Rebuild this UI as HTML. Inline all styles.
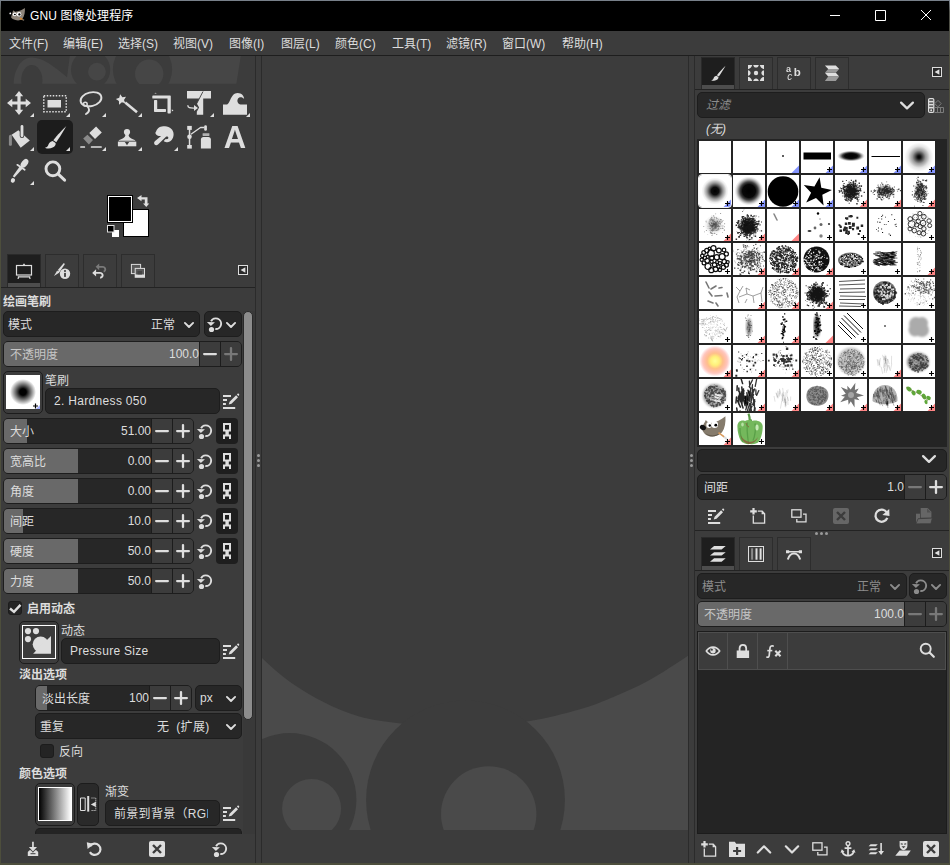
<!DOCTYPE html><html lang="zh-CN"><head><meta charset="utf-8"><title>GNU 图像处理程序</title><style>
html,body{margin:0;padding:0}
body{width:950px;height:865px;position:relative;overflow:hidden;background:#3c3c3c;
font-family:"Liberation Sans","Noto Sans CJK SC",sans-serif;font-size:12px;color:#dddddd}
div{position:absolute;box-sizing:border-box}
.t{height:20px;line-height:20px;white-space:nowrap}
.b{font-weight:bold}
.f{background:#272727;border:1px solid #1d1d1d;border-radius:5px}
.btn{background:#3c3c3c;border-left:1px solid #1c1c1c}
svg{display:block;overflow:visible}
</style></head><body>
<div style="left:0px;top:0px;width:950px;height:865px;background:linear-gradient(#78808a,#50514a 12px,#4d4e3c 60px)"></div>
<div style="left:0px;top:0px;width:950px;height:1px;background:#78808a"></div>
<div style="left:1px;top:1px;width:948px;height:862px;background:#3c3c3c"></div>
<div style="left:1px;top:1px;width:948px;height:30px;background:#000"></div>
<svg style="position:absolute;left:9px;top:7px" width="17" height="14" viewBox="0 0 17 14" fill="#dedede" stroke="none" color="#dedede" ><path d="M4.200 3.200C5.500 4.600 6.600 4.900 7.800 4.500 10.500 4 13.500 3 15.800 1 16.200 4.500 15.600 9 13.300 12 11.500 13.600 8.500 13.800 6.500 13 4.500 12.500 2.800 11.500 2.100 10.200 2.800 8 3.500 5.500 4.200 3.200z" fill="#8f857a"/><circle cx="1.300" cy="6.400" r=".9" fill="#fff"/><circle cx="5.700" cy="7.300" r="1.900" fill="#fff"/><circle cx="10" cy="7.200" r="2.300" fill="#fff"/><ellipse cx="5.900" cy="7.500" rx="1" ry=".8" fill="#000"/><ellipse cx="10.400" cy="7.400" rx="1.100" ry="1.200" fill="#000"/><path d="M11 11.200l2.600 1.500" stroke="#e0892a" stroke-width="1.400"/><path d="M13.400 12.500l1.700 .8" stroke="#8f857a" stroke-width="1.200"/></svg>
<div class="t" style="left:30px;top:6px;color:#fff;letter-spacing:.15px">GNU 图像处理程序</div>
<svg style="position:absolute;left:825px;top:5px" width="115" height="22" viewBox="0 0 115 22" fill="none" stroke="#fff" stroke-width="1"><path d="M5 10.5h10M50.5 5.5h10v10h-10zM96 5l10 10M106 5l-10 10"/></svg>
<div class="t" style="left:9px;top:34px;">文件(F)</div>
<div class="t" style="left:63px;top:34px;">编辑(E)</div>
<div class="t" style="left:118px;top:34px;">选择(S)</div>
<div class="t" style="left:173px;top:34px;">视图(V)</div>
<div class="t" style="left:229px;top:34px;">图像(I)</div>
<div class="t" style="left:281px;top:34px;">图层(L)</div>
<div class="t" style="left:335px;top:34px;">颜色(C)</div>
<div class="t" style="left:392px;top:34px;">工具(T)</div>
<div class="t" style="left:446px;top:34px;">滤镜(R)</div>
<div class="t" style="left:502px;top:34px;">窗口(W)</div>
<div class="t" style="left:562px;top:34px;">帮助(H)</div>
<div style="left:1px;top:55px;width:948px;height:1px;background:#1e1e1e"></div>
<div style="left:255px;top:56px;width:1px;height:807px;background:#2b2b2b"></div>
<div style="left:261px;top:56px;width:1px;height:807px;background:#2b2b2b"></div>
<div style="left:688px;top:56px;width:1px;height:807px;background:#2b2b2b"></div>
<div style="left:694px;top:56px;width:1px;height:807px;background:#2b2b2b"></div>
<div style="left:257px;top:454px;width:3px;height:3px;background:#9a9a9a;border-radius:50%"></div>
<div style="left:257px;top:459px;width:3px;height:3px;background:#9a9a9a;border-radius:50%"></div>
<div style="left:257px;top:464px;width:3px;height:3px;background:#9a9a9a;border-radius:50%"></div>
<div style="left:690px;top:454px;width:3px;height:3px;background:#9a9a9a;border-radius:50%"></div>
<div style="left:690px;top:459px;width:3px;height:3px;background:#9a9a9a;border-radius:50%"></div>
<div style="left:690px;top:464px;width:3px;height:3px;background:#9a9a9a;border-radius:50%"></div>
<svg style="position:absolute;left:262px;top:56px;overflow:hidden" width="426" height="807" viewBox="262 56 426 807"><rect x="262" y="56" width="426" height="774" fill="#4a4a4a"/><path d="M262 56L262 658C270.9 666.3 279.3 674.3 289.7 681.7C300.1 689.1 312.9 696.7 324.5 702.5C336.1 708.3 346.5 712.9 359.2 716.4C371.9 719.9 383.3 721.5 400.9 723.4C418.5 725.2 444.0 727.8 465 727.5C486.0 727.2 508.1 724.5 527.1 721.5C546.1 718.5 564.7 713.6 579.2 709.5C593.7 705.4 602.4 701.5 614 696.7C625.6 691.9 636.4 687.3 648.7 680.5C661.0 673.7 677.1 663.1 688 655.7L688 56z" fill="#3c3c3c"/><circle cx="465.5" cy="800" r="99.4" fill="#3c3c3c"/><circle cx="488.7" cy="813.9" r="47.7" fill="#4a4a4a"/><circle cx="289.7" cy="799.8" r="66.7" fill="#3c3c3c"/><circle cx="311.6" cy="808.5" r="29.5" fill="#4a4a4a"/><rect x="262" y="830" width="426" height="40" fill="#3c3c3c"/></svg>
<svg style="position:absolute;left:1px;top:56px;overflow:hidden" width="254" height="28" viewBox="0 0 254 28" fill="#dedede" stroke="none" color="#dedede" ><path d="M12.7 27.7C12.9 16 19 1.600 30.500 1.600C42 1.600 52 10 66 21.200L68.800 0H239.800L235.400 27.700z" fill="#464646"/><ellipse cx="30.800" cy="24" rx="10.600" ry="15" fill="#3c3c3c"/><circle cx="89.600" cy="13.700" r="19.600" fill="#3c3c3c"/><circle cx="95.900" cy="15.700" r="8.900" fill="#464646"/><circle cx="141.500" cy="13.400" r="29.600" fill="#3c3c3c"/><circle cx="148.200" cy="17.800" r="14.200" fill="#464646"/></svg>
<svg style="position:absolute;left:7px;top:91px" width="24" height="24" viewBox="0 0 24 24" fill="#dedede" stroke="none" color="#dedede" ><path d="M12 0l4.2 5.3h-2.6v5.1h5.1V7.8L24 12l-5.3 4.2v-2.6h-5.1v5.1h2.6L12 24l-4.2-5.3h2.6v-5.1H5.3v2.6L0 12l5.3-4.2v2.6h5.1V5.3H7.8z"/></svg>
<svg style="position:absolute;left:30px;top:113px" width="4" height="4" viewBox="0 0 4 4"><path d="M4 0v4h-4z" fill="#dedede"/></svg>
<svg style="position:absolute;left:43px;top:91px" width="24" height="24" viewBox="0 0 24 24" fill="#dedede" stroke="none" color="#dedede" ><rect x="0.75" y="4.75" width="22.5" height="16" fill="none" stroke="currentColor" stroke-width="1.5" stroke-dasharray="1.5 1.5"/><rect x="4.5" y="9" width="13.5" height="7.5"/></svg>
<svg style="position:absolute;left:66px;top:113px" width="4" height="4" viewBox="0 0 4 4"><path d="M4 0v4h-4z" fill="#dedede"/></svg>
<svg style="position:absolute;left:79px;top:91px" width="24" height="24" viewBox="0 0 24 24" fill="#dedede" stroke="none" color="#dedede" ><g fill="none" stroke="currentColor" stroke-width="1.9" stroke-linecap="round"><ellipse cx="12" cy="8.2" rx="10.6" ry="6.8" transform="rotate(-14 12 8.2)"/><circle cx="6.3" cy="13.2" r="1.9" stroke-width="1.5"/><path d="M7.6 14.8C10.5 17 11.5 20.5 7 23"/></g></svg>
<svg style="position:absolute;left:102px;top:113px" width="4" height="4" viewBox="0 0 4 4"><path d="M4 0v4h-4z" fill="#dedede"/></svg>
<svg style="position:absolute;left:115px;top:91px" width="24" height="24" viewBox="0 0 24 24" fill="#dedede" stroke="none" color="#dedede" ><path d="M6.2 3.2l1.6 3.3 3.6.4-2.6 2.6.7 3.6-3.3-1.7-3.2 1.8.6-3.7L1 7l3.6-.5z" transform="rotate(-12 6.2 8.3)"/><path d="M10.2 11.6L22 21.2" stroke="currentColor" stroke-width="2.6" stroke-linecap="butt"/></svg>
<svg style="position:absolute;left:138px;top:113px" width="4" height="4" viewBox="0 0 4 4"><path d="M4 0v4h-4z" fill="#dedede"/></svg>
<svg style="position:absolute;left:151px;top:91px" width="24" height="24" viewBox="0 0 24 24" fill="#dedede" stroke="none" color="#dedede" ><path d="M2 4.500h17.100a.7 .7 0 0 1 .7 .7v16.500a.7 .7 0 0 1-.7 .7h-1.900a.7 .7 0 0 1-.7-.7V7.600H2a.7 .7 0 0 1-.7-.7v-1.700a.7 .7 0 0 1 .7-.7z"/><path d="M3.700 8.900h1.800a.7 .7 0 0 1 .7 .7v8.300h8.100a.7 .7 0 0 1 .7 .7v1.600a.7 .7 0 0 1-.7 .7H3.700a.7 .7 0 0 1-.7-.7V9.600a.7 .7 0 0 1 .7-.7z"/><path d="M3.300 2.600l1.250-.9 1.250 .9zM20.800 18.300l1.700 1.100-1.700 1.100z"/></svg>
<svg style="position:absolute;left:187px;top:91px" width="24" height="24" viewBox="0 0 24 24" fill="#dedede" stroke="none" color="#dedede" ><path d="M0 0h24v7.5h-7.8v16.3H9.8v-3l2.3-4.3-2.3-4 2.6-5H0z"/><path d="M16 0.5L9.4 13.2" stroke="#3c3c3c" stroke-width="0.9" fill="none"/><path d="M0.8 14.2c0.2 2.6 2 3 6.5 2.9" fill="none" stroke="currentColor" stroke-width="1.4"/><path d="M7 13.9l4 3-4 3z"/></svg>
<svg style="position:absolute;left:210px;top:113px" width="4" height="4" viewBox="0 0 4 4"><path d="M4 0v4h-4z" fill="#dedede"/></svg>
<svg style="position:absolute;left:223px;top:91px" width="24" height="24" viewBox="0 0 24 24" fill="#dedede" stroke="none" color="#dedede" ><path d="M0 13.6h3.6C7.2 13.6 7.4 2 14.6 2c4 0 6.4 2.8 6.5 5.9-1.600-1.900-5.100-2.400-6.400 .3-1.100 2.600 .8 5.400 4.100 5.400H24v10.200H0z"/></svg>
<svg style="position:absolute;left:246px;top:113px" width="4" height="4" viewBox="0 0 4 4"><path d="M4 0v4h-4z" fill="#dedede"/></svg>
<svg style="position:absolute;left:7px;top:125px" width="24" height="24" viewBox="0 0 24 24" fill="#dedede" stroke="none" color="#dedede" ><path d="M4.700 9.900C1.900 9.600 1.900 11 1.900 12.500v7.300c0 1.400 3 1.400 3-.1v-7z" fill="#8a8a8a"/><path d="M4.600 9.800l6.800-4.600 11.400 10.300-9.100 7.200z"/><rect x="12.700" y="-0.300" width="4.600" height="13.400" rx="2.300" fill="#3c3c3c"/><rect x="13.600" y="0" width="2.800" height="12.200" rx="1.400"/></svg>
<svg style="position:absolute;left:30px;top:147px" width="4" height="4" viewBox="0 0 4 4"><path d="M4 0v4h-4z" fill="#dedede"/></svg>
<div style="left:37px;top:120px;width:36px;height:34px;background:#1c1c1c;border-radius:5px"></div>
<svg style="position:absolute;left:43px;top:125px" width="24" height="24" viewBox="0 0 24 24" fill="#dedede" stroke="none" color="#dedede" ><path d="M23.300 1c-3.500 3.500-9.500 9.500-13 14.300l3 1.900C16.500 12.500 21 5.500 23.300 1z"/><path d="M9.600 16.100c-2.900 .5-3.800 2.500-4.500 4.400-.5 1.300-1.600 2-3.300 2.200 2.600 1.300 5.700 1 7.800-.1 2.300-1.200 3.500-3 3-4.700z"/></svg>
<svg style="position:absolute;left:66px;top:147px" width="4" height="4" viewBox="0 0 4 4"><path d="M4 0v4h-4z" fill="#dedede"/></svg>
<svg style="position:absolute;left:79px;top:125px" width="24" height="24" viewBox="0 0 24 24" fill="#dedede" stroke="none" color="#dedede" ><path d="M17.100 1.400l5.700 6.100-6.800 6.500-5.700-6.100z"/><path d="M8.400 9.800l5.600 5.300-4.100 4.500-5.700-6z" fill="#8a8a8a"/><rect x="1.200" y="21.200" width="4.900" height="1.600" rx=".5"/><rect x="11.800" y="21.200" width="11" height="1.600" rx=".5"/></svg>
<svg style="position:absolute;left:102px;top:147px" width="4" height="4" viewBox="0 0 4 4"><path d="M4 0v4h-4z" fill="#dedede"/></svg>
<svg style="position:absolute;left:115px;top:125px" width="24" height="24" viewBox="0 0 24 24" fill="#dedede" stroke="none" color="#dedede" ><circle cx="12" cy="7.100" r="3.100"/><path d="M10.300 9h3.400c-.3 2 .3 3.300 2.600 4.400l3.900 1.800v.600H3.800v-.6l3.900-1.800c2.300-1.100 2.900-2.400 2.600-4.400z"/><path d="M2.900 16.600h18.400v4.700H2.900z"/><path d="M9.800 16.900h4.400l-2.200 3.300z" fill="#3c3c3c"/></svg>
<svg style="position:absolute;left:138px;top:147px" width="4" height="4" viewBox="0 0 4 4"><path d="M4 0v4h-4z" fill="#dedede"/></svg>
<svg style="position:absolute;left:151px;top:125px" width="24" height="24" viewBox="0 0 24 24" fill="#dedede" stroke="none" color="#dedede" ><path d="M5.200 6.200C6.500 2.500 10 1.200 14 1.300c5 .2 8.600 3.500 8.600 8 0 4.200-2.500 7.600-6.500 7.900-1.500.1-2.700-.3-3.400-1.100l2-2.100c1.800.5 2.800-.4 2.600-1.500-.2-1-1.300-1.300-2.300-.8L7 19.500c-1.100 1-2.600.9-3.400-.1-.8-1-.6-2.400.5-3.300l6-5.100c-2.500.3-4.600-.7-5.500-2.300-.3-.6-.2-1.200.1-1.600.1-.3.300-.6.500-.9z"/></svg>
<svg style="position:absolute;left:174px;top:147px" width="4" height="4" viewBox="0 0 4 4"><path d="M4 0v4h-4z" fill="#dedede"/></svg>
<svg style="position:absolute;left:187px;top:125px" width="24" height="24" viewBox="0 0 24 24" fill="#dedede" stroke="none" color="#dedede" ><rect x="0.200" y="0.900" width="4.600" height="4" /><rect x="0.200" y="20" width="4.600" height="3.600"/><rect x="1.800" y="4" width="1.500" height="17"/><circle cx="2.500" cy="11.800" r="2.300"/><path d="M4 9.300L13.500 2.500H17.500" fill="none" stroke="currentColor" stroke-width="1.300" stroke-linejoin="round"/><rect x="17.200" y=".3" width="2.700" height="5.400" rx="1.300"/><rect x="15.600" y="8.200" width="6.800" height="2.800" rx=".4" fill="#b0b0b0"/><path d="M13.900 14.500c0-1.400 1.100-2.500 2.500-2.500h5c1.400 0 2.500 1.100 2.500 2.500v8.900h-10z"/></svg>
<svg style="position:absolute;left:223px;top:125px;filter:grayscale(1)" width="24" height="24" viewBox="0 0 24 24" fill="#dedede" stroke="none" color="#dedede" ><text x="12" y="22.900" text-anchor="middle" font-family="Liberation Sans,sans-serif" font-weight="bold" font-size="31" fill="currentColor">A</text></svg>
<svg style="position:absolute;left:7px;top:159px" width="24" height="24" viewBox="0 0 24 24" fill="#dedede" stroke="none" color="#dedede" ><ellipse cx="17.500" cy="4.300" rx="4.900" ry="3" transform="rotate(-52 17.500 4.300)"/><path d="M10.300 5.800l7.400 5" stroke="currentColor" stroke-width="1.700" stroke-linecap="round"/><path d="M12.700 7.600l3 2-8.300 8.800-1.600-1.100z"/><ellipse cx="5.900" cy="21.400" rx="2.100" ry="2.400" transform="rotate(20 5.900 21.400)"/></svg>
<svg style="position:absolute;left:30px;top:181px" width="4" height="4" viewBox="0 0 4 4"><path d="M4 0v4h-4z" fill="#dedede"/></svg>
<svg style="position:absolute;left:43px;top:159px" width="24" height="24" viewBox="0 0 24 24" fill="#dedede" stroke="none" color="#dedede" ><circle cx="9.900" cy="9.800" r="6.900" fill="none" stroke="currentColor" stroke-width="2.900"/><path d="M15.300 15.200l6.300 5.900" stroke="currentColor" stroke-width="3" stroke-linecap="round"/></svg>
<div style="left:123px;top:209px;width:26px;height:28px;background:#fff;border:1px solid #000"></div>
<div style="left:107px;top:195px;width:26px;height:28px;background:#000;border:1px solid #000;box-shadow:inset 0 0 0 1px #fff"></div>
<svg style="position:absolute;left:137px;top:195px" width="12" height="12" viewBox="0 0 12 12" fill="#dedede" stroke="none" color="#dedede" ><path d="M0 3.100l4.500-3.100v2.200h6v6.300h1.700l-2.900 3.600-3.300-3.600h1.800v-4.100H4.500v1.800z"/></svg>
<svg style="position:absolute;left:107px;top:225px" width="12" height="12" viewBox="0 0 12 12" fill="#dedede" stroke="none" color="#dedede" ><rect x="5" y="5" width="7" height="7" fill="#fff"/><rect x="0.500" y="0.500" width="6.500" height="6.500" fill="#000" stroke="#ddd" stroke-width="1"/></svg>
<div style="left:7px;top:254px;width:34px;height:33px;background:#1e1e1e;border:1px solid #2a2a2a;border-bottom:none"></div>
<div style="left:8px;top:283px;width:32px;height:4px;background:#4d4d4d"></div>
<svg style="position:absolute;left:16px;top:263px" width="16" height="16" viewBox="0 0 16 16" fill="#dedede" stroke="none" color="#dedede" ><rect x="0.500" y="2.500" width="15" height="9.500" fill="none" stroke="currentColor" stroke-width="1.200"/><path d="M6.800 2l1.200-1.800 1.200 1.800zM1.800 13.300h12.500v1.200H1.800zM2.300 13.300h1.200l-.9 2.800H1.400zM12.600 13.300h1.200l.9 2.800h-1.200z"/></svg>
<div style="left:45px;top:254px;width:34px;height:33px;border:1px solid #2d2d2d;border-bottom:none"></div>
<svg style="position:absolute;left:54px;top:263px" width="16" height="16" viewBox="0 0 16 16" fill="#dedede" stroke="none" color="#dedede" ><path d="M9.800 0l1.100 .9-5.800 8.800L0 12.900l2.800-4.700z"/><circle cx="3.900" cy="7.600" r=".7" fill="#3c3c3c"/><circle cx="11" cy="10.800" r="5.200"/><rect x="10.100" y="9.900" width="1.800" height="4" fill="#3c3c3c"/><circle cx="11" cy="8" r="1.050" fill="#3c3c3c"/></svg>
<div style="left:83px;top:254px;width:34px;height:33px;border:1px solid #2d2d2d;border-bottom:none"></div>
<svg style="position:absolute;left:92px;top:263px" width="16" height="16" viewBox="0 0 16 16" fill="#dedede" stroke="none" color="#dedede" ><g fill="#7a7a7a"><path d="M3.600 3.800l3.600-3.400v2.500h3.200c2.300 0 3.800 1.600 3.800 3.400 0 1.500-.9 2.700-2.300 3.100l-.5-1.700c.6-.2 1-.7 1-1.400 0-.9-.7-1.500-1.900-1.500H7.200v2.400z"/></g><path d="M0.200 9.900l3.900-3.600v2.600h3.600c2.400 0 3.900 1.500 3.900 3.400 0 1.800-1.300 3.300-3.400 3.400l-.1-1.900c1-.1 1.600-.7 1.600-1.500 0-.9-.7-1.500-1.900-1.500H4.100v2.700z"/></svg>
<div style="left:121px;top:254px;width:34px;height:33px;border:1px solid #2d2d2d;border-bottom:none"></div>
<svg style="position:absolute;left:130px;top:263px" width="16" height="16" viewBox="0 0 16 16" fill="#dedede" stroke="none" color="#dedede" ><rect x="1.400" y="1.400" width="9.200" height="9.200" fill="#5a5a5a" stroke="currentColor" stroke-width="1"/><rect x="4.700" y="4.900" width="10.300" height="9.900" fill="currentColor"/><rect x="5.700" y="5.900" width="8.300" height="5.600" fill="#5a5a5a"/><path d="M7.500 8h4.500v3.500H7.500z" fill="#444"/></svg>
<svg style="position:absolute;left:238px;top:265px" width="10" height="10" viewBox="0 0 10 10" fill="#dedede" stroke="none" color="#dedede" ><rect x="0.500" y="0.500" width="9" height="9" fill="#2a2a2a" stroke="currentColor" stroke-width="1"/><path d="M2.600 5L7.400 2.200v5.600z"/></svg>
<div style="left:1px;top:287px;width:254px;height:1px;background:#232323"></div>
<div class="t b" style="left:3px;top:292px;">绘画笔刷</div>
<div class="f" style="left:3px;top:311px;width:197px;height:26px;"></div>
<div class="t" style="left:8px;top:315px;">模式</div>
<div class="t" style="left:151px;top:315px;">正常</div>
<svg style="position:absolute;left:184px;top:322px" width="10" height="6" viewBox="0 0 10 6" fill="#dedede" stroke="none" color="#dedede" ><path d="M0.900 0.900L5 5l4.100-4.100" fill="none" stroke="currentColor" stroke-width="1.900" stroke-linecap="round" stroke-linejoin="round"/></svg>
<div class="f" style="left:204px;top:311px;width:38px;height:26px;"></div>
<svg style="position:absolute;left:207px;top:316px" width="16" height="16" viewBox="0 0 16 16" fill="#dedede" stroke="none" color="#dedede" ><path d="M4.050 5.230A5.350 5.350 0 1 1 8.330 13.030" fill="none" stroke="currentColor" stroke-width="1.900"/><path d="M-.1 6.100l8 .2-4 3.700z"/><circle cx="4.500" cy="13.500" r="2.600"/></svg>
<svg style="position:absolute;left:226px;top:322px" width="10" height="6" viewBox="0 0 10 6" fill="#dedede" stroke="none" color="#dedede" ><path d="M0.900 0.900L5 5l4.100-4.100" fill="none" stroke="currentColor" stroke-width="1.900" stroke-linecap="round" stroke-linejoin="round"/></svg>
<div style="left:243px;top:311px;width:12px;height:523px;background:#393939"></div>
<div style="left:243px;top:311px;width:10px;height:409px;background:#8c8c8c;border:1px solid #292929;border-radius:5px"></div>
<div class="f" style="left:3px;top:341px;width:239px;height:26px;overflow:hidden"><div style="left:0;top:0;height:24px;width:196px;background:#696969"></div><div class="btn" style="right:21px;top:0;width:21px;height:24px"></div><div class="btn" style="right:0;top:0;width:21px;height:24px"></div></div>
<div class="t" style="left:10px;top:345px;color:#c6c6c6">不透明度</div>
<div class="t" style="right:751px;top:344px;color:#dddddd">100.0</div>
<svg style="position:absolute;left:199px;top:341px" width="43" height="26" viewBox="0 0 43 26"><rect x="4.0" y="11.9" width="14" height="2.3" rx="1.1" fill="#dedede"/><rect x="25.0" y="11.9" width="14" height="2.3" rx="1.1" fill="#787878"/><rect x="30.85" y="6" width="2.3" height="14" rx="1.1" fill="#787878"/></svg>
<div style="left:3px;top:371px;width:40px;height:43px;border:1px solid #1c1c1c;border-radius:5px;background:#3c3c3c"></div>
<svg style="position:absolute;left:6px;top:375px" width="34" height="34" viewBox="0 0 34 34"><defs><radialGradient id="h50"><stop offset="0" stop-color="#000"/><stop offset="0.25" stop-color="#000"/><stop offset="1" stop-color="#000" stop-opacity="0"/></radialGradient></defs><rect width="34" height="34" fill="#fff"/><circle cx="17" cy="17" r="13" fill="url(#h50)"/><path d="M27 31h5M29.5 28.5v5" stroke="#000" stroke-width="1.2"/><path d="M34 30v4h-4z" fill="#8090ff" opacity=".7"/></svg>
<div class="t" style="left:45px;top:371px;">笔刷</div>
<div class="f" style="left:45px;top:388px;width:175px;height:26px;"></div>
<div class="t" style="left:54px;top:391px;letter-spacing:.32px">2. Hardness 050</div>
<svg style="position:absolute;left:223px;top:393px" width="16" height="16" viewBox="0 0 16 16" fill="#dedede" stroke="none" color="#dedede" ><path d="M0 2h8v2H0zM0 6h4v2H0zM0 10h2.900v2H0zM0 14h12.200v2H0z"/><path d="M5.700 11.600l.9-2.800 6.500-6.500 1.900 1.900-6.500 6.500zM13.900 1.500l.7-.7c.3-.3.800-.3 1.100 0l.4.400c.3.300.3.800 0 1.100l-.7.700z"/></svg>
<div class="f" style="left:3px;top:418px;width:191px;height:26px;overflow:hidden"><div style="left:0;top:0;height:24px;width:23px;background:#696969"></div><div class="btn" style="right:21px;top:0;width:21px;height:24px"></div><div class="btn" style="right:0;top:0;width:21px;height:24px"></div></div>
<div class="t" style="left:10px;top:422px;color:#dddddd">大小</div>
<div class="t" style="right:799px;top:421px;color:#dddddd">51.00</div>
<svg style="position:absolute;left:151px;top:418px" width="43" height="26" viewBox="0 0 43 26"><rect x="4.0" y="11.9" width="14" height="2.3" rx="1.1" fill="#dedede"/><rect x="25.0" y="11.9" width="14" height="2.3" rx="1.1" fill="#dedede"/><rect x="30.85" y="6" width="2.3" height="14" rx="1.1" fill="#dedede"/></svg>
<svg style="position:absolute;left:197px;top:423px" width="16" height="16" viewBox="0 0 16 16" fill="#dedede" stroke="none" color="#dedede" ><path d="M4.050 5.230A5.350 5.350 0 1 1 8.330 13.030" fill="none" stroke="currentColor" stroke-width="1.900"/><path d="M-.1 6.100l8 .2-4 3.700z"/><circle cx="4.500" cy="13.500" r="2.600"/></svg>
<div style="left:216px;top:418px;width:22px;height:26px;background:#1e1e1e;border-radius:4px"></div>
<svg style="position:absolute;left:219px;top:423px" width="16" height="16" viewBox="0 0 16 16" fill="#dedede" stroke="none" color="#dedede" ><path d="M4 0h8v8.600H9.800v2.900H12V16h-2v-2.500H6V16H4v-4.500h2.400V8.600H4zM6 2v4.600h4V2z" fill-rule="evenodd"/></svg>
<div class="f" style="left:3px;top:448px;width:191px;height:26px;overflow:hidden"><div style="left:0;top:0;height:24px;width:74px;background:#696969"></div><div class="btn" style="right:21px;top:0;width:21px;height:24px"></div><div class="btn" style="right:0;top:0;width:21px;height:24px"></div></div>
<div class="t" style="left:10px;top:452px;color:#dddddd">宽高比</div>
<div class="t" style="right:799px;top:451px;color:#dddddd">0.00</div>
<svg style="position:absolute;left:151px;top:448px" width="43" height="26" viewBox="0 0 43 26"><rect x="4.0" y="11.9" width="14" height="2.3" rx="1.1" fill="#dedede"/><rect x="25.0" y="11.9" width="14" height="2.3" rx="1.1" fill="#dedede"/><rect x="30.85" y="6" width="2.3" height="14" rx="1.1" fill="#dedede"/></svg>
<svg style="position:absolute;left:197px;top:453px" width="16" height="16" viewBox="0 0 16 16" fill="#dedede" stroke="none" color="#dedede" ><path d="M4.050 5.230A5.350 5.350 0 1 1 8.330 13.030" fill="none" stroke="currentColor" stroke-width="1.900"/><path d="M-.1 6.100l8 .2-4 3.700z"/><circle cx="4.500" cy="13.500" r="2.600"/></svg>
<div style="left:216px;top:448px;width:22px;height:26px;background:#1e1e1e;border-radius:4px"></div>
<svg style="position:absolute;left:219px;top:453px" width="16" height="16" viewBox="0 0 16 16" fill="#dedede" stroke="none" color="#dedede" ><path d="M4 0h8v8.600H9.800v2.900H12V16h-2v-2.500H6V16H4v-4.500h2.400V8.600H4zM6 2v4.600h4V2z" fill-rule="evenodd"/></svg>
<div class="f" style="left:3px;top:478px;width:191px;height:26px;overflow:hidden"><div style="left:0;top:0;height:24px;width:74px;background:#696969"></div><div class="btn" style="right:21px;top:0;width:21px;height:24px"></div><div class="btn" style="right:0;top:0;width:21px;height:24px"></div></div>
<div class="t" style="left:10px;top:482px;color:#dddddd">角度</div>
<div class="t" style="right:799px;top:481px;color:#dddddd">0.00</div>
<svg style="position:absolute;left:151px;top:478px" width="43" height="26" viewBox="0 0 43 26"><rect x="4.0" y="11.9" width="14" height="2.3" rx="1.1" fill="#dedede"/><rect x="25.0" y="11.9" width="14" height="2.3" rx="1.1" fill="#dedede"/><rect x="30.85" y="6" width="2.3" height="14" rx="1.1" fill="#dedede"/></svg>
<svg style="position:absolute;left:197px;top:483px" width="16" height="16" viewBox="0 0 16 16" fill="#dedede" stroke="none" color="#dedede" ><path d="M4.050 5.230A5.350 5.350 0 1 1 8.330 13.030" fill="none" stroke="currentColor" stroke-width="1.900"/><path d="M-.1 6.100l8 .2-4 3.700z"/><circle cx="4.500" cy="13.500" r="2.600"/></svg>
<div style="left:216px;top:478px;width:22px;height:26px;background:#1e1e1e;border-radius:4px"></div>
<svg style="position:absolute;left:219px;top:483px" width="16" height="16" viewBox="0 0 16 16" fill="#dedede" stroke="none" color="#dedede" ><path d="M4 0h8v8.600H9.800v2.900H12V16h-2v-2.500H6V16H4v-4.500h2.400V8.600H4zM6 2v4.600h4V2z" fill-rule="evenodd"/></svg>
<div class="f" style="left:3px;top:508px;width:191px;height:26px;overflow:hidden"><div style="left:0;top:0;height:24px;width:19px;background:#696969"></div><div class="btn" style="right:21px;top:0;width:21px;height:24px"></div><div class="btn" style="right:0;top:0;width:21px;height:24px"></div></div>
<div class="t" style="left:10px;top:512px;color:#dddddd">间距</div>
<div class="t" style="right:799px;top:511px;color:#dddddd">10.0</div>
<svg style="position:absolute;left:151px;top:508px" width="43" height="26" viewBox="0 0 43 26"><rect x="4.0" y="11.9" width="14" height="2.3" rx="1.1" fill="#dedede"/><rect x="25.0" y="11.9" width="14" height="2.3" rx="1.1" fill="#dedede"/><rect x="30.85" y="6" width="2.3" height="14" rx="1.1" fill="#dedede"/></svg>
<svg style="position:absolute;left:197px;top:513px" width="16" height="16" viewBox="0 0 16 16" fill="#dedede" stroke="none" color="#dedede" ><path d="M4.050 5.230A5.350 5.350 0 1 1 8.330 13.030" fill="none" stroke="currentColor" stroke-width="1.900"/><path d="M-.1 6.100l8 .2-4 3.700z"/><circle cx="4.500" cy="13.500" r="2.600"/></svg>
<div style="left:216px;top:508px;width:22px;height:26px;background:#1e1e1e;border-radius:4px"></div>
<svg style="position:absolute;left:219px;top:513px" width="16" height="16" viewBox="0 0 16 16" fill="#dedede" stroke="none" color="#dedede" ><path d="M4 0h8v8.600H9.800v2.900H12V16h-2v-2.500H6V16H4v-4.500h2.400V8.600H4zM6 2v4.600h4V2z" fill-rule="evenodd"/></svg>
<div class="f" style="left:3px;top:538px;width:191px;height:26px;overflow:hidden"><div style="left:0;top:0;height:24px;width:74px;background:#696969"></div><div class="btn" style="right:21px;top:0;width:21px;height:24px"></div><div class="btn" style="right:0;top:0;width:21px;height:24px"></div></div>
<div class="t" style="left:10px;top:542px;color:#dddddd">硬度</div>
<div class="t" style="right:799px;top:541px;color:#dddddd">50.0</div>
<svg style="position:absolute;left:151px;top:538px" width="43" height="26" viewBox="0 0 43 26"><rect x="4.0" y="11.9" width="14" height="2.3" rx="1.1" fill="#dedede"/><rect x="25.0" y="11.9" width="14" height="2.3" rx="1.1" fill="#dedede"/><rect x="30.85" y="6" width="2.3" height="14" rx="1.1" fill="#dedede"/></svg>
<svg style="position:absolute;left:197px;top:543px" width="16" height="16" viewBox="0 0 16 16" fill="#dedede" stroke="none" color="#dedede" ><path d="M4.050 5.230A5.350 5.350 0 1 1 8.330 13.030" fill="none" stroke="currentColor" stroke-width="1.900"/><path d="M-.1 6.100l8 .2-4 3.700z"/><circle cx="4.500" cy="13.500" r="2.600"/></svg>
<div style="left:216px;top:538px;width:22px;height:26px;background:#1e1e1e;border-radius:4px"></div>
<svg style="position:absolute;left:219px;top:543px" width="16" height="16" viewBox="0 0 16 16" fill="#dedede" stroke="none" color="#dedede" ><path d="M4 0h8v8.600H9.800v2.900H12V16h-2v-2.500H6V16H4v-4.500h2.400V8.600H4zM6 2v4.600h4V2z" fill-rule="evenodd"/></svg>
<div class="f" style="left:3px;top:568px;width:191px;height:26px;overflow:hidden"><div style="left:0;top:0;height:24px;width:74px;background:#696969"></div><div class="btn" style="right:21px;top:0;width:21px;height:24px"></div><div class="btn" style="right:0;top:0;width:21px;height:24px"></div></div>
<div class="t" style="left:10px;top:572px;color:#dddddd">力度</div>
<div class="t" style="right:799px;top:571px;color:#dddddd">50.0</div>
<svg style="position:absolute;left:151px;top:568px" width="43" height="26" viewBox="0 0 43 26"><rect x="4.0" y="11.9" width="14" height="2.3" rx="1.1" fill="#dedede"/><rect x="25.0" y="11.9" width="14" height="2.3" rx="1.1" fill="#dedede"/><rect x="30.85" y="6" width="2.3" height="14" rx="1.1" fill="#dedede"/></svg>
<svg style="position:absolute;left:197px;top:573px" width="16" height="16" viewBox="0 0 16 16" fill="#dedede" stroke="none" color="#dedede" ><path d="M4.050 5.230A5.350 5.350 0 1 1 8.330 13.030" fill="none" stroke="currentColor" stroke-width="1.900"/><path d="M-.1 6.100l8 .2-4 3.700z"/><circle cx="4.500" cy="13.500" r="2.600"/></svg>
<div style="left:8px;top:601px;width:14px;height:14px;background:#242424;border:1px solid #1c1c1c;border-radius:3px"></div>
<svg style="position:absolute;left:9px;top:602px" width="12" height="12" viewBox="0 0 12 12" fill="#dedede" stroke="none" color="#dedede" ><path d="M1 6.500l4 3.400 6.500-7" fill="none" stroke="currentColor" stroke-width="2.400"/></svg>
<div class="t b" style="left:27px;top:599px;">启用动态</div>
<div style="left:19px;top:621px;width:40px;height:43px;border:1px solid #1c1c1c;border-radius:5px"></div>
<svg style="position:absolute;left:22px;top:625px" width="34" height="34" viewBox="0 0 34 34" fill="#dedede" stroke="none" color="#dedede" ><rect x="0.500" y="0.500" width="33" height="33" fill="#3c3c3c" stroke="#fff" stroke-width="1"/><circle cx="6" cy="6.100" r="3.100"/><circle cx="14" cy="6.100" r="3.100"/><circle cx="6" cy="14.100" r="3.100"/><circle cx="18.600" cy="19.300" r="7.900"/><path d="M29 11v17.800H11.100l3.400-3.600 6-6z"/></svg>
<div class="t" style="left:61px;top:621px;">动态</div>
<div class="f" style="left:61px;top:638px;width:159px;height:26px;"></div>
<div class="t" style="left:70px;top:641px;letter-spacing:.3px">Pressure Size</div>
<svg style="position:absolute;left:223px;top:643px" width="16" height="16" viewBox="0 0 16 16" fill="#dedede" stroke="none" color="#dedede" ><path d="M0 2h8v2H0zM0 6h4v2H0zM0 10h2.900v2H0zM0 14h12.200v2H0z"/><path d="M5.700 11.600l.9-2.800 6.500-6.500 1.900 1.900-6.500 6.500zM13.900 1.500l.7-.7c.3-.3.800-.3 1.100 0l.4.400c.3.300.3.800 0 1.100l-.7.700z"/></svg>
<div class="t b" style="left:19px;top:665px;">淡出选项</div>
<div class="f" style="left:35px;top:685px;width:157px;height:26px;overflow:hidden"><div style="left:0;top:0;height:24px;width:11px;background:#696969"></div><div class="btn" style="right:21px;top:0;width:21px;height:24px"></div><div class="btn" style="right:0;top:0;width:21px;height:24px"></div></div>
<div class="t" style="left:42px;top:689px;color:#dddddd">淡出长度</div>
<div class="t" style="right:801px;top:688px;color:#dddddd">100</div>
<svg style="position:absolute;left:149px;top:685px" width="43" height="26" viewBox="0 0 43 26"><rect x="4.0" y="11.9" width="14" height="2.3" rx="1.1" fill="#dedede"/><rect x="25.0" y="11.9" width="14" height="2.3" rx="1.1" fill="#dedede"/><rect x="30.85" y="6" width="2.3" height="14" rx="1.1" fill="#dedede"/></svg>
<div class="f" style="left:195px;top:685px;width:47px;height:26px;"></div>
<div class="t" style="left:200px;top:688px;">px</div>
<svg style="position:absolute;left:226px;top:696px" width="10" height="6" viewBox="0 0 10 6" fill="#dedede" stroke="none" color="#dedede" ><path d="M0.900 0.900L5 5l4.100-4.100" fill="none" stroke="currentColor" stroke-width="1.900" stroke-linecap="round" stroke-linejoin="round"/></svg>
<div class="f" style="left:35px;top:713px;width:207px;height:26px;"></div>
<div class="t" style="left:40px;top:717px;">重复</div>
<div class="t" style="left:157px;top:717px;word-spacing:3px;letter-spacing:.4px">无 (扩展)</div>
<svg style="position:absolute;left:226px;top:724px" width="10" height="6" viewBox="0 0 10 6" fill="#dedede" stroke="none" color="#dedede" ><path d="M0.900 0.900L5 5l4.100-4.100" fill="none" stroke="currentColor" stroke-width="1.900" stroke-linecap="round" stroke-linejoin="round"/></svg>
<div style="left:40px;top:744px;width:14px;height:14px;background:#242424;border:1px solid #1c1c1c;border-radius:3px"></div>
<div class="t" style="left:59px;top:742px;">反向</div>
<div class="t b" style="left:19px;top:764px;">颜色选项</div>
<div style="left:35px;top:783px;width:40px;height:43px;border:1px solid #1c1c1c;border-radius:5px"></div>
<div style="left:38px;top:787px;width:34px;height:34px;border:1px solid #fff;background:linear-gradient(90deg,#000,#fff)"></div>
<div style="left:77px;top:783px;width:22px;height:43px;background:#2a2a2a;border:1px solid #1c1c1c;border-radius:5px"></div>
<svg style="position:absolute;left:80px;top:796px" width="16" height="16" viewBox="0 0 16 16" fill="#dedede" stroke="none" color="#dedede" ><path d="M0.500 2h4.700v12.500H0.500z" fill="none" stroke="currentColor" stroke-width="1"/><rect x="7.200" y="0" width="2" height="15.600"/><path d="M11.500 2h4.300v12.500h-4.300" fill="none" stroke="currentColor" stroke-width="1" stroke-dasharray="1 1"/><path d="M10.800 8.400l5-2.600v5.200z"/></svg>
<div class="t" style="left:105px;top:782px;">渐变</div>
<div class="f" style="left:105px;top:800px;width:115px;height:26px;"><div class="t" style="left:8px;top:3px;width:94px;overflow:hidden;letter-spacing:.3px">前景到背景（RGB）</div></div>
<svg style="position:absolute;left:223px;top:805px" width="16" height="16" viewBox="0 0 16 16" fill="#dedede" stroke="none" color="#dedede" ><path d="M0 2h8v2H0zM0 6h4v2H0zM0 10h2.900v2H0zM0 14h12.200v2H0z"/><path d="M5.700 11.600l.9-2.800 6.500-6.500 1.900 1.900-6.500 6.500zM13.900 1.500l.7-.7c.3-.3.800-.3 1.100 0l.4.400c.3.300.3.800 0 1.100l-.7.700z"/></svg>
<div style="left:35px;top:828px;width:207px;height:6px;background:#242424;border:1px solid #1c1c1c;border-bottom:none;border-radius:5px 5px 0 0"></div>
<svg style="position:absolute;left:25px;top:841px" width="16" height="16" viewBox="0 0 16 16" fill="#dedede" stroke="none" color="#dedede" ><path d="M7.100 .7h1.700v5.400h3.200L7.950 10.600 3.900 6.100h3.200z"/><path d="M2.800 15.100V11l1.700-1.800h1.300l2.150 2.500 2.150-2.500h1.300L13.200 11v4.100z"/><path d="M5.500 12.200h5v1H5.500z" fill="#3c3c3c"/></svg>
<svg style="position:absolute;left:86px;top:841px" width="16" height="16" viewBox="0 0 16 16" fill="#dedede" stroke="none" color="#dedede" ><path d="M4.170 5.060A5.650 5.650 0 1 1 3.900 11.100" fill="none" stroke="currentColor" stroke-width="2.200"/><path d="M.8 1.200l7.200 1.700-6.400 5.200z"/></svg>
<svg style="position:absolute;left:149px;top:841px" width="16" height="16" viewBox="0 0 16 16" fill="#dedede" stroke="none" color="#dedede" ><rect x="0" y="0" width="16" height="16" rx="2"/><path d="M4 4l8 8M12 4l-8 8" stroke="#3c3c3c" stroke-width="2.400"/></svg>
<svg style="position:absolute;left:212px;top:841px" width="16" height="16" viewBox="0 0 16 16" fill="#dedede" stroke="none" color="#dedede" ><path d="M4.050 5.230A5.350 5.350 0 1 1 8.330 13.030" fill="none" stroke="currentColor" stroke-width="1.900"/><path d="M-.1 6.100l8 .2-4 3.700z"/><circle cx="4.500" cy="13.500" r="2.600"/></svg>
<div style="left:701px;top:57px;width:34px;height:32px;background:#1e1e1e;border:1px solid #2a2a2a;border-bottom:none"></div>
<div style="left:702px;top:85px;width:32px;height:4px;background:#4d4d4d"></div>
<svg style="position:absolute;left:710px;top:65px" width="16" height="16" viewBox="0 0 24 24" fill="#dedede" stroke="none" color="#dedede" ><path d="M23.300 1c-3.500 3.500-9.500 9.500-13 14.300l3 1.900C16.500 12.500 21 5.500 23.300 1z"/><path d="M9.600 16.100c-2.900 .5-3.800 2.500-4.500 4.400-.5 1.300-1.600 2-3.300 2.200 2.600 1.300 5.700 1 7.800-.1 2.300-1.200 3.500-3 3-4.700z"/></svg>
<div style="left:739px;top:57px;width:34px;height:32px;border:1px solid #2d2d2d;border-bottom:none"></div>
<svg style="position:absolute;left:748px;top:65px" width="16" height="16" viewBox="0 0 16 16" fill="#dedede" stroke="none" color="#dedede" ><path d="M0 0h4.200C3.600 2.200 2.200 3.600 0 4.200zM16 0v4.200C13.800 3.600 12.400 2.200 11.800 0zM0 16v-4.200c2.200.6 3.600 2 4.200 4.200zM16 16h-4.200c.6-2.200 2-3.600 4.200-4.200zM5.200 0h5.600c-.3 1.600-1.400 2.600-2.800 2.600S5.500 1.600 5.200 0zM5.200 16h5.600c-.3-1.600-1.400-2.600-2.800-2.600s-2.500 1-2.800 2.600zM0 5.200v5.600c1.600-.3 2.600-1.400 2.600-2.800S1.600 5.500 0 5.200zM16 5.200v5.600c-1.600-.3-2.600-1.400-2.600-2.800s1-2.500 2.600-2.800z"/><circle cx="8" cy="8" r="2.200"/></svg>
<div style="left:777px;top:57px;width:34px;height:32px;border:1px solid #2d2d2d;border-bottom:none"></div>
<svg style="position:absolute;left:786px;top:65px;filter:grayscale(1)" width="16" height="16" viewBox="0 0 16 16" fill="#dedede" stroke="none" color="#dedede" ><text x="0" y="6.800" font-family="Liberation Sans,sans-serif" font-weight="bold" font-size="9" fill="currentColor">a</text><text x="1.200" y="14.800" font-family="Liberation Sans,sans-serif" font-style="italic" font-size="10" fill="currentColor">c</text><text x="7.800" y="11.300" font-family="Liberation Sans,sans-serif" font-weight="bold" font-size="11.500" fill="currentColor">b</text></svg>
<div style="left:815px;top:57px;width:34px;height:32px;border:1px solid #2d2d2d;border-bottom:none"></div>
<svg style="position:absolute;left:824px;top:65px" width="16" height="16" viewBox="0 0 16 16" fill="#dedede" stroke="none" color="#dedede" ><path d="M0.900 0.400h10.900l3.400 3.500H4.200zM0.900 7.700h10.900l3.400 3.800H4.200z"/><path d="M4.200 3.900h11L11.800 7.700H0.900zM4.200 11.500h11l-3.400 4.400H0.900z" fill="#9a9a9a"/></svg>
<svg style="position:absolute;left:932px;top:67px" width="10" height="10" viewBox="0 0 10 10" fill="#dedede" stroke="none" color="#dedede" ><rect x="0.500" y="0.500" width="9" height="9" fill="#2a2a2a" stroke="currentColor" stroke-width="1"/><path d="M2.600 5L7.400 2.200v5.600z"/></svg>
<div style="left:695px;top:89px;width:254px;height:1px;background:#232323"></div>
<div class="f" style="left:697px;top:92px;width:228px;height:26px;"></div>
<div class="t" style="left:706px;top:95px;color:#8c8c8c;font-style:italic">过滤</div>
<svg style="position:absolute;left:900px;top:101px" width="14" height="9" viewBox="0 0 14 8" fill="#dedede" stroke="none" color="#dedede" ><path d="M1.100 1.100l5.900 5.800 5.900-5.800" fill="none" stroke="currentColor" stroke-width="2.300" stroke-linecap="round" stroke-linejoin="round"/></svg>
<svg style="position:absolute;left:928px;top:98px" width="16" height="16" viewBox="0 0 16 16" fill="#dedede" stroke="none" color="#dedede" ><rect x="0.600" y="0.600" width="5.200" height="13.800" rx="1.200" fill="none" stroke="currentColor" stroke-width="1.200"/><path d="M1 3.600h4.500M1 6.600h4.500M1 9.600h4.500" stroke="currentColor" stroke-width="1.600"/><circle cx="3.200" cy="12.200" r="1"/><g fill="none" stroke="#7a7a7a" stroke-width="1"><path d="M10 2.400l3.200 3.200-3.200 3.200-3.200-3.200zM6.500 9.500h9v5h-9M9.500 9.500v5M12.500 9.500v5"/></g></svg>
<div class="t" style="left:706px;top:119px;font-style:italic">(无)</div>
<div style="left:697px;top:139px;width:250px;height:308px;background:#242424"></div>
<svg style="position:absolute;left:697px;top:139px;overflow:hidden" width="250" height="308" viewBox="0 0 250 308"><defs><radialGradient id="g25"><stop offset="0" stop-color="#000"/><stop offset=".12" stop-color="#000" stop-opacity=".92"/><stop offset=".45" stop-color="#000" stop-opacity=".4"/><stop offset=".75" stop-color="#000" stop-opacity=".1"/><stop offset="1" stop-color="#000" stop-opacity="0"/></radialGradient><radialGradient id="g50"><stop offset="0" stop-color="#000"/><stop offset=".28" stop-color="#000" stop-opacity=".95"/><stop offset=".6" stop-color="#000" stop-opacity=".4"/><stop offset=".85" stop-color="#000" stop-opacity=".08"/><stop offset="1" stop-color="#000" stop-opacity="0"/></radialGradient><radialGradient id="g75"><stop offset="0" stop-color="#000"/><stop offset=".45" stop-color="#000" stop-opacity=".97"/><stop offset=".62" stop-color="#000" stop-opacity=".75"/><stop offset=".78" stop-color="#000" stop-opacity=".35"/><stop offset=".9" stop-color="#000" stop-opacity=".1"/><stop offset="1" stop-color="#000" stop-opacity="0"/></radialGradient><radialGradient id="sun"><stop offset="0" stop-color="#ffff9a"/><stop offset=".28" stop-color="#fff07a"/><stop offset=".5" stop-color="#ffc08a"/><stop offset=".8" stop-color="#ff9a8a" stop-opacity=".55"/><stop offset="1" stop-color="#ff9090" stop-opacity="0"/></radialGradient><filter id="bl03"><feGaussianBlur stdDeviation=".3"/></filter><filter id="bl04"><feGaussianBlur stdDeviation=".4"/></filter><filter id="bl05"><feGaussianBlur stdDeviation=".5"/></filter><filter id="bl06"><feGaussianBlur stdDeviation=".6"/></filter><filter id="bl07"><feGaussianBlur stdDeviation=".7"/></filter><filter id="bl08"><feGaussianBlur stdDeviation=".8"/></filter><filter id="bl09"><feGaussianBlur stdDeviation=".9"/></filter><filter id="bl12"><feGaussianBlur stdDeviation="1.2"/></filter><clipPath id="cc"><rect width="32" height="32"/></clipPath></defs><g transform="translate(2 2)" clip-path="url(#cc)"><rect width="32" height="32" fill="#fff"/></g><g transform="translate(36 2)" clip-path="url(#cc)"><rect width="32" height="32" fill="#fff"/></g><g transform="translate(70 2)" clip-path="url(#cc)"><rect width="32" height="32" fill="#fff"/><path d="M15 14l2 2m0-2l-2 2" stroke="#333" stroke-width=".8"/><path d="M32 24.500V32H24.500z" fill="#8494ff"/></g><g transform="translate(104 2)" clip-path="url(#cc)"><rect width="32" height="32" fill="#fff"/><g filter="url(#bl04)"><rect x="2.5" y="11.5" width="27.5" height="7" fill="#000"/></g><path d="M32 24.500V32H24.500z" fill="#8494ff"/><path d="M26 28.500h5M28.500 26v5" stroke="#000" stroke-width="1.100" fill="none"/></g><g transform="translate(138 2)" clip-path="url(#cc)"><rect width="32" height="32" fill="#fff"/><ellipse cx="16" cy="15" rx="14" ry="5.5" fill="url(#g75)" opacity="1"/><path d="M32 24.500V32H24.500z" fill="#8494ff"/><path d="M26 28.500h5M28.500 26v5" stroke="#000" stroke-width="1.100" fill="none"/></g><g transform="translate(172 2)" clip-path="url(#cc)"><rect width="32" height="32" fill="#fff"/><rect x="2.5" y="15" width="28.5" height="1" fill="#000"/><path d="M32 24.500V32H24.500z" fill="#8494ff"/><path d="M26 28.500h5M28.500 26v5" stroke="#000" stroke-width="1.100" fill="none"/></g><g transform="translate(206 2)" clip-path="url(#cc)"><rect width="32" height="32" fill="#fff"/><ellipse cx="16" cy="16" rx="14.5" ry="14.5" fill="url(#g25)" opacity="1"/><path d="M32 24.500V32H24.500z" fill="#8494ff"/><path d="M26 28.500h5M28.500 26v5" stroke="#000" stroke-width="1.100" fill="none"/></g><g transform="translate(2 36)" clip-path="url(#cc)"><rect width="32" height="32" rx="3" fill="#fff"/><ellipse cx="16" cy="16" rx="13.5" ry="13.5" fill="url(#g50)" opacity="1"/><path d="M32 24.500V32H24.500z" fill="#8494ff"/><path d="M26 28.500h5M28.500 26v5" stroke="#000" stroke-width="1.100" fill="none"/></g><g transform="translate(36 36)" clip-path="url(#cc)"><rect width="32" height="32" fill="#fff"/><ellipse cx="16" cy="16" rx="14.5" ry="14.5" fill="url(#g75)" opacity="1"/><path d="M32 24.500V32H24.500z" fill="#8494ff"/><path d="M26 28.500h5M28.500 26v5" stroke="#000" stroke-width="1.100" fill="none"/></g><g transform="translate(70 36)" clip-path="url(#cc)"><rect width="32" height="32" fill="#fff"/><circle cx="16" cy="16.5" r="15.3"/><path d="M32 24.500V32H24.500z" fill="#8494ff"/><path d="M26 28.500h5M28.500 26v5" stroke="#000" stroke-width="1.100" fill="none"/></g><g transform="translate(104 36)" clip-path="url(#cc)"><rect width="32" height="32" fill="#fff"/><polygon points="18.6,2.2 20.3,12.8 30.9,14.9 21.3,19.8 22.6,30.5 15,22.9 5.2,27.4 10.1,17.8 2.8,10 13.4,11.6"/><path d="M32 24.500V32H24.500z" fill="#8494ff"/><path d="M26 28.500h5M28.500 26v5" stroke="#000" stroke-width="1.100" fill="none"/></g><g transform="translate(138 36)" clip-path="url(#cc)"><rect width="32" height="32" fill="#fff"/><g filter="url(#bl12)"><ellipse cx="16" cy="16" rx="7" ry="7" fill="#000" opacity="0.55"/></g><g filter="url(#bl05)"><path d="M21.4 22.1h1.4v1.4h-1.4zM15.8 20.9h1v1h-1zM11.7 10h0.7v0.7h-0.7zM23.9 17.4h1v1h-1zM16 15.7h1v1h-1zM15.5 13h1.5v1.5h-1.5zM16.9 15.4h0.6v0.6h-0.6zM6.4 13.4h1v1h-1zM16.9 20.3h0.6v0.6h-0.6zM16.8 20.4h1.1v1.1h-1.1zM16.3 19h0.8v0.8h-0.8zM12.6 16.9h0.6v0.6h-0.6zM18.8 11.4h1.2v1.2h-1.2zM21.2 28.1h1.5v1.5h-1.5zM18.7 18.6h1.3v1.3h-1.3zM13.6 6.4h1v1h-1zM19 10.5h0.9v0.9h-0.9zM8.6 11.5h1.4v1.4h-1.4zM10.4 15.8h0.6v0.6h-0.6zM16.3 23.5h1v1h-1zM18.5 20.7h1.3v1.3h-1.3zM14.1 12.4h1v1h-1zM8.7 15.6h1.1v1.1h-1.1zM12.2 19h0.6v0.6h-0.6zM22.3 17.8h1.6v1.6h-1.6zM12.5 13.7h0.8v0.8h-0.8zM4.1 15.8h1.4v1.4h-1.4zM7.9 13.9h0.8v0.8h-0.8zM5.7 15.1h1.2v1.2h-1.2zM12.8 16.8h1.1v1.1h-1.1zM16.4 15.9h1.4v1.4h-1.4zM19.8 8.1h1.3v1.3h-1.3zM17.8 11.3h1.2v1.2h-1.2zM14.7 16.6h1.5v1.5h-1.5zM13.5 14.8h1.1v1.1h-1.1zM12.1 16.4h0.9v0.9h-0.9zM10.3 14.6h1.2v1.2h-1.2zM15 16.3h0.8v0.8h-0.8zM18.5 21h1.5v1.5h-1.5zM18.2 8.8h1.4v1.4h-1.4zM15.7 24.1h1.3v1.3h-1.3zM16.7 16.4h0.6v0.6h-0.6zM16.1 12.8h0.7v0.7h-0.7zM13.3 13.3h0.7v0.7h-0.7zM18.8 20.3h0.8v0.8h-0.8zM15 22.6h1.1v1.1h-1.1zM13.9 20.3h0.6v0.6h-0.6zM12.7 18.9h0.8v0.8h-0.8zM23 21.7h1.1v1.1h-1.1zM17.5 21.5h1.4v1.4h-1.4zM16.8 16.1h0.7v0.7h-0.7zM15.5 13.6h1.3v1.3h-1.3zM13.7 11.3h0.8v0.8h-0.8zM23.4 14.9h1.1v1.1h-1.1zM17 22h1v1h-1zM12.7 14.3h1.2v1.2h-1.2zM19.3 17.3h1.6v1.6h-1.6zM18.5 13.5h1.5v1.5h-1.5zM12.3 25.2h1.3v1.3h-1.3zM13.2 17.6h0.6v0.6h-0.6zM16.8 15.2h1.4v1.4h-1.4zM21.3 14.7h0.8v0.8h-0.8zM23.6 7.6h1.3v1.3h-1.3zM11.9 15.8h0.9v0.9h-0.9zM17.7 22h1v1h-1zM16.7 17.9h1.3v1.3h-1.3zM14.6 20.7h0.9v0.9h-0.9zM22.2 9.5h0.6v0.6h-0.6zM17.1 19.6h1.6v1.6h-1.6zM16.8 12.3h0.8v0.8h-0.8zM12.3 8.9h1.5v1.5h-1.5zM11.2 23.2h1.3v1.3h-1.3zM3.8 17.2h0.8v0.8h-0.8zM15.7 14.3h0.8v0.8h-0.8zM18.5 14.5h1.4v1.4h-1.4zM9.5 11.3h1v1h-1zM14.1 18.9h1.5v1.5h-1.5zM7.7 9.7h1.5v1.5h-1.5zM19.5 20h0.7v0.7h-0.7zM17.6 16.4h1.5v1.5h-1.5zM17.9 8.3h0.9v0.9h-0.9zM10.5 11.1h1v1h-1zM13.3 14.7h0.7v0.7h-0.7zM15.1 24.8h1.2v1.2h-1.2zM20.1 13.9h0.9v0.9h-0.9zM17.8 8.3h0.6v0.6h-0.6zM15.1 14.4h0.7v0.7h-0.7zM16.9 15.2h0.8v0.8h-0.8zM20.4 15.7h0.7v0.7h-0.7zM17.5 18.7h1.3v1.3h-1.3zM23.4 21.6h1v1h-1zM25 14.3h0.9v0.9h-0.9zM15.9 20.8h0.7v0.7h-0.7zM15.3 15h0.6v0.6h-0.6zM19.5 15.6h1.2v1.2h-1.2zM12.5 17.1h0.7v0.7h-0.7zM25.5 10.2h1.6v1.6h-1.6zM18.2 17.9h1.2v1.2h-1.2zM21.2 15.3h1.3v1.3h-1.3zM14.3 13.2h1.1v1.1h-1.1zM14.9 19h0.7v0.7h-0.7zM13.7 27.8h1v1h-1zM12.5 11.1h1.5v1.5h-1.5zM13.2 18.3h0.9v0.9h-0.9zM12.7 23.4h1.5v1.5h-1.5zM14.8 19.6h1.1v1.1h-1.1zM11 13.3h0.8v0.8h-0.8zM19.1 16.4h0.7v0.7h-0.7zM14.5 15.5h0.7v0.7h-0.7zM13.7 13.4h1.4v1.4h-1.4zM7.6 16.4h0.8v0.8h-0.8zM8.5 15.9h0.7v0.7h-0.7zM18.5 15.2h1.4v1.4h-1.4zM23.8 15.3h0.9v0.9h-0.9zM20 19.1h1.5v1.5h-1.5zM13.6 24.6h0.7v0.7h-0.7zM16.9 15.4h0.9v0.9h-0.9zM22.2 11.7h1.5v1.5h-1.5zM19.8 10.1h1.3v1.3h-1.3zM18 20h0.8v0.8h-0.8zM14.6 9.9h0.9v0.9h-0.9zM25.9 20.3h1.4v1.4h-1.4zM11 14.4h1.5v1.5h-1.5zM12 17.2h0.9v0.9h-0.9zM16 16.9h1.2v1.2h-1.2zM11.3 18.7h0.7v0.7h-0.7zM14.6 17.8h0.7v0.7h-0.7zM15.5 23.9h1v1h-1zM11.3 19.4h0.8v0.8h-0.8zM21.1 16.2h1.1v1.1h-1.1zM13.3 12.4h1.3v1.3h-1.3zM15.6 12.9h1.1v1.1h-1.1zM13 16.4h1v1h-1zM7.5 12.6h1.5v1.5h-1.5zM15 22h0.6v0.6h-0.6zM20.5 18.2h1.5v1.5h-1.5zM19.9 22h1.5v1.5h-1.5zM13.6 22h1.4v1.4h-1.4zM11.5 20.7h1.3v1.3h-1.3zM9.1 11.4h1.5v1.5h-1.5zM21.3 14.6h0.8v0.8h-0.8zM16 18.9h1.2v1.2h-1.2zM16.1 14.6h1.3v1.3h-1.3zM15.2 12.2h1.1v1.1h-1.1zM19.5 21.8h0.6v0.6h-0.6zM23.6 15.1h1.2v1.2h-1.2zM15 25.2h1.6v1.6h-1.6zM20.7 21.6h1.4v1.4h-1.4zM12.5 10.5h1v1h-1zM25.9 10.9h1v1h-1zM17.5 11.8h0.8v0.8h-0.8zM15 17.9h1.5v1.5h-1.5zM18 15.5h1.2v1.2h-1.2zM14.2 17.1h0.9v0.9h-0.9zM16.1 23h0.6v0.6h-0.6zM17.7 20.2h0.6v0.6h-0.6zM12 11.9h1.4v1.4h-1.4zM16.9 19.3h1.1v1.1h-1.1zM15.2 21.5h0.9v0.9h-0.9zM13 9.2h1.4v1.4h-1.4zM21.2 15.1h1.1v1.1h-1.1zM20.4 10.3h1.2v1.2h-1.2zM13.4 18.3h0.7v0.7h-0.7zM16.7 14h1.3v1.3h-1.3zM5.6 12.9h1.4v1.4h-1.4zM18.2 15.6h1.1v1.1h-1.1zM12.7 14.4h1.1v1.1h-1.1zM12.8 20h0.6v0.6h-0.6zM11.7 17.6h0.9v0.9h-0.9zM10.1 20.3h1.3v1.3h-1.3zM9.9 16.3h1v1h-1zM16.1 16.4h0.9v0.9h-0.9zM8.9 11h1.4v1.4h-1.4zM3.6 15.1h1.1v1.1h-1.1zM18.2 12.3h1.3v1.3h-1.3zM19.6 15.7h0.8v0.8h-0.8zM12.2 12.5h1v1h-1zM20.2 16.1h1v1h-1zM9.1 20.7h1.2v1.2h-1.2zM15.1 7.1h1.3v1.3h-1.3zM9.1 16.3h1.2v1.2h-1.2zM12.5 11.2h1v1h-1zM11.9 11.7h1.5v1.5h-1.5zM17.6 8h1.4v1.4h-1.4zM18.3 10.7h0.9v0.9h-0.9zM15.4 22.6h1.5v1.5h-1.5zM13.7 15.3h1.4v1.4h-1.4zM11.3 16.5h0.6v0.6h-0.6zM9.1 15.6h1v1h-1zM12.2 20.8h0.6v0.6h-0.6zM5.9 15.5h1.3v1.3h-1.3zM10.8 19.7h1.2v1.2h-1.2zM16.7 18.8h1.5v1.5h-1.5zM15.8 17.6h1.4v1.4h-1.4zM12 15.4h1.1v1.1h-1.1zM15.8 13.5h1.3v1.3h-1.3zM14.2 8.5h0.9v0.9h-0.9zM13.6 14.1h1.2v1.2h-1.2zM19.5 22.6h1.5v1.5h-1.5zM14.6 18.6h1.6v1.6h-1.6zM13.8 8.2h0.6v0.6h-0.6zM20.7 12.5h0.9v0.9h-0.9zM9.5 19h1.4v1.4h-1.4zM18.2 21.5h0.8v0.8h-0.8zM20.5 15.2h1.5v1.5h-1.5zM15.2 10.3h0.9v0.9h-0.9zM13.7 15.6h0.7v0.7h-0.7zM15.2 12.1h1.4v1.4h-1.4zM16.4 22.7h1.3v1.3h-1.3zM15.3 17.9h1v1h-1zM14.1 16.1h0.8v0.8h-0.8zM21.3 17.9h1.5v1.5h-1.5zM16.2 17.1h1.3v1.3h-1.3zM20.3 6.1h1.2v1.2h-1.2zM11.6 22.7h0.7v0.7h-0.7zM15.3 14.2h1v1h-1zM11.9 16.1h0.8v0.8h-0.8zM16.9 23.7h1.1v1.1h-1.1zM13.5 14.6h1.3v1.3h-1.3zM13.3 20.9h1.5v1.5h-1.5zM17.3 16h1.4v1.4h-1.4zM18.3 13.1h1v1h-1zM7.8 11.5h1v1h-1zM21.2 11.2h0.8v0.8h-0.8zM16.6 15.6h0.7v0.7h-0.7zM15.3 14.8h1v1h-1zM19.2 19.4h1.4v1.4h-1.4zM16.9 15.4h0.7v0.7h-0.7zM16.7 15h0.9v0.9h-0.9zM17.4 17.2h0.6v0.6h-0.6zM11.5 10.7h1.3v1.3h-1.3zM19.5 10.9h1v1h-1zM8.5 7.9h1.2v1.2h-1.2zM16.1 17.5h1.5v1.5h-1.5zM12.7 13.9h1.2v1.2h-1.2zM11.3 14.1h0.7v0.7h-0.7zM13.4 19.5h0.8v0.8h-0.8zM19.2 13h1.3v1.3h-1.3zM14.4 9.3h1.3v1.3h-1.3zM16 12.8h1.6v1.6h-1.6zM21.5 23.6h1.5v1.5h-1.5zM16.8 14.9h0.7v0.7h-0.7zM17.8 11.6h1v1h-1zM17.2 15.9h1.1v1.1h-1.1zM13.9 16.8h1v1h-1zM13.7 7.6h0.6v0.6h-0.6zM14.2 15.7h1.4v1.4h-1.4zM17 16.6h1v1h-1zM15.6 12.4h0.7v0.7h-0.7zM18.1 8.7h1.5v1.5h-1.5zM14.5 20.2h0.8v0.8h-0.8zM12.5 14.7h0.9v0.9h-0.9zM18.2 5.7h1.2v1.2h-1.2zM20.8 19.7h1v1h-1zM22.7 15.5h1.4v1.4h-1.4zM14.4 11h1.5v1.5h-1.5zM17.7 13h0.8v0.8h-0.8zM12.5 19.7h0.7v0.7h-0.7zM12.9 20.5h0.6v0.6h-0.6zM18.4 10.4h0.9v0.9h-0.9zM14.8 19.7h0.9v0.9h-0.9zM16 11h1.1v1.1h-1.1zM21.5 23.5h0.9v0.9h-0.9zM15.3 17.4h1.6v1.6h-1.6zM6.8 17.2h1.5v1.5h-1.5zM23.6 14.5h1.5v1.5h-1.5zM22.7 12.5h0.7v0.7h-0.7zM10.6 15.2h1.6v1.6h-1.6zM17.4 9.6h1.3v1.3h-1.3zM9.5 23.7h1.2v1.2h-1.2zM12.2 18.7h1.6v1.6h-1.6zM13.5 15.5h0.7v0.7h-0.7zM13.9 11h1.5v1.5h-1.5zM17.7 20h1.3v1.3h-1.3zM17.8 16.6h1.1v1.1h-1.1zM15.8 18h0.9v0.9h-0.9zM12.5 12.2h0.7v0.7h-0.7zM23.3 19.6h1.2v1.2h-1.2zM19.9 23.4h0.6v0.6h-0.6zM10.5 22h1.3v1.3h-1.3zM14.1 24.6h1.2v1.2h-1.2zM21.9 9.4h1v1h-1zM13.6 11.3h1.5v1.5h-1.5zM18 9.6h1.4v1.4h-1.4zM19.2 16h0.8v0.8h-0.8zM15.9 8.8h1.1v1.1h-1.1zM11.7 16.3h1.5v1.5h-1.5zM17.6 10.7h0.6v0.6h-0.6zM18.8 12.3h0.8v0.8h-0.8zM14 22.1h0.6v0.6h-0.6zM18.6 18.4h1.5v1.5h-1.5zM15.8 4.8h1.1v1.1h-1.1zM11.2 13.7h1.1v1.1h-1.1zM8.5 14h1.6v1.6h-1.6zM11 19.2h0.9v0.9h-0.9zM14.4 20.7h1.2v1.2h-1.2zM5.1 12.4h0.8v0.8h-0.8zM7.1 5.7h1.3v1.3h-1.3zM12.3 14.4h1v1h-1zM24.2 12.5h1.3v1.3h-1.3zM23.7 10.3h1.4v1.4h-1.4zM12.5 19.1h1.4v1.4h-1.4zM11.1 21h1.1v1.1h-1.1zM13.6 20h0.7v0.7h-0.7zM13.3 19.4h0.6v0.6h-0.6zM17.5 18.9h1.5v1.5h-1.5zM13.1 14.2h1.6v1.6h-1.6zM15.7 21h1.3v1.3h-1.3zM14.4 11.8h1.4v1.4h-1.4zM9.4 16.6h1.1v1.1h-1.1zM22.6 14.8h0.7v0.7h-0.7zM23.5 24h0.8v0.8h-0.8zM19.2 16.5h1.1v1.1h-1.1zM20 14.7h1.3v1.3h-1.3zM16.9 14.4h1.2v1.2h-1.2zM21.3 15.9h1.1v1.1h-1.1zM10.2 24.3h1.6v1.6h-1.6zM20.2 19.2h1v1h-1zM15 14.1h0.9v0.9h-0.9zM15.1 20.7h1.4v1.4h-1.4zM20.6 10.3h1.3v1.3h-1.3zM19.6 18.2h1.3v1.3h-1.3zM14.6 20.8h1.5v1.5h-1.5zM22.1 21.5h0.7v0.7h-0.7zM9.1 22h0.8v0.8h-0.8zM11.7 15.4h1.5v1.5h-1.5zM19.5 15.8h1.1v1.1h-1.1zM20.2 12.8h0.8v0.8h-0.8zM16.2 12.2h1.1v1.1h-1.1zM28.6 16.7h1.3v1.3h-1.3zM25.9 11h0.9v0.9h-0.9zM11.6 14.9h1.4v1.4h-1.4zM17.7 13.5h0.9v0.9h-0.9zM14.8 11.8h0.7v0.7h-0.7zM17.8 21.1h1.2v1.2h-1.2zM21 14.7h1.2v1.2h-1.2zM18.6 19.5h0.9v0.9h-0.9zM14.9 12.9h0.8v0.8h-0.8zM12.8 19.5h0.9v0.9h-0.9zM13.9 14.4h1.5v1.5h-1.5zM14.2 11.1h0.7v0.7h-0.7zM13 21.7h1.2v1.2h-1.2zM19.4 7.8h0.9v0.9h-0.9zM12.2 16.1h0.7v0.7h-0.7zM18.1 18.5h0.7v0.7h-0.7zM9.6 14.4h1.2v1.2h-1.2zM14.8 13.2h0.8v0.8h-0.8zM8.1 12.4h1v1h-1zM16.8 16h0.9v0.9h-0.9zM14.7 14.8h0.8v0.8h-0.8zM10.9 5h0.9v0.9h-0.9zM11.9 13h0.6v0.6h-0.6zM14.9 18h0.9v0.9h-0.9zM16.8 9.7h0.6v0.6h-0.6zM22 19.2h0.7v0.7h-0.7zM14.6 19h0.6v0.6h-0.6zM18.3 16.4h1v1h-1zM21.5 13.6h0.8v0.8h-0.8zM14.6 13h1.1v1.1h-1.1zM11.5 25.2h1v1h-1zM18 10.3h1.4v1.4h-1.4zM9.3 10.7h1v1h-1zM13.5 10.7h1.1v1.1h-1.1zM11.2 14h1v1h-1zM20.8 12.5h1.1v1.1h-1.1zM20.7 17.7h0.8v0.8h-0.8zM17 20.4h1.1v1.1h-1.1zM16 19.3h1.1v1.1h-1.1zM11.8 16.7h0.7v0.7h-0.7zM11.7 20.4h1.1v1.1h-1.1zM8.2 13.8h1.3v1.3h-1.3zM15.6 15h0.9v0.9h-0.9zM15 13.8h1.5v1.5h-1.5zM21.4 22.7h0.8v0.8h-0.8zM20.4 9.2h0.9v0.9h-0.9zM17.9 14.4h1.4v1.4h-1.4zM12.7 19.1h0.7v0.7h-0.7zM13.3 14h1.3v1.3h-1.3zM17.7 10.6h0.6v0.6h-0.6zM25 13.2h1.2v1.2h-1.2zM12.1 19.7h1.5v1.5h-1.5zM8.9 17.8h1.2v1.2h-1.2zM7.4 20.6h1v1h-1zM14.9 15.1h1.1v1.1h-1.1zM22.4 17.5h0.6v0.6h-0.6zM18 16.5h0.7v0.7h-0.7zM12.1 15.8h0.9v0.9h-0.9zM25.1 15.1h1.3v1.3h-1.3zM18.5 8.6h0.8v0.8h-0.8zM17.1 13.1h1.2v1.2h-1.2zM14.5 17.9h1.4v1.4h-1.4zM19.2 14.2h1.5v1.5h-1.5zM12.5 21.1h1.6v1.6h-1.6zM16.2 14.6h1v1h-1zM13.5 18.5h1.4v1.4h-1.4zM9.9 18.4h1.2v1.2h-1.2zM14.6 15.8h1.3v1.3h-1.3zM18 14.4h1.2v1.2h-1.2zM12.2 16.3h1.3v1.3h-1.3zM16.9 15.9h1.5v1.5h-1.5zM10.1 21.3h0.8v0.8h-0.8zM15.6 14.1h0.9v0.9h-0.9zM22 14.8h1.4v1.4h-1.4zM11.4 17.1h1.1v1.1h-1.1zM17 9.3h0.8v0.8h-0.8zM11.1 17.9h1.2v1.2h-1.2zM23.2 12.4h0.7v0.7h-0.7zM14.6 17.4h0.6v0.6h-0.6zM18.4 17.2h1.4v1.4h-1.4zM12.3 9.5h0.9v0.9h-0.9zM22.3 25.3h1.4v1.4h-1.4zM16.8 15.7h1v1h-1zM11.4 10.9h1.5v1.5h-1.5zM11.9 15h0.6v0.6h-0.6zM20 4.8h1.5v1.5h-1.5zM14 12.7h0.8v0.8h-0.8zM17.5 6.3h1.6v1.6h-1.6zM18.5 21h1.1v1.1h-1.1zM9.3 19.3h1.5v1.5h-1.5zM15 9.6h1.3v1.3h-1.3z" fill="#000" opacity="0.8"/></g><path d="M32 24.500V32H24.500z" fill="#ff8585"/><path d="M26 28.500h5M28.500 26v5" stroke="#000" stroke-width="1.100" fill="none"/></g><g transform="translate(172 36)" clip-path="url(#cc)"><rect width="32" height="32" fill="#fff"/><g filter="url(#bl12)"><ellipse cx="16" cy="16" rx="8" ry="4.5" fill="#000" opacity="0.4"/></g><g filter="url(#bl05)"><path d="M27.7 13.9h0.5v0.5h-0.5zM24.2 19.1h1.1v1.1h-1.1zM13.9 13.6h1v1h-1zM10.8 13.4h0.6v0.6h-0.6zM11.5 17.4h1.1v1.1h-1.1zM28.2 15.7h0.9v0.9h-0.9zM12.3 16.9h0.5v0.5h-0.5zM21.5 16.6h0.8v0.8h-0.8zM8.3 20.6h0.9v0.9h-0.9zM12.6 15.1h0.5v0.5h-0.5zM14.8 17.5h0.9v0.9h-0.9zM23.5 16h0.6v0.6h-0.6zM23 12.5h1.1v1.1h-1.1zM23.1 13h1.1v1.1h-1.1zM7.5 23.2h1.3v1.3h-1.3zM20.4 20.5h1.1v1.1h-1.1zM10 16.9h0.9v0.9h-0.9zM21.2 14.3h1.2v1.2h-1.2zM9.7 21.3h1.2v1.2h-1.2zM9.7 17h1.2v1.2h-1.2zM15.1 12.4h0.7v0.7h-0.7zM12.5 20.4h0.6v0.6h-0.6zM19.3 14.6h1.2v1.2h-1.2zM11.4 23.5h1.1v1.1h-1.1zM10 15.9h1v1h-1zM12.3 14.5h0.7v0.7h-0.7zM4.4 15.4h1v1h-1zM24.2 18.7h1.1v1.1h-1.1zM18.7 14.9h1.1v1.1h-1.1zM22.8 17.7h0.7v0.7h-0.7zM17.5 22.5h0.6v0.6h-0.6zM6.3 15.1h0.7v0.7h-0.7zM18.5 22.4h0.8v0.8h-0.8zM15.7 15.2h0.8v0.8h-0.8zM19.5 20.2h0.6v0.6h-0.6zM17.1 15.8h1.1v1.1h-1.1zM19.8 16.3h1.2v1.2h-1.2zM17.8 17.7h1.1v1.1h-1.1zM14.9 16.6h1.3v1.3h-1.3zM16.8 16.7h0.8v0.8h-0.8zM9.8 12.5h0.6v0.6h-0.6zM15.3 16.7h0.9v0.9h-0.9zM16.8 10.8h1.2v1.2h-1.2zM16.4 9.6h1.1v1.1h-1.1zM12.5 16.4h1v1h-1zM15.1 17.4h0.9v0.9h-0.9zM17.8 14.8h1v1h-1zM11.3 18.4h0.6v0.6h-0.6zM19.7 15.4h1v1h-1zM15.2 16.3h0.9v0.9h-0.9zM17.1 16.8h0.5v0.5h-0.5zM17.2 17.2h1v1h-1zM1.7 15.5h1.2v1.2h-1.2zM19.6 15.9h0.9v0.9h-0.9zM16 20.3h1v1h-1zM18.4 11.2h0.7v0.7h-0.7zM10.6 17.8h0.5v0.5h-0.5zM21 16.7h0.6v0.6h-0.6zM15.4 13.7h0.6v0.6h-0.6zM17.5 18.1h0.7v0.7h-0.7zM10.5 15.5h0.7v0.7h-0.7zM13.8 14.3h1.2v1.2h-1.2zM23.9 14.8h0.8v0.8h-0.8zM9.4 15.7h0.5v0.5h-0.5zM10.7 17.9h0.6v0.6h-0.6zM23.5 19.2h0.8v0.8h-0.8zM4.8 15.1h1v1h-1zM12.5 24.9h0.8v0.8h-0.8zM23.5 16.6h0.6v0.6h-0.6zM12.7 21.8h1v1h-1zM21.5 16.3h0.8v0.8h-0.8zM12.6 16.2h1v1h-1zM19.7 17.2h0.8v0.8h-0.8zM17.8 15.5h1.1v1.1h-1.1zM18.3 19.9h0.8v0.8h-0.8zM7.9 17.2h0.8v0.8h-0.8zM17.8 17.1h0.6v0.6h-0.6zM20.2 12.3h1.3v1.3h-1.3zM15.6 15.3h1v1h-1zM17.4 10.9h0.9v0.9h-0.9zM12.5 18.8h1.1v1.1h-1.1zM15.3 19.9h0.9v0.9h-0.9zM24.7 14.4h1.2v1.2h-1.2zM18.2 13.7h0.7v0.7h-0.7zM12.1 16.2h0.8v0.8h-0.8zM11.2 9.5h1v1h-1zM16.9 14.7h0.8v0.8h-0.8zM18.8 16h0.8v0.8h-0.8zM17.9 16.6h1.2v1.2h-1.2zM23.2 15.7h0.6v0.6h-0.6zM15 18.2h1v1h-1zM13.7 12.9h0.9v0.9h-0.9zM20.8 18.6h1.3v1.3h-1.3zM16.1 14.6h0.9v0.9h-0.9zM15.2 13.6h1.2v1.2h-1.2zM8.4 17.2h0.8v0.8h-0.8zM24.7 15.8h1v1h-1zM19.3 18.7h0.5v0.5h-0.5zM7.5 12.3h0.6v0.6h-0.6zM10.3 15.8h0.8v0.8h-0.8zM13.1 8.7h1.1v1.1h-1.1zM3.4 17.4h0.8v0.8h-0.8zM15.8 11.3h1.1v1.1h-1.1zM18.1 14.2h1v1h-1zM9.9 18.7h1.3v1.3h-1.3zM15.5 15.6h0.9v0.9h-0.9zM13.5 9.6h1v1h-1zM16.4 15.5h1.3v1.3h-1.3zM15.1 11.7h1.2v1.2h-1.2zM17.7 15h1.2v1.2h-1.2zM16.4 13.9h1.1v1.1h-1.1zM13.2 14.9h1.1v1.1h-1.1zM20.5 19.4h0.8v0.8h-0.8zM15.9 20.1h0.9v0.9h-0.9zM19.6 24h0.6v0.6h-0.6zM21.8 16.1h1.2v1.2h-1.2zM11.4 11.5h0.9v0.9h-0.9zM13.9 13.4h0.7v0.7h-0.7zM14.8 16h0.6v0.6h-0.6zM16.1 14h1.1v1.1h-1.1zM17.1 12.8h1v1h-1zM18.3 9.8h0.6v0.6h-0.6zM18.6 18.7h0.9v0.9h-0.9zM15.8 16.4h0.9v0.9h-0.9zM20.7 15.4h0.9v0.9h-0.9zM12 18.3h1.2v1.2h-1.2zM13.4 20.3h0.9v0.9h-0.9zM5.2 14.3h0.6v0.6h-0.6zM17.9 13.6h1v1h-1zM18.1 11.5h0.8v0.8h-0.8zM17.2 14.8h1v1h-1zM11.2 18.5h1.2v1.2h-1.2zM18.1 11.7h0.7v0.7h-0.7zM16.6 19.5h0.7v0.7h-0.7zM13.8 23.9h0.6v0.6h-0.6zM18 13.2h0.8v0.8h-0.8zM15.2 17.2h0.9v0.9h-0.9zM18.7 19h0.7v0.7h-0.7zM24.9 11.6h0.9v0.9h-0.9zM8.6 10.3h0.8v0.8h-0.8zM19 17.4h0.7v0.7h-0.7zM13.9 13.2h0.8v0.8h-0.8zM17 13.8h1.1v1.1h-1.1zM12.6 13.6h1.2v1.2h-1.2zM10.4 21.5h1.2v1.2h-1.2zM8.3 15.9h1.3v1.3h-1.3zM15.6 10.7h1.2v1.2h-1.2zM23.7 13.9h1.3v1.3h-1.3zM14.2 20.3h1v1h-1zM12.6 18.4h0.6v0.6h-0.6zM20.5 15.2h0.9v0.9h-0.9zM18.5 14.7h1.3v1.3h-1.3zM16.8 16.5h0.8v0.8h-0.8zM8.9 21.5h1.2v1.2h-1.2zM16.4 12.6h0.9v0.9h-0.9zM16.8 22h0.8v0.8h-0.8zM14.5 20.5h0.6v0.6h-0.6zM11.4 22.7h0.6v0.6h-0.6zM18.1 17.7h0.7v0.7h-0.7zM12.7 17.2h0.8v0.8h-0.8zM16.1 18.4h1v1h-1zM13.5 18.6h1.1v1.1h-1.1zM18.6 16.7h1.2v1.2h-1.2zM8.1 18.4h0.6v0.6h-0.6zM6.4 15.1h0.8v0.8h-0.8zM16.8 11.6h0.8v0.8h-0.8zM21 15.9h0.9v0.9h-0.9zM12.8 14.1h1.2v1.2h-1.2zM10.6 13.5h0.9v0.9h-0.9zM30.9 15.1h1.2v1.2h-1.2zM11.1 16.9h0.9v0.9h-0.9zM18.3 16.4h1.3v1.3h-1.3zM24.2 21.4h1v1h-1zM17.7 15.3h0.7v0.7h-0.7zM16.2 15.6h0.6v0.6h-0.6zM14.2 17.6h0.6v0.6h-0.6zM14.9 14.8h1.3v1.3h-1.3zM15.1 15.2h1.2v1.2h-1.2zM16.3 19.7h0.9v0.9h-0.9zM19.8 18.9h0.5v0.5h-0.5zM19.5 22.8h1.2v1.2h-1.2zM8.5 15.3h1.2v1.2h-1.2zM19.7 18.9h0.6v0.6h-0.6zM17.8 17h0.7v0.7h-0.7zM19.3 16.7h0.8v0.8h-0.8zM8.9 11.6h1.2v1.2h-1.2zM14.8 12.3h1.2v1.2h-1.2zM17.2 17.3h1.2v1.2h-1.2zM13.6 14.4h0.8v0.8h-0.8zM14.4 19.2h0.8v0.8h-0.8zM8.8 19.4h1.1v1.1h-1.1zM10.8 14.6h0.7v0.7h-0.7zM17.4 6.6h0.7v0.7h-0.7zM13.7 11.3h1v1h-1zM22.2 16.8h0.7v0.7h-0.7zM18.3 20h1v1h-1zM10.2 12.3h1.1v1.1h-1.1zM14.5 16.2h1.1v1.1h-1.1zM20.2 10.6h1v1h-1zM19.2 16.5h0.6v0.6h-0.6zM11.9 13h0.6v0.6h-0.6zM29.3 13.6h1.2v1.2h-1.2zM12 16.6h0.7v0.7h-0.7zM19.5 11.6h0.7v0.7h-0.7zM21.3 13.6h0.8v0.8h-0.8zM9.1 18.6h0.9v0.9h-0.9zM14.6 14.6h1.1v1.1h-1.1zM14.5 23h0.7v0.7h-0.7zM12.9 19.4h0.8v0.8h-0.8zM4.8 14.8h0.7v0.7h-0.7zM17.1 11.1h1.1v1.1h-1.1zM10.8 17.1h0.8v0.8h-0.8zM12.2 16.4h0.7v0.7h-0.7zM12.8 16.3h0.9v0.9h-0.9zM12.1 14.8h0.6v0.6h-0.6zM8.2 12.1h0.7v0.7h-0.7zM10.5 12.9h1.2v1.2h-1.2zM14.2 13.5h0.7v0.7h-0.7zM18.2 13.7h0.5v0.5h-0.5zM18.3 14.5h0.8v0.8h-0.8zM14.4 18.2h1.1v1.1h-1.1zM13 18.9h0.8v0.8h-0.8zM16.5 15.5h1v1h-1zM17.9 17.3h1v1h-1zM14.7 16.8h1v1h-1zM22.2 13.6h0.9v0.9h-0.9zM19.5 9.2h0.6v0.6h-0.6zM12.1 23.9h1.2v1.2h-1.2zM18.3 20.8h1.2v1.2h-1.2zM9.5 13.3h0.9v0.9h-0.9zM16.3 18.2h0.5v0.5h-0.5zM14.6 14.5h1v1h-1zM11.8 18.2h1.3v1.3h-1.3zM11.6 18.3h0.8v0.8h-0.8zM16.8 18.2h0.9v0.9h-0.9zM16.9 14.7h1.3v1.3h-1.3zM15.2 15.1h1.1v1.1h-1.1zM11.1 18.2h0.6v0.6h-0.6zM10 15.7h1.1v1.1h-1.1zM9.2 13.6h1.1v1.1h-1.1zM16.2 16.7h0.9v0.9h-0.9zM17.9 17.3h0.8v0.8h-0.8zM9.3 15h1v1h-1zM18.2 15.5h0.9v0.9h-0.9zM22.4 18.5h0.8v0.8h-0.8zM18.7 18.1h1v1h-1zM4.1 17.3h0.8v0.8h-0.8zM9.9 22.1h1v1h-1zM22.8 19.5h0.8v0.8h-0.8zM22.7 14.5h1.1v1.1h-1.1zM20.7 13.7h1.3v1.3h-1.3zM20.5 16.5h1.2v1.2h-1.2zM23.5 16.2h1.3v1.3h-1.3zM13.8 9.8h0.6v0.6h-0.6zM9.4 14.9h0.8v0.8h-0.8zM8.3 18.7h0.6v0.6h-0.6zM22.4 17.2h1.3v1.3h-1.3zM19.5 11.8h0.7v0.7h-0.7zM17.2 15.5h0.7v0.7h-0.7zM18.5 9.4h0.8v0.8h-0.8zM18 15.2h1v1h-1zM19.3 17h0.7v0.7h-0.7zM21.1 16.1h0.9v0.9h-0.9zM14.6 20.6h0.5v0.5h-0.5zM9.9 15.6h0.8v0.8h-0.8zM18.2 15.2h0.8v0.8h-0.8zM11.3 16.8h1.3v1.3h-1.3zM10.6 14.3h0.9v0.9h-0.9zM4.7 19h1.1v1.1h-1.1zM14.2 14.5h1v1h-1zM19.2 18.1h0.5v0.5h-0.5zM12.2 7.5h1v1h-1zM12.6 15h0.9v0.9h-0.9zM10.9 16.7h0.7v0.7h-0.7zM17.6 21.2h1.3v1.3h-1.3zM19 12h0.5v0.5h-0.5zM12.9 21.8h1.3v1.3h-1.3zM9.8 14.8h1v1h-1zM16.1 21h0.8v0.8h-0.8zM19.2 13.1h1v1h-1zM10.2 14.6h0.9v0.9h-0.9zM24 14.4h0.8v0.8h-0.8zM5.3 15.8h1.1v1.1h-1.1zM8.8 9.4h0.6v0.6h-0.6zM10.3 13.4h0.9v0.9h-0.9zM28.7 14.1h0.8v0.8h-0.8zM9.7 12.4h1.1v1.1h-1.1zM10.2 20.3h0.8v0.8h-0.8zM20.5 19.8h1v1h-1zM11.1 18h1.3v1.3h-1.3zM17.8 12.9h1.2v1.2h-1.2zM11.4 14.6h1v1h-1zM18.2 9.3h1v1h-1zM13.5 13.2h0.5v0.5h-0.5zM13.6 16.4h1.3v1.3h-1.3zM11.6 19.3h1.1v1.1h-1.1zM20.1 21.5h0.8v0.8h-0.8zM21.9 18.1h0.8v0.8h-0.8zM20.7 14.3h0.6v0.6h-0.6zM17.2 16.1h0.9v0.9h-0.9z" fill="#000" opacity="0.75"/></g><path d="M32 24.500V32H24.500z" fill="#ff8585"/><path d="M26 28.500h5M28.500 26v5" stroke="#000" stroke-width="1.100" fill="none"/></g><g transform="translate(206 36)" clip-path="url(#cc)"><rect width="32" height="32" fill="#fff"/><g filter="url(#bl12)"><ellipse cx="17" cy="16" rx="4.5" ry="8" fill="#000" opacity="0.4"/></g><g filter="url(#bl05)"><path d="M17.3 22.9h0.8v0.8h-0.8zM13.7 11.3h0.6v0.6h-0.6zM22.7 16.9h0.7v0.7h-0.7zM11.4 17.9h0.9v0.9h-0.9zM15.9 13.6h1v1h-1zM19.5 11.1h1.1v1.1h-1.1zM16.5 14.2h1.1v1.1h-1.1zM14.9 13.5h0.5v0.5h-0.5zM19.3 11.3h1.1v1.1h-1.1zM20.4 10h1.2v1.2h-1.2zM12.7 22.1h0.9v0.9h-0.9zM22.7 11.6h0.6v0.6h-0.6zM18.4 18.9h1.3v1.3h-1.3zM13.1 19h0.7v0.7h-0.7zM14 15.8h0.8v0.8h-0.8zM13.6 12.3h1.2v1.2h-1.2zM14.1 4.5h1.2v1.2h-1.2zM21.5 15.5h0.6v0.6h-0.6zM22 5.1h1.2v1.2h-1.2zM12.7 12.3h0.7v0.7h-0.7zM18.9 9.7h0.7v0.7h-0.7zM22.4 20.2h1.3v1.3h-1.3zM21.6 21.2h0.8v0.8h-0.8zM18.5 19.7h1.1v1.1h-1.1zM17.6 14.8h1v1h-1zM21.6 18.4h0.8v0.8h-0.8zM23.2 5.5h0.9v0.9h-0.9zM19.6 16h0.6v0.6h-0.6zM16.4 15.2h0.7v0.7h-0.7zM13.6 20.1h0.6v0.6h-0.6zM22.8 18.9h0.8v0.8h-0.8zM23.2 13h0.8v0.8h-0.8zM13.5 17.6h1v1h-1zM13.8 12h1v1h-1zM20.3 13.6h0.8v0.8h-0.8zM16.6 12h0.7v0.7h-0.7zM20.6 15.1h0.9v0.9h-0.9zM20.1 16.4h1v1h-1zM21.1 17h1v1h-1zM20.9 18.8h0.9v0.9h-0.9zM15.8 11.4h1.1v1.1h-1.1zM17 14.8h0.5v0.5h-0.5zM13.5 3.4h0.7v0.7h-0.7zM13.1 18h0.8v0.8h-0.8zM15.3 19.6h0.8v0.8h-0.8zM14.9 13.4h0.8v0.8h-0.8zM17.1 14.7h1v1h-1zM16.8 11.3h0.7v0.7h-0.7zM17.7 12.2h0.6v0.6h-0.6zM12.7 19.4h0.6v0.6h-0.6zM15.8 20.5h1.2v1.2h-1.2zM11.5 20.1h0.6v0.6h-0.6zM14.7 22.8h1.2v1.2h-1.2zM15 17.2h0.6v0.6h-0.6zM15.1 15.3h1.1v1.1h-1.1zM18 13h0.7v0.7h-0.7zM18.5 8.6h1.1v1.1h-1.1zM16.1 18.4h0.7v0.7h-0.7zM17.6 11.8h0.8v0.8h-0.8zM14.3 18.9h0.8v0.8h-0.8zM18.5 14.5h0.5v0.5h-0.5zM22.8 12h1.3v1.3h-1.3zM10.3 21.4h1.2v1.2h-1.2zM17.9 25h1.2v1.2h-1.2zM15.1 10.3h0.7v0.7h-0.7zM15.8 19.3h0.6v0.6h-0.6zM14.9 13.6h1.1v1.1h-1.1zM23.2 19.3h1.1v1.1h-1.1zM22.7 10.6h1.2v1.2h-1.2zM16.6 15.6h1.1v1.1h-1.1zM18.2 20.1h1v1h-1zM13.9 15.1h1.3v1.3h-1.3zM14.9 12.7h0.7v0.7h-0.7zM19.2 11.2h1.1v1.1h-1.1zM15.8 18.9h0.9v0.9h-0.9zM17.7 12.9h1.1v1.1h-1.1zM21.8 11.3h1.2v1.2h-1.2zM21.2 16.4h1.2v1.2h-1.2zM19.3 17.4h0.7v0.7h-0.7zM13.9 15h0.9v0.9h-0.9zM17 15.7h0.5v0.5h-0.5zM18.1 18h0.6v0.6h-0.6zM22.8 14.3h0.6v0.6h-0.6zM14.4 15.9h0.8v0.8h-0.8zM14.4 22.4h1v1h-1zM15.7 18.7h0.8v0.8h-0.8zM19.7 20.9h1.1v1.1h-1.1zM16.1 17.5h0.6v0.6h-0.6zM14.1 21.4h1.1v1.1h-1.1zM13.1 22.8h1v1h-1zM14.4 18.2h0.9v0.9h-0.9zM16.1 10.5h1.1v1.1h-1.1zM14.8 17h0.9v0.9h-0.9zM16.6 14h0.8v0.8h-0.8zM11.5 21.1h1.2v1.2h-1.2zM12.5 24.3h1.1v1.1h-1.1zM16.7 22.1h0.6v0.6h-0.6zM18.7 8.5h1.2v1.2h-1.2zM18.2 8.1h1.1v1.1h-1.1zM15.7 15h1v1h-1zM18.7 16.1h1.1v1.1h-1.1zM18.3 16.7h0.6v0.6h-0.6zM18.4 13.6h0.5v0.5h-0.5zM17.8 13.7h1.2v1.2h-1.2zM14.4 6.7h1.3v1.3h-1.3zM12.3 11.3h0.5v0.5h-0.5zM17.4 9.5h1.1v1.1h-1.1zM20.9 21.7h1.2v1.2h-1.2zM19.5 17.8h1v1h-1zM18.1 12.4h0.6v0.6h-0.6zM17 23.6h1.1v1.1h-1.1zM14.7 19.3h0.8v0.8h-0.8zM15.2 20.6h0.6v0.6h-0.6zM8.9 16h0.8v0.8h-0.8zM17 12.7h1.1v1.1h-1.1zM17.2 7.8h0.9v0.9h-0.9zM12.7 16.8h1.2v1.2h-1.2zM17.8 18h1.1v1.1h-1.1zM20.1 12.7h0.9v0.9h-0.9zM16.6 12.5h0.7v0.7h-0.7zM18.3 22.9h0.8v0.8h-0.8zM17.5 24.4h1.3v1.3h-1.3zM15.7 24.2h0.8v0.8h-0.8zM19.4 10.2h0.7v0.7h-0.7zM17.1 17.2h0.9v0.9h-0.9zM15.6 18.3h0.8v0.8h-0.8zM14.7 24.5h0.6v0.6h-0.6zM20.4 15.7h1v1h-1zM11.4 18.1h1.2v1.2h-1.2zM13.8 13.8h1.1v1.1h-1.1zM18.9 11.6h1.1v1.1h-1.1zM20.3 14.5h0.7v0.7h-0.7zM17.5 24.7h1v1h-1zM22.7 13.2h0.7v0.7h-0.7zM17.9 20h0.6v0.6h-0.6zM15.3 5.6h1.2v1.2h-1.2zM16.8 27h0.8v0.8h-0.8zM12.7 20.1h0.6v0.6h-0.6zM21.7 21.7h0.7v0.7h-0.7zM14.5 21.7h1v1h-1zM19.7 16.2h0.8v0.8h-0.8zM14.9 16.3h1v1h-1zM19.9 14.5h0.9v0.9h-0.9zM18.8 19h1v1h-1zM21.8 23.5h1.2v1.2h-1.2zM22.9 23.5h0.8v0.8h-0.8zM17.7 6.8h0.7v0.7h-0.7zM15 8.8h1.1v1.1h-1.1zM16.5 25.2h1.3v1.3h-1.3zM15.3 10h0.6v0.6h-0.6zM14.2 16.2h1.1v1.1h-1.1zM15.3 9.6h0.6v0.6h-0.6zM14.4 9.8h0.6v0.6h-0.6zM20.4 10.9h0.6v0.6h-0.6zM18.5 14.7h0.8v0.8h-0.8zM16.3 8.7h0.9v0.9h-0.9zM15 11.1h0.7v0.7h-0.7zM17.5 17.9h1.1v1.1h-1.1zM17.1 9.1h1.1v1.1h-1.1zM15.5 19.3h0.8v0.8h-0.8zM17.6 14.8h0.9v0.9h-0.9zM17.1 25.4h0.8v0.8h-0.8zM15.5 20.8h0.9v0.9h-0.9zM17.4 10.9h1.2v1.2h-1.2zM18.8 18.8h0.6v0.6h-0.6zM21 22.2h1.1v1.1h-1.1zM17.8 19.3h0.8v0.8h-0.8zM16.8 5.9h1.1v1.1h-1.1zM15.6 14.3h0.8v0.8h-0.8zM18.3 22.3h1v1h-1zM17.7 20h1.1v1.1h-1.1zM22.3 17.9h1.2v1.2h-1.2zM19.8 14.3h0.9v0.9h-0.9zM13.3 12.1h1.3v1.3h-1.3zM16 11.7h1.2v1.2h-1.2zM13 16.7h1.1v1.1h-1.1zM22.1 16.1h1v1h-1zM13.4 16.3h0.9v0.9h-0.9zM18.3 22.3h0.5v0.5h-0.5zM12.7 16h0.9v0.9h-0.9zM10.1 10.4h1.2v1.2h-1.2zM20.5 23.3h1v1h-1zM19.7 17.6h0.7v0.7h-0.7zM20.3 19.2h1.2v1.2h-1.2zM14.3 26h1.1v1.1h-1.1zM20.9 24.1h1v1h-1zM21.3 12.1h1.1v1.1h-1.1zM14 24.3h1.2v1.2h-1.2zM19.1 11.5h1.1v1.1h-1.1zM15.6 16.2h0.5v0.5h-0.5zM18.8 17.7h0.6v0.6h-0.6zM12.4 16.2h0.9v0.9h-0.9zM13.2 19.7h0.7v0.7h-0.7zM12.1 18.1h0.8v0.8h-0.8zM19.7 26.7h1.1v1.1h-1.1zM15.1 19.9h0.9v0.9h-0.9zM15.2 13.8h0.5v0.5h-0.5zM18.3 25.3h0.6v0.6h-0.6zM15.1 16.9h0.7v0.7h-0.7zM18.5 20.9h0.6v0.6h-0.6zM18.4 16.5h0.6v0.6h-0.6zM15.9 16.1h0.5v0.5h-0.5zM14.1 17.8h1.1v1.1h-1.1zM19.9 17.8h0.8v0.8h-0.8zM24.7 18.4h0.7v0.7h-0.7zM19.8 19.5h0.6v0.6h-0.6zM15 12.5h0.6v0.6h-0.6zM21.6 18.8h0.7v0.7h-0.7zM17.8 10h1.2v1.2h-1.2zM16.3 20h0.7v0.7h-0.7zM18.7 8.9h0.8v0.8h-0.8zM20.8 20.6h1.3v1.3h-1.3zM16.8 15.7h0.5v0.5h-0.5zM18.5 17.8h0.5v0.5h-0.5zM21.1 18.7h1.2v1.2h-1.2zM19.5 30.1h0.9v0.9h-0.9zM19.2 4.4h1.3v1.3h-1.3zM19.5 17h1v1h-1zM18.2 15.2h0.7v0.7h-0.7zM17.9 13.8h0.8v0.8h-0.8zM14.7 23.2h1.2v1.2h-1.2zM19.2 24h1.1v1.1h-1.1zM19 10h1.2v1.2h-1.2zM15 20.3h0.7v0.7h-0.7zM17.6 9.8h0.7v0.7h-0.7zM19.3 23.7h1v1h-1zM16.3 10.7h0.9v0.9h-0.9zM19.7 23.1h0.5v0.5h-0.5zM12.1 17.9h1v1h-1zM18.8 18.3h1.2v1.2h-1.2zM13.1 7.2h1.2v1.2h-1.2zM10.9 19.6h1.1v1.1h-1.1zM15.6 20.6h0.6v0.6h-0.6zM11 24.1h0.6v0.6h-0.6zM15.7 14.9h0.6v0.6h-0.6zM15.7 12.7h0.5v0.5h-0.5zM19.5 22.5h1v1h-1zM19.2 16.3h1.3v1.3h-1.3zM17.7 22.9h0.8v0.8h-0.8zM17.8 8.7h1.1v1.1h-1.1zM15.1 15.2h0.6v0.6h-0.6zM21.9 20.9h0.6v0.6h-0.6zM24.7 18.2h0.7v0.7h-0.7zM18 14.6h0.9v0.9h-0.9zM18 26.2h1v1h-1zM13.8 8.8h1.2v1.2h-1.2zM14.7 22.2h0.9v0.9h-0.9zM21.4 22.7h1v1h-1zM17.8 12.6h0.9v0.9h-0.9zM12.3 18h0.6v0.6h-0.6zM15 21.2h0.6v0.6h-0.6zM12.4 13.1h0.8v0.8h-0.8zM14.6 10h0.7v0.7h-0.7zM11.1 30.7h0.8v0.8h-0.8zM15.9 17h0.7v0.7h-0.7zM20.5 27h1.1v1.1h-1.1zM23.2 4.6h1v1h-1zM20.4 13.2h0.8v0.8h-0.8zM23.1 12.2h1.3v1.3h-1.3zM11.9 16.9h0.8v0.8h-0.8zM23.7 15.8h0.7v0.7h-0.7zM18.8 14.6h0.6v0.6h-0.6zM16.6 11.5h0.9v0.9h-0.9zM16.4 14.8h1.1v1.1h-1.1zM16.5 21.8h0.8v0.8h-0.8zM16.8 6.9h0.7v0.7h-0.7zM19 18.8h0.8v0.8h-0.8zM18.5 17.5h1.1v1.1h-1.1zM14.5 1.7h1.3v1.3h-1.3zM19.1 12.3h0.6v0.6h-0.6zM15.7 21.7h0.9v0.9h-0.9zM14.3 14.6h1.2v1.2h-1.2zM16.3 22h1.2v1.2h-1.2zM17.9 11.7h0.7v0.7h-0.7zM17.1 15.3h0.6v0.6h-0.6zM13.4 14.7h0.6v0.6h-0.6zM18.9 17.2h1.1v1.1h-1.1zM8.8 19.3h1.1v1.1h-1.1zM17.8 15.8h0.6v0.6h-0.6zM20.2 16.5h0.8v0.8h-0.8zM20.6 18.2h0.6v0.6h-0.6zM16.1 19.8h1.1v1.1h-1.1zM15 18.1h0.5v0.5h-0.5zM13.2 19.3h1v1h-1zM21.7 10.8h0.7v0.7h-0.7zM20.3 23h1.1v1.1h-1.1zM11.4 15.4h0.9v0.9h-0.9zM16.7 19.3h0.5v0.5h-0.5zM13 6.8h1.2v1.2h-1.2zM12.7 17.7h1.2v1.2h-1.2zM18.6 9.1h0.8v0.8h-0.8zM15.2 15.6h0.6v0.6h-0.6zM14.1 14.4h0.8v0.8h-0.8zM11.8 18.8h0.9v0.9h-0.9zM18.7 15.2h0.8v0.8h-0.8zM13.9 15.2h1.2v1.2h-1.2zM20.3 4.8h1v1h-1zM20.8 17.4h0.9v0.9h-0.9z" fill="#000" opacity="0.75"/></g><path d="M32 24.500V32H24.500z" fill="#ff8585"/><path d="M26 28.500h5M28.500 26v5" stroke="#000" stroke-width="1.100" fill="none"/></g><g transform="translate(2 70)" clip-path="url(#cc)"><rect width="32" height="32" fill="#fff"/><ellipse cx="15" cy="16" rx="10" ry="10" fill="url(#g25)" opacity="0.55"/><g filter="url(#bl05)"><path d="M15.2 17.9h0.8v0.8h-0.8zM15.8 17.2h0.8v0.8h-0.8zM21.2 12.5h1v1h-1zM15.9 20.9h0.7v0.7h-0.7zM15.9 17.7h0.7v0.7h-0.7zM21.7 12.7h1.1v1.1h-1.1zM15.8 13.5h0.7v0.7h-0.7zM10.5 11.4h1.1v1.1h-1.1zM16.2 14.8h0.9v0.9h-0.9zM12.8 11.8h0.6v0.6h-0.6zM13.3 16.3h1.2v1.2h-1.2zM18.3 12.2h0.7v0.7h-0.7zM19.4 13.2h1.1v1.1h-1.1zM17.8 12.1h0.8v0.8h-0.8zM11.5 13.5h0.6v0.6h-0.6zM12.5 22.9h0.5v0.5h-0.5zM20.4 17.6h0.7v0.7h-0.7zM10.6 15h0.7v0.7h-0.7zM17.6 16h0.8v0.8h-0.8zM16.7 21.4h0.7v0.7h-0.7zM10.9 21.2h0.7v0.7h-0.7zM6.9 12.9h0.6v0.6h-0.6zM17.7 17.1h1v1h-1zM12.8 14h0.7v0.7h-0.7zM16.9 20h0.5v0.5h-0.5zM12.2 8h1.2v1.2h-1.2zM14 5.9h0.5v0.5h-0.5zM12.5 26.1h1v1h-1zM6.9 21.1h0.9v0.9h-0.9zM16.4 13h0.6v0.6h-0.6zM13 16.7h0.8v0.8h-0.8zM18.5 15.1h0.5v0.5h-0.5zM17.3 16.7h1v1h-1zM12.8 18.5h0.6v0.6h-0.6zM19.2 15.5h0.6v0.6h-0.6zM16.3 16.5h0.6v0.6h-0.6zM14 14h0.5v0.5h-0.5zM12 16.2h1.2v1.2h-1.2zM18.5 19.4h1v1h-1zM5 22.4h0.8v0.8h-0.8zM15.2 20.1h0.5v0.5h-0.5zM12.3 17.4h1.1v1.1h-1.1zM17.3 11.9h0.5v0.5h-0.5zM14.9 19h0.6v0.6h-0.6zM15.9 24h0.6v0.6h-0.6zM23.7 18.9h0.9v0.9h-0.9zM19.1 15.8h1.1v1.1h-1.1zM11 10.2h1v1h-1zM13.2 16.1h0.6v0.6h-0.6zM21 9.9h1.1v1.1h-1.1zM12 21h1.1v1.1h-1.1zM10.4 10.3h0.9v0.9h-0.9zM11.6 11h0.7v0.7h-0.7zM23.9 11.3h0.6v0.6h-0.6zM25.1 14.2h1v1h-1zM23.2 18.4h0.6v0.6h-0.6zM20.8 14.8h0.5v0.5h-0.5zM17.8 20.9h0.9v0.9h-0.9zM14.8 6.8h0.7v0.7h-0.7zM24 16.2h0.5v0.5h-0.5zM16.4 14.6h1.1v1.1h-1.1zM16.7 8h0.9v0.9h-0.9zM16.9 14.1h1v1h-1zM10.9 23.4h1v1h-1zM10.2 16.9h0.5v0.5h-0.5zM20.3 17.1h0.8v0.8h-0.8zM18.6 11.9h0.6v0.6h-0.6zM10.6 21.2h0.9v0.9h-0.9zM22.6 16.5h1.1v1.1h-1.1zM19.3 18.6h0.8v0.8h-0.8zM15.8 12.6h0.7v0.7h-0.7zM4.6 16.9h0.6v0.6h-0.6zM19.2 19.7h1.1v1.1h-1.1zM10.7 15.7h1.1v1.1h-1.1zM15.2 14.5h1.1v1.1h-1.1zM16.1 19.2h1.1v1.1h-1.1zM8.7 19.4h0.6v0.6h-0.6zM16.8 14.2h0.6v0.6h-0.6zM11.4 16.1h0.9v0.9h-0.9zM20.2 12.4h0.5v0.5h-0.5zM13.1 20.6h0.8v0.8h-0.8zM14 11.5h0.6v0.6h-0.6zM15.2 23.8h0.7v0.7h-0.7zM16.2 4.4h0.9v0.9h-0.9zM12.6 11.1h0.7v0.7h-0.7zM18.8 13.7h1.1v1.1h-1.1zM12.2 23.6h1.1v1.1h-1.1zM11.7 13.2h0.6v0.6h-0.6zM15.5 12.2h1v1h-1zM16.1 17.2h0.6v0.6h-0.6zM15.9 13.7h1.1v1.1h-1.1zM11.4 19.8h0.7v0.7h-0.7zM13.7 14.8h0.8v0.8h-0.8zM17.3 15h1v1h-1zM13.4 19h0.5v0.5h-0.5zM24.7 17.2h1.1v1.1h-1.1zM17.3 9.1h1.2v1.2h-1.2zM17.9 20.4h0.8v0.8h-0.8zM6.6 11.8h1v1h-1zM17 15.6h1v1h-1zM12 10.1h0.9v0.9h-0.9zM16.7 13h1.1v1.1h-1.1zM10.5 19h1.1v1.1h-1.1zM14 12.7h0.7v0.7h-0.7zM12.4 21h1.2v1.2h-1.2zM18.3 13.6h0.8v0.8h-0.8zM16.3 13h0.8v0.8h-0.8zM17.5 16.2h0.9v0.9h-0.9zM13.1 10.8h0.8v0.8h-0.8zM20.3 14.3h0.6v0.6h-0.6zM24.8 20.5h1.2v1.2h-1.2zM19.8 13.4h0.7v0.7h-0.7zM17.6 17.7h0.7v0.7h-0.7zM22.6 12.3h1v1h-1zM16.8 18.4h0.7v0.7h-0.7zM17.3 15.2h1.1v1.1h-1.1zM12.9 11.4h1.2v1.2h-1.2zM14.6 20.9h0.6v0.6h-0.6zM15.8 16.6h0.7v0.7h-0.7zM16 17h1.2v1.2h-1.2zM13 24.2h1v1h-1zM14.3 10.2h1.2v1.2h-1.2zM19.6 11.6h0.9v0.9h-0.9zM12.8 10h0.9v0.9h-0.9zM12.7 16h1.1v1.1h-1.1zM13.5 16.1h0.6v0.6h-0.6zM17.2 13.8h0.8v0.8h-0.8zM11.7 8.8h0.7v0.7h-0.7zM11.8 18.7h0.5v0.5h-0.5zM15.6 15.5h1.2v1.2h-1.2zM16.3 17.9h1.1v1.1h-1.1zM16.3 13.4h0.9v0.9h-0.9zM8.7 16.9h0.6v0.6h-0.6zM21.1 4.1h1v1h-1zM23.3 11.5h0.8v0.8h-0.8zM19.4 9.8h0.9v0.9h-0.9zM19.3 19.5h1.1v1.1h-1.1zM13 21.4h1.1v1.1h-1.1zM14.1 15.4h0.9v0.9h-0.9zM14.7 23.9h1v1h-1zM12 24h0.9v0.9h-0.9zM11 22.4h1.1v1.1h-1.1zM21.5 10.8h1v1h-1zM13.3 10.8h0.9v0.9h-0.9zM18.7 15.7h0.6v0.6h-0.6zM13.9 11.4h0.9v0.9h-0.9zM12.5 14.3h0.6v0.6h-0.6zM21.3 19h1.1v1.1h-1.1zM14.3 14.1h1.2v1.2h-1.2zM17.2 11.8h0.5v0.5h-0.5zM18.1 11.4h0.9v0.9h-0.9zM21.5 16.7h0.5v0.5h-0.5zM12.8 16.3h0.8v0.8h-0.8zM20.1 11.8h1.1v1.1h-1.1zM13.8 19.8h0.9v0.9h-0.9zM19 16.9h1.2v1.2h-1.2zM15.2 8h0.7v0.7h-0.7zM12.4 9.4h1v1h-1zM12.7 17h0.5v0.5h-0.5zM22 10h0.7v0.7h-0.7zM15.1 11.9h0.9v0.9h-0.9zM16.9 13h0.9v0.9h-0.9zM14.8 20.8h0.5v0.5h-0.5zM14.7 19.3h1.1v1.1h-1.1zM19.5 21h0.6v0.6h-0.6zM17.4 15.8h0.6v0.6h-0.6zM17.2 25h1v1h-1zM18.6 13h0.6v0.6h-0.6zM12.6 19.7h1.2v1.2h-1.2zM16.5 18.6h1.1v1.1h-1.1zM23 23h0.7v0.7h-0.7zM9.6 13.6h1.1v1.1h-1.1zM21.9 19.5h0.6v0.6h-0.6zM14.8 15.1h1v1h-1zM16.1 18.5h0.5v0.5h-0.5zM13.4 19.2h1.2v1.2h-1.2zM12 13.6h1.2v1.2h-1.2zM16.3 18.5h1.2v1.2h-1.2zM20.8 14.2h1.2v1.2h-1.2zM23.1 19.1h1v1h-1zM11.2 9.3h0.6v0.6h-0.6zM15.7 18.1h0.8v0.8h-0.8zM10.2 14.6h0.8v0.8h-0.8zM14.7 8.4h1v1h-1zM17.2 16.5h0.7v0.7h-0.7zM15.4 21.2h0.6v0.6h-0.6zM12.4 13.4h0.8v0.8h-0.8zM12.5 6.7h0.6v0.6h-0.6zM8.5 25.2h0.6v0.6h-0.6zM17.6 16.4h1.1v1.1h-1.1zM13.9 6.6h0.8v0.8h-0.8zM18.3 16.9h1v1h-1zM13.3 17.4h0.8v0.8h-0.8zM11.3 16.8h0.8v0.8h-0.8zM15.6 16.7h1v1h-1zM14.5 11.9h0.6v0.6h-0.6zM13.6 20.9h1.1v1.1h-1.1zM4.3 17.2h0.9v0.9h-0.9zM17.3 21h0.9v0.9h-0.9zM9.8 12.2h0.5v0.5h-0.5z" fill="#000" opacity="0.4"/></g><path d="M32 24.500V32H24.500z" fill="#ff8585"/><path d="M26 28.500h5M28.500 26v5" stroke="#000" stroke-width="1.100" fill="none"/></g><g transform="translate(36 70)" clip-path="url(#cc)"><rect width="32" height="32" fill="#fff"/><g filter="url(#bl12)"><ellipse cx="15" cy="17" rx="8" ry="8" fill="#000" opacity="0.6"/></g><g filter="url(#bl05)"><path d="M9.6 11.5h1.6v1.6h-1.6zM22.1 14.2h1.7v1.7h-1.7zM20.1 18h1.7v1.7h-1.7zM9.1 8.7h0.7v0.7h-0.7zM11.6 17.7h1.3v1.3h-1.3zM14.3 16.7h0.9v0.9h-0.9zM13.1 27.5h1.5v1.5h-1.5zM19.4 24.2h0.8v0.8h-0.8zM13.2 15.3h0.6v0.6h-0.6zM17.2 14.6h0.9v0.9h-0.9zM24.3 15.9h0.9v0.9h-0.9zM20.6 15.6h1.4v1.4h-1.4zM18.1 28h1.4v1.4h-1.4zM24.5 14.9h1v1h-1zM13.2 19.2h0.8v0.8h-0.8zM18.6 18.6h1.3v1.3h-1.3zM21.9 17.2h1v1h-1zM11.9 25.2h1.2v1.2h-1.2zM12.9 22h1.4v1.4h-1.4zM26.7 21.6h0.6v0.6h-0.6zM15 7.7h0.6v0.6h-0.6zM16 12.5h1.3v1.3h-1.3zM16.4 17.1h0.8v0.8h-0.8zM17.9 16.1h1.5v1.5h-1.5zM24.9 12.1h1v1h-1zM11.6 21.6h1.5v1.5h-1.5zM20.9 22h1.6v1.6h-1.6zM15.8 16h1.7v1.7h-1.7zM18.5 19.4h1.3v1.3h-1.3zM18.6 14.8h1.7v1.7h-1.7zM11.2 15.8h1v1h-1zM15.8 18.7h0.8v0.8h-0.8zM9.2 1.9h0.8v0.8h-0.8zM27.9 21.2h1.2v1.2h-1.2zM12.2 19h1.3v1.3h-1.3zM17.3 12.3h1.1v1.1h-1.1zM24.6 20.7h0.6v0.6h-0.6zM6.2 17.4h0.8v0.8h-0.8zM13.7 5.3h1.4v1.4h-1.4zM15.5 14.8h1.1v1.1h-1.1zM20.3 24.5h1v1h-1zM22.5 6.5h1.1v1.1h-1.1zM7.6 17.6h1.2v1.2h-1.2zM13.8 21.7h0.8v0.8h-0.8zM5.2 27h1.8v1.8h-1.8zM11.2 13h1v1h-1zM18.1 19h1.5v1.5h-1.5zM17.9 13.6h1.5v1.5h-1.5zM16.1 9.7h1.4v1.4h-1.4zM15.3 12.4h1.4v1.4h-1.4zM14 22.4h1.5v1.5h-1.5zM13.6 13.3h1.7v1.7h-1.7zM11.4 11.9h0.6v0.6h-0.6zM11.7 15.9h1.4v1.4h-1.4zM6.8 19h1.4v1.4h-1.4zM16.3 12.8h1.4v1.4h-1.4zM14.3 8h1v1h-1zM20.1 8.9h1.4v1.4h-1.4zM26.4 15.2h1.2v1.2h-1.2zM12.3 16.5h1.6v1.6h-1.6zM19.8 14.9h1.4v1.4h-1.4zM13.6 9.4h0.8v0.8h-0.8zM16.2 10.8h1.4v1.4h-1.4zM9.3 20.2h1.5v1.5h-1.5zM10.2 11.2h0.6v0.6h-0.6zM17.7 21.4h1.4v1.4h-1.4zM16.4 24.2h1.4v1.4h-1.4zM20 18.4h0.9v0.9h-0.9zM17.3 17.9h1v1h-1zM16.3 19.9h0.6v0.6h-0.6zM10.6 18h1.3v1.3h-1.3zM12.1 15.1h1.7v1.7h-1.7zM19.7 17h0.9v0.9h-0.9zM13.1 18.3h1.6v1.6h-1.6zM14.1 17.9h1.3v1.3h-1.3zM19.8 20.4h1v1h-1zM4.9 11.1h1.6v1.6h-1.6zM7.6 21.3h1.4v1.4h-1.4zM13.3 18.9h1.3v1.3h-1.3zM4.4 12.3h1.8v1.8h-1.8zM11.7 14.2h1.7v1.7h-1.7zM17.2 17h1.3v1.3h-1.3zM13.1 15.2h1.4v1.4h-1.4zM18.5 14.1h1.1v1.1h-1.1zM15.6 20.9h1.8v1.8h-1.8zM6.5 25.4h1.7v1.7h-1.7zM12.1 14.9h1.8v1.8h-1.8zM10.2 17.1h1v1h-1zM20.3 16.4h0.9v0.9h-0.9zM12.7 17.4h1.3v1.3h-1.3zM11.4 18.4h1.5v1.5h-1.5zM15.3 16.3h1.2v1.2h-1.2zM13.4 28.1h1.5v1.5h-1.5zM15.1 20.8h0.8v0.8h-0.8zM18.8 16.7h1.3v1.3h-1.3zM8.5 18.1h1.3v1.3h-1.3zM14.9 14.6h1.5v1.5h-1.5zM13.2 22.6h1v1h-1zM13.4 22.6h1.2v1.2h-1.2zM10.1 23.1h1.3v1.3h-1.3zM18.4 17.8h1.1v1.1h-1.1zM23.3 12h1.3v1.3h-1.3zM23 17.8h1.1v1.1h-1.1zM8.6 13.6h1.4v1.4h-1.4zM4.9 18.2h1.1v1.1h-1.1zM8 22.9h0.8v0.8h-0.8zM12.5 25.7h0.7v0.7h-0.7zM18.7 10.7h1.1v1.1h-1.1zM13.2 25.1h1.7v1.7h-1.7zM18.3 21.3h1.3v1.3h-1.3zM10.9 17.1h0.8v0.8h-0.8zM7.8 12.5h0.7v0.7h-0.7zM16.1 25.8h1.6v1.6h-1.6zM14.5 16.1h1.5v1.5h-1.5zM14.6 15.6h1.6v1.6h-1.6zM16.3 23.8h1.7v1.7h-1.7zM14.4 14.5h1v1h-1zM17.3 15.7h1.3v1.3h-1.3zM12.7 18.5h1.3v1.3h-1.3zM17.1 17.6h1.1v1.1h-1.1zM16.4 17.7h1.3v1.3h-1.3zM14.5 7.2h0.8v0.8h-0.8zM11.4 18.7h1.3v1.3h-1.3zM4.2 17.7h1v1h-1zM21.7 19.5h0.8v0.8h-0.8zM11.3 12.8h1.7v1.7h-1.7zM9 14.7h0.9v0.9h-0.9zM11.7 15.8h1.5v1.5h-1.5zM12.5 16.7h0.9v0.9h-0.9zM9.8 22.7h0.8v0.8h-0.8zM13.5 10.2h0.7v0.7h-0.7zM14 15.2h0.7v0.7h-0.7zM12.2 15h1.7v1.7h-1.7zM11 17.5h1.6v1.6h-1.6zM22.3 18.4h0.7v0.7h-0.7zM21.6 26.6h1.4v1.4h-1.4zM15.4 19.4h1.8v1.8h-1.8zM10.7 9.3h0.8v0.8h-0.8zM12 13.8h0.9v0.9h-0.9zM11.8 22.7h1v1h-1zM13.1 18.7h1.6v1.6h-1.6zM10 10.1h1.1v1.1h-1.1zM18.3 12.3h1.3v1.3h-1.3zM8.2 13.5h1.1v1.1h-1.1zM16 17.7h0.8v0.8h-0.8zM24.4 19.5h1.2v1.2h-1.2zM15 16.9h1.2v1.2h-1.2zM19.9 12.7h1.1v1.1h-1.1zM12.9 17.5h0.8v0.8h-0.8zM17.4 20.9h1.1v1.1h-1.1zM16.9 15.1h0.9v0.9h-0.9zM14.5 19.8h0.9v0.9h-0.9zM15.5 22.5h0.6v0.6h-0.6zM18.9 14.9h1.7v1.7h-1.7zM12.4 10.4h1.2v1.2h-1.2zM17.2 16.2h1.4v1.4h-1.4zM13.2 24h1.5v1.5h-1.5zM16.6 19.7h0.6v0.6h-0.6zM15.2 18.9h1.1v1.1h-1.1zM19.3 16.2h1v1h-1zM11.3 17.8h1.5v1.5h-1.5zM14.5 14.2h0.9v0.9h-0.9zM9.9 6.9h1.4v1.4h-1.4zM3.6 22.5h0.6v0.6h-0.6zM22.4 20.1h1.1v1.1h-1.1zM20.6 18.7h1.8v1.8h-1.8zM10.8 16.5h0.7v0.7h-0.7zM23.9 21.4h1.2v1.2h-1.2zM16.4 16.4h0.9v0.9h-0.9zM19.4 18.5h0.7v0.7h-0.7zM14.8 21.9h1v1h-1zM16.2 17.4h1.8v1.8h-1.8zM17.4 22.2h1.1v1.1h-1.1zM13.1 16.6h1v1h-1zM19.5 20.8h1.7v1.7h-1.7zM7.6 11.5h0.9v0.9h-0.9zM20.7 17.7h1.2v1.2h-1.2zM11 15h1.4v1.4h-1.4zM13.5 6.5h1v1h-1zM6.8 19.8h0.9v0.9h-0.9zM18 19.8h0.7v0.7h-0.7zM16.2 8.2h1v1h-1zM16.3 18.4h0.9v0.9h-0.9zM19.2 19.6h1.3v1.3h-1.3zM15 18.7h1.4v1.4h-1.4zM17.9 18h0.9v0.9h-0.9zM13.5 18.6h1.1v1.1h-1.1zM12 24.4h1.3v1.3h-1.3zM20.3 12.8h1.5v1.5h-1.5zM10.6 14.7h1.6v1.6h-1.6zM8.6 7.1h1.5v1.5h-1.5zM13.9 13.4h1.6v1.6h-1.6zM13.2 18.7h0.7v0.7h-0.7zM16.7 20.3h1.4v1.4h-1.4zM14.6 18.7h1.5v1.5h-1.5zM14 16.6h0.7v0.7h-0.7zM18 20.3h1.6v1.6h-1.6zM21 14.9h0.9v0.9h-0.9zM11.1 19h1v1h-1zM21.1 17.5h1.6v1.6h-1.6zM14.7 14.9h1.2v1.2h-1.2zM18.4 23.6h1.1v1.1h-1.1zM22.6 13.8h0.7v0.7h-0.7zM10.8 26.7h1.2v1.2h-1.2zM10.5 19.1h1.5v1.5h-1.5zM20.2 14.7h1.8v1.8h-1.8zM13.2 15.7h1.6v1.6h-1.6zM13.7 17.8h1.8v1.8h-1.8zM20.9 18.3h1.2v1.2h-1.2zM18.4 13.8h0.9v0.9h-0.9zM14.5 20.2h1.3v1.3h-1.3zM10.2 23.3h0.9v0.9h-0.9zM12.9 19.9h1.8v1.8h-1.8zM19.8 9.1h1.3v1.3h-1.3zM12.9 18.6h1.6v1.6h-1.6zM13.7 17.1h0.8v0.8h-0.8zM21 21.4h1.7v1.7h-1.7zM17.6 25.1h1v1h-1zM11.2 8.3h1.3v1.3h-1.3zM16.4 12.6h0.6v0.6h-0.6zM8.9 16.5h0.8v0.8h-0.8zM11.9 19.7h0.6v0.6h-0.6zM13.3 21.4h1.2v1.2h-1.2zM13.7 12.4h1.8v1.8h-1.8zM19.2 7h1.4v1.4h-1.4zM12.3 11.8h1.6v1.6h-1.6zM11 21.9h1.4v1.4h-1.4zM11.3 16.5h0.7v0.7h-0.7zM18.7 19.3h1.3v1.3h-1.3zM15.4 9.4h1v1h-1zM18.3 15.3h1.5v1.5h-1.5zM21.9 20.5h1.4v1.4h-1.4zM24.5 14.3h1.4v1.4h-1.4zM19 10.3h1.3v1.3h-1.3zM16.4 22.6h1.7v1.7h-1.7zM15.9 30h1.3v1.3h-1.3zM14.7 17.2h1.1v1.1h-1.1zM17.9 23.3h1.7v1.7h-1.7zM20.4 13.5h1.1v1.1h-1.1zM20.4 21.6h1.3v1.3h-1.3zM14 12.5h1.7v1.7h-1.7zM15.9 21h0.9v0.9h-0.9zM7.9 9.9h0.8v0.8h-0.8zM9.7 10.9h0.9v0.9h-0.9zM20.5 19.4h1.6v1.6h-1.6zM20.4 11.6h1.1v1.1h-1.1zM10 19.7h1.7v1.7h-1.7zM13.8 20.7h1.3v1.3h-1.3zM17.9 16.4h0.6v0.6h-0.6zM19.4 21.1h1.3v1.3h-1.3zM16.2 19.9h1.3v1.3h-1.3zM10.7 11.2h1.5v1.5h-1.5zM19.9 19.1h1.6v1.6h-1.6zM18.9 15.9h1.6v1.6h-1.6zM8.6 8.3h0.9v0.9h-0.9zM12.1 8.3h1.2v1.2h-1.2zM17.4 18.9h0.8v0.8h-0.8zM17.2 18.5h1.3v1.3h-1.3zM21.1 22h1.5v1.5h-1.5zM18.4 9.1h1.5v1.5h-1.5zM25.2 11.5h1.4v1.4h-1.4zM17.1 16.5h0.7v0.7h-0.7zM17.9 18.3h1v1h-1zM8.3 18.9h1.5v1.5h-1.5zM19 19.5h1.3v1.3h-1.3zM13.4 18.7h1.3v1.3h-1.3zM10.1 22.2h1.2v1.2h-1.2zM25.8 14.3h0.7v0.7h-0.7zM15.5 9.3h1v1h-1zM18.9 20.7h1v1h-1zM14.2 6.3h1.1v1.1h-1.1zM13.6 22.5h1.4v1.4h-1.4zM16.5 10.9h1v1h-1zM10.4 25h1.2v1.2h-1.2zM19.6 18.6h0.9v0.9h-0.9zM14.1 15.4h0.9v0.9h-0.9zM19.3 20.1h1.8v1.8h-1.8zM10.6 15.8h1.7v1.7h-1.7zM18.6 19.5h1.6v1.6h-1.6zM22.8 17.3h1v1h-1zM18.5 17.4h1.1v1.1h-1.1zM10.9 20.9h0.7v0.7h-0.7zM17.4 29.7h1.1v1.1h-1.1zM13.1 17.4h0.9v0.9h-0.9zM21.7 14.9h1.2v1.2h-1.2zM19.3 18.6h1.5v1.5h-1.5zM9.3 19.6h1.7v1.7h-1.7zM11 11.6h0.6v0.6h-0.6zM22.8 18.2h1.1v1.1h-1.1zM21 10.6h1.7v1.7h-1.7zM2.6 29.4h1.5v1.5h-1.5zM17 15.3h1.5v1.5h-1.5zM4.1 23h1.8v1.8h-1.8zM16 21.9h0.9v0.9h-0.9zM11.3 17.7h1.4v1.4h-1.4zM17 19h1.1v1.1h-1.1zM19 19.1h1.7v1.7h-1.7zM17.3 14.9h0.6v0.6h-0.6zM20.5 6.2h1.3v1.3h-1.3zM17.2 19.7h1.7v1.7h-1.7zM16.1 16.5h0.8v0.8h-0.8zM11.7 18.6h1.5v1.5h-1.5zM9.5 22.9h0.8v0.8h-0.8zM2.6 15.5h1.4v1.4h-1.4zM16.9 18.2h1.4v1.4h-1.4zM11.9 20.3h1.2v1.2h-1.2zM4.6 10.9h0.9v0.9h-0.9zM11.7 15.4h1.3v1.3h-1.3zM14.7 14.4h1.2v1.2h-1.2zM14.8 16.4h1.5v1.5h-1.5zM10.2 19.8h1.3v1.3h-1.3zM15.4 15.4h1.2v1.2h-1.2zM19.4 18.1h1v1h-1zM18.8 17.5h1.1v1.1h-1.1zM9.1 8h1v1h-1zM7.9 15.6h1.7v1.7h-1.7zM28 12.6h1v1h-1zM20.3 26.6h0.7v0.7h-0.7zM7.9 19.5h1.2v1.2h-1.2zM7 24h1v1h-1zM6.8 14.1h0.8v0.8h-0.8zM11.8 21.5h1.3v1.3h-1.3zM16.3 22.1h0.7v0.7h-0.7zM18.6 19.3h0.8v0.8h-0.8zM18.5 16.2h0.9v0.9h-0.9zM16.6 9.3h0.9v0.9h-0.9zM18.1 11.1h1.1v1.1h-1.1zM12.6 14.4h0.9v0.9h-0.9zM18.5 13.4h1.7v1.7h-1.7zM16.1 19.3h0.7v0.7h-0.7zM14.6 10.9h0.6v0.6h-0.6zM23.3 19.4h1.2v1.2h-1.2zM15.9 16h1.3v1.3h-1.3zM20.4 22.2h1.3v1.3h-1.3zM12.5 14.8h1.7v1.7h-1.7zM16.3 18.1h1.4v1.4h-1.4zM16.4 18h1.2v1.2h-1.2zM9.2 8.8h1.5v1.5h-1.5zM21 19.9h1.6v1.6h-1.6zM20.6 22.5h0.9v0.9h-0.9zM14.9 17.3h1.5v1.5h-1.5zM5.1 16h1.2v1.2h-1.2zM16.8 19.8h0.9v0.9h-0.9zM17.9 15.9h0.7v0.7h-0.7zM13.9 18.6h1.1v1.1h-1.1zM10.2 12.2h0.8v0.8h-0.8zM18.4 21.3h1.4v1.4h-1.4zM9.3 19h1.7v1.7h-1.7zM17.2 20h1.2v1.2h-1.2zM5.4 14.7h1.3v1.3h-1.3zM12.5 12.7h1.5v1.5h-1.5zM17 13.6h0.7v0.7h-0.7zM14.7 21.5h1.7v1.7h-1.7zM14.4 23.7h1.4v1.4h-1.4zM17.2 16.4h1.5v1.5h-1.5zM13.9 18.9h1.4v1.4h-1.4zM18.4 11.7h0.7v0.7h-0.7zM19.5 16.2h1.4v1.4h-1.4zM14.4 13.3h1.1v1.1h-1.1zM14 18.9h0.7v0.7h-0.7zM14 12.2h1.6v1.6h-1.6zM18.6 18.6h0.8v0.8h-0.8zM22.6 14h1.7v1.7h-1.7zM12.8 16.9h1.1v1.1h-1.1zM15.2 18.1h1.3v1.3h-1.3zM14.5 19.2h1.2v1.2h-1.2zM25.1 12.3h1.2v1.2h-1.2zM21.3 21.9h0.7v0.7h-0.7zM13.1 16.5h1.8v1.8h-1.8zM10.2 15.6h0.9v0.9h-0.9zM3.3 12.9h1.1v1.1h-1.1zM16.4 22.6h1.7v1.7h-1.7zM10.2 21.6h1.7v1.7h-1.7zM11.2 24.8h1.2v1.2h-1.2zM16 18.2h1.7v1.7h-1.7zM10.1 18.1h1.7v1.7h-1.7zM10.2 14.5h0.9v0.9h-0.9zM14.9 13.3h1.2v1.2h-1.2zM15.3 10.5h0.8v0.8h-0.8zM17.1 24.1h1.5v1.5h-1.5zM27.7 27h0.8v0.8h-0.8zM16 18.8h1.1v1.1h-1.1zM8.4 10.5h0.8v0.8h-0.8zM14.3 14.9h1.3v1.3h-1.3zM14.9 21.5h0.7v0.7h-0.7zM14.6 14.6h1.5v1.5h-1.5zM11.8 22.5h1.4v1.4h-1.4zM5.7 17.7h1.7v1.7h-1.7zM14.2 21.2h1.7v1.7h-1.7zM18.2 20.7h1.1v1.1h-1.1zM17.4 16.6h1.4v1.4h-1.4zM15.3 9.3h0.6v0.6h-0.6zM18.7 15.6h1.6v1.6h-1.6zM12.5 12.7h1.6v1.6h-1.6zM13.1 13.1h1.5v1.5h-1.5zM7.8 16.8h1.3v1.3h-1.3zM15.8 14.3h1.2v1.2h-1.2zM23.1 17.1h1.5v1.5h-1.5zM15.7 15.8h1.2v1.2h-1.2zM12.7 17.3h0.8v0.8h-0.8zM23.9 15.5h0.9v0.9h-0.9zM18.2 10.9h1.1v1.1h-1.1zM13 14.3h0.9v0.9h-0.9zM21.7 17.4h1.3v1.3h-1.3zM14.8 11.3h1.1v1.1h-1.1zM12.4 24.3h1v1h-1zM8.6 12.4h1.1v1.1h-1.1zM14.4 15.4h0.9v0.9h-0.9zM16.4 14.7h0.7v0.7h-0.7zM22.8 17.7h0.7v0.7h-0.7zM10.2 18.3h1.6v1.6h-1.6zM9.5 17.9h0.6v0.6h-0.6zM17.2 9.1h1.3v1.3h-1.3zM18.2 11.3h1.5v1.5h-1.5zM18.8 11.6h0.6v0.6h-0.6zM25.4 7.4h0.8v0.8h-0.8zM18.8 18.8h0.7v0.7h-0.7zM13.6 18.5h0.9v0.9h-0.9zM19.9 17.1h1v1h-1zM14.4 12.3h0.8v0.8h-0.8zM24.3 14.1h1.4v1.4h-1.4zM16 21.8h1.1v1.1h-1.1zM14.1 17.6h1.1v1.1h-1.1zM15.8 9.7h1.6v1.6h-1.6zM11.8 9.6h1.6v1.6h-1.6zM22.1 12.8h1.1v1.1h-1.1zM11.4 11.1h1.7v1.7h-1.7zM13.9 11.9h0.8v0.8h-0.8zM13.4 20.2h1.4v1.4h-1.4zM15.4 13.9h1.2v1.2h-1.2zM17.4 13.1h0.7v0.7h-0.7zM11.6 14.2h0.8v0.8h-0.8zM14.9 17.5h0.8v0.8h-0.8zM13.1 18h0.6v0.6h-0.6zM4 13.3h1.6v1.6h-1.6zM10.2 26.7h0.7v0.7h-0.7zM15.3 17.5h0.7v0.7h-0.7zM8.8 12.2h1.2v1.2h-1.2zM16.7 12h1.7v1.7h-1.7zM10.6 13.3h0.8v0.8h-0.8zM10.6 19.3h1.6v1.6h-1.6zM15.5 21h1.6v1.6h-1.6zM20.2 19.6h0.9v0.9h-0.9zM11.9 11.4h0.7v0.7h-0.7zM14.4 12.1h1v1h-1zM20 10.5h1v1h-1zM14 14.8h1.2v1.2h-1.2zM20.7 20.4h1.7v1.7h-1.7zM14.1 16h1.2v1.2h-1.2zM10.1 18h0.8v0.8h-0.8zM14.1 22.2h0.7v0.7h-0.7zM13.4 13.8h0.9v0.9h-0.9zM18.3 19.2h1.7v1.7h-1.7zM14.5 19.1h1v1h-1zM16.9 16.3h1v1h-1zM16.8 24h1.2v1.2h-1.2zM22.5 22.5h1v1h-1zM13 12.1h1.6v1.6h-1.6zM18.1 18.2h0.9v0.9h-0.9zM14.2 25.9h1.2v1.2h-1.2zM11.9 21.7h1.6v1.6h-1.6zM10.4 14.8h1.4v1.4h-1.4zM11.5 13.8h1.1v1.1h-1.1zM18.3 20.8h1.7v1.7h-1.7zM13.5 21.3h1.3v1.3h-1.3zM12.6 15.4h1.1v1.1h-1.1zM14.9 15.6h0.7v0.7h-0.7zM15.3 6.6h0.7v0.7h-0.7zM20.6 20.3h0.9v0.9h-0.9zM14.3 15.9h1.1v1.1h-1.1zM17.2 20.7h1.4v1.4h-1.4zM6 16.4h1.6v1.6h-1.6zM8.5 10.7h0.8v0.8h-0.8zM11 17.7h1.3v1.3h-1.3zM22.3 23.4h1v1h-1zM17.3 5.8h1.7v1.7h-1.7zM8 23h1.8v1.8h-1.8zM20.2 22.8h1.5v1.5h-1.5zM11.4 18h0.8v0.8h-0.8zM5.9 22.9h1.1v1.1h-1.1zM14.8 23.7h1.1v1.1h-1.1zM11.2 13.5h0.9v0.9h-0.9zM23.3 19h1.4v1.4h-1.4zM15.2 22.6h1.3v1.3h-1.3zM5.1 16.8h1.5v1.5h-1.5zM13.5 21.1h1.3v1.3h-1.3zM20.6 26.5h0.7v0.7h-0.7zM11.3 17h1.2v1.2h-1.2zM18.1 18h1.8v1.8h-1.8zM15.8 13.7h1.1v1.1h-1.1zM17.3 17.5h0.8v0.8h-0.8zM19 16.6h0.9v0.9h-0.9zM17 17.9h1.8v1.8h-1.8zM14.4 6.2h1.6v1.6h-1.6zM15.7 13.4h0.8v0.8h-0.8zM14.8 18.8h0.8v0.8h-0.8zM14 11.5h0.6v0.6h-0.6zM12 25.8h1.6v1.6h-1.6zM14 9.3h1.7v1.7h-1.7zM10.8 15.3h1.3v1.3h-1.3zM14.7 18.3h0.9v0.9h-0.9zM12.8 17.6h0.7v0.7h-0.7zM15.1 21.6h1.7v1.7h-1.7zM6.3 17.7h1.5v1.5h-1.5zM11.6 14.7h1.1v1.1h-1.1zM12.3 23.2h1.6v1.6h-1.6zM16 13.1h0.8v0.8h-0.8zM21.1 17.4h0.9v0.9h-0.9zM18.9 17.1h0.9v0.9h-0.9zM16.9 23.8h1.3v1.3h-1.3zM13.5 24.6h0.8v0.8h-0.8zM17 15.9h1.3v1.3h-1.3zM12.9 9.5h1.2v1.2h-1.2zM19.5 12.1h1.4v1.4h-1.4zM17.6 18.5h1.2v1.2h-1.2zM13 16.4h1.5v1.5h-1.5zM12 21.5h1.2v1.2h-1.2zM17.1 13.5h1.3v1.3h-1.3z" fill="#000" opacity="0.8"/></g><path d="M29.5 26.2l3.8 1.9M21.3 7.2l1.8 2.5M11.8 -0.9l-1.8 3.2M9.6 21.6l-2.1 2.5M5.3 14.9l-0.9 1.9M16.3 27.9l-1 4.4M19.8 18.6l-0 4.2M19 28.2l0.8 2.8M16.6 14.1l-2.9 0.6M11.9 20.6l0.5 4.5M16.6 25.7l0.5 2.9M22.4 24.9l0.9 3.3M12.3 15l-3.9 2.5M14.7 29.9l-1.7 2.3M14.6 19.9l0.9 3.2M7 17.7l-0.4 2.3M16.4 25.8l0.2 2.5M11.7 36.2l-3.4 2.5M10.5 22.8l-2.2 2.9M13.8 15.5l-1.6 2M11 24.6l-3.2 0.5M12.1 13.2l-2.7 0.5M4.8 14.3l-2 2.7M14.4 16.2l-3.7 0.2M10.6 14l0.2 3.9" stroke="#000" stroke-width="0.4" fill="none" opacity="0.4" stroke-linecap="round"/><path d="M32 24.500V32H24.500z" fill="#ff8585"/><path d="M26 28.500h5M28.500 26v5" stroke="#000" stroke-width="1.100" fill="none"/></g><g transform="translate(70 70)" clip-path="url(#cc)"><rect width="32" height="32" fill="#fff"/><path d="M7 5l3 6" stroke="#888" stroke-width="1.6" stroke-linecap="round"/><path d="M32 24.500V32H24.500z" fill="#ff8585"/></g><g transform="translate(104 70)" clip-path="url(#cc)"><rect width="32" height="32" fill="#fff"/><g filter="url(#bl04)"><g fill="#000"><circle cx="17" cy="4.500" r="1.200"/><circle cx="28" cy="15" r="1.100" opacity=".8"/><circle cx="20" cy="15.500" r="1.500" opacity=".6"/><circle cx="14" cy="19" r="1.400" opacity=".6"/><ellipse cx="8.500" cy="22" rx="2" ry="1.100" opacity=".8"/><circle cx="20" cy="27" r="1.700" opacity=".5"/><circle cx="19" cy="10" r=".8" opacity=".4"/></g></g><path d="M26 28.500h5M28.500 26v5" stroke="#000" stroke-width="1.100" fill="none"/></g><g transform="translate(138 70)" clip-path="url(#cc)"><rect width="32" height="32" fill="#fff"/><g filter="url(#bl04)"><path d="M10.8 8.3h2.5v2.5h-2.5zM4.7 16.8h2.1v2.1h-2.1zM4.4 16.2h1.7v1.7h-1.7zM13.4 6.5h1.7v1.7h-1.7zM13.2 23.2h1.8v1.8h-1.8zM8.4 18.8h2.9v2.9h-2.9zM16.9 13.7h3v3h-3zM10 8.2h1.8v1.8h-1.8zM10.4 23h1.9v1.9h-1.9zM17 19.1h2.1v2.1h-2.1zM16.1 6.4h1.7v1.7h-1.7zM7.9 20h2.2v2.2h-2.2zM10.5 17.9h2.2v2.2h-2.2zM10.2 22.5h2.6v2.6h-2.6zM8.9 17.6h2.3v2.3h-2.3zM24 21h2v2h-2zM13 21.7h1.8v1.8h-1.8zM14.7 5.9h2.5v2.5h-2.5zM21.3 17.6h2.8v2.8h-2.8zM10.5 20.3h2.4v2.4h-2.4zM16.9 15h2.8v2.8h-2.8zM25.7 15.4h2.5v2.5h-2.5zM4.5 20.4h2.5v2.5h-2.5zM9.8 13.5h2.5v2.5h-2.5zM3.5 15.2h1.8v1.8h-1.8zM21.4 7.8h1.9v1.9h-1.9zM12.4 24.2h1.7v1.7h-1.7zM13.8 17.1h2.8v2.8h-2.8zM22.7 24h2v2h-2zM13 12.9h2.8v2.8h-2.8z" fill="#000" opacity="0.85"/></g><path d="M26 28.500h5M28.500 26v5" stroke="#000" stroke-width="1.100" fill="none"/></g><g transform="translate(172 70)" clip-path="url(#cc)"><rect width="32" height="32" fill="#fff"/><path d="M7 19.9h0.9v0.9h-0.9zM9 18.4h1v1h-1zM14.9 14.9h0.9v0.9h-0.9zM10.4 12.8h1.1v1.1h-1.1zM13.1 5.7h1v1h-1zM18.9 12.1h1v1h-1zM12.1 19.6h1v1h-1zM19.6 24.6h1v1h-1zM26.7 14.7h0.9v0.9h-0.9zM26.7 16.9h1v1h-1zM25.1 9.9h1v1h-1zM22.3 5.3h1v1h-1zM20.9 25.8h1.1v1.1h-1.1zM16.1 7.7h0.9v0.9h-0.9zM16.7 15.2h0.9v0.9h-0.9zM25.7 15.2h1v1h-1zM9.3 8.9h0.9v0.9h-0.9zM12.2 9.4h1v1h-1zM13 23h1.1v1.1h-1.1zM8.2 12.5h0.9v0.9h-0.9zM8.8 21.4h1v1h-1zM12.2 7.1h1v1h-1z" fill="#000" opacity="0.9"/></g><g transform="translate(206 70)" clip-path="url(#cc)"><rect width="32" height="32" fill="#fff"/><g filter="url(#bl03)"><g fill="none" stroke="#000" stroke-width="0.9" opacity="0.85"><circle cx="15.2" cy="12.3" r="2.2"/><circle cx="16.1" cy="23.7" r="2.1"/><circle cx="17.2" cy="17.6" r="2.1"/><circle cx="20.8" cy="7.7" r="2.4"/><circle cx="8.6" cy="15.1" r="3.5"/><circle cx="7.2" cy="10" r="2.3"/><circle cx="11.3" cy="21.6" r="2.3"/><circle cx="16.9" cy="4.5" r="2.1"/><circle cx="20.4" cy="24.6" r="2.4"/><circle cx="26.7" cy="16.6" r="2"/><circle cx="26.1" cy="11.9" r="2.2"/><circle cx="20.9" cy="19.8" r="2.2"/><circle cx="20.1" cy="14.1" r="2.8"/><circle cx="12.5" cy="8.3" r="2.9"/><circle cx="13.7" cy="15.8" r="2.1"/><circle cx="7" cy="19.9" r="2"/></g></g><path d="M20.8 6.2h0.9v0.9h-0.9zM25 21.3h0.6v0.6h-0.6zM24.5 8.3h0.7v0.7h-0.7zM12.6 14.8h0.9v0.9h-0.9zM8.6 21.6h0.8v0.8h-0.8zM14.7 16.1h0.6v0.6h-0.6zM17.5 27h0.6v0.6h-0.6zM22.1 22.4h0.8v0.8h-0.8zM21 13.2h0.6v0.6h-0.6zM13 11.7h0.8v0.8h-0.8zM24.5 7.6h0.5v0.5h-0.5zM4.5 12.2h0.5v0.5h-0.5zM14.3 18.5h0.8v0.8h-0.8zM16.6 23.3h0.8v0.8h-0.8zM18.7 16.7h0.8v0.8h-0.8zM20.6 10.9h0.8v0.8h-0.8zM20.3 13.6h0.6v0.6h-0.6zM19.2 6.7h0.8v0.8h-0.8zM21.4 24.9h0.5v0.5h-0.5zM18.1 16.3h0.7v0.7h-0.7zM13.6 2.2h0.9v0.9h-0.9zM26.7 17.5h0.4v0.4h-0.4zM19.5 9.8h0.6v0.6h-0.6zM19.9 8h0.7v0.7h-0.7zM14 27.6h0.5v0.5h-0.5zM20.8 22.8h0.8v0.8h-0.8zM10 24.5h0.5v0.5h-0.5zM6.9 18.1h0.9v0.9h-0.9zM13.7 6.6h0.4v0.4h-0.4zM13.7 24.6h0.7v0.7h-0.7zM15.6 15.7h0.5v0.5h-0.5zM9 8.9h0.8v0.8h-0.8zM20 3.3h0.7v0.7h-0.7zM16.5 25.4h0.8v0.8h-0.8zM15.2 27.8h0.5v0.5h-0.5zM11 7.9h0.8v0.8h-0.8zM5.7 13.5h0.8v0.8h-0.8zM21.6 10.2h0.5v0.5h-0.5zM24.4 24h0.7v0.7h-0.7zM18.5 4.7h0.6v0.6h-0.6zM10.3 15h0.5v0.5h-0.5zM18.9 14.1h0.9v0.9h-0.9zM6.7 7h0.7v0.7h-0.7zM17.4 16.9h0.8v0.8h-0.8zM21.3 7.1h0.5v0.5h-0.5zM25.8 20.9h0.6v0.6h-0.6zM21.3 20.2h0.4v0.4h-0.4zM14.6 22.1h0.8v0.8h-0.8zM20.7 10.6h0.8v0.8h-0.8zM17.4 27.9h0.9v0.9h-0.9zM8.5 15.7h0.7v0.7h-0.7zM21.8 22.2h0.6v0.6h-0.6zM26.4 10.3h0.6v0.6h-0.6zM24.4 24.6h0.4v0.4h-0.4zM18.7 25.3h0.6v0.6h-0.6zM6.8 17.5h0.8v0.8h-0.8zM8.6 22.2h0.5v0.5h-0.5zM6.5 23.6h0.6v0.6h-0.6zM4.8 9h0.8v0.8h-0.8zM25.2 10.5h0.4v0.4h-0.4zM21 5.2h0.8v0.8h-0.8zM16.3 25.3h0.4v0.4h-0.4zM18.8 11.3h0.7v0.7h-0.7zM16.4 19h0.6v0.6h-0.6zM23.1 24.5h0.4v0.4h-0.4zM19.1 6.9h0.6v0.6h-0.6zM26.7 18.4h0.6v0.6h-0.6zM15.1 11.2h0.7v0.7h-0.7zM13.6 5.6h0.7v0.7h-0.7zM12.3 18h0.8v0.8h-0.8zM17.4 25h0.4v0.4h-0.4zM17.1 8.7h0.7v0.7h-0.7zM23 16.9h0.5v0.5h-0.5zM13.9 7.7h0.8v0.8h-0.8zM13.1 8h0.9v0.9h-0.9zM17.7 16.2h0.9v0.9h-0.9zM19.2 22.9h0.6v0.6h-0.6zM16.3 9.4h0.8v0.8h-0.8zM10 9.7h0.5v0.5h-0.5zM26.5 11.9h0.8v0.8h-0.8zM16.6 6.7h0.7v0.7h-0.7zM25.1 13.7h0.9v0.9h-0.9zM20.4 14.7h0.8v0.8h-0.8zM20.9 26.2h0.5v0.5h-0.5zM13.1 13.7h0.7v0.7h-0.7zM5.6 14.2h0.9v0.9h-0.9zM22.4 19.4h0.5v0.5h-0.5zM24.8 8.4h0.9v0.9h-0.9zM14.8 7.3h0.7v0.7h-0.7zM19.8 16.1h0.8v0.8h-0.8zM17 23.2h0.8v0.8h-0.8zM16.7 27.4h0.6v0.6h-0.6zM22.1 22.8h0.6v0.6h-0.6zM26.5 19.9h0.4v0.4h-0.4zM22.4 12.9h0.4v0.4h-0.4zM14.6 14.2h0.7v0.7h-0.7zM21.8 9.5h0.4v0.4h-0.4zM20.4 6.1h0.9v0.9h-0.9zM18.8 22.2h0.8v0.8h-0.8zM10.3 18.2h0.7v0.7h-0.7zM3.6 12.2h0.4v0.4h-0.4zM28.1 12.3h0.4v0.4h-0.4zM6.2 17.2h0.6v0.6h-0.6zM8.2 19.8h0.4v0.4h-0.4zM13.1 9.2h0.4v0.4h-0.4zM11.2 21h0.6v0.6h-0.6zM4.3 9.6h0.6v0.6h-0.6zM9.5 4.4h0.8v0.8h-0.8zM15.4 22.4h0.7v0.7h-0.7zM12.1 21.6h0.6v0.6h-0.6zM17.2 19h0.6v0.6h-0.6zM14.4 4.2h0.5v0.5h-0.5zM19.9 23.9h0.9v0.9h-0.9zM9.7 16.6h0.7v0.7h-0.7zM9 13.1h0.6v0.6h-0.6zM20.4 19.3h0.5v0.5h-0.5zM26.1 10.2h0.6v0.6h-0.6zM24.9 7.2h0.4v0.4h-0.4zM3.8 18h0.7v0.7h-0.7zM12 27.3h0.5v0.5h-0.5z" fill="#000" opacity="0.35"/><path d="M26 28.500h5M28.500 26v5" stroke="#000" stroke-width="1.100" fill="none"/></g><g transform="translate(2 104)" clip-path="url(#cc)"><rect width="32" height="32" fill="#fff"/><g fill="none" stroke="#000" stroke-width="1.2" opacity="0.95"><circle cx="17.8" cy="14.2" r="2.6"/><circle cx="9" cy="23.5" r="3"/><circle cx="19.9" cy="7.5" r="2.4"/><circle cx="12" cy="10.2" r="3.3"/><circle cx="25.2" cy="18.6" r="2.2"/><circle cx="21" cy="20.3" r="1.7"/><circle cx="28.7" cy="19.1" r="1.5"/><circle cx="27.3" cy="10.9" r="2.1"/><circle cx="14.4" cy="5.2" r="2.6"/><circle cx="25" cy="7" r="1.8"/><circle cx="12.6" cy="18.7" r="1.6"/><circle cx="5.9" cy="14.8" r="1.7"/><circle cx="16.6" cy="26.3" r="2.4"/><circle cx="23.2" cy="13.7" r="3"/><circle cx="8.2" cy="17.8" r="2.3"/><circle cx="24.4" cy="24.3" r="2.1"/><circle cx="12.8" cy="14.9" r="2.1"/><circle cx="7.8" cy="7.6" r="2.2"/><circle cx="15.5" cy="21.7" r="2.1"/><circle cx="5" cy="19.9" r="1.9"/><circle cx="8.7" cy="13.8" r="1.5"/><circle cx="2.7" cy="16.7" r="1.6"/><circle cx="12.3" cy="27.2" r="2.5"/><circle cx="3.3" cy="12.9" r="1.7"/><circle cx="4.7" cy="9.6" r="1.9"/><circle cx="27.4" cy="22.1" r="2"/><circle cx="18.1" cy="19.1" r="1.5"/><circle cx="10.5" cy="5.6" r="1.4"/><circle cx="20.9" cy="27" r="1.7"/><circle cx="19.5" cy="23.6" r="1.7"/></g><path d="M26 28.500h5M28.500 26v5" stroke="#000" stroke-width="1.100" fill="none"/></g><g transform="translate(36 104)" clip-path="url(#cc)"><rect width="32" height="32" fill="#fff"/><g filter="url(#bl05)"><path d="M7.4 18.5h1.4v1.4h-1.4zM7.9 17.7h1.1v1.1h-1.1zM19.3 23.1h1.1v1.1h-1.1zM16.8 13.2h0.8v0.8h-0.8zM26.7 22.4h1.2v1.2h-1.2zM25.9 13.9h1.1v1.1h-1.1zM16.7 16.9h1v1h-1zM20.2 17.5h0.7v0.7h-0.7zM23.7 17.4h0.9v0.9h-0.9zM20.6 9.4h1.1v1.1h-1.1zM5.7 16h1v1h-1zM29.4 15.7h1.2v1.2h-1.2zM14 20.3h0.8v0.8h-0.8zM26.8 20.7h0.9v0.9h-0.9zM19.9 10.7h1.5v1.5h-1.5zM16.1 15.8h0.7v0.7h-0.7zM22.7 12.1h1.5v1.5h-1.5zM13.8 17.5h1.1v1.1h-1.1zM17 10.9h0.6v0.6h-0.6zM7 30.6h1.3v1.3h-1.3zM19.9 19.3h0.6v0.6h-0.6zM27.6 20.3h0.7v0.7h-0.7zM8.9 13.4h0.7v0.7h-0.7zM15.6 12.6h1.1v1.1h-1.1zM21.4 20.5h0.7v0.7h-0.7zM18 10.8h1.4v1.4h-1.4zM17.7 22.3h1.4v1.4h-1.4zM14 13.7h1.5v1.5h-1.5zM17.2 20.9h1.3v1.3h-1.3zM13.2 20.8h0.6v0.6h-0.6zM23.8 20.6h0.7v0.7h-0.7zM10.6 12.3h1v1h-1zM23.8 14.1h1.1v1.1h-1.1zM19 12.9h0.7v0.7h-0.7zM26.8 9.5h0.7v0.7h-0.7zM20.2 25.9h1.4v1.4h-1.4zM23 10h0.9v0.9h-0.9zM17.6 17.1h1.5v1.5h-1.5zM16.8 26.1h0.8v0.8h-0.8zM20.2 8.2h0.8v0.8h-0.8zM21 25.3h0.6v0.6h-0.6zM17.2 24.2h1.4v1.4h-1.4zM11.7 12.5h1.4v1.4h-1.4zM16.4 17.1h0.8v0.8h-0.8zM13.7 16.8h0.7v0.7h-0.7zM9.8 22.2h0.6v0.6h-0.6zM6.5 26.4h1.5v1.5h-1.5zM10.1 7.7h1.1v1.1h-1.1zM17.2 17.3h0.5v0.5h-0.5zM25.2 10.6h1.5v1.5h-1.5zM25.9 17.2h1v1h-1zM15.3 10.3h1.5v1.5h-1.5zM23.8 19.7h1.2v1.2h-1.2zM25.3 9.8h1.2v1.2h-1.2zM20.2 2.1h0.9v0.9h-0.9zM10 3.2h1.4v1.4h-1.4zM5.3 21.7h1.4v1.4h-1.4zM7.2 12h0.9v0.9h-0.9zM7.7 11.6h0.6v0.6h-0.6zM24.2 8.8h0.9v0.9h-0.9zM15.1 7.5h0.9v0.9h-0.9zM17.5 13.7h1.3v1.3h-1.3zM25.3 17.6h1v1h-1zM17.3 26h1v1h-1zM4.2 6.4h0.8v0.8h-0.8zM21.9 16.4h1.2v1.2h-1.2zM17.3 19.8h1.4v1.4h-1.4zM11.9 10.1h1.4v1.4h-1.4zM11.2 24.5h0.7v0.7h-0.7zM4.5 21h1.4v1.4h-1.4zM21 11.6h1.1v1.1h-1.1zM14.5 19.2h1v1h-1zM23.1 5.2h1.2v1.2h-1.2zM21.4 14.4h0.7v0.7h-0.7zM10.7 17.6h0.7v0.7h-0.7zM7.6 20.7h1v1h-1zM10.7 27.4h1.5v1.5h-1.5zM13.4 16.8h0.5v0.5h-0.5zM17.4 14.6h1.2v1.2h-1.2zM10.6 13.6h1.3v1.3h-1.3zM19.8 16.4h1v1h-1zM29 17.9h0.7v0.7h-0.7zM17.4 17.6h1.1v1.1h-1.1zM6.7 19h1.2v1.2h-1.2zM22.2 0.7h1.2v1.2h-1.2zM18.5 23h0.7v0.7h-0.7zM23.9 16.5h1.2v1.2h-1.2zM18.4 20.7h0.8v0.8h-0.8zM13.2 8.5h1.1v1.1h-1.1zM16.3 9.5h1.3v1.3h-1.3zM18.5 14.5h1.4v1.4h-1.4zM15.4 12.6h1v1h-1zM5.2 5.9h0.9v0.9h-0.9zM2.9 10.4h1.3v1.3h-1.3zM23.3 13.5h1.2v1.2h-1.2zM19.1 26h1.3v1.3h-1.3zM9 8h0.7v0.7h-0.7zM24.6 14.9h1.3v1.3h-1.3zM9.4 28.9h1.4v1.4h-1.4zM14.3 18.2h0.9v0.9h-0.9zM4.6 12.5h1v1h-1zM28.5 18.1h0.6v0.6h-0.6zM17.3 12.2h0.8v0.8h-0.8zM16.9 12.5h0.6v0.6h-0.6zM4.8 14.9h1.3v1.3h-1.3zM9.7 1.4h1v1h-1zM18.8 15.1h0.7v0.7h-0.7zM10.3 15.1h1.2v1.2h-1.2zM10.5 9.9h1.3v1.3h-1.3zM10.4 13.9h0.9v0.9h-0.9zM24.5 4.5h0.7v0.7h-0.7zM26.9 2.2h1v1h-1zM11.8 14.1h1v1h-1zM6.5 15.8h0.5v0.5h-0.5zM24.3 14.5h0.9v0.9h-0.9zM18.8 8.1h1v1h-1zM15.1 13.8h1v1h-1zM1 24.4h1.4v1.4h-1.4zM15 23.3h0.6v0.6h-0.6zM4.2 20.8h1.4v1.4h-1.4zM10 16.8h0.7v0.7h-0.7zM4.2 6h0.6v0.6h-0.6zM16.3 14.6h0.7v0.7h-0.7zM17.5 25.8h0.8v0.8h-0.8zM10 23.1h0.6v0.6h-0.6zM15.6 12.7h1v1h-1zM16 20.3h1v1h-1zM9.7 18.4h0.9v0.9h-0.9zM11.9 15.3h0.7v0.7h-0.7zM9.2 9.2h1v1h-1zM21.7 8.8h1.4v1.4h-1.4zM17.3 26.6h1.3v1.3h-1.3zM21 12.7h0.8v0.8h-0.8zM20.3 13.9h1.5v1.5h-1.5zM18.9 13.7h0.7v0.7h-0.7zM15.2 11h0.6v0.6h-0.6zM19.6 10.1h1.3v1.3h-1.3zM21 20.7h1.2v1.2h-1.2zM20.7 16.5h1.2v1.2h-1.2zM22.2 21.1h1.3v1.3h-1.3zM5.4 15.8h0.7v0.7h-0.7zM19 17.3h0.5v0.5h-0.5zM8 13.5h1.1v1.1h-1.1zM18.7 19.3h0.7v0.7h-0.7zM18.8 14.7h0.6v0.6h-0.6zM23.4 13.8h1.3v1.3h-1.3zM12.4 22.5h1v1h-1zM7.4 19.7h0.5v0.5h-0.5zM11.9 4.1h0.7v0.7h-0.7zM5 19h0.9v0.9h-0.9zM17.4 19.7h1v1h-1zM30.7 17.3h1.3v1.3h-1.3zM12.1 3.6h1.1v1.1h-1.1zM8.2 21h1v1h-1zM28.6 14.7h0.8v0.8h-0.8zM25.8 10.3h1.3v1.3h-1.3zM18.8 9.9h1.4v1.4h-1.4zM23.9 9.1h1.3v1.3h-1.3zM16.7 9.4h1.2v1.2h-1.2zM21.8 18.5h1v1h-1zM22.5 16.4h1.1v1.1h-1.1zM12.4 12.7h1.4v1.4h-1.4zM12.8 10.9h1.2v1.2h-1.2zM8.2 12.6h0.9v0.9h-0.9zM26 16h1.2v1.2h-1.2zM25.6 17.3h1.2v1.2h-1.2zM15.7 22.6h0.6v0.6h-0.6zM18.3 21.9h0.6v0.6h-0.6zM15.9 30.1h1.1v1.1h-1.1zM7.8 7h0.6v0.6h-0.6zM6.3 9.7h0.5v0.5h-0.5zM19.7 14.4h1v1h-1zM20 22.6h1.1v1.1h-1.1zM8.5 19.8h1.1v1.1h-1.1zM12.2 20h1.2v1.2h-1.2zM10.7 14h1.2v1.2h-1.2zM15.7 17h0.7v0.7h-0.7zM19.9 17h1.3v1.3h-1.3zM4.5 24.8h1.2v1.2h-1.2zM18.6 15.1h1.4v1.4h-1.4zM8.8 19.2h1.5v1.5h-1.5zM16.3 23.9h1.4v1.4h-1.4zM14.7 8.8h1.5v1.5h-1.5zM19.9 7.9h0.6v0.6h-0.6zM10.5 11h0.7v0.7h-0.7zM24.1 18.6h0.6v0.6h-0.6zM6.3 19.4h1v1h-1zM15.3 24.6h0.9v0.9h-0.9zM17.5 8.1h1.5v1.5h-1.5zM26.9 12.9h0.7v0.7h-0.7zM27.2 25h1.3v1.3h-1.3zM11.3 11.7h0.8v0.8h-0.8zM12.4 8.3h1.1v1.1h-1.1zM8.2 7.9h0.7v0.7h-0.7zM28.4 9.3h0.5v0.5h-0.5zM21.2 17.9h0.9v0.9h-0.9zM13.7 13.9h1v1h-1zM18.7 17.2h1.2v1.2h-1.2zM6.6 13.1h0.9v0.9h-0.9zM11.2 16.6h0.8v0.8h-0.8zM15.6 3.6h0.6v0.6h-0.6zM25.3 24.1h1.1v1.1h-1.1zM16.6 11.5h0.9v0.9h-0.9zM15.4 27.8h0.9v0.9h-0.9zM12 23.3h1.2v1.2h-1.2zM22.5 12.7h0.9v0.9h-0.9zM27.7 23.6h0.6v0.6h-0.6zM23.8 20.2h1v1h-1zM13.7 11h1.3v1.3h-1.3zM20.3 18.1h1.2v1.2h-1.2zM21.2 18.7h1.2v1.2h-1.2zM14 11h0.6v0.6h-0.6zM8.9 24.2h0.9v0.9h-0.9zM24.1 22.9h1.1v1.1h-1.1zM30.5 8.5h1.4v1.4h-1.4zM4.3 20.5h0.8v0.8h-0.8zM13.1 22h1.4v1.4h-1.4zM20.2 13h0.9v0.9h-0.9zM11.6 20.6h0.9v0.9h-0.9zM12.5 18.8h1.1v1.1h-1.1zM18.5 8.2h1.3v1.3h-1.3zM12 14.4h1.3v1.3h-1.3zM20.2 12.4h0.5v0.5h-0.5zM7.3 15.2h1.1v1.1h-1.1zM25.9 14h1.3v1.3h-1.3zM24.1 19.2h1.3v1.3h-1.3zM18.5 17.4h1.2v1.2h-1.2zM18.4 14.4h1.1v1.1h-1.1zM23.2 24.5h1.1v1.1h-1.1zM16.1 20.6h1.3v1.3h-1.3zM4.2 14.5h0.9v0.9h-0.9zM6.4 30.5h1.2v1.2h-1.2zM7.3 16.3h1.2v1.2h-1.2zM12 2.1h0.9v0.9h-0.9zM20.8 7.4h1.4v1.4h-1.4zM20.6 4.4h1.4v1.4h-1.4zM25.7 13.6h1v1h-1zM12.9 4.7h0.9v0.9h-0.9zM12.5 17.8h1.2v1.2h-1.2zM22.8 15.6h0.7v0.7h-0.7zM18.1 22.6h0.8v0.8h-0.8zM18.4 15.6h0.8v0.8h-0.8zM23.6 22.2h1.3v1.3h-1.3zM17.1 18.1h1v1h-1zM2.8 8.8h0.5v0.5h-0.5zM19.5 18.6h0.7v0.7h-0.7zM17 26.3h1.1v1.1h-1.1zM16.7 20.1h0.8v0.8h-0.8zM21.5 25.7h0.8v0.8h-0.8zM3.7 12.4h1v1h-1zM15 29.6h1.4v1.4h-1.4zM11.2 22.9h1.5v1.5h-1.5zM11.1 16.5h0.5v0.5h-0.5zM27.9 12.2h0.9v0.9h-0.9zM7.7 14.6h0.8v0.8h-0.8zM26.2 15.4h0.7v0.7h-0.7zM23.9 16.5h0.9v0.9h-0.9zM19.2 6.2h1.1v1.1h-1.1zM18.2 19.2h0.8v0.8h-0.8zM15.2 29.1h1v1h-1zM15.1 24h0.7v0.7h-0.7zM16 15.7h1.3v1.3h-1.3zM23.4 6.1h0.6v0.6h-0.6zM14.6 26.2h0.6v0.6h-0.6zM8.2 16.9h1.5v1.5h-1.5zM4.2 9.4h0.8v0.8h-0.8zM17.8 9.5h1.4v1.4h-1.4zM27 22.6h0.7v0.7h-0.7zM7.8 13.9h0.7v0.7h-0.7zM19 11.1h0.8v0.8h-0.8zM21.3 18.6h1v1h-1zM14.6 10h1.2v1.2h-1.2zM21.5 20h1v1h-1zM28.9 13.5h1.2v1.2h-1.2zM22.8 16.5h1.2v1.2h-1.2zM16.7 24.4h1v1h-1zM17.5 11.8h1.1v1.1h-1.1zM14.3 22.1h1v1h-1zM14.1 21.6h0.9v0.9h-0.9zM13.3 11.7h0.7v0.7h-0.7zM15.3 10.2h1.4v1.4h-1.4zM5.6 12h0.8v0.8h-0.8zM17.4 13.5h0.6v0.6h-0.6zM24.7 21.5h1.2v1.2h-1.2zM19 22h1.3v1.3h-1.3zM13.5 14.4h0.7v0.7h-0.7zM18 18.8h0.9v0.9h-0.9zM30.1 22.5h0.9v0.9h-0.9zM5.9 15.3h1.3v1.3h-1.3zM19 10.2h0.8v0.8h-0.8zM14.9 16.6h0.9v0.9h-0.9zM18.5 6.7h1.1v1.1h-1.1zM22.2 16.7h0.8v0.8h-0.8zM14.1 13.5h0.9v0.9h-0.9zM3.7 15.3h1.3v1.3h-1.3zM12.9 13.5h1.3v1.3h-1.3zM23.2 11.3h0.9v0.9h-0.9zM12.1 16h1.2v1.2h-1.2zM24.4 15.4h1.2v1.2h-1.2zM18.4 12.3h1.4v1.4h-1.4zM12.8 12.9h0.6v0.6h-0.6zM16.3 24.5h1.2v1.2h-1.2zM8.3 29.1h0.9v0.9h-0.9zM12.5 16.8h1.5v1.5h-1.5zM26 26.6h1v1h-1zM7.7 12.9h0.8v0.8h-0.8zM19.9 8h0.6v0.6h-0.6zM18.6 11.2h1.4v1.4h-1.4zM16.5 24.5h1.3v1.3h-1.3zM19.5 23.5h0.6v0.6h-0.6zM20.3 16.8h1.5v1.5h-1.5zM25.5 12.5h0.8v0.8h-0.8zM10.6 6.6h0.9v0.9h-0.9zM5.4 9.6h0.5v0.5h-0.5zM18.5 22.9h0.6v0.6h-0.6zM9.1 21.5h0.7v0.7h-0.7zM10.6 15.4h1.1v1.1h-1.1zM11.1 24.1h0.5v0.5h-0.5zM14.1 12.8h1.5v1.5h-1.5zM9.6 11.7h0.9v0.9h-0.9zM8.4 9h1.3v1.3h-1.3zM16.1 8.5h1.5v1.5h-1.5zM23.2 5.1h0.9v0.9h-0.9zM7.7 19.4h1.4v1.4h-1.4zM7.6 14.7h0.9v0.9h-0.9zM21.1 12.8h0.6v0.6h-0.6zM13.7 2.2h1.2v1.2h-1.2zM6.4 9.8h0.8v0.8h-0.8zM13.8 14.6h0.6v0.6h-0.6zM8.2 18.5h0.9v0.9h-0.9zM26.2 19.2h1v1h-1zM16.4 21.5h0.9v0.9h-0.9zM16.2 18.4h1.4v1.4h-1.4zM26.1 14h1.4v1.4h-1.4zM4.9 21.6h0.7v0.7h-0.7zM15.8 7.6h1.4v1.4h-1.4zM26.1 22.7h0.6v0.6h-0.6zM21.2 16h0.8v0.8h-0.8zM14.9 18.1h1.4v1.4h-1.4zM18.8 10h0.9v0.9h-0.9zM14.2 15h0.5v0.5h-0.5zM20.8 12.7h1v1h-1zM11.3 16.8h0.8v0.8h-0.8zM29.2 9.5h0.7v0.7h-0.7zM19.4 10.8h1v1h-1zM22.8 27.8h1.5v1.5h-1.5zM18.9 24.8h0.7v0.7h-0.7zM17.6 14.6h0.6v0.6h-0.6zM15.1 10.4h1.4v1.4h-1.4zM23.6 8.5h0.6v0.6h-0.6zM10.5 1.6h0.9v0.9h-0.9zM20.4 18.2h0.8v0.8h-0.8zM14.9 11.8h0.7v0.7h-0.7zM16.9 25.6h1.3v1.3h-1.3zM8.8 22.9h1.4v1.4h-1.4zM11.7 13.5h0.8v0.8h-0.8zM25.3 11.7h0.8v0.8h-0.8zM14.1 13.8h1.5v1.5h-1.5zM8 18.9h1v1h-1z" fill="#000" opacity="0.7"/></g><path d="M18.3 11.7l-3.4 0.6M8.2 21.8l2.2 1.3M11.5 18.4l-1.7 2.8M11.8 19.8l3.2 2.7M21.3 12.3l-2.4 1.7M16.3 10.8l-0.7 3.1M24.2 7.4l2.2 0.8M11.3 17.2l3.6 3.3M17.2 15.5l3.9 0.3M29.9 11.3l-2.4 3.5M7.9 16.9l-2.1 1M11.4 5.8l3.8 2M25 32l-2.5 2.3M-0.3 6.5l1.1 2.4M10.4 2l3.8 2M7.8 22.9l0.3 4.8M-0.2 7.6l-2.4 0.3M26.9 11.5l3.4 1.6M15.7 18.2l3 0.6M17.9 14.1l-1.2 4.5M8.7 24.5l-1.2 4.1M-3.6 18.3l0.8 2.5M19.9 19.7l4.5 1.7M25 26l-2.6 2.3M20.5 17.5l-3.2 0.6M16.7 12.5l3 0.5M13.2 19.8l-1.6 3.4M10.3 13.8l0.8 2.7M9.4 13.7l-2.2 4.4M11.8 24.4l4.3 1.3M6.8 14.1l-0.4 2.3M16.8 15.3l2.8 2M25.6 11l-2.9 0.9M7 13l1.7 1.5M14.4 18.5l2.5 0.1M22.2 8.6l-2.6 2.6M1.4 17.6l1.3 2.5M15.3 18.7l2.8 0.2M12.9 12.6l0.2 2.9M16.1 10.8l0.7 4.2" stroke="#000" stroke-width="0.4" fill="none" opacity="0.5" stroke-linecap="round"/><path d="M32 24.500V32H24.500z" fill="#ff8585"/><path d="M26 28.500h5M28.500 26v5" stroke="#000" stroke-width="1.100" fill="none"/></g><g transform="translate(70 104)" clip-path="url(#cc)"><rect width="32" height="32" fill="#fff"/><path d="M15.3 20.4h1.3v1.3h-1.3zM12.5 9.7h1.4v1.4h-1.4zM21.3 18.8h1.2v1.2h-1.2zM20.5 6.1h1v1h-1zM4.1 21.2h0.9v0.9h-0.9zM13.3 25.6h0.6v0.6h-0.6zM16.2 4.5h1.6v1.6h-1.6zM13.8 5.8h0.9v0.9h-0.9zM19.4 6.6h1.3v1.3h-1.3zM24.8 13.2h1v1h-1zM18.7 15.3h1v1h-1zM20.6 12h1v1h-1zM21.3 20.9h0.7v0.7h-0.7zM8.6 12.2h1.1v1.1h-1.1zM24.7 16h0.6v0.6h-0.6zM25 14h1.1v1.1h-1.1zM8.2 14h1v1h-1zM23.6 4.9h1.1v1.1h-1.1zM7 21.5h0.6v0.6h-0.6zM9.7 11.6h1.2v1.2h-1.2zM3.5 14.9h0.8v0.8h-0.8zM9.9 15.3h1.6v1.6h-1.6zM15.5 28.8h0.8v0.8h-0.8zM27.9 12.2h0.8v0.8h-0.8zM23 27.5h0.6v0.6h-0.6zM9.5 23.6h0.9v0.9h-0.9zM3.1 19.3h1.6v1.6h-1.6zM30 16.1h0.6v0.6h-0.6zM11 24h1.4v1.4h-1.4zM19.9 8.4h1.1v1.1h-1.1zM15.4 19.6h0.9v0.9h-0.9zM6.5 10.2h1.5v1.5h-1.5zM9.8 28.4h1.1v1.1h-1.1zM21.5 21.7h0.8v0.8h-0.8zM10 9.1h1.3v1.3h-1.3zM21.4 5.7h1.5v1.5h-1.5zM13.8 8.8h1v1h-1zM29.4 17.7h1.2v1.2h-1.2zM23.3 13.7h1.2v1.2h-1.2zM27.2 24.1h1.2v1.2h-1.2zM11.7 12.3h1.3v1.3h-1.3zM17.8 2.5h1.3v1.3h-1.3zM17 24.1h1v1h-1zM4.8 11.9h0.9v0.9h-0.9zM28.2 21.3h1.1v1.1h-1.1zM19.4 5.5h1.1v1.1h-1.1zM21.6 13h0.8v0.8h-0.8zM13.4 11.1h1.3v1.3h-1.3zM10.7 21.5h1.4v1.4h-1.4zM20.5 28.2h1v1h-1zM2.8 15.7h1v1h-1zM7 20.7h0.9v0.9h-0.9zM8.7 11.2h1.5v1.5h-1.5zM9.8 7.6h1v1h-1zM16 21.5h0.8v0.8h-0.8zM15 19h1.4v1.4h-1.4zM9 14.9h1.5v1.5h-1.5zM25.3 8.4h1.1v1.1h-1.1zM23.3 13.1h1.3v1.3h-1.3zM20.6 29.2h1.2v1.2h-1.2zM21.1 11.8h1.3v1.3h-1.3zM11 16h1v1h-1zM10.6 5.8h0.8v0.8h-0.8zM17.2 9.1h0.6v0.6h-0.6zM24.5 10h1.5v1.5h-1.5zM18.8 12.9h1.5v1.5h-1.5zM27.1 11h0.7v0.7h-0.7zM19.9 25.6h1.2v1.2h-1.2zM24 13.5h1.2v1.2h-1.2zM9.4 13.4h1v1h-1zM12.8 13.2h1.4v1.4h-1.4zM6.8 7.7h0.9v0.9h-0.9zM29.2 16.6h0.7v0.7h-0.7zM25 12h1.3v1.3h-1.3zM10.6 5.8h1.5v1.5h-1.5zM25.3 7.9h1.5v1.5h-1.5zM6.6 22h0.9v0.9h-0.9zM7.3 7.2h0.9v0.9h-0.9zM26.1 19h0.7v0.7h-0.7zM21.2 17h1v1h-1zM16.8 20.2h1.4v1.4h-1.4zM16.1 19.8h1.1v1.1h-1.1zM19.8 12.9h1v1h-1zM16.5 22h0.9v0.9h-0.9zM27.9 15.8h1.5v1.5h-1.5zM21.3 28.8h1.3v1.3h-1.3zM14 13.4h1.2v1.2h-1.2zM23.1 25.5h0.7v0.7h-0.7zM5.2 21.2h1.2v1.2h-1.2zM27.9 15.3h0.8v0.8h-0.8zM23.2 13.9h1.1v1.1h-1.1zM10.8 8.8h0.7v0.7h-0.7zM19 28.7h1.6v1.6h-1.6zM12.1 10.3h1.5v1.5h-1.5zM18.8 20.7h0.6v0.6h-0.6zM8.4 15.5h1.3v1.3h-1.3zM25.1 23.2h0.9v0.9h-0.9zM12.7 26.1h1.6v1.6h-1.6zM15.6 7.5h1.2v1.2h-1.2zM17 12.1h0.8v0.8h-0.8zM12.8 19.1h0.7v0.7h-0.7zM17.1 28.7h1.3v1.3h-1.3zM9.1 13.7h0.7v0.7h-0.7zM22.6 19.7h0.8v0.8h-0.8zM17.3 18.7h1.2v1.2h-1.2zM12.6 10.7h1v1h-1zM16.1 14.9h0.8v0.8h-0.8zM13.2 7.7h0.9v0.9h-0.9zM12.3 11.8h1.5v1.5h-1.5zM10.3 11.3h1.3v1.3h-1.3zM13.1 16.4h1.2v1.2h-1.2zM4.1 20.8h0.7v0.7h-0.7zM9 24.7h1.6v1.6h-1.6zM20.9 6.8h1v1h-1zM9.9 25.6h0.8v0.8h-0.8zM7.5 19.9h1.2v1.2h-1.2zM18.5 15.4h1.6v1.6h-1.6zM14.8 28.2h1v1h-1zM15 12.1h1.3v1.3h-1.3zM23 8.7h1.1v1.1h-1.1zM22.3 16h1.3v1.3h-1.3zM19.3 22h1v1h-1zM26.9 24.1h1v1h-1zM6.2 25.4h1v1h-1zM10.8 9.3h1v1h-1zM5.3 10.6h0.8v0.8h-0.8zM12.6 15.7h1.2v1.2h-1.2zM8.4 26.1h1.5v1.5h-1.5zM28.1 16.8h1v1h-1zM23.4 17.4h1.4v1.4h-1.4zM9.3 16.9h1.5v1.5h-1.5zM5 19.3h0.8v0.8h-0.8zM25.5 25.5h1.2v1.2h-1.2zM14.2 2.6h1.1v1.1h-1.1zM12.1 13.2h0.7v0.7h-0.7zM27.8 16.6h1.2v1.2h-1.2zM17.4 17.2h1.4v1.4h-1.4zM12.4 27.2h0.6v0.6h-0.6zM24.3 16.8h1.2v1.2h-1.2zM13.4 24.4h1.3v1.3h-1.3zM16.7 23.8h1.3v1.3h-1.3zM26.3 20.2h1v1h-1zM10 4.3h0.7v0.7h-0.7zM5.9 18.9h0.7v0.7h-0.7zM29.1 16.9h0.8v0.8h-0.8zM25.1 26.1h1.6v1.6h-1.6zM8.3 13.3h1.3v1.3h-1.3zM9.9 17.9h1.3v1.3h-1.3zM23 25.1h1.4v1.4h-1.4zM10 23.2h1v1h-1zM19.4 12h0.7v0.7h-0.7zM15.7 13.6h0.9v0.9h-0.9zM17.9 17.1h1.1v1.1h-1.1zM10.4 26.4h0.9v0.9h-0.9zM10.9 28.1h1.3v1.3h-1.3zM21.8 7.7h0.7v0.7h-0.7zM6.9 14.1h1.4v1.4h-1.4zM23.8 14.2h1.5v1.5h-1.5zM10.9 3.4h1.6v1.6h-1.6zM26.7 20.5h1.1v1.1h-1.1zM7.7 8.1h0.7v0.7h-0.7zM4.6 15.4h1.5v1.5h-1.5zM28.1 16.4h1.3v1.3h-1.3zM15.1 23.7h1.3v1.3h-1.3zM21 18.5h0.8v0.8h-0.8zM15.2 14.5h0.8v0.8h-0.8zM7.6 13.5h0.8v0.8h-0.8zM19.5 11.2h1.6v1.6h-1.6zM21.2 16.5h1v1h-1zM13 7.6h1.6v1.6h-1.6zM27.6 20.2h1.3v1.3h-1.3zM6 17.2h0.8v0.8h-0.8zM11.1 18.4h0.8v0.8h-0.8zM8.5 22.5h1.1v1.1h-1.1zM19 21.4h1.2v1.2h-1.2zM15.9 27.5h0.7v0.7h-0.7zM9.7 17.4h0.8v0.8h-0.8zM26.1 9.3h0.7v0.7h-0.7zM6.6 9.6h1.5v1.5h-1.5zM26.6 20.7h1v1h-1zM5.5 7.6h1v1h-1zM26.1 7.1h0.7v0.7h-0.7zM22.6 5.9h0.9v0.9h-0.9zM7.8 14.3h1.5v1.5h-1.5zM25.5 17h0.7v0.7h-0.7zM6.9 10.3h1.4v1.4h-1.4zM11.4 28.9h0.8v0.8h-0.8zM4.2 9.4h1.5v1.5h-1.5zM9.4 22.2h0.7v0.7h-0.7zM20.4 6.7h1.2v1.2h-1.2zM22.8 26.6h1v1h-1zM29.6 13.4h1.5v1.5h-1.5zM5 9.7h1.3v1.3h-1.3zM26.8 9.2h1.4v1.4h-1.4zM15.4 2.1h0.7v0.7h-0.7zM28.1 21h1.5v1.5h-1.5zM27.7 13h1.3v1.3h-1.3zM20.3 21.4h0.7v0.7h-0.7zM14.5 21.3h1.3v1.3h-1.3zM25.1 10.7h0.9v0.9h-0.9zM26.5 10.8h1v1h-1zM10.8 22h0.8v0.8h-0.8zM5.7 19.4h1.6v1.6h-1.6zM2.2 14.9h1v1h-1zM10.7 11.6h0.7v0.7h-0.7zM13.9 9.5h0.7v0.7h-0.7zM24.8 22.7h0.8v0.8h-0.8zM21.2 22.2h0.7v0.7h-0.7zM24.2 17h0.7v0.7h-0.7zM19.4 4.5h0.7v0.7h-0.7zM23 11.9h1.1v1.1h-1.1zM5.8 7h1.1v1.1h-1.1zM14 7.2h0.8v0.8h-0.8zM14.5 5.2h0.7v0.7h-0.7zM15.3 3.4h1.3v1.3h-1.3zM23.5 21.8h1.6v1.6h-1.6zM6.6 13.8h1v1h-1zM18.2 20.2h1.1v1.1h-1.1zM25.9 18.2h1.1v1.1h-1.1zM13.3 19.6h1.2v1.2h-1.2zM11.2 22.2h0.8v0.8h-0.8zM15.5 16.7h1.3v1.3h-1.3zM7.1 19.4h0.8v0.8h-0.8zM17.7 26.7h1v1h-1zM8.3 18.7h1v1h-1zM14.2 7h1.3v1.3h-1.3zM15.9 21.1h1.5v1.5h-1.5zM9.2 22h1.2v1.2h-1.2zM14.7 19.6h1.1v1.1h-1.1zM20.4 21.5h0.6v0.6h-0.6zM19.9 21.7h1.5v1.5h-1.5zM17 17.2h0.7v0.7h-0.7zM7.5 27.1h0.7v0.7h-0.7zM12.8 19.4h0.6v0.6h-0.6zM14.5 24.4h1v1h-1zM20.7 19.9h0.9v0.9h-0.9zM17.6 21.2h0.8v0.8h-0.8zM8.9 27.9h0.8v0.8h-0.8zM15.7 14.7h1.4v1.4h-1.4zM26 23.4h1.2v1.2h-1.2zM17.1 4.6h1.2v1.2h-1.2zM14.1 23.2h1v1h-1zM5.4 12.7h1.4v1.4h-1.4zM15.9 20.7h0.7v0.7h-0.7zM8.2 9.4h1.1v1.1h-1.1zM8.7 16h1.2v1.2h-1.2zM16.4 20.1h0.9v0.9h-0.9zM14.5 18.9h1.1v1.1h-1.1zM21.3 4.8h1.4v1.4h-1.4zM6.9 18.6h1.2v1.2h-1.2zM25.7 19.2h0.8v0.8h-0.8zM24.8 12.5h1.2v1.2h-1.2zM4.9 14.7h0.9v0.9h-0.9zM25.7 13.1h1.5v1.5h-1.5zM24.2 13.7h1.4v1.4h-1.4zM21 5.3h0.9v0.9h-0.9zM5.8 25.3h1v1h-1zM10.4 22.1h1.6v1.6h-1.6zM6 21.4h0.8v0.8h-0.8zM24.2 22.9h1.4v1.4h-1.4zM18.3 5.4h1.5v1.5h-1.5zM5.1 18.2h1.6v1.6h-1.6zM9.5 15.5h1.3v1.3h-1.3zM20.1 11.1h1v1h-1zM27.1 22h0.8v0.8h-0.8zM21 25.9h1.2v1.2h-1.2zM27 9.4h0.9v0.9h-0.9zM26.2 9.2h0.7v0.7h-0.7zM25 7.5h1.3v1.3h-1.3zM7.5 19.4h0.6v0.6h-0.6zM18.2 23h1.1v1.1h-1.1zM19.6 5.3h1.1v1.1h-1.1zM23.9 12.4h1.3v1.3h-1.3zM18.8 24.6h1.3v1.3h-1.3zM10.5 24.9h1.4v1.4h-1.4zM14 22.1h1v1h-1zM18.1 11.1h1.1v1.1h-1.1zM10.6 27h1.2v1.2h-1.2zM19.2 16.6h1.1v1.1h-1.1zM6.9 20.1h1v1h-1zM11.6 16.4h0.7v0.7h-0.7zM20.2 23.9h1v1h-1zM19.4 10.9h0.7v0.7h-0.7zM18.1 8.1h1.5v1.5h-1.5zM22.1 9.7h1v1h-1zM4.4 8.3h1.2v1.2h-1.2zM26.7 13.9h1.6v1.6h-1.6zM9.2 4.9h1.4v1.4h-1.4zM12.6 9.8h1v1h-1zM19.1 8.2h0.7v0.7h-0.7zM18.7 20.4h1.2v1.2h-1.2zM6.5 26.1h1v1h-1zM17.2 26.8h0.7v0.7h-0.7zM15.9 13.9h1.2v1.2h-1.2zM8.3 8.7h0.8v0.8h-0.8zM17.6 10.4h1.5v1.5h-1.5zM26.4 22.4h1v1h-1zM25.1 18.1h1.4v1.4h-1.4zM23.3 27.3h1v1h-1zM11.6 2.9h1.5v1.5h-1.5zM4.5 16.4h1.3v1.3h-1.3zM27.4 20.6h0.7v0.7h-0.7zM25.4 21.1h1.4v1.4h-1.4zM17.9 16.3h0.9v0.9h-0.9zM16.2 10.8h1.3v1.3h-1.3zM2.8 11.7h1.3v1.3h-1.3zM14.8 2.6h1.1v1.1h-1.1zM28 16.6h1.3v1.3h-1.3zM12.7 29.4h1.1v1.1h-1.1zM24.7 19.5h1.4v1.4h-1.4zM13 28h1.6v1.6h-1.6zM12.2 11.5h1.5v1.5h-1.5zM25.1 18.5h1.2v1.2h-1.2zM2.3 17.7h0.7v0.7h-0.7zM16.7 8.3h1.2v1.2h-1.2zM6.4 11.2h1.4v1.4h-1.4zM18.2 5.7h1.6v1.6h-1.6zM2.6 13.6h1.3v1.3h-1.3zM18.3 20.3h1.5v1.5h-1.5zM4.7 16.2h0.9v0.9h-0.9zM18.8 15h1.2v1.2h-1.2zM24.4 16h1v1h-1zM17.6 6.7h1.5v1.5h-1.5zM12.9 16h1.4v1.4h-1.4zM21.8 16.9h1v1h-1zM23.8 19.4h0.6v0.6h-0.6zM17.8 20.7h1v1h-1zM25.2 22.8h1.5v1.5h-1.5zM10.2 20.5h1.2v1.2h-1.2zM11.5 10.3h0.7v0.7h-0.7zM25.4 9.7h0.9v0.9h-0.9zM9.1 17.6h1.1v1.1h-1.1zM11.6 25.4h1.4v1.4h-1.4zM3.8 14.5h1.6v1.6h-1.6zM22.8 11.3h0.7v0.7h-0.7zM29.8 14.6h1.5v1.5h-1.5zM15.3 27.2h1.3v1.3h-1.3zM6.8 19h0.7v0.7h-0.7zM4.1 12.7h0.7v0.7h-0.7zM10.6 19.7h0.8v0.8h-0.8zM24.1 9.3h1v1h-1zM13.3 25.8h0.6v0.6h-0.6zM29.2 17.6h1.4v1.4h-1.4zM16.4 20.8h1.3v1.3h-1.3zM6.1 7.4h1.5v1.5h-1.5zM8.1 8.8h0.7v0.7h-0.7zM22 24.1h0.6v0.6h-0.6zM15.9 16.4h0.9v0.9h-0.9zM11.1 15.8h1.4v1.4h-1.4zM9.1 8.5h1.6v1.6h-1.6zM9.4 4.9h1.5v1.5h-1.5zM16.8 26.4h0.9v0.9h-0.9zM5.6 19h1.1v1.1h-1.1zM26.1 14.5h0.9v0.9h-0.9zM13 5.9h1.1v1.1h-1.1zM21.4 7.2h1.2v1.2h-1.2zM10.9 20.1h0.7v0.7h-0.7zM5.1 24.6h1.3v1.3h-1.3zM19.5 17.7h1v1h-1zM25.4 16.4h1.4v1.4h-1.4zM22.6 11.4h1.4v1.4h-1.4zM11.8 19.3h1.4v1.4h-1.4zM28.7 19.4h0.8v0.8h-0.8zM6.5 25.3h0.9v0.9h-0.9zM6.1 18.2h1v1h-1zM22.7 7h1.1v1.1h-1.1zM12.9 13h0.7v0.7h-0.7zM6 10.8h1.1v1.1h-1.1zM5.8 19.8h1v1h-1zM10.4 25.8h1.3v1.3h-1.3zM14.5 9.3h1.1v1.1h-1.1zM20.2 23.3h1.3v1.3h-1.3zM29.9 17.3h1.1v1.1h-1.1zM5.2 24h1.4v1.4h-1.4zM10.7 9.6h0.7v0.7h-0.7zM10.6 16.4h1v1h-1zM8.6 25.3h1.6v1.6h-1.6zM26.1 15.8h1v1h-1zM27.1 23.2h1.2v1.2h-1.2zM21.6 28.3h1.1v1.1h-1.1zM9.2 22.5h1.5v1.5h-1.5zM8.3 12.8h1.4v1.4h-1.4zM24.6 8.8h0.7v0.7h-0.7zM3.4 14.9h1.1v1.1h-1.1zM7.2 22h0.8v0.8h-0.8zM4 17h1v1h-1zM23.8 13.4h0.9v0.9h-0.9zM23.4 21.1h0.8v0.8h-0.8zM14.4 23.2h1.2v1.2h-1.2zM9.8 11.8h1.4v1.4h-1.4zM3.5 20.1h1.3v1.3h-1.3zM16.5 17.5h1.5v1.5h-1.5zM11.1 23.1h1.3v1.3h-1.3zM22.7 3.9h1.3v1.3h-1.3zM12.5 5.6h1.5v1.5h-1.5zM9.4 15h0.9v0.9h-0.9zM5.1 10.2h1.2v1.2h-1.2zM19.9 22.9h0.8v0.8h-0.8zM9.7 25.3h1.1v1.1h-1.1zM22.7 14.9h1v1h-1zM27.3 22h0.8v0.8h-0.8zM19.6 21h0.9v0.9h-0.9zM12.5 26.9h0.9v0.9h-0.9zM19.1 3.3h0.6v0.6h-0.6zM3.2 10.5h1.5v1.5h-1.5zM18.2 15.6h0.7v0.7h-0.7zM17.6 5.6h0.7v0.7h-0.7zM11.3 9.2h1.4v1.4h-1.4zM17.8 19.9h0.9v0.9h-0.9zM13 5.2h0.9v0.9h-0.9zM11.4 19.6h1.5v1.5h-1.5zM24.7 16.7h0.8v0.8h-0.8zM25 23.9h1.3v1.3h-1.3zM22.2 5.9h1.2v1.2h-1.2zM13.6 11.9h1.5v1.5h-1.5zM11.8 7.8h1.3v1.3h-1.3zM19.3 7.1h0.8v0.8h-0.8zM22 14.3h1.3v1.3h-1.3zM7.9 17.9h1.5v1.5h-1.5zM10 25.4h0.7v0.7h-0.7zM20.6 3.2h0.8v0.8h-0.8zM16.8 24.7h1.4v1.4h-1.4zM27.6 8.9h1.5v1.5h-1.5zM13.9 20.7h1.3v1.3h-1.3zM9.6 9.9h1v1h-1zM11.6 22.4h1.5v1.5h-1.5zM20.5 3.4h1.4v1.4h-1.4zM13.1 17.5h0.8v0.8h-0.8zM9 13.8h1.2v1.2h-1.2zM9.2 17.5h1v1h-1zM8.1 20.1h0.9v0.9h-0.9zM13.8 19.3h0.7v0.7h-0.7zM10.6 11.4h1.3v1.3h-1.3zM11.5 12.1h1.3v1.3h-1.3zM28.4 19.8h0.9v0.9h-0.9zM26.2 12.3h0.8v0.8h-0.8zM26.2 8.4h1v1h-1zM11.9 7.6h1v1h-1zM23.1 25.7h1v1h-1zM22.7 22.4h1.5v1.5h-1.5zM12.2 25.8h0.8v0.8h-0.8zM18.4 28.5h1.3v1.3h-1.3zM23.2 7.1h1v1h-1zM17.7 24.5h0.8v0.8h-0.8zM17.1 22.9h1.3v1.3h-1.3zM9.2 4.8h1v1h-1zM7.4 17.7h1.1v1.1h-1.1zM12.2 25.6h0.7v0.7h-0.7zM16.8 23.2h1.2v1.2h-1.2zM14.4 20.2h1.3v1.3h-1.3zM15.6 9.5h1.2v1.2h-1.2zM20 13.7h0.8v0.8h-0.8zM11.2 3.9h1.4v1.4h-1.4zM17.7 14.2h1.5v1.5h-1.5zM25.2 13.1h0.6v0.6h-0.6zM18.5 8.5h1.2v1.2h-1.2zM4.8 24.4h1.5v1.5h-1.5zM7.1 24.9h0.7v0.7h-0.7zM6 17.8h0.8v0.8h-0.8zM13 12.4h1.4v1.4h-1.4zM23.7 26.8h0.8v0.8h-0.8zM9.3 25.3h1v1h-1zM5.2 16.1h0.8v0.8h-0.8zM19.7 13.3h0.8v0.8h-0.8zM23 27h0.8v0.8h-0.8zM8 16h0.8v0.8h-0.8zM28.9 14.2h0.7v0.7h-0.7zM7.6 8.1h0.9v0.9h-0.9zM19 26.6h1v1h-1zM17.4 28.8h1.1v1.1h-1.1zM12.6 26.4h1.3v1.3h-1.3zM13.7 24.8h0.8v0.8h-0.8zM4.8 8.6h0.9v0.9h-0.9zM26 9.1h0.7v0.7h-0.7zM5 24.4h1.1v1.1h-1.1zM28.6 11.4h0.7v0.7h-0.7zM7.1 23.1h1.1v1.1h-1.1zM15.6 4.5h1.4v1.4h-1.4zM26.7 18.1h1.1v1.1h-1.1zM23.9 12h0.6v0.6h-0.6zM28.8 15.1h0.9v0.9h-0.9zM14.3 22.8h1.6v1.6h-1.6zM16.5 16.2h1.5v1.5h-1.5zM5.7 21.7h0.8v0.8h-0.8zM11.1 23.9h0.7v0.7h-0.7zM27.7 22.1h1.5v1.5h-1.5zM25.7 18.7h1v1h-1zM23.8 11h0.9v0.9h-0.9zM29 11.2h0.8v0.8h-0.8zM8.4 21.8h1.4v1.4h-1.4zM9.5 21h1.2v1.2h-1.2zM20.7 6.6h1.4v1.4h-1.4zM18.9 27.3h1.3v1.3h-1.3zM20.7 27.9h1.6v1.6h-1.6zM25.4 6.1h0.9v0.9h-0.9zM14.6 17.3h1.1v1.1h-1.1zM26.9 20h1.5v1.5h-1.5zM4.9 12.7h0.8v0.8h-0.8zM20.6 14.8h1.5v1.5h-1.5zM10.7 19.9h1.6v1.6h-1.6zM13.8 14.2h1.6v1.6h-1.6zM18 2.3h1.2v1.2h-1.2zM26.6 23.1h1v1h-1zM15.7 9.2h1.3v1.3h-1.3zM29.1 15.3h1.4v1.4h-1.4zM5.2 22.2h0.8v0.8h-0.8zM26 17.2h1v1h-1zM12.9 8.4h1.3v1.3h-1.3zM15.6 6h0.9v0.9h-0.9zM12.6 9.8h0.8v0.8h-0.8zM17.4 22h0.6v0.6h-0.6zM21.3 7.6h1.1v1.1h-1.1zM24.7 10.2h1.4v1.4h-1.4zM4.5 10.6h0.6v0.6h-0.6zM6.3 21.4h1.5v1.5h-1.5zM23.6 8.1h1.2v1.2h-1.2zM19.7 9.7h0.7v0.7h-0.7zM11.5 4.9h1.4v1.4h-1.4zM8.7 20.4h1.3v1.3h-1.3zM20.1 6.7h1.5v1.5h-1.5z" fill="#000" opacity="0.85"/><path d="M32 24.500V32H24.500z" fill="#ff8585"/><path d="M26 28.500h5M28.500 26v5" stroke="#000" stroke-width="1.100" fill="none"/></g><g transform="translate(104 104)" clip-path="url(#cc)"><rect width="32" height="32" fill="#fff"/><circle cx="15.500" cy="16.500" r="13" fill="#111"/><path d="M11.3 30.6h1.2v1.2h-1.2zM15 16.4h0.7v0.7h-0.7zM15.4 24h1.2v1.2h-1.2zM18.7 26.3h0.7v0.7h-0.7zM9.6 27.1h1.3v1.3h-1.3zM10.9 19.2h0.8v0.8h-0.8zM17.3 8.2h1.3v1.3h-1.3zM11.4 2.9h1.3v1.3h-1.3zM4.2 17.1h0.9v0.9h-0.9zM5.7 22.6h0.6v0.6h-0.6zM18.1 8.7h1.5v1.5h-1.5zM8.3 11.7h1.2v1.2h-1.2zM20 27.9h0.9v0.9h-0.9zM14.4 24.2h1v1h-1zM11.8 27.8h1.1v1.1h-1.1zM8.6 22.3h1v1h-1zM12.5 25.1h0.7v0.7h-0.7zM9.9 22h1.2v1.2h-1.2zM19.6 18h1.2v1.2h-1.2zM14.2 19.1h0.6v0.6h-0.6zM17.3 7.5h1.1v1.1h-1.1zM16.4 26.1h1.4v1.4h-1.4zM22.9 11.7h0.7v0.7h-0.7zM16.7 14.6h1.2v1.2h-1.2zM1.8 13.2h0.7v0.7h-0.7zM4.2 13.8h1.1v1.1h-1.1zM3.8 28.7h0.8v0.8h-0.8zM10.7 24h1.2v1.2h-1.2zM16.4 23.2h0.6v0.6h-0.6zM5.7 13h1v1h-1zM20.4 21.8h0.8v0.8h-0.8zM12.5 20.3h1.5v1.5h-1.5zM16.9 24.1h0.8v0.8h-0.8zM9.4 18.4h1v1h-1zM1.8 29.9h0.5v0.5h-0.5zM7.2 27.1h1.5v1.5h-1.5zM3 19.2h1.2v1.2h-1.2zM11.4 21.7h1v1h-1zM23.1 13.9h0.8v0.8h-0.8zM5.7 7.5h0.8v0.8h-0.8zM5.6 16.6h0.7v0.7h-0.7zM10.7 24.6h0.9v0.9h-0.9zM19.8 21.7h0.6v0.6h-0.6zM12.6 10.5h0.5v0.5h-0.5zM12.8 15.5h1v1h-1zM5.2 17.9h0.8v0.8h-0.8zM8 21.5h1.4v1.4h-1.4zM23.4 28.4h0.7v0.7h-0.7zM9.4 26.6h0.5v0.5h-0.5zM17.2 24.8h0.9v0.9h-0.9zM29.3 5.1h0.5v0.5h-0.5zM7.9 19.2h1.3v1.3h-1.3zM8 19h0.5v0.5h-0.5zM17.4 26.5h0.9v0.9h-0.9zM3.9 30.4h0.7v0.7h-0.7zM9.7 9.8h1.4v1.4h-1.4zM2.3 23.3h1.1v1.1h-1.1zM21.1 7.4h0.6v0.6h-0.6zM18.4 26.6h1.3v1.3h-1.3zM5.4 18.8h1.5v1.5h-1.5zM11 22.9h0.6v0.6h-0.6zM24.7 22.1h0.6v0.6h-0.6zM8.6 6.3h1.5v1.5h-1.5zM15 13.1h1.1v1.1h-1.1zM18.3 10.4h0.8v0.8h-0.8zM12.3 16.6h0.8v0.8h-0.8zM21 19.8h0.8v0.8h-0.8zM13.9 12.5h0.5v0.5h-0.5zM18.1 21h0.8v0.8h-0.8zM17.6 18h1.4v1.4h-1.4zM17 14.2h1.5v1.5h-1.5zM12.7 12h0.8v0.8h-0.8zM6.9 18.9h0.9v0.9h-0.9zM6.9 20.7h1.1v1.1h-1.1zM26.5 22.8h0.7v0.7h-0.7zM20.5 25.6h0.8v0.8h-0.8zM19 14.6h1v1h-1zM14.8 15.8h1.2v1.2h-1.2zM7 14h1.5v1.5h-1.5zM27.8 21.9h0.6v0.6h-0.6zM14.5 16.6h0.6v0.6h-0.6zM11.6 28.1h1.1v1.1h-1.1zM12.4 28.6h0.5v0.5h-0.5zM9 24.2h0.6v0.6h-0.6zM9.4 13h1.4v1.4h-1.4zM11.8 16.8h1.4v1.4h-1.4zM25.4 14.6h1.3v1.3h-1.3zM6.7 9.8h1.2v1.2h-1.2zM6.8 17.1h0.6v0.6h-0.6zM10.4 10.7h0.6v0.6h-0.6zM5.1 12.5h1v1h-1zM14.6 5.9h0.9v0.9h-0.9zM15.7 12.4h1.1v1.1h-1.1zM5.7 28.9h1.4v1.4h-1.4zM8.9 13.8h0.6v0.6h-0.6zM3.8 21h1.3v1.3h-1.3zM4.2 22.3h1.1v1.1h-1.1zM12 17.1h0.7v0.7h-0.7zM16.3 24.9h0.8v0.8h-0.8zM17.4 19.1h1.4v1.4h-1.4zM10.5 24.5h1.5v1.5h-1.5zM15.3 21.8h0.6v0.6h-0.6zM19.2 22.8h0.7v0.7h-0.7zM12.8 21h1.2v1.2h-1.2zM17.5 21.5h1.1v1.1h-1.1zM20.7 13.1h1.2v1.2h-1.2zM7.6 8.1h1.4v1.4h-1.4zM13.5 21.9h1.1v1.1h-1.1zM2.4 19h1.3v1.3h-1.3zM17.7 29.7h0.9v0.9h-0.9zM6.7 22.5h0.8v0.8h-0.8zM3.1 15.8h1.4v1.4h-1.4zM9.6 30.9h0.6v0.6h-0.6zM9.3 16.6h1.4v1.4h-1.4zM18 18.8h1.3v1.3h-1.3zM13.3 25.9h0.6v0.6h-0.6zM8.5 21.2h1.2v1.2h-1.2zM4.6 16.7h1.2v1.2h-1.2zM12.8 26.3h0.9v0.9h-0.9zM28.7 20.2h0.6v0.6h-0.6zM23.5 27.4h1.3v1.3h-1.3zM4.1 22.4h0.6v0.6h-0.6zM21.7 20.1h0.7v0.7h-0.7zM19.5 20.8h1.3v1.3h-1.3zM11.9 16.7h1.2v1.2h-1.2zM1.6 16.2h1.4v1.4h-1.4zM15.3 11h1.3v1.3h-1.3zM1.9 20.5h1.3v1.3h-1.3zM6.3 15.4h0.5v0.5h-0.5zM13.8 13.8h0.9v0.9h-0.9zM9.6 28.7h0.9v0.9h-0.9zM17.4 11.9h1.1v1.1h-1.1zM13.8 12.6h1v1h-1zM12 8.8h1.2v1.2h-1.2zM19.9 14.3h1.1v1.1h-1.1zM14.2 24.8h0.9v0.9h-0.9z" fill="#fff" opacity="0.9"/><path d="M32 24.500V32H24.500z" fill="#ff8585"/><path d="M26 28.500h5M28.500 26v5" stroke="#000" stroke-width="1.100" fill="none"/></g><g transform="translate(138 104)" clip-path="url(#cc)"><rect width="32" height="32" fill="#fff"/><g filter="url(#bl04)"><ellipse cx="15.500" cy="17" rx="12.500" ry="7.500" fill="#000" opacity=".55"/></g><path d="M6.1 19.8h1.1v1.1h-1.1zM26.1 13.8h0.8v0.8h-0.8zM21.1 19.2h0.8v0.8h-0.8zM19.9 15.6h1.2v1.2h-1.2zM6.3 13.1h1.3v1.3h-1.3zM12.1 13.6h1.2v1.2h-1.2zM18.7 12.1h1v1h-1zM19.4 12.3h1.1v1.1h-1.1zM6.5 14.7h0.7v0.7h-0.7zM13.2 23.9h1v1h-1zM18.1 22.2h1.1v1.1h-1.1zM6.2 18.2h1.1v1.1h-1.1zM24.5 17.2h0.8v0.8h-0.8zM14.4 13.1h1.2v1.2h-1.2zM15.5 11.4h1.3v1.3h-1.3zM5.6 13.9h0.6v0.6h-0.6zM21.3 11.6h1v1h-1zM5.7 16.7h1.1v1.1h-1.1zM16.3 16.4h1v1h-1zM14 18.3h0.7v0.7h-0.7zM14.9 13.3h1.3v1.3h-1.3zM6.9 19.8h1.1v1.1h-1.1zM26.2 15.9h0.9v0.9h-0.9zM17.2 23.1h0.8v0.8h-0.8zM10.8 12.6h1.1v1.1h-1.1zM14.8 13.6h0.9v0.9h-0.9zM27.1 18.2h0.8v0.8h-0.8zM26 15h0.8v0.8h-0.8zM8.3 13.2h1.3v1.3h-1.3zM9.8 13.5h1.1v1.1h-1.1zM25.5 14.1h1.2v1.2h-1.2zM12.3 17.9h1.1v1.1h-1.1zM15.7 21.8h0.9v0.9h-0.9zM12.7 23.4h1v1h-1zM22.1 14.4h1.3v1.3h-1.3zM18.2 13.5h1.3v1.3h-1.3zM14.8 14.8h0.8v0.8h-0.8zM6 12.8h1.2v1.2h-1.2zM6.9 13.6h1v1h-1zM16.6 15.3h1.2v1.2h-1.2zM9.7 15.2h0.9v0.9h-0.9zM6.6 13.1h0.7v0.7h-0.7zM20.9 12.1h1.1v1.1h-1.1zM8.8 19.1h1.1v1.1h-1.1zM12 23.1h1.1v1.1h-1.1zM16.9 10.6h0.9v0.9h-0.9zM9.9 16.6h1.3v1.3h-1.3zM19.8 23.1h1v1h-1zM13.7 23.7h1.3v1.3h-1.3zM10.8 11.9h0.9v0.9h-0.9zM14.3 21h1v1h-1zM16.2 14.1h1.4v1.4h-1.4zM9.5 19.5h1.1v1.1h-1.1zM24 15.6h1v1h-1zM11.8 23.1h0.6v0.6h-0.6zM22.9 19.9h1.4v1.4h-1.4zM16.1 21.7h1v1h-1zM14 18.1h1.2v1.2h-1.2zM13.6 19.5h1.4v1.4h-1.4zM13.6 12.8h0.6v0.6h-0.6zM24.2 16.7h0.9v0.9h-0.9zM16 11.7h0.8v0.8h-0.8zM9.2 13.6h1.3v1.3h-1.3zM9.4 11.3h1.3v1.3h-1.3zM16.9 10.4h1.1v1.1h-1.1zM20 19.1h1.2v1.2h-1.2zM13.7 13.1h1.2v1.2h-1.2zM18.5 19.9h0.7v0.7h-0.7zM12.4 19.7h0.9v0.9h-0.9zM18 16.6h1.2v1.2h-1.2zM11.9 17h1.3v1.3h-1.3zM11 12.5h1.1v1.1h-1.1zM10.1 22.7h1v1h-1zM7.2 17.3h1.1v1.1h-1.1zM15.2 18.9h0.9v0.9h-0.9zM15.7 10.9h0.7v0.7h-0.7zM17.6 22.7h0.8v0.8h-0.8zM13.2 16.7h1.1v1.1h-1.1zM11.9 14.9h1.3v1.3h-1.3zM16.8 14.9h1.3v1.3h-1.3zM8.3 21.1h0.7v0.7h-0.7zM23.9 13.2h0.9v0.9h-0.9zM17.8 11.6h1.2v1.2h-1.2zM14 20.8h1.2v1.2h-1.2zM23.2 13.4h1.1v1.1h-1.1zM8.4 17.5h1.2v1.2h-1.2zM12.5 17.5h0.7v0.7h-0.7zM24.2 18.8h1.3v1.3h-1.3zM5.4 20.4h0.7v0.7h-0.7zM16.9 13.2h1.3v1.3h-1.3zM6 16.6h1v1h-1zM12.8 10.9h1.1v1.1h-1.1zM26.8 15.1h1.3v1.3h-1.3zM11.6 13.8h1v1h-1zM18.7 10.6h1v1h-1zM12.5 13.4h0.7v0.7h-0.7zM15.8 21h1.3v1.3h-1.3zM25.5 16h0.7v0.7h-0.7zM26.6 15.9h0.9v0.9h-0.9zM23.3 17.8h1.4v1.4h-1.4zM20.3 23.2h0.7v0.7h-0.7zM26.1 17.6h1.2v1.2h-1.2zM10.7 13.4h0.8v0.8h-0.8zM6.4 13.4h1.1v1.1h-1.1zM8.4 13h0.8v0.8h-0.8zM21.3 19.2h0.8v0.8h-0.8zM25.1 17.8h0.8v0.8h-0.8zM22.9 21.4h0.6v0.6h-0.6zM23.8 15.9h1v1h-1zM26.2 16.3h0.8v0.8h-0.8zM14.4 20h1.1v1.1h-1.1zM26 17.1h1.3v1.3h-1.3zM10.9 11.7h1.1v1.1h-1.1zM11.3 15.9h0.8v0.8h-0.8zM11.3 17.5h1.2v1.2h-1.2zM14 16.2h1.3v1.3h-1.3zM12.8 15.4h0.9v0.9h-0.9zM9.2 19.9h0.8v0.8h-0.8zM15.7 18h1.2v1.2h-1.2zM21.3 16.7h1.4v1.4h-1.4zM20.6 16.4h0.9v0.9h-0.9zM24.1 16.6h1.2v1.2h-1.2zM12.8 15.1h0.6v0.6h-0.6zM21 14.1h1v1h-1zM20.9 21.6h1.4v1.4h-1.4zM19.4 13.3h1.3v1.3h-1.3zM4.8 15.8h1.3v1.3h-1.3zM23.8 18.3h1.3v1.3h-1.3zM10.6 23h0.6v0.6h-0.6zM11.3 17.1h0.8v0.8h-0.8zM13.3 22.3h0.9v0.9h-0.9zM17.2 21.3h1.1v1.1h-1.1zM16.5 10.3h1.3v1.3h-1.3zM13.8 18.7h0.6v0.6h-0.6zM18.9 11.4h0.9v0.9h-0.9zM23.4 20.8h0.9v0.9h-0.9zM13.5 22.3h1.1v1.1h-1.1zM22.4 17.2h1.2v1.2h-1.2zM15.5 13.8h1v1h-1zM4.5 19.4h0.9v0.9h-0.9zM7.8 21.1h1v1h-1zM11.1 22.9h1.4v1.4h-1.4zM13.7 17.7h0.6v0.6h-0.6zM15.7 23.9h0.6v0.6h-0.6zM5.3 20.6h1.4v1.4h-1.4zM21.8 18.5h0.9v0.9h-0.9zM12.7 11.8h0.9v0.9h-0.9zM6.4 21.3h1v1h-1zM12.6 21.9h0.8v0.8h-0.8zM24.4 20h1.1v1.1h-1.1zM17.8 18.9h1.3v1.3h-1.3zM27.4 17.8h1.4v1.4h-1.4zM9.4 23h1.3v1.3h-1.3zM18.8 11.5h1.3v1.3h-1.3zM12.6 14.7h1.4v1.4h-1.4zM5.6 19h0.8v0.8h-0.8zM24.4 13h0.7v0.7h-0.7zM15.2 16.4h1.2v1.2h-1.2zM10.2 14.1h0.8v0.8h-0.8zM16.7 11.8h1v1h-1zM23.2 19.6h0.8v0.8h-0.8zM15 11.3h1v1h-1zM19 22.9h0.8v0.8h-0.8zM11.1 19.5h0.7v0.7h-0.7zM10 18.6h1v1h-1zM7.5 12.8h1v1h-1zM24.3 12.8h1.1v1.1h-1.1zM16.3 13.9h0.9v0.9h-0.9zM16.6 16.7h0.7v0.7h-0.7zM13.4 12.4h0.9v0.9h-0.9z" fill="#000" opacity="0.9"/><path d="M15.9 10.9h1.1v1.1h-1.1zM8.4 19.6h0.6v0.6h-0.6zM10.4 17.8h1.1v1.1h-1.1zM24.3 15.8h0.8v0.8h-0.8zM12.2 20.1h1.2v1.2h-1.2zM8.6 20h0.9v0.9h-0.9zM9.4 20.2h0.8v0.8h-0.8zM16.4 13.9h0.8v0.8h-0.8zM8.1 21.5h1.2v1.2h-1.2zM21.1 19.2h1v1h-1zM16.3 18.8h0.9v0.9h-0.9zM6.7 14.2h0.8v0.8h-0.8zM18.3 21.5h0.9v0.9h-0.9zM13.3 15.2h1v1h-1zM19.6 17.3h0.8v0.8h-0.8zM10.4 18.5h1.1v1.1h-1.1zM11.5 14.8h1v1h-1zM19.7 11h1.1v1.1h-1.1zM14.9 16.1h1v1h-1zM8.5 17.8h0.7v0.7h-0.7zM18.3 15.5h1.2v1.2h-1.2zM18.4 15h0.8v0.8h-0.8zM25.6 15.4h0.8v0.8h-0.8zM19.7 14.6h1.3v1.3h-1.3zM17.7 12.5h1.1v1.1h-1.1zM17.9 11.5h1v1h-1zM5.1 18.5h0.8v0.8h-0.8zM16.3 13.8h0.8v0.8h-0.8zM7.3 13.9h0.9v0.9h-0.9zM23.2 17h1.3v1.3h-1.3zM16.4 19.2h0.9v0.9h-0.9zM10.1 12.6h0.9v0.9h-0.9zM22.6 14.4h0.8v0.8h-0.8zM16.9 12.3h1.2v1.2h-1.2zM16.4 18.9h0.8v0.8h-0.8zM8.3 14.9h0.7v0.7h-0.7zM18.1 16.4h0.7v0.7h-0.7zM21 21.5h1.1v1.1h-1.1zM12.1 21.5h1.2v1.2h-1.2zM9 19.9h0.7v0.7h-0.7zM14.1 21.4h1.2v1.2h-1.2zM16 12.5h0.9v0.9h-0.9zM13.4 17.9h0.6v0.6h-0.6zM6.6 19.3h0.9v0.9h-0.9zM16.3 14.1h0.6v0.6h-0.6zM12.8 12.9h0.7v0.7h-0.7zM21.4 15.1h1.1v1.1h-1.1zM5.9 18h0.9v0.9h-0.9zM14.5 13.3h1v1h-1zM15.4 17.1h1.2v1.2h-1.2zM8.4 19.7h1.2v1.2h-1.2zM17.8 13.5h0.9v0.9h-0.9zM24.3 17.8h0.9v0.9h-0.9zM8.8 13.7h1.2v1.2h-1.2zM23.1 17.4h0.8v0.8h-0.8zM12.2 20.6h0.6v0.6h-0.6zM12.3 12.2h0.8v0.8h-0.8zM10.1 15.6h1v1h-1zM24.7 17.2h0.7v0.7h-0.7zM9.9 13.5h0.8v0.8h-0.8zM25.2 15h1.2v1.2h-1.2zM7.8 17.2h0.7v0.7h-0.7zM16.3 21.8h0.7v0.7h-0.7zM18.5 19.4h0.9v0.9h-0.9zM18.4 14.5h1.2v1.2h-1.2zM26.4 16.6h1v1h-1zM14.4 15.5h1v1h-1zM5.3 15.2h1v1h-1zM10.2 15.6h1v1h-1zM4.9 16.3h1v1h-1zM18.5 15.7h0.8v0.8h-0.8zM17.4 23.2h1.1v1.1h-1.1zM21.2 12.8h1.2v1.2h-1.2zM14.4 20.6h1.2v1.2h-1.2zM22.7 21.1h1.1v1.1h-1.1zM11.5 13.8h0.6v0.6h-0.6zM22.6 15h0.8v0.8h-0.8zM12.3 18.6h1.1v1.1h-1.1zM17.1 13.7h0.9v0.9h-0.9zM25.5 15.5h0.7v0.7h-0.7zM13.1 17.8h1.1v1.1h-1.1zM22.3 18.5h0.7v0.7h-0.7zM8.5 13.1h1v1h-1zM11.1 15h1.2v1.2h-1.2zM20.3 12h0.6v0.6h-0.6zM20.1 18.8h0.7v0.7h-0.7zM13.2 12.1h0.8v0.8h-0.8zM14 17.6h0.9v0.9h-0.9zM24.3 18.9h0.7v0.7h-0.7zM21.2 12.6h0.7v0.7h-0.7z" fill="#fff" opacity="0.95"/><path d="M26 28.500h5M28.500 26v5" stroke="#000" stroke-width="1.100" fill="none"/></g><g transform="translate(172 104)" clip-path="url(#cc)"><rect width="32" height="32" fill="#fff"/><path d="M23.3 9.2l2.4 0.5M23.7 9.2l3.9 1.1M21.1 22l3 -0.3M18.2 12.6l2.7 -0.2M21.2 20.4l2.6 0.6M22.5 15.6l3.3 -0.4M12.4 10l3.1 0.3M15.4 21.1l3.2 0.4M21.3 21.9l4.8 0.2M4.4 10.8l4.8 -0.7M17.8 18.3l3.5 -0.3M21.7 10.3l2.1 -0.4M13.4 19.9l3.2 0.3M14 11.3l2.9 1M8.7 13l2.9 0.7M22.1 13.4l2.2 0M22.1 19.3l2.3 0.1M13.8 13.9l4.6 1.2M18.8 12.7l4.6 -1M22.9 11.1l3.4 0.2M23.5 9.6l4.4 -1M15.4 15l3.7 0.8M17.8 12.3l2 -0.4M10.7 17.4l3 -0.1M16.4 18.2l2.9 0.3M20.4 19.4l4.5 1.3M4.3 17.7l3.2 -0.1M14.4 10.9l4.9 -0.5M10.6 20.9l2.9 0.5M10.4 16.9l3 0.5M5.2 11.2l4 1.1M6.2 19.9l3 0.3M21.9 10.7l3 -0.6M18.8 16.1l4.7 0.2M11.9 19.2l4.2 -1.1M7.1 17.5l3.8 1M15.6 16.2l3 0.6M8.7 16.2l2.3 0.1M14.6 15.1l4.1 -0.6M19.6 13.4l4.8 1.3M17.2 14.3l2.4 -0.2M9.5 22l4.6 -1M17.9 19.2l3.9 -0.7M8.1 17.8l4.1 0.9M14.7 20.5l2.5 -0.3M21.3 9.7l3.3 0M21.5 13.8l3.5 0.3M13.6 15.2l3.8 0.1M12.6 14.5l4.7 1.5M8.9 21.3l2.9 -0.7M22 11.2l4.9 0.8M16.2 15l3.3 -0.8M13.3 19.3l4.4 -0.1M12.1 17.3l2.4 0.5M23.1 14.9l4.9 0.2M15.4 15.8l2.6 -0.3M19.2 15.6l4 0.6M17.6 13.2l3.2 0.9M7.5 20.3l2.3 0.7M21.7 17.9l3.7 -0.3M22.4 11l2.7 0.4M7 21.4l3.7 1.3M19.8 14.1l3.8 0M20.3 18.1l3.9 0.1M12.1 19.5l4.2 1.2M10.4 14l3 1M17.3 10.3l2.6 -0.5M17.5 12l2.2 0.3M17.8 18.1l2.7 -0.3M9 15.4l2.7 -0.4M20.1 21.2l3.5 -0.5M17.2 21.3l3.6 0.3M19.4 19.3l3.8 0.7M20.2 9.5l2.6 0.6M11.1 14.1l3.8 0.2M15.7 13.1l4 -0.1M22.6 14l4.4 -1.1M21.7 19.9l3.2 0.4M5.3 21l2.4 0M16.5 9.6l3.8 -0.1M20.1 13.7l3 -0.4M20.4 10.2l3 -0.5M23 20.5l2 0.7M14 10.9l4.4 0.4M13.6 18l3.5 0.6M11.8 12.1l4.9 0.9M23.4 21l3.8 1M13.9 10.6l2.5 0.6M22.6 20.1l4.7 -0.4M19.1 19.6l2.8 -0.5M7.1 21.2l3.3 -0.3M19 14.2l3.8 0.5M11.6 21.1l4.2 0.6M18.6 17.1l4.7 -0.7M22.9 10.3l2.6 -0.1M6.6 16.5l2.4 0M13.6 18l3.9 -0.7M17.2 19.8l4.4 1.6M11.5 10.1l2.5 -0.1M21.1 13.8l4.2 0.4M13.2 22l3.7 0.5M7.3 12.1l3.3 0.5M15.6 20.4l4.5 0.7M11.3 9.9l4.7 -0.4M8.8 10.6l4.9 -1M8.2 10l2.1 -0.1M18.6 18l4.2 0M4.4 19.4l4.2 0.6M6.8 21.4l3.2 1.2M10.4 15.7l3.3 0.6M14.9 21.4l3.1 0.6M22.2 19.2l3.4 -0.8M10 13l4.5 -0.1M16.2 12.2l2.4 -0.5M11.5 16l3.3 0.2M14.6 13l2.5 0.8M11.4 17.6l3.1 0.8M16.7 12.3l4.8 -1.2M5.4 18.9l2.8 -0.7M14.3 20.7l2.8 0.7M4.2 18.8l4.7 0.9M6.7 17.7l4.6 0.6M21 19l2.2 0.6M23.7 16.8l2.4 0.7M14.3 20.5l3.6 1.2M21.9 9.3l2.7 -0.5M21.5 18.3l4.7 0M14.3 10.9l4 1.3M23.9 19.2l4.7 0.2M6.6 9.1l4.8 -0.4M5.8 18.8l2.4 0.2M8.2 18.3l4.6 -0.1M5 16.5l2.6 0.7M9.5 16.5l3.9 -0.6M22.5 13.2l4.6 -0.7M5.1 20.1l4.4 0M11.5 21.5l3.8 0.5M5.5 16.5l4.1 -0.4M10.4 12l2.7 -0.5M6.5 12.6l4.6 0.3M19.5 13.7l2.9 0.9M12.5 16.1l3.5 0.4M17.3 11.6l3 -0.4M12.8 12.3l2.2 0.2M12.5 15l2.4 0.3M17.1 15l2.3 0.7M12 19.2l4.2 1.4M21.8 14.7l2.8 -0.3M16.7 17.6l2.6 0M21.5 13.2l4.5 -0.5" stroke="#000" stroke-width="0.7" fill="none" opacity="0.8" stroke-linecap="round"/><path d="M26 28.500h5M28.500 26v5" stroke="#000" stroke-width="1.100" fill="none"/></g><g transform="translate(206 104)" clip-path="url(#cc)"><rect width="32" height="32" fill="#fff"/><path d="M15.4 15.5h0.7v0.7h-0.7zM15.8 13.6h0.8v0.8h-0.8zM14.9 19.5h0.5v0.5h-0.5zM15.1 11.7h0.6v0.6h-0.6zM17.1 11.1h0.9v0.9h-0.9zM18 9.6h0.9v0.9h-0.9zM17.4 20.4h0.5v0.5h-0.5zM15.8 19.3h0.6v0.6h-0.6zM14.8 11.1h0.6v0.6h-0.6zM17.3 12h0.7v0.7h-0.7zM16.6 27.7h0.6v0.6h-0.6zM14 28.3h0.9v0.9h-0.9zM17.3 16.6h0.6v0.6h-0.6zM14.5 10.9h0.7v0.7h-0.7zM14.1 21.2h0.9v0.9h-0.9zM13.9 24.9h0.7v0.7h-0.7zM17.8 15.4h0.9v0.9h-0.9zM15.8 18.9h0.7v0.7h-0.7zM13.9 6.7h0.6v0.6h-0.6zM15.6 12.6h0.8v0.8h-0.8zM16.7 13.4h0.7v0.7h-0.7zM16 27.8h0.9v0.9h-0.9zM16.7 24.2h0.6v0.6h-0.6zM14.2 5.4h0.6v0.6h-0.6zM13.8 19.3h1v1h-1zM14.3 20.9h1v1h-1zM17.2 7h0.8v0.8h-0.8zM14.9 7.6h0.5v0.5h-0.5zM16.1 26.9h0.6v0.6h-0.6zM14.4 13.1h0.5v0.5h-0.5zM15.8 22h0.7v0.7h-0.7zM14 3.8h0.6v0.6h-0.6zM16.7 27h0.8v0.8h-0.8zM14.3 8.6h0.7v0.7h-0.7zM14.3 6h0.7v0.7h-0.7zM17.5 9.2h0.9v0.9h-0.9zM17.7 14.3h0.6v0.6h-0.6zM14.6 20.4h0.9v0.9h-0.9zM17.6 8.4h0.7v0.7h-0.7zM13.9 10.9h0.6v0.6h-0.6zM14.3 5h1v1h-1zM15.1 16h0.8v0.8h-0.8zM15.9 18.3h0.8v0.8h-0.8zM16 5.1h0.8v0.8h-0.8zM16.7 21.8h0.7v0.7h-0.7z" fill="#000" opacity="0.45"/><path d="M32 24.500V32H24.500z" fill="#ff8585"/><path d="M26 28.500h5M28.500 26v5" stroke="#000" stroke-width="1.100" fill="none"/></g><g transform="translate(2 138)" clip-path="url(#cc)"><rect width="32" height="32" fill="#fff"/><g stroke="#777" stroke-width="1.6" stroke-linecap="round" fill="none"><path d="M7 5l3 6M12 12l5-3M20 11l3-.5M10 15l3 4M16 19l7-.5M28 16l1 4M9 24l5 2M17 26l2 3"/></g></g><g transform="translate(36 138)" clip-path="url(#cc)"><rect width="32" height="32" fill="#fff"/><path d="M3 10l4 4 3-5M7 14l-3 6 2 6M6 20l8-3 6 2 8-3 2-6M14 17l-1-6 4 2M20 19l1 7M28 16l1 9M12 26l2-4" stroke="#555" stroke-width=".7" fill="none" opacity=".8"/><path d="M32 24.500V32H24.500z" fill="#ff8585"/><path d="M26 28.500h5M28.500 26v5" stroke="#000" stroke-width="1.100" fill="none"/></g><g transform="translate(70 138)" clip-path="url(#cc)"><rect width="32" height="32" fill="#fff"/><path d="M16.7 25.2h1v1h-1zM9.7 24h0.8v0.8h-0.8zM20.8 4.3h0.4v0.4h-0.4zM12.5 23.4h0.6v0.6h-0.6zM16 10.5h0.9v0.9h-0.9zM29.4 13h1v1h-1zM22.2 17.8h1v1h-1zM7.3 17.2h0.9v0.9h-0.9zM20.2 10.3h0.4v0.4h-0.4zM29.2 15.2h1v1h-1zM5.2 25.4h0.9v0.9h-0.9zM12.2 2.6h0.9v0.9h-0.9zM11.6 29.8h0.6v0.6h-0.6zM24.2 27h0.5v0.5h-0.5zM17.7 29.7h0.7v0.7h-0.7zM11.8 9h0.9v0.9h-0.9zM6.8 19.1h0.7v0.7h-0.7zM17.6 4.9h0.8v0.8h-0.8zM28.5 10.6h0.6v0.6h-0.6zM28.3 18.4h0.6v0.6h-0.6zM11.4 15h0.6v0.6h-0.6zM20 22.9h0.6v0.6h-0.6zM17.9 21.6h0.6v0.6h-0.6zM18.7 12.7h0.5v0.5h-0.5zM8.5 5.5h0.5v0.5h-0.5zM7.4 26.3h0.7v0.7h-0.7zM24.1 26.2h0.8v0.8h-0.8zM13.1 3.3h0.5v0.5h-0.5zM20.1 8.3h0.7v0.7h-0.7zM9 5.9h0.6v0.6h-0.6zM22.7 15.6h0.6v0.6h-0.6zM15.6 17.6h0.7v0.7h-0.7zM14.4 30h0.9v0.9h-0.9zM7.9 10.5h0.5v0.5h-0.5zM11.9 1.9h0.8v0.8h-0.8zM18 13.7h0.9v0.9h-0.9zM10.9 18.4h1v1h-1zM17.7 19.4h0.6v0.6h-0.6zM10.1 11.7h0.8v0.8h-0.8zM16.6 16.7h0.5v0.5h-0.5zM18.3 22.1h0.9v0.9h-0.9zM14.5 14.4h0.7v0.7h-0.7zM17.1 15.2h0.4v0.4h-0.4zM25.8 15h0.9v0.9h-0.9zM7.3 9h0.7v0.7h-0.7zM15.2 28.2h0.8v0.8h-0.8zM1.8 17.1h0.9v0.9h-0.9zM7.7 20.5h0.9v0.9h-0.9zM24.8 13.8h0.4v0.4h-0.4zM17.2 6.6h0.7v0.7h-0.7zM9.1 11.4h0.7v0.7h-0.7zM23.5 11.2h0.9v0.9h-0.9zM22.9 9.5h0.6v0.6h-0.6zM11 17.2h0.5v0.5h-0.5zM15.8 9.5h0.5v0.5h-0.5zM8.5 21.4h0.6v0.6h-0.6zM7 12h0.5v0.5h-0.5zM5.5 9.8h0.7v0.7h-0.7zM16.8 12.7h0.7v0.7h-0.7zM23.8 5.6h0.7v0.7h-0.7zM5.9 17h0.6v0.6h-0.6zM25.1 27.4h1v1h-1zM13.2 19.5h0.5v0.5h-0.5zM22.3 24.3h0.7v0.7h-0.7zM10.7 23.7h0.9v0.9h-0.9zM25 9.7h0.5v0.5h-0.5zM8.5 6.7h0.4v0.4h-0.4zM4.7 15.8h0.7v0.7h-0.7zM27.7 12.3h0.5v0.5h-0.5zM11.2 23.9h0.6v0.6h-0.6zM10.2 26.9h1v1h-1zM16.4 5.3h0.5v0.5h-0.5zM20.6 24.2h0.9v0.9h-0.9zM8.1 7.4h0.9v0.9h-0.9zM26.2 14.1h0.6v0.6h-0.6zM3.4 13.1h0.9v0.9h-0.9zM7.1 10.5h0.4v0.4h-0.4zM18.1 2.8h0.8v0.8h-0.8zM15.8 13.7h0.6v0.6h-0.6zM10.1 27.8h1v1h-1zM23.6 7.4h0.5v0.5h-0.5zM11.9 27.3h1v1h-1zM7.9 20h0.6v0.6h-0.6zM14.7 6.9h0.8v0.8h-0.8zM15.5 14.3h0.8v0.8h-0.8zM24 7.8h0.6v0.6h-0.6zM15.6 26.6h0.8v0.8h-0.8zM15.8 15.2h0.6v0.6h-0.6zM30.3 15.4h1v1h-1zM15.2 7h0.6v0.6h-0.6zM14.2 3.6h0.6v0.6h-0.6zM19.4 8.8h0.6v0.6h-0.6zM12.4 8.9h0.7v0.7h-0.7zM17.1 17h1v1h-1zM22.1 9.2h0.8v0.8h-0.8zM24 4.2h0.6v0.6h-0.6zM15.4 10.9h0.9v0.9h-0.9zM15.8 30.4h0.4v0.4h-0.4zM25.2 4.4h0.7v0.7h-0.7zM5.5 12.5h0.8v0.8h-0.8zM12.8 4.3h0.8v0.8h-0.8zM5.3 6.9h0.9v0.9h-0.9zM15.3 10.3h0.8v0.8h-0.8zM10.1 10.9h0.4v0.4h-0.4zM14.8 27.3h0.7v0.7h-0.7zM10.7 14.8h0.9v0.9h-0.9zM20.4 9.9h1v1h-1zM22.7 18.7h0.8v0.8h-0.8zM10.7 2.2h0.5v0.5h-0.5zM28.8 18.2h0.5v0.5h-0.5zM9.8 13.6h0.5v0.5h-0.5zM25.4 12.4h0.4v0.4h-0.4zM16.4 13.4h0.9v0.9h-0.9zM8.9 8.2h0.7v0.7h-0.7zM13.1 4.9h0.8v0.8h-0.8zM27 25.9h0.8v0.8h-0.8zM15.1 24.7h0.5v0.5h-0.5zM4 7.1h0.7v0.7h-0.7zM7.2 14.1h0.9v0.9h-0.9zM19.5 7h0.5v0.5h-0.5zM8.8 22.4h0.9v0.9h-0.9zM12.6 2.4h0.7v0.7h-0.7zM10.7 18.8h0.9v0.9h-0.9zM21 6.2h0.9v0.9h-0.9zM18.6 20.8h0.8v0.8h-0.8zM25.8 18.1h1v1h-1zM5.1 16.2h0.8v0.8h-0.8zM20.7 13h0.6v0.6h-0.6zM7.1 22.4h0.8v0.8h-0.8zM29.6 10.8h0.7v0.7h-0.7zM8.8 22.9h0.7v0.7h-0.7zM15.9 10.3h0.6v0.6h-0.6zM22.7 8.7h0.7v0.7h-0.7zM16.3 1.2h0.9v0.9h-0.9zM9 5.9h0.7v0.7h-0.7zM11.6 10.8h0.5v0.5h-0.5zM6.2 26.4h0.7v0.7h-0.7zM23.9 20.6h0.6v0.6h-0.6zM11.1 17.2h0.7v0.7h-0.7zM3.7 19.7h0.6v0.6h-0.6zM18.4 12.5h0.4v0.4h-0.4zM25.7 6.6h0.6v0.6h-0.6zM23.3 28.4h0.9v0.9h-0.9zM28.9 10.6h0.5v0.5h-0.5zM14.8 25.8h0.8v0.8h-0.8zM19.8 22.2h0.5v0.5h-0.5zM18 13.8h0.9v0.9h-0.9zM10.3 17.3h0.8v0.8h-0.8zM22.2 24.6h0.8v0.8h-0.8zM10.1 4h0.6v0.6h-0.6zM4.4 7.3h1v1h-1zM25.4 12.1h0.7v0.7h-0.7zM19 10.5h0.5v0.5h-0.5zM14.2 26.4h1v1h-1zM19.2 25h0.7v0.7h-0.7zM24.6 25.3h0.9v0.9h-0.9zM6.8 16.7h0.4v0.4h-0.4zM18.4 15.2h0.8v0.8h-0.8zM17 11.3h0.5v0.5h-0.5zM10.6 24.4h0.6v0.6h-0.6zM8.9 14.6h0.9v0.9h-0.9zM13.2 21.2h0.4v0.4h-0.4zM20.5 2.7h0.6v0.6h-0.6zM19.4 20h0.6v0.6h-0.6zM8.7 11.9h0.6v0.6h-0.6zM7.8 8.4h0.7v0.7h-0.7zM23.6 25.7h0.6v0.6h-0.6zM29.3 11.4h0.9v0.9h-0.9zM25.4 23.6h0.9v0.9h-0.9zM19.1 27.4h0.6v0.6h-0.6zM16.2 18.1h0.7v0.7h-0.7zM19.9 12h0.8v0.8h-0.8zM23 17.6h0.5v0.5h-0.5zM14.4 28.7h0.6v0.6h-0.6zM3.7 24.1h0.6v0.6h-0.6zM7 16.4h0.9v0.9h-0.9zM17.9 7.3h0.4v0.4h-0.4zM13.7 8.9h1v1h-1zM28.4 9.4h0.8v0.8h-0.8zM17.6 17h0.7v0.7h-0.7zM7.5 5.7h0.4v0.4h-0.4zM21.7 6h0.9v0.9h-0.9zM20.5 10.2h0.9v0.9h-0.9zM24.8 12.1h0.9v0.9h-0.9zM15.8 1h1v1h-1zM30.6 14.6h0.8v0.8h-0.8zM21.5 4h0.9v0.9h-0.9zM15.8 21.8h0.4v0.4h-0.4zM13.3 6.9h1v1h-1zM10.8 25.5h0.5v0.5h-0.5zM21.5 24.6h0.8v0.8h-0.8zM12.6 23.3h0.5v0.5h-0.5zM9 26.9h0.5v0.5h-0.5zM8.7 5.1h0.7v0.7h-0.7zM16.4 27.8h0.5v0.5h-0.5zM15.5 10h0.7v0.7h-0.7zM11 7.1h0.7v0.7h-0.7zM9.2 12.6h1v1h-1zM9.9 6.8h0.6v0.6h-0.6zM17.3 7.7h0.9v0.9h-0.9zM6.9 16.8h0.6v0.6h-0.6zM14.9 13h0.6v0.6h-0.6zM19.8 5.8h0.4v0.4h-0.4zM9 18.1h0.6v0.6h-0.6zM5.9 17.5h1v1h-1zM6.8 21.5h0.9v0.9h-0.9zM4.7 16.5h0.6v0.6h-0.6zM5.3 8.5h1v1h-1zM11.3 29.6h0.7v0.7h-0.7zM19.9 28.6h0.8v0.8h-0.8zM10.7 13.6h0.6v0.6h-0.6zM8.2 10.7h0.8v0.8h-0.8zM13.9 2.7h0.9v0.9h-0.9zM20.9 28.5h0.7v0.7h-0.7zM11.2 24.9h0.8v0.8h-0.8zM18.4 19.1h0.6v0.6h-0.6zM14 16.3h0.5v0.5h-0.5zM10.7 5h0.4v0.4h-0.4zM19.9 23.8h0.7v0.7h-0.7zM24.5 8.4h0.6v0.6h-0.6zM20.4 10.8h0.7v0.7h-0.7zM15.4 29.6h0.5v0.5h-0.5zM5.3 24.1h0.9v0.9h-0.9zM16.4 22.8h0.6v0.6h-0.6zM7.8 10.8h0.6v0.6h-0.6zM18.2 23.5h0.9v0.9h-0.9zM20.9 6.7h0.8v0.8h-0.8zM8.4 5.1h0.7v0.7h-0.7zM21.4 24.4h0.8v0.8h-0.8zM6.1 20.6h0.8v0.8h-0.8zM9.1 4.6h0.4v0.4h-0.4zM21.9 28.5h0.4v0.4h-0.4zM13.3 24.8h0.9v0.9h-0.9zM24 5.8h0.6v0.6h-0.6zM2.7 12.6h0.8v0.8h-0.8zM8.8 15.8h0.7v0.7h-0.7zM16.6 22.4h0.7v0.7h-0.7zM25.2 18.4h1v1h-1zM29.3 20.6h0.7v0.7h-0.7zM6.4 8.3h0.7v0.7h-0.7zM23.8 15.4h0.4v0.4h-0.4zM9.6 17.4h0.5v0.5h-0.5zM27.7 10.2h0.5v0.5h-0.5zM28.4 14.8h0.5v0.5h-0.5zM3.8 16.8h1v1h-1zM10.5 11.9h0.9v0.9h-0.9zM20.4 24.3h0.4v0.4h-0.4zM12.5 25.3h0.5v0.5h-0.5zM8.6 28.6h0.5v0.5h-0.5zM12.4 10.5h0.5v0.5h-0.5zM29.5 11.2h0.8v0.8h-0.8zM11.2 9.8h0.8v0.8h-0.8zM28.9 20h0.5v0.5h-0.5zM19.5 21.3h1v1h-1zM12.7 28.2h0.7v0.7h-0.7zM30.7 17.6h0.6v0.6h-0.6zM22.5 28.6h0.5v0.5h-0.5zM12.4 15.3h1v1h-1zM28.4 8.5h0.8v0.8h-0.8zM20.5 18.1h0.4v0.4h-0.4zM13.6 28.3h0.6v0.6h-0.6zM12.9 7.9h0.5v0.5h-0.5zM27.2 19.5h0.9v0.9h-0.9zM13.6 20.2h0.6v0.6h-0.6zM5.8 14.8h0.5v0.5h-0.5zM15.2 11.5h0.5v0.5h-0.5zM10.2 27.8h0.9v0.9h-0.9zM27 7.6h0.7v0.7h-0.7zM21.1 6.2h0.6v0.6h-0.6zM5.4 16.2h0.7v0.7h-0.7zM14.1 27.3h0.4v0.4h-0.4zM25.6 26h0.6v0.6h-0.6zM23.6 24.2h0.6v0.6h-0.6zM4.8 7.8h1v1h-1zM11.7 24.5h0.5v0.5h-0.5zM25 9.2h0.8v0.8h-0.8zM9.7 23h0.8v0.8h-0.8zM13.5 27.8h0.8v0.8h-0.8zM18.8 5.1h0.4v0.4h-0.4zM14.6 9.7h0.7v0.7h-0.7zM15.5 20.8h0.5v0.5h-0.5zM25 13.3h0.7v0.7h-0.7zM18.4 12.9h0.7v0.7h-0.7zM30.2 18.9h0.7v0.7h-0.7zM20.9 10.2h1v1h-1zM9.6 29.4h0.7v0.7h-0.7zM1.3 15h0.7v0.7h-0.7zM13.4 1.2h0.5v0.5h-0.5zM7.7 11h0.6v0.6h-0.6zM18.8 24.8h0.8v0.8h-0.8zM16.4 7.8h0.7v0.7h-0.7zM10.5 13h0.6v0.6h-0.6zM30.2 17.2h0.6v0.6h-0.6zM28.5 18.8h0.9v0.9h-0.9zM9.1 21.1h0.9v0.9h-0.9zM12.9 27.8h0.4v0.4h-0.4zM11 8h0.6v0.6h-0.6zM16.9 18.7h0.6v0.6h-0.6zM28.9 15.7h1v1h-1zM21.6 4.6h0.9v0.9h-0.9zM12.1 28.3h1v1h-1zM14.2 30.6h0.5v0.5h-0.5zM7.6 27h0.9v0.9h-0.9zM10.1 13.4h0.7v0.7h-0.7zM17.9 21.5h0.8v0.8h-0.8zM8.1 14h0.8v0.8h-0.8zM16.8 12h0.7v0.7h-0.7zM23.6 9.7h0.4v0.4h-0.4zM19.7 1.5h0.5v0.5h-0.5zM4.4 8h0.4v0.4h-0.4zM26.9 25.1h1v1h-1zM24.9 9.6h0.8v0.8h-0.8zM3.6 18.3h0.9v0.9h-0.9zM29 14.4h0.5v0.5h-0.5zM12.5 11.2h0.4v0.4h-0.4zM25.8 13.4h0.8v0.8h-0.8zM20.9 29.4h0.9v0.9h-0.9zM17.6 12.1h0.8v0.8h-0.8zM7.6 5.9h0.8v0.8h-0.8zM3.8 22.7h0.8v0.8h-0.8zM23.3 12.9h0.7v0.7h-0.7zM24.6 5.2h0.6v0.6h-0.6zM4 19.7h0.6v0.6h-0.6zM28.1 16h0.7v0.7h-0.7zM3.3 9.9h0.8v0.8h-0.8zM13.1 6.2h0.5v0.5h-0.5zM17.9 1.5h0.7v0.7h-0.7zM14.9 18.3h0.5v0.5h-0.5zM26 5.5h0.8v0.8h-0.8zM22.1 26.8h0.8v0.8h-0.8zM19.8 19.6h0.6v0.6h-0.6zM8.3 8h0.9v0.9h-0.9zM16.9 15.1h1v1h-1zM24.1 21.1h0.8v0.8h-0.8zM6.7 17.8h0.5v0.5h-0.5zM24.5 18h0.5v0.5h-0.5zM12.6 30.3h0.9v0.9h-0.9zM15.9 9.2h0.5v0.5h-0.5zM16.8 4.2h0.7v0.7h-0.7zM16.3 14.9h0.9v0.9h-0.9zM12.3 25.3h0.5v0.5h-0.5zM24.2 14.9h0.7v0.7h-0.7zM12.4 6.6h0.6v0.6h-0.6zM1.6 12.9h0.8v0.8h-0.8zM6.1 11.6h0.5v0.5h-0.5zM7.3 12.3h0.4v0.4h-0.4zM27.5 25.1h0.9v0.9h-0.9zM16.2 21.9h0.7v0.7h-0.7zM11.6 12.2h0.9v0.9h-0.9zM26.4 10.1h0.7v0.7h-0.7zM16.5 12.9h0.5v0.5h-0.5zM18.2 1.3h1v1h-1zM9.5 21h0.7v0.7h-0.7zM22.8 26.3h0.4v0.4h-0.4zM27.8 9.1h0.8v0.8h-0.8zM6.5 14.2h0.7v0.7h-0.7zM22.9 12.6h0.7v0.7h-0.7zM11.8 9.9h0.4v0.4h-0.4zM11.8 23.8h1v1h-1zM11.9 26.1h0.5v0.5h-0.5zM20.6 26h0.9v0.9h-0.9zM26.1 6.3h0.8v0.8h-0.8zM24.3 23.2h0.8v0.8h-0.8zM27.8 6.8h1v1h-1zM29.3 11.5h0.6v0.6h-0.6zM19.9 16.6h0.4v0.4h-0.4zM26.2 11.9h0.8v0.8h-0.8zM12.4 19.6h1v1h-1zM22 10h0.5v0.5h-0.5zM19.4 20.2h0.6v0.6h-0.6zM23.7 3.3h0.7v0.7h-0.7zM28.6 14h0.6v0.6h-0.6zM23.1 17h0.5v0.5h-0.5zM9 9.4h0.5v0.5h-0.5zM5.4 10.5h1v1h-1zM15.6 1.8h0.8v0.8h-0.8zM22.2 17.3h0.7v0.7h-0.7zM9.7 21.8h0.8v0.8h-0.8zM20.4 18.5h0.8v0.8h-0.8zM3.3 14.7h1v1h-1zM6.8 23.3h0.4v0.4h-0.4zM27.7 20.7h0.9v0.9h-0.9zM14 15.5h1v1h-1zM19.2 13.7h0.6v0.6h-0.6zM3.2 17.2h0.4v0.4h-0.4zM16.4 15.8h0.7v0.7h-0.7zM22 6.5h0.5v0.5h-0.5zM11.2 26.5h0.7v0.7h-0.7zM22.5 8.3h0.9v0.9h-0.9zM16.8 21.3h0.7v0.7h-0.7zM6.1 8.5h0.5v0.5h-0.5zM19.9 3.5h0.7v0.7h-0.7zM28.3 24h0.5v0.5h-0.5zM14.5 26.9h1v1h-1zM18.5 27.8h0.5v0.5h-0.5zM11.6 20.5h0.8v0.8h-0.8zM15.7 16.8h0.4v0.4h-0.4zM2.4 13.9h0.9v0.9h-0.9zM9.4 17.9h0.8v0.8h-0.8zM14 5.9h0.7v0.7h-0.7zM24.6 8.2h0.9v0.9h-0.9zM5.9 12.7h0.5v0.5h-0.5zM3.5 19.8h0.7v0.7h-0.7zM1.4 15h0.8v0.8h-0.8zM4.8 21.7h0.6v0.6h-0.6zM22.2 18.3h0.4v0.4h-0.4zM22.7 4.8h0.9v0.9h-0.9zM21.1 2.3h0.4v0.4h-0.4zM8.4 19.6h0.5v0.5h-0.5zM10.4 4.8h0.8v0.8h-0.8zM24.3 8.3h0.7v0.7h-0.7zM22.4 25.4h0.5v0.5h-0.5zM6.9 15.5h0.4v0.4h-0.4zM24.9 6.1h0.8v0.8h-0.8zM15.2 22.8h0.6v0.6h-0.6zM16 1.6h0.9v0.9h-0.9zM22 3.2h0.7v0.7h-0.7zM14.3 17.4h0.6v0.6h-0.6zM9.8 9.5h0.9v0.9h-0.9zM21.7 24.4h0.7v0.7h-0.7z" fill="#000" opacity="0.7"/><path d="M32 24.500V32H24.500z" fill="#ff8585"/><path d="M26 28.500h5M28.500 26v5" stroke="#000" stroke-width="1.100" fill="none"/></g><g transform="translate(104 138)" clip-path="url(#cc)"><rect width="32" height="32" fill="#fff"/><g filter="url(#bl12)"><ellipse cx="15.5" cy="17" rx="8" ry="8" fill="#000" opacity="0.6"/></g><g filter="url(#bl05)"><path d="M18.3 23.1h1v1h-1zM17.2 22.1h1.2v1.2h-1.2zM10.4 17.6h0.9v0.9h-0.9zM15.3 24.1h1v1h-1zM11.8 9.8h1.6v1.6h-1.6zM18.7 15.8h0.9v0.9h-0.9zM14.9 11h0.8v0.8h-0.8zM11.4 8.6h1.6v1.6h-1.6zM16.3 20.8h0.6v0.6h-0.6zM18.7 16.5h1.5v1.5h-1.5zM9.5 15.5h1.2v1.2h-1.2zM18.3 11.5h1v1h-1zM19.4 20.5h1.7v1.7h-1.7zM19.8 22.5h1.4v1.4h-1.4zM17.2 19.6h1.4v1.4h-1.4zM11.2 18.8h1.2v1.2h-1.2zM21.3 21.3h1.3v1.3h-1.3zM11.4 16.1h1.6v1.6h-1.6zM18.1 11.8h0.7v0.7h-0.7zM17.1 19.1h0.7v0.7h-0.7zM12.1 12.4h0.8v0.8h-0.8zM21 13.5h1.6v1.6h-1.6zM18.4 10.7h1.2v1.2h-1.2zM17.9 16.8h1.4v1.4h-1.4zM19.4 13.5h1.6v1.6h-1.6zM17.5 21.3h0.9v0.9h-0.9zM9.8 21.3h0.8v0.8h-0.8zM10.8 24.6h1v1h-1zM25.9 27.5h1.2v1.2h-1.2zM21.4 17.7h0.8v0.8h-0.8zM19.4 23.4h1.4v1.4h-1.4zM10.6 19.5h1.3v1.3h-1.3zM13.4 17.5h1.5v1.5h-1.5zM16.1 12.2h1.1v1.1h-1.1zM11.5 13.7h1.1v1.1h-1.1zM22.6 10h0.8v0.8h-0.8zM19.3 24.1h1.7v1.7h-1.7zM15 13.2h0.7v0.7h-0.7zM20.5 7.6h1.5v1.5h-1.5zM14.4 4.7h1.2v1.2h-1.2zM18.7 15.5h0.7v0.7h-0.7zM19.3 11h1.6v1.6h-1.6zM18.2 19.8h1.3v1.3h-1.3zM19.3 18.6h1.3v1.3h-1.3zM22.3 14.2h1.1v1.1h-1.1zM10.9 20h1.5v1.5h-1.5zM16.2 17h1.7v1.7h-1.7zM16 15.7h0.9v0.9h-0.9zM15 20.2h0.8v0.8h-0.8zM20 22.2h1.1v1.1h-1.1zM22.4 22.5h1.6v1.6h-1.6zM14.9 25.6h1.5v1.5h-1.5zM13.6 16.6h1.5v1.5h-1.5zM22.3 10.2h1.7v1.7h-1.7zM22.1 27.7h0.7v0.7h-0.7zM11.7 21.3h1.4v1.4h-1.4zM5.6 15.1h1.5v1.5h-1.5zM19.9 11.6h1.1v1.1h-1.1zM22.1 17.9h1.7v1.7h-1.7zM20.1 17.5h1.5v1.5h-1.5zM14.1 11.1h0.9v0.9h-0.9zM15.6 19.5h1.4v1.4h-1.4zM17.9 17.3h1.5v1.5h-1.5zM14.7 17.3h1.1v1.1h-1.1zM20.4 14.5h0.9v0.9h-0.9zM19 21.1h0.9v0.9h-0.9zM15.2 18.6h1.3v1.3h-1.3zM17 11.7h1.3v1.3h-1.3zM11.7 30.9h0.9v0.9h-0.9zM16.2 16.6h1.4v1.4h-1.4zM19.6 12.7h0.9v0.9h-0.9zM22.3 29h1.8v1.8h-1.8zM15.9 21.7h1.6v1.6h-1.6zM16.3 16.2h1.3v1.3h-1.3zM15.5 18.9h1.4v1.4h-1.4zM12.4 17.3h1.5v1.5h-1.5zM13.9 20.2h1v1h-1zM18.4 25.3h1v1h-1zM21.9 14.1h1.2v1.2h-1.2zM19 14.3h0.6v0.6h-0.6zM14.6 15.6h1.7v1.7h-1.7zM20 16.2h0.7v0.7h-0.7zM18.9 16.1h1.8v1.8h-1.8zM6 18.4h1.6v1.6h-1.6zM17.9 20.4h1.1v1.1h-1.1zM18.8 27.1h0.9v0.9h-0.9zM15.8 19.9h0.8v0.8h-0.8zM16.7 14.1h1.3v1.3h-1.3zM21.4 23h1.5v1.5h-1.5zM16.9 16.5h1.4v1.4h-1.4zM14.9 12.9h1.4v1.4h-1.4zM12.8 22.5h1.6v1.6h-1.6zM17.4 13.3h0.9v0.9h-0.9zM18.7 16h1.2v1.2h-1.2zM11.7 19.2h1.2v1.2h-1.2zM19.3 20.4h1.4v1.4h-1.4zM18.6 12.6h0.9v0.9h-0.9zM14.9 19.9h0.8v0.8h-0.8zM13.9 21.2h1.7v1.7h-1.7zM15.9 6.6h1.2v1.2h-1.2zM17.6 22.6h1.4v1.4h-1.4zM18.8 16.9h1.5v1.5h-1.5zM20 15.9h1.2v1.2h-1.2zM20.9 21.3h0.7v0.7h-0.7zM17 9.4h1.6v1.6h-1.6zM16.5 15.6h1.7v1.7h-1.7zM12.5 6.2h1.7v1.7h-1.7zM6.5 18.1h0.8v0.8h-0.8zM22.3 15.7h1.6v1.6h-1.6zM9.7 15.3h0.9v0.9h-0.9zM17.3 11.7h0.9v0.9h-0.9zM15.7 10.9h1.1v1.1h-1.1zM17.2 12.5h1.4v1.4h-1.4zM11.3 15.8h1v1h-1zM13 15.4h0.8v0.8h-0.8zM12.6 23.7h0.8v0.8h-0.8zM16 12.9h1.7v1.7h-1.7zM22.5 22.7h1.6v1.6h-1.6zM18.6 11.3h1v1h-1zM18.6 16.1h1.4v1.4h-1.4zM14 18h1.1v1.1h-1.1zM12.2 24.4h0.8v0.8h-0.8zM16 16h0.7v0.7h-0.7zM7.9 9.6h1.3v1.3h-1.3zM20.8 25.6h1.4v1.4h-1.4zM17.9 17.1h1.1v1.1h-1.1zM9.7 15.9h1.6v1.6h-1.6zM6.7 9.4h1.1v1.1h-1.1zM11.9 22.7h1.7v1.7h-1.7zM14.2 17.6h1.1v1.1h-1.1zM18.3 26.4h1v1h-1zM9.4 18.8h0.7v0.7h-0.7zM20.2 20h0.9v0.9h-0.9zM22.6 19.8h1.5v1.5h-1.5zM13.7 15.4h1.6v1.6h-1.6zM17.7 16.9h1.4v1.4h-1.4zM17.6 17.7h1v1h-1zM20.5 16h1.2v1.2h-1.2zM19 14h0.9v0.9h-0.9zM18.4 18.6h1.3v1.3h-1.3zM25.8 7.8h0.9v0.9h-0.9zM13.5 13.5h1.3v1.3h-1.3zM26 18.1h1.5v1.5h-1.5zM15.8 10.5h1.1v1.1h-1.1zM18.5 12.4h1.4v1.4h-1.4zM15.1 19.9h1.5v1.5h-1.5zM14.9 18.3h1v1h-1zM12.9 18.4h0.8v0.8h-0.8zM14.4 12h1.2v1.2h-1.2zM15.2 15.6h1.2v1.2h-1.2zM19.2 16.7h1.4v1.4h-1.4zM17.5 21h1.1v1.1h-1.1zM16.2 20.3h1v1h-1zM11 17.8h1.2v1.2h-1.2zM15.5 22.8h1.5v1.5h-1.5zM11.2 17.8h1.6v1.6h-1.6zM11.7 13.2h1v1h-1zM17.7 16.4h1.7v1.7h-1.7zM12 26.6h0.7v0.7h-0.7zM13.7 12.1h1.3v1.3h-1.3zM19.3 19.3h1v1h-1zM8.7 14.4h1.7v1.7h-1.7zM15.1 18.4h0.8v0.8h-0.8zM20.5 14.1h1.4v1.4h-1.4zM23.7 16.8h1.3v1.3h-1.3zM16 14.3h1.6v1.6h-1.6zM19.9 25.4h1.6v1.6h-1.6zM12.1 15.4h0.8v0.8h-0.8zM12.3 17.2h1v1h-1zM16.6 18.6h1.5v1.5h-1.5zM16.8 11h1.3v1.3h-1.3zM18 11.4h1.4v1.4h-1.4zM17.2 17.6h1.4v1.4h-1.4zM11.9 16h1.6v1.6h-1.6zM9.6 18.4h1.7v1.7h-1.7zM6.4 20.2h1.2v1.2h-1.2zM11.6 10.5h1.2v1.2h-1.2zM6.5 15.1h1.5v1.5h-1.5zM10 12.3h0.9v0.9h-0.9zM7.3 14h1.5v1.5h-1.5zM16.9 16.3h0.8v0.8h-0.8zM17.3 28.1h1.7v1.7h-1.7zM15.3 18.7h1v1h-1zM19.7 9.3h1.3v1.3h-1.3zM22.8 14h0.6v0.6h-0.6zM19.5 24.7h1.5v1.5h-1.5zM19.7 12.5h1.7v1.7h-1.7zM20 17h0.6v0.6h-0.6zM24.7 16h1.4v1.4h-1.4zM10.2 15.3h1.3v1.3h-1.3zM15 19.2h1.6v1.6h-1.6zM17.2 13.8h1.1v1.1h-1.1zM8.9 21h1v1h-1zM14.4 14.9h1.7v1.7h-1.7zM13.2 13.1h1.2v1.2h-1.2zM13.2 11.6h0.8v0.8h-0.8zM16.7 18.8h1.4v1.4h-1.4zM17.8 17h1.6v1.6h-1.6zM15.9 13.5h1.2v1.2h-1.2zM22.8 21.2h1.2v1.2h-1.2zM18 12.8h1.1v1.1h-1.1zM7.7 14.7h1.3v1.3h-1.3zM12.7 13.2h0.8v0.8h-0.8zM16 25.5h0.6v0.6h-0.6zM17.6 11.7h1v1h-1zM11 18.3h1.5v1.5h-1.5zM14.4 6.6h1.2v1.2h-1.2zM13.6 14.7h1.4v1.4h-1.4zM24.3 18h1.7v1.7h-1.7zM13.3 17.8h0.8v0.8h-0.8zM15 16.6h1v1h-1zM17.2 17h0.7v0.7h-0.7zM22.6 13.6h1.2v1.2h-1.2zM14.8 14.9h1.5v1.5h-1.5zM16 24.1h1.1v1.1h-1.1zM16.6 15.7h0.7v0.7h-0.7zM21.7 11h1v1h-1zM19.5 21.1h1.2v1.2h-1.2zM8.3 21.8h0.7v0.7h-0.7zM10.5 21.3h1.2v1.2h-1.2zM9.8 19.8h0.8v0.8h-0.8zM14 16.9h0.9v0.9h-0.9zM19.1 17.9h0.6v0.6h-0.6zM26.5 16.6h0.6v0.6h-0.6zM22.6 24.8h1.7v1.7h-1.7zM28.6 11h1.2v1.2h-1.2zM27.9 16.5h1v1h-1zM10.2 17.1h1.8v1.8h-1.8zM12.6 14h1.5v1.5h-1.5zM12.1 22.3h1v1h-1zM10.4 19.2h0.7v0.7h-0.7zM11.7 8.9h0.7v0.7h-0.7zM17 23.2h1v1h-1zM19.2 18h0.8v0.8h-0.8zM23.1 14.9h0.7v0.7h-0.7zM6.4 19.1h1.1v1.1h-1.1zM15.3 20.4h1.1v1.1h-1.1zM21.1 5h1.8v1.8h-1.8zM16.5 16.1h1.4v1.4h-1.4zM14.2 15h0.6v0.6h-0.6zM11.6 17.4h1.6v1.6h-1.6zM13.9 12.8h1.5v1.5h-1.5zM21.1 17.8h0.9v0.9h-0.9zM14.1 22.8h1.4v1.4h-1.4zM20.7 15.4h0.9v0.9h-0.9zM23 12.6h1.6v1.6h-1.6zM15.1 16.9h1.5v1.5h-1.5zM19.8 19.8h0.8v0.8h-0.8zM14.7 12.1h1.7v1.7h-1.7zM18.8 14.8h0.9v0.9h-0.9zM13.6 7.5h1.7v1.7h-1.7zM11.7 16.8h0.9v0.9h-0.9zM16 12.9h1.6v1.6h-1.6zM22.4 15.5h1.2v1.2h-1.2zM22.7 14.9h1.3v1.3h-1.3zM11.2 13.3h1v1h-1zM21.6 19.6h0.7v0.7h-0.7zM11.5 18.9h1.5v1.5h-1.5zM11.4 8.6h1.3v1.3h-1.3zM12.1 16.8h0.9v0.9h-0.9zM10.7 20h1.2v1.2h-1.2zM16.9 20.3h1.6v1.6h-1.6zM13.2 15h1v1h-1zM14.6 18.7h1.4v1.4h-1.4zM10.6 16.7h1.5v1.5h-1.5zM11.4 11.6h1.6v1.6h-1.6zM14.6 15.2h1.6v1.6h-1.6zM23.9 15.3h0.7v0.7h-0.7zM20 11.5h1.1v1.1h-1.1zM13.5 11.8h1.6v1.6h-1.6zM12.2 10h1.5v1.5h-1.5zM15.2 17.1h1.3v1.3h-1.3zM9.2 17.5h1.5v1.5h-1.5zM14.3 14.5h0.9v0.9h-0.9zM21.9 24.3h0.8v0.8h-0.8zM24.9 24.7h1.4v1.4h-1.4zM21.2 18.2h1v1h-1zM16.4 15.2h0.8v0.8h-0.8zM12.1 6.6h1.5v1.5h-1.5zM14.3 21.7h1v1h-1zM10.7 17.5h1.5v1.5h-1.5zM18 13.1h1.3v1.3h-1.3zM18.5 14.5h1.7v1.7h-1.7zM17.8 20.3h1.5v1.5h-1.5zM10.7 18.1h1.2v1.2h-1.2zM18.3 21.4h1v1h-1zM21.4 18.4h1.4v1.4h-1.4zM16.9 18h0.8v0.8h-0.8zM17.5 19.7h1.3v1.3h-1.3zM13 19.1h1.3v1.3h-1.3zM16 9.6h1.6v1.6h-1.6zM12 13.5h1.3v1.3h-1.3zM14.6 25.9h0.6v0.6h-0.6zM15.6 13.9h1.6v1.6h-1.6zM20.2 6.2h1.4v1.4h-1.4zM11.4 18.8h0.9v0.9h-0.9zM19.4 14.9h1.2v1.2h-1.2zM12.1 18.3h1.4v1.4h-1.4zM21.1 14.2h1.1v1.1h-1.1zM22.9 18.3h1.2v1.2h-1.2zM13.1 19h1.4v1.4h-1.4zM17.2 16.8h1.7v1.7h-1.7zM15.6 19.6h1.2v1.2h-1.2zM17 17.4h1.6v1.6h-1.6zM17.5 14.4h1.1v1.1h-1.1zM11.5 17h0.8v0.8h-0.8zM21.1 22h0.8v0.8h-0.8zM20.1 18.6h1.4v1.4h-1.4zM13.9 12.9h1.1v1.1h-1.1zM14.8 24.5h1.4v1.4h-1.4zM17.5 18.9h0.9v0.9h-0.9zM12.7 14.2h1.1v1.1h-1.1zM11.7 16.3h0.6v0.6h-0.6zM12.6 19.9h1.2v1.2h-1.2zM19.6 20.6h0.7v0.7h-0.7zM14.5 21.1h1.1v1.1h-1.1zM8.6 9.6h1.3v1.3h-1.3zM8.6 15.9h0.8v0.8h-0.8zM8 16.8h1.1v1.1h-1.1zM12.3 22.1h1v1h-1zM15.7 12.6h1.1v1.1h-1.1zM20.4 16h1.1v1.1h-1.1zM13.7 17h0.9v0.9h-0.9zM14 16.8h1.4v1.4h-1.4zM21.4 16.3h1.6v1.6h-1.6zM15.8 11.2h0.6v0.6h-0.6zM7.1 18.1h1.1v1.1h-1.1zM21.3 14.2h0.9v0.9h-0.9zM13.5 20.3h1.5v1.5h-1.5zM14.5 16.9h1.3v1.3h-1.3zM18.3 15h0.9v0.9h-0.9zM14.5 25.2h1.5v1.5h-1.5zM16 22.1h1.1v1.1h-1.1zM13.4 15.3h1.5v1.5h-1.5zM15 21.3h0.7v0.7h-0.7zM15.4 24.4h1.2v1.2h-1.2zM24.2 19h1.4v1.4h-1.4zM10 17.3h1.5v1.5h-1.5zM14.1 26.4h0.7v0.7h-0.7zM16.8 21.3h0.9v0.9h-0.9zM16.4 21.6h1.3v1.3h-1.3zM11 22.6h1.1v1.1h-1.1zM16.4 28.2h1.5v1.5h-1.5zM14.1 20.8h1.5v1.5h-1.5zM14.6 13.2h0.8v0.8h-0.8zM26.2 13.2h1.4v1.4h-1.4zM13.3 10.8h1.6v1.6h-1.6zM20.8 16.1h1.6v1.6h-1.6zM16.7 23.4h1.4v1.4h-1.4zM18 18h1.7v1.7h-1.7zM12.7 8.6h1.2v1.2h-1.2zM18.6 21.6h1.7v1.7h-1.7zM11.9 17.3h0.6v0.6h-0.6zM17.2 11.7h1v1h-1zM9.7 14.5h1.2v1.2h-1.2zM15.1 10.9h1.7v1.7h-1.7zM11.3 16.9h1v1h-1zM25.6 13.5h1.6v1.6h-1.6zM4.6 8.2h1.1v1.1h-1.1zM11.6 14.6h0.7v0.7h-0.7zM21.5 14.1h1v1h-1zM18.1 20.9h1.5v1.5h-1.5zM11.8 15.9h1.2v1.2h-1.2zM10.8 24.5h1.4v1.4h-1.4zM9.8 21h0.7v0.7h-0.7zM13.5 15.3h0.9v0.9h-0.9zM8 18.2h1v1h-1zM17.7 22h1.5v1.5h-1.5zM20.2 9h0.6v0.6h-0.6zM13.8 16.9h1.3v1.3h-1.3zM5.7 24.1h0.7v0.7h-0.7zM19.8 17.8h0.7v0.7h-0.7zM13.1 29.7h0.8v0.8h-0.8zM18.6 8.8h0.8v0.8h-0.8zM14.1 20.6h1.3v1.3h-1.3zM14.2 15.7h1.3v1.3h-1.3zM21 17.3h1v1h-1zM17.6 9.9h1.5v1.5h-1.5zM7 28h1.2v1.2h-1.2zM3.6 15.4h1.1v1.1h-1.1zM22 22.6h1.3v1.3h-1.3zM18.7 12.2h1.2v1.2h-1.2zM13.8 10h1.2v1.2h-1.2zM19.5 19.8h1.2v1.2h-1.2zM15.9 15.7h1.8v1.8h-1.8zM15.8 11.7h0.8v0.8h-0.8zM12.7 15.5h1v1h-1zM14.5 22.6h1.2v1.2h-1.2zM12.6 20.3h0.7v0.7h-0.7zM16.4 20h1.2v1.2h-1.2zM17.8 15.9h1v1h-1zM12.2 19.8h0.7v0.7h-0.7zM9.2 13h0.8v0.8h-0.8zM13.9 15.9h1.1v1.1h-1.1zM12.1 18.6h1.1v1.1h-1.1zM18.2 25.7h1.4v1.4h-1.4zM9.3 13.2h1v1h-1zM15.4 17h1v1h-1zM19.8 16.7h1.5v1.5h-1.5zM17.2 26.5h1.5v1.5h-1.5zM10.4 17.1h1.4v1.4h-1.4zM20.6 10.1h1.1v1.1h-1.1zM9.8 20.3h1.2v1.2h-1.2zM11.9 21.2h1.3v1.3h-1.3zM17.3 24.1h1.5v1.5h-1.5zM14.9 19.8h1.6v1.6h-1.6zM22.6 14.8h0.7v0.7h-0.7zM15.3 6.9h0.9v0.9h-0.9zM15.9 16.9h1.8v1.8h-1.8zM20.5 18.9h1.2v1.2h-1.2zM22.2 15.4h1.7v1.7h-1.7zM21.6 18.7h1.3v1.3h-1.3zM18.7 20.9h1v1h-1zM8.1 20.1h1.5v1.5h-1.5zM14.8 14.5h1.1v1.1h-1.1zM15.9 16.4h0.9v0.9h-0.9zM22.7 17.9h1.2v1.2h-1.2zM15 20.6h0.8v0.8h-0.8zM16.2 21.2h1.2v1.2h-1.2zM20.5 13.7h1v1h-1zM18.9 14.5h0.9v0.9h-0.9zM17.8 19.2h1v1h-1zM15.6 17.4h0.7v0.7h-0.7zM10 7.8h1v1h-1zM11.2 12.3h1v1h-1zM18.3 15.7h0.6v0.6h-0.6zM10.1 21.1h1.5v1.5h-1.5zM15 12.3h1.2v1.2h-1.2zM5.3 17.4h1.5v1.5h-1.5zM5.3 16.2h1.3v1.3h-1.3zM12.3 14.1h0.9v0.9h-0.9zM7.5 21.7h1.7v1.7h-1.7zM20 20h0.7v0.7h-0.7zM17.6 16.5h1.3v1.3h-1.3zM21.3 14.6h1.8v1.8h-1.8zM24.1 25.6h1.8v1.8h-1.8zM19.9 22.1h1.8v1.8h-1.8zM19.3 15h1.7v1.7h-1.7zM12.5 14.2h0.9v0.9h-0.9zM21.4 11.6h1.1v1.1h-1.1zM8.1 12.3h0.9v0.9h-0.9zM17.5 10.8h1.7v1.7h-1.7zM11 17h0.9v0.9h-0.9zM9.7 21.5h1.8v1.8h-1.8zM18.7 16.9h1.8v1.8h-1.8zM23.1 21.1h0.8v0.8h-0.8zM8.3 14.2h1.7v1.7h-1.7zM12.9 15.2h0.6v0.6h-0.6zM8.5 18.1h1.7v1.7h-1.7zM16.5 15.6h0.8v0.8h-0.8zM10.7 11.4h0.8v0.8h-0.8zM13.8 15.6h0.9v0.9h-0.9zM10.1 17.3h1v1h-1zM11.1 27.9h1.4v1.4h-1.4zM9.9 17h1.3v1.3h-1.3zM15.1 20.1h1.6v1.6h-1.6zM26.3 13.4h1.5v1.5h-1.5zM16.1 18.2h1.3v1.3h-1.3zM19.7 13.8h0.7v0.7h-0.7zM21 21.2h1.4v1.4h-1.4zM15.9 12.3h0.9v0.9h-0.9zM20.3 14.6h0.8v0.8h-0.8zM15.4 20h1.2v1.2h-1.2zM13.5 16.5h1.6v1.6h-1.6zM13.8 20.9h0.8v0.8h-0.8zM17.3 16.7h1.5v1.5h-1.5zM12.7 15.7h1.3v1.3h-1.3zM5.8 21.3h1.6v1.6h-1.6zM15.3 20.9h1.1v1.1h-1.1zM7 11.1h0.7v0.7h-0.7zM20.8 14.7h1.1v1.1h-1.1zM20.4 18h1.6v1.6h-1.6zM10.7 9.9h1.1v1.1h-1.1zM14.6 12.7h1.7v1.7h-1.7zM19.1 20.4h1.3v1.3h-1.3zM15.8 21h1.5v1.5h-1.5zM12.2 13.3h1.7v1.7h-1.7zM10.5 22.5h1.3v1.3h-1.3zM12 19.1h1.6v1.6h-1.6zM18.9 18.7h0.6v0.6h-0.6zM16.4 17h0.9v0.9h-0.9zM17.7 19h1.4v1.4h-1.4zM18.9 19.7h0.8v0.8h-0.8zM13.3 13.9h1.4v1.4h-1.4zM14.8 24.2h1.6v1.6h-1.6zM10 20h1.1v1.1h-1.1zM17.6 14.3h1.1v1.1h-1.1zM15.6 16.4h0.7v0.7h-0.7zM16.4 14.8h1.4v1.4h-1.4zM16.3 10.6h1.6v1.6h-1.6zM15 16.7h0.9v0.9h-0.9zM23.1 15.8h0.9v0.9h-0.9zM11.5 14.9h1.3v1.3h-1.3zM9.4 15.9h1.3v1.3h-1.3zM11.4 10.9h1.5v1.5h-1.5zM23.6 16.1h1.1v1.1h-1.1zM17.8 17h1.6v1.6h-1.6zM16.5 15.6h0.9v0.9h-0.9zM12.7 13.5h1.1v1.1h-1.1zM18.7 14.8h1.5v1.5h-1.5zM19.1 20.2h0.7v0.7h-0.7zM19.5 17h0.6v0.6h-0.6zM4.3 23.1h0.7v0.7h-0.7zM11 19.8h0.9v0.9h-0.9zM16 20.7h1.5v1.5h-1.5zM14.7 19.1h1.3v1.3h-1.3zM8.8 25.3h0.9v0.9h-0.9zM16.2 15.9h0.8v0.8h-0.8zM11.7 17.8h1.4v1.4h-1.4zM22.8 17.1h1v1h-1zM5.8 27.5h1.2v1.2h-1.2zM20.2 24.7h1.4v1.4h-1.4zM18.2 19.9h0.9v0.9h-0.9zM16.8 14.2h1.3v1.3h-1.3zM17.3 16h0.9v0.9h-0.9zM12.8 12.9h1.3v1.3h-1.3zM12.8 17.4h1v1h-1zM17.8 22.2h1.3v1.3h-1.3z" fill="#000" opacity="0.8"/></g><path d="M32 24.500V32H24.500z" fill="#ff8585"/><path d="M26 28.500h5M28.500 26v5" stroke="#000" stroke-width="1.100" fill="none"/></g><g transform="translate(138 138)" clip-path="url(#cc)"><rect width="32" height="32" fill="#fff"/><path d="M4 4.500l26-1.500M4 8l26-1M5 12l25-.5M4 15.500l26-.5M5 19l26 .5M4 22.500l26 0M5 26l24 1M4 29l22 .5" stroke="#222" stroke-width=".9" fill="none" opacity=".85"/><path d="M26 28.500h5M28.500 26v5" stroke="#000" stroke-width="1.100" fill="none"/></g><g transform="translate(172 138)" clip-path="url(#cc)"><rect width="32" height="32" fill="#fff"/><g filter="url(#bl06)"><circle cx="15.500" cy="15.500" r="11.500" fill="#000" opacity=".55"/></g><g filter="url(#bl05)"><path d="M19.4 21.8h1.4v1.4h-1.4zM15.8 13.2h2v2h-2zM10.9 7.8h1v1h-1zM10.2 11.7h1v1h-1zM6.9 11.7h1.1v1.1h-1.1zM17 8.9h0.8v0.8h-0.8zM9 16.4h1.2v1.2h-1.2zM20.6 22.2h1.2v1.2h-1.2zM6.7 20.5h1.7v1.7h-1.7zM13.2 19h1.1v1.1h-1.1zM9.6 16.5h1.7v1.7h-1.7zM22.1 13.1h0.9v0.9h-0.9zM18.3 6.8h1.6v1.6h-1.6zM4.7 14.5h1.3v1.3h-1.3zM7.1 15.1h1.4v1.4h-1.4zM12.6 24.2h1.8v1.8h-1.8zM24.1 9.9h0.7v0.7h-0.7zM12.8 7h1.6v1.6h-1.6zM10.3 7.3h1.1v1.1h-1.1zM13.4 20.7h1.3v1.3h-1.3zM11.1 19.4h0.8v0.8h-0.8zM9.1 19.6h1.7v1.7h-1.7zM15.6 18.9h0.7v0.7h-0.7zM14.1 10.5h0.8v0.8h-0.8zM8.3 10.8h1.3v1.3h-1.3zM7 18.1h1.8v1.8h-1.8zM19.5 6h1.5v1.5h-1.5zM13 18.9h1.9v1.9h-1.9zM24.9 17h1.5v1.5h-1.5zM15.7 5.9h1.7v1.7h-1.7zM18.9 9.1h1v1h-1zM16 21h0.9v0.9h-0.9zM11.6 15.8h1v1h-1zM24 20.5h1.9v1.9h-1.9zM18.6 19.5h1.1v1.1h-1.1zM15.6 13.9h1.3v1.3h-1.3zM7.9 14.6h1.9v1.9h-1.9zM15.8 23.6h1v1h-1zM14.8 12.8h1.1v1.1h-1.1zM12.6 14.3h1.8v1.8h-1.8zM19.2 16.1h1.2v1.2h-1.2zM5.4 12.5h1.1v1.1h-1.1zM12.6 17.6h1.2v1.2h-1.2zM11 10.5h2v2h-2zM13.1 25.9h0.9v0.9h-0.9zM19.1 16.7h1.6v1.6h-1.6zM15.8 23.7h1.5v1.5h-1.5zM5.5 19.5h1.5v1.5h-1.5zM9.9 20.6h1.8v1.8h-1.8zM10.6 7.8h1.1v1.1h-1.1zM17.5 14.3h0.8v0.8h-0.8zM14.4 16.5h1.5v1.5h-1.5zM12.3 21.8h1.6v1.6h-1.6zM10.2 12.1h1.9v1.9h-1.9zM9.4 14.3h1.1v1.1h-1.1zM17.3 22h0.9v0.9h-0.9zM7.3 16h1.3v1.3h-1.3zM25.3 14.5h1.4v1.4h-1.4zM11.3 9.9h1.7v1.7h-1.7zM13.7 7.5h1.4v1.4h-1.4zM7.9 8.6h1.5v1.5h-1.5zM6.4 21.1h1.3v1.3h-1.3zM5.9 19.3h1.9v1.9h-1.9zM20.7 23h1.9v1.9h-1.9zM10.5 15.2h1.7v1.7h-1.7zM13.2 25.8h1.3v1.3h-1.3zM13.9 4.9h1.5v1.5h-1.5zM6.1 19.2h1.9v1.9h-1.9zM16.3 5.9h0.7v0.7h-0.7zM22.5 19.6h1.1v1.1h-1.1zM5.7 12.5h0.9v0.9h-0.9zM18.6 15.3h1v1h-1zM18.3 6.9h2v2h-2zM21.7 9.1h1.5v1.5h-1.5zM10.5 17.1h1.1v1.1h-1.1zM9.1 15.3h0.8v0.8h-0.8zM9.5 17.7h0.9v0.9h-0.9zM8.2 12.9h1.6v1.6h-1.6zM10 8.1h1.3v1.3h-1.3zM24.4 13.6h1.4v1.4h-1.4zM26.2 16.1h1.2v1.2h-1.2zM8.7 16h1.5v1.5h-1.5zM17.5 8.8h0.7v0.7h-0.7zM23.1 23h1.3v1.3h-1.3zM18.4 15.5h0.7v0.7h-0.7zM17 18.8h1.3v1.3h-1.3zM10.1 24h1.6v1.6h-1.6zM10.6 21.6h1.9v1.9h-1.9zM13 17.1h0.8v0.8h-0.8zM7.8 19.9h1.2v1.2h-1.2zM9.2 24.2h0.8v0.8h-0.8zM6.3 12.2h0.9v0.9h-0.9zM13.2 18.4h1.4v1.4h-1.4zM24.8 15.1h0.9v0.9h-0.9zM16.6 5h1.6v1.6h-1.6zM8 15.2h1.3v1.3h-1.3zM10.7 11.7h1.4v1.4h-1.4zM13 26.1h1.9v1.9h-1.9zM25.3 19.2h1.7v1.7h-1.7zM16.6 8.9h0.9v0.9h-0.9zM8.7 21.4h1.6v1.6h-1.6zM6.1 16h1.1v1.1h-1.1zM15.1 12.6h1.2v1.2h-1.2zM14.5 21.8h0.8v0.8h-0.8zM21.2 17.4h1.7v1.7h-1.7zM7.9 10.8h1.9v1.9h-1.9zM12.8 11.9h1.1v1.1h-1.1zM25.4 15.5h1.3v1.3h-1.3zM24.4 18.5h1.9v1.9h-1.9zM18.8 14.2h0.8v0.8h-0.8zM15.4 16h1.5v1.5h-1.5zM23.1 12.5h1.4v1.4h-1.4zM22.6 10.3h1.8v1.8h-1.8zM19.3 11.4h1.4v1.4h-1.4zM22 22.3h1v1h-1zM15.2 19.1h0.9v0.9h-0.9zM21.3 21.9h1.5v1.5h-1.5zM25.5 11.5h1.1v1.1h-1.1zM25.9 18h0.7v0.7h-0.7zM14 11.5h1.8v1.8h-1.8zM19.4 23.3h0.8v0.8h-0.8zM14.2 5.2h1.2v1.2h-1.2zM17.3 20.1h1.1v1.1h-1.1zM19 16.7h1.2v1.2h-1.2zM15.6 22.1h1.7v1.7h-1.7zM13.7 21.9h1.3v1.3h-1.3zM14.9 9.5h1.3v1.3h-1.3zM12.6 12.4h1.8v1.8h-1.8zM19.6 14.5h1.8v1.8h-1.8zM17.6 23.4h1v1h-1zM13.3 21.2h2v2h-2zM17.5 21.1h0.8v0.8h-0.8zM21.4 7.9h1.7v1.7h-1.7zM25 16.2h1.1v1.1h-1.1zM21.2 23.6h0.9v0.9h-0.9zM14.9 18.8h1.7v1.7h-1.7zM18.2 22.6h0.9v0.9h-0.9zM13.6 18.3h1.9v1.9h-1.9zM13.6 25.2h1.4v1.4h-1.4zM11.4 16.2h1.6v1.6h-1.6zM17.6 12.1h0.9v0.9h-0.9zM14 26.3h1v1h-1zM8.4 16.4h0.9v0.9h-0.9zM22 15h0.8v0.8h-0.8zM14.9 19.9h1.5v1.5h-1.5zM9.9 23.9h1.4v1.4h-1.4zM19 12.6h1.2v1.2h-1.2zM14.2 8.6h1.5v1.5h-1.5zM11.4 25.4h1.7v1.7h-1.7zM14.3 22.8h1.4v1.4h-1.4zM13.9 12.4h1.4v1.4h-1.4zM16.2 7.2h1.3v1.3h-1.3zM15.1 23h0.9v0.9h-0.9zM13.1 13.7h1.2v1.2h-1.2zM5.7 19.5h1v1h-1zM15.2 13.3h1.4v1.4h-1.4zM6.8 9.3h0.8v0.8h-0.8zM19.3 10.5h0.8v0.8h-0.8zM22.9 20.9h0.9v0.9h-0.9zM10.1 21h1.1v1.1h-1.1zM20.9 16.9h1.4v1.4h-1.4zM11 16.1h1.8v1.8h-1.8zM6.5 15.1h1.3v1.3h-1.3zM8.9 19.3h1.6v1.6h-1.6zM18.4 13.5h1.7v1.7h-1.7zM22.6 19.8h0.8v0.8h-0.8zM8.7 22.6h1v1h-1zM17.7 24.7h1.1v1.1h-1.1zM14.3 12.7h1.4v1.4h-1.4zM12.3 9.1h1.9v1.9h-1.9zM12.8 25.2h1.3v1.3h-1.3zM7.6 9.1h1.2v1.2h-1.2zM26.2 14.1h0.8v0.8h-0.8zM12.6 13.6h1.5v1.5h-1.5zM7.7 11.1h0.9v0.9h-0.9zM11.7 15.5h1.7v1.7h-1.7zM7.4 13.1h1.9v1.9h-1.9zM26.2 14.9h1.9v1.9h-1.9zM11.3 12.6h1v1h-1zM15.8 9.4h1.8v1.8h-1.8zM21.7 20h1.5v1.5h-1.5zM11.8 11.6h1.5v1.5h-1.5zM12.6 17.4h0.9v0.9h-0.9zM17.4 23.3h1.5v1.5h-1.5zM11 11h1.1v1.1h-1.1zM11.9 22.5h0.8v0.8h-0.8zM17.8 9.1h1.4v1.4h-1.4zM20.3 14h1v1h-1zM17.6 11.6h1.4v1.4h-1.4zM20.6 11.6h1.4v1.4h-1.4zM17.2 15.7h1.1v1.1h-1.1zM9.3 23.3h0.9v0.9h-0.9zM19.9 11.8h1.5v1.5h-1.5zM17.3 10.9h1.2v1.2h-1.2zM24.3 19.4h0.9v0.9h-0.9zM23 13.7h0.7v0.7h-0.7zM16.4 22.9h1.5v1.5h-1.5zM10.5 16.9h0.8v0.8h-0.8zM16.4 16.4h1.2v1.2h-1.2zM18.3 9.2h2v2h-2zM8.4 13.6h1.5v1.5h-1.5zM6.1 20.5h0.8v0.8h-0.8zM15.1 24.2h1.5v1.5h-1.5zM8.4 8.4h1.4v1.4h-1.4zM18.7 12.8h1.4v1.4h-1.4zM16.3 9.1h1.3v1.3h-1.3zM9.3 24.4h1.5v1.5h-1.5zM7.5 14.3h1.1v1.1h-1.1zM10.7 19.2h1.1v1.1h-1.1zM14 15.8h1.3v1.3h-1.3zM16 16.5h1.4v1.4h-1.4zM9.4 16.1h1.8v1.8h-1.8zM25.1 13.2h1v1h-1zM20 24.9h0.9v0.9h-0.9zM11 19.5h0.9v0.9h-0.9zM10.5 12.4h1.1v1.1h-1.1zM16.1 14.5h0.9v0.9h-0.9zM20.4 15.7h1.7v1.7h-1.7zM14.1 19.8h1.4v1.4h-1.4zM16.1 13.3h0.7v0.7h-0.7zM21.7 11.1h0.9v0.9h-0.9zM19.4 6.9h0.9v0.9h-0.9zM13.6 25.4h1.1v1.1h-1.1zM16.1 16.4h0.7v0.7h-0.7zM10.8 7.9h1v1h-1zM11.1 13.5h1.3v1.3h-1.3zM14.6 8.3h0.9v0.9h-0.9zM16.1 9.2h1.2v1.2h-1.2zM23.3 14.6h1.2v1.2h-1.2zM8 14.5h1.9v1.9h-1.9zM11.1 20.5h1.7v1.7h-1.7zM11.9 17.3h1.3v1.3h-1.3zM24.8 20.2h1.5v1.5h-1.5zM20.1 7.9h1.5v1.5h-1.5zM15.3 14.4h1.1v1.1h-1.1zM11.2 14h1.8v1.8h-1.8zM26.4 14.4h1.4v1.4h-1.4zM22.4 11.5h2v2h-2zM16.1 7.1h1.1v1.1h-1.1zM18.2 25.6h1.1v1.1h-1.1zM13.2 14.6h0.9v0.9h-0.9zM6.3 20.8h1.8v1.8h-1.8zM15.7 4.9h0.8v0.8h-0.8zM10.5 14.7h1.2v1.2h-1.2zM7.5 14.4h1.6v1.6h-1.6zM11.8 19.7h1.1v1.1h-1.1zM21.9 19.8h1.3v1.3h-1.3zM11.9 11h1v1h-1zM4.9 15.8h1.6v1.6h-1.6zM13.8 15.3h1.9v1.9h-1.9zM10.8 13.7h1.8v1.8h-1.8zM21.3 8.1h1.2v1.2h-1.2zM16.8 10.3h1.7v1.7h-1.7zM15.4 4.7h1.5v1.5h-1.5zM20 5.8h1.2v1.2h-1.2zM5.4 17.2h1v1h-1zM13.6 20.1h1.4v1.4h-1.4zM20.3 22.5h0.9v0.9h-0.9zM10.6 8.5h1.7v1.7h-1.7zM17.8 9.2h1v1h-1z" fill="#000" opacity="0.7"/><path d="M20.1 18.6h1.8v1.8h-1.8zM16.2 8.3h1.3v1.3h-1.3zM18.2 13.7h1.5v1.5h-1.5zM22.4 12.5h1.2v1.2h-1.2zM13.9 17.6h1.6v1.6h-1.6zM16.2 18.8h1.8v1.8h-1.8zM12.7 11.9h1.8v1.8h-1.8zM20.7 16.8h1.9v1.9h-1.9zM11.6 16.1h2v2h-2zM15.7 10h1.3v1.3h-1.3zM14.5 13.7h1.8v1.8h-1.8zM11.6 9.1h1.1v1.1h-1.1zM10.8 8.7h1.6v1.6h-1.6zM23.3 16.8h1.6v1.6h-1.6zM20.2 18.2h1.5v1.5h-1.5zM10.4 19.4h0.9v0.9h-0.9zM18.6 20.2h1.3v1.3h-1.3zM15.5 21.4h0.9v0.9h-0.9zM15 9.4h1.2v1.2h-1.2zM11.8 15.4h1.3v1.3h-1.3zM17.6 17.7h2v2h-2zM14.2 17.1h1.9v1.9h-1.9zM17.8 17.1h1.4v1.4h-1.4zM13 7.2h1.8v1.8h-1.8zM17.1 18.4h1.9v1.9h-1.9zM15.7 19.1h0.8v0.8h-0.8zM12 14.8h1.6v1.6h-1.6zM10.6 17.4h1.2v1.2h-1.2zM19.7 14.2h0.8v0.8h-0.8zM11.1 9.6h1.9v1.9h-1.9zM17.6 20.2h1.4v1.4h-1.4zM11.7 16h1.2v1.2h-1.2zM23.8 13.9h1.3v1.3h-1.3zM12.4 18.4h1.5v1.5h-1.5zM15.1 15.4h1.2v1.2h-1.2zM21 15.3h1.9v1.9h-1.9zM11.2 10.1h1.5v1.5h-1.5zM13 21.2h1.9v1.9h-1.9zM16.9 7h1.9v1.9h-1.9zM11 13.6h1.1v1.1h-1.1zM14.7 21.3h1.9v1.9h-1.9zM16.1 8h0.9v0.9h-0.9zM21.9 11.5h1.3v1.3h-1.3zM20.1 9.7h1.8v1.8h-1.8zM20.2 9.3h1.9v1.9h-1.9zM20.8 7.7h1.6v1.6h-1.6zM15.7 18.3h1.9v1.9h-1.9zM15.7 15.4h1.1v1.1h-1.1zM21.2 9h1v1h-1zM18.8 8.9h1.8v1.8h-1.8zM23.2 11.5h1.8v1.8h-1.8zM17.9 14.3h1.4v1.4h-1.4zM11.8 13.9h1.6v1.6h-1.6zM8.9 13.8h1.8v1.8h-1.8zM14.6 8.6h1.4v1.4h-1.4zM17.4 19.3h1v1h-1zM11.5 10.1h0.8v0.8h-0.8zM18.1 10.1h1.7v1.7h-1.7zM17.1 20.7h1.5v1.5h-1.5zM8.2 12.7h1.5v1.5h-1.5z" fill="#fff" opacity="0.8"/></g><path d="M26 28.500h5M28.500 26v5" stroke="#000" stroke-width="1.100" fill="none"/></g><g transform="translate(206 138)" clip-path="url(#cc)"><rect width="32" height="32" fill="#fff"/><g filter="url(#bl05)"><path d="M26.6 5.7h1.3v1.3h-1.3zM22.8 7.8h1.1v1.1h-1.1zM29.1 4.3h1.1v1.1h-1.1zM22 14.5h1.5v1.5h-1.5zM23.2 12.6h1.5v1.5h-1.5zM15.1 11.1h0.8v0.8h-0.8zM23.6 7.5h0.9v0.9h-0.9zM11.5 3.5h1v1h-1zM25.8 13.2h0.5v0.5h-0.5zM22.2 11.8h1.2v1.2h-1.2zM17.1 17.5h0.7v0.7h-0.7zM20 10.7h1.2v1.2h-1.2zM21.7 7.3h0.7v0.7h-0.7zM27.6 10.6h0.8v0.8h-0.8zM24.6 15.5h1.1v1.1h-1.1zM15.7 10.9h1.1v1.1h-1.1zM13 8.2h0.7v0.7h-0.7zM29.8 5.7h1.2v1.2h-1.2zM26.9 9.8h0.8v0.8h-0.8zM25.1 14.6h1v1h-1zM1.7 16.1h1.3v1.3h-1.3zM28.4 16.9h0.5v0.5h-0.5zM16 6.5h1.2v1.2h-1.2zM26.1 8.2h1.3v1.3h-1.3zM27.4 12.5h0.6v0.6h-0.6zM13.8 11.3h0.6v0.6h-0.6zM19 7.8h0.8v0.8h-0.8zM26.6 13.8h0.8v0.8h-0.8zM20.4 10.3h0.7v0.7h-0.7zM18.1 10h0.5v0.5h-0.5zM15.3 4.7h0.6v0.6h-0.6zM17.8 12.4h0.8v0.8h-0.8zM15.8 12.3h0.7v0.7h-0.7zM19.8 14.2h1.1v1.1h-1.1zM25.5 5.3h0.9v0.9h-0.9zM22.9 10.1h1.1v1.1h-1.1zM9.4 15.4h1.4v1.4h-1.4zM17.4 14.6h0.8v0.8h-0.8zM17.8 8h0.8v0.8h-0.8zM23.2 6.7h1.5v1.5h-1.5zM9.9 15.8h1v1h-1zM25.4 13.8h0.7v0.7h-0.7zM27.1 6.2h1v1h-1zM25.7 7.1h1.5v1.5h-1.5zM18.2 6.9h0.8v0.8h-0.8zM20.6 8.1h1.5v1.5h-1.5zM28.7 12.1h1.1v1.1h-1.1zM12.2 13.8h1.1v1.1h-1.1zM15.9 13.1h0.5v0.5h-0.5zM12.1 1.5h0.9v0.9h-0.9zM22.8 6.1h0.8v0.8h-0.8zM29.2 15.5h0.8v0.8h-0.8zM19.8 5.9h1.5v1.5h-1.5zM16.9 12.9h0.6v0.6h-0.6zM20.7 11.6h1.3v1.3h-1.3zM22 10.3h0.7v0.7h-0.7zM25.5 16.7h0.5v0.5h-0.5zM16.7 5.8h0.6v0.6h-0.6zM19.9 16.1h0.7v0.7h-0.7zM14.4 13.1h1v1h-1zM17.5 6h1.1v1.1h-1.1zM17.9 5.9h1.3v1.3h-1.3zM25.1 12.9h0.9v0.9h-0.9zM25.2 15.2h1.4v1.4h-1.4zM13.4 10.5h1.4v1.4h-1.4zM27.4 9.6h1.1v1.1h-1.1zM13 4h1.2v1.2h-1.2zM9.3 8h1.2v1.2h-1.2zM14.5 5.1h0.9v0.9h-0.9zM20.6 15.8h0.8v0.8h-0.8zM15.3 10.6h1.4v1.4h-1.4zM27.5 17.4h1.1v1.1h-1.1zM29.5 4.5h0.7v0.7h-0.7zM15.9 26.7h1.2v1.2h-1.2zM23 12h0.6v0.6h-0.6zM18.2 11.9h0.5v0.5h-0.5zM25.5 11.6h1.2v1.2h-1.2zM10.1 9.6h1.2v1.2h-1.2zM25.2 15.8h1v1h-1zM5.6 16.2h1v1h-1zM14.9 2h1v1h-1zM21.2 12.7h0.8v0.8h-0.8zM21.2 14.7h0.6v0.6h-0.6zM20.2 1.5h1.1v1.1h-1.1zM22.2 12.3h1.4v1.4h-1.4zM25.8 4.3h1.4v1.4h-1.4zM20.3 14h0.9v0.9h-0.9zM13.4 10.8h0.7v0.7h-0.7zM20.5 7.1h1.1v1.1h-1.1zM20.3 7.4h0.8v0.8h-0.8zM15.5 12.8h1.4v1.4h-1.4zM21.3 8.2h0.6v0.6h-0.6zM13.1 6.7h0.5v0.5h-0.5zM27.1 2.3h1.1v1.1h-1.1zM22.3 11.7h1.3v1.3h-1.3zM16.4 5h1.4v1.4h-1.4zM27.8 12h1.3v1.3h-1.3zM20.2 8h1.2v1.2h-1.2zM11.2 7.3h0.7v0.7h-0.7zM24.6 14.3h1v1h-1zM13.9 11.5h0.7v0.7h-0.7zM18.1 4.1h1v1h-1zM14.1 9.8h1.4v1.4h-1.4zM19.5 6.1h0.8v0.8h-0.8zM10.7 8.5h1.4v1.4h-1.4zM21 9.2h1.4v1.4h-1.4zM26.9 10.6h1.3v1.3h-1.3zM20.9 13.2h0.6v0.6h-0.6zM8.4 13.4h0.5v0.5h-0.5zM19.2 5h1.4v1.4h-1.4zM12.8 7.9h0.8v0.8h-0.8zM22.9 5.4h1.2v1.2h-1.2zM13.1 2.2h0.8v0.8h-0.8zM22.1 12h1.1v1.1h-1.1zM20.2 10.9h0.9v0.9h-0.9zM17 7.3h0.8v0.8h-0.8zM30.9 19.8h1.4v1.4h-1.4zM27.5 9.4h0.9v0.9h-0.9zM18.1 14.5h1.3v1.3h-1.3zM15.9 9.3h1.4v1.4h-1.4zM19.6 9.4h0.6v0.6h-0.6zM12.2 9.8h1.3v1.3h-1.3zM23.2 23.9h0.8v0.8h-0.8zM29 21.2h1.3v1.3h-1.3zM20 7h1.5v1.5h-1.5zM16.8 15.3h1.4v1.4h-1.4zM20 10.8h1.1v1.1h-1.1zM4.4 9.3h1.5v1.5h-1.5zM12.4 16.2h0.5v0.5h-0.5zM17.7 4.7h0.8v0.8h-0.8zM17.5 15.5h1v1h-1zM18.5 11h0.5v0.5h-0.5zM30.6 11.2h0.9v0.9h-0.9zM6 12.8h0.6v0.6h-0.6zM10.5 13.3h0.5v0.5h-0.5zM18.2 10.6h1.2v1.2h-1.2zM8.1 8.5h1.2v1.2h-1.2zM24.2 10.1h0.6v0.6h-0.6zM14.1 11.9h0.5v0.5h-0.5zM22 10.2h1.1v1.1h-1.1zM23.5 3.9h1.4v1.4h-1.4zM19.6 13.8h0.9v0.9h-0.9zM25.6 12.6h0.6v0.6h-0.6zM29.5 13.8h0.8v0.8h-0.8zM12.6 11.7h0.5v0.5h-0.5zM30.6 12.5h1.4v1.4h-1.4zM19.3 4.4h0.7v0.7h-0.7zM23 15.1h0.7v0.7h-0.7zM23.2 8.7h0.7v0.7h-0.7zM30.1 8.1h1.2v1.2h-1.2zM7.9 3.7h0.8v0.8h-0.8zM5.6 10.5h1.1v1.1h-1.1zM16.5 12.6h0.8v0.8h-0.8zM24.2 4.8h1.2v1.2h-1.2z" fill="#000" opacity="0.6"/><path d="M4.7 11.5h0.4v0.4h-0.4zM10.4 22.6h0.7v0.7h-0.7zM15.2 22.6h0.6v0.6h-0.6zM25.5 18.9h0.5v0.5h-0.5zM17.7 15.4h0.7v0.7h-0.7zM8.6 21.1h0.5v0.5h-0.5zM10.8 9.2h0.5v0.5h-0.5zM7.7 22.6h0.7v0.7h-0.7zM3.8 18h0.4v0.4h-0.4zM19.7 13.6h0.7v0.7h-0.7zM22.8 23.2h0.7v0.7h-0.7zM10.6 5.5h0.7v0.7h-0.7zM16.9 26.2h0.8v0.8h-0.8zM7.9 13.7h0.8v0.8h-0.8zM13.9 28.1h0.4v0.4h-0.4zM13.8 24.9h0.9v0.9h-0.9zM16.2 9.5h0.7v0.7h-0.7zM11.3 21.1h0.6v0.6h-0.6zM8 18.3h0.8v0.8h-0.8zM15.7 18.4h0.7v0.7h-0.7zM16.6 3.2h0.6v0.6h-0.6zM25.7 16.3h0.8v0.8h-0.8zM21.9 15.7h0.4v0.4h-0.4zM8.7 15.8h0.6v0.6h-0.6zM25.6 12.2h0.8v0.8h-0.8zM13.7 27.5h0.9v0.9h-0.9zM7.2 24.3h0.5v0.5h-0.5zM11.7 26h0.6v0.6h-0.6zM28.1 11.9h0.6v0.6h-0.6zM20.8 4.3h0.7v0.7h-0.7zM7 7.9h0.8v0.8h-0.8zM20.4 18.6h0.7v0.7h-0.7zM16.9 18.7h0.7v0.7h-0.7zM13.1 7.3h0.6v0.6h-0.6zM19.6 11.1h0.8v0.8h-0.8zM16.9 6.5h0.7v0.7h-0.7zM17.3 21.4h0.6v0.6h-0.6zM26.1 21.4h0.6v0.6h-0.6zM21.3 20.3h0.7v0.7h-0.7zM15.6 5.8h0.5v0.5h-0.5zM17.3 23.9h0.4v0.4h-0.4zM10.8 11.6h0.5v0.5h-0.5zM7.9 9.9h0.8v0.8h-0.8zM10.8 20.9h0.8v0.8h-0.8zM21 14.3h0.6v0.6h-0.6zM16.7 12.4h0.6v0.6h-0.6zM12.7 4.5h0.7v0.7h-0.7zM13.4 4.6h0.6v0.6h-0.6zM4.7 16h0.7v0.7h-0.7zM17.9 23.6h0.5v0.5h-0.5zM14.8 18.2h0.5v0.5h-0.5zM14.6 26.5h0.9v0.9h-0.9zM20.4 22.2h0.6v0.6h-0.6zM9.2 20.6h0.6v0.6h-0.6zM26.8 11.3h0.8v0.8h-0.8zM21.2 13h0.8v0.8h-0.8zM26.4 21.8h0.5v0.5h-0.5zM6 18.4h0.8v0.8h-0.8zM18.9 9.1h0.7v0.7h-0.7zM21.4 13.2h0.7v0.7h-0.7zM20.5 28h0.4v0.4h-0.4zM6.5 7.3h0.6v0.6h-0.6zM19 18.1h0.6v0.6h-0.6zM25.3 16.6h0.7v0.7h-0.7zM21.2 24.8h0.5v0.5h-0.5zM5.1 15.2h0.8v0.8h-0.8zM26.2 17h0.5v0.5h-0.5zM19.6 25.1h0.8v0.8h-0.8zM15 9.2h0.6v0.6h-0.6zM22.5 23h0.7v0.7h-0.7zM26.8 21.4h0.5v0.5h-0.5zM13.4 10.8h0.9v0.9h-0.9zM14 10.1h0.8v0.8h-0.8zM27.8 12.5h0.5v0.5h-0.5zM11.3 4.1h0.7v0.7h-0.7zM24.3 13h0.7v0.7h-0.7zM20.6 25.2h0.7v0.7h-0.7zM25.7 9.4h0.4v0.4h-0.4zM11.8 11.5h0.4v0.4h-0.4zM13.2 9.4h0.6v0.6h-0.6zM23.1 8.6h0.5v0.5h-0.5zM9 15.9h0.7v0.7h-0.7zM21.8 19.1h0.4v0.4h-0.4zM18.3 3.8h0.6v0.6h-0.6zM4.5 12.4h0.5v0.5h-0.5zM21.2 13.6h0.8v0.8h-0.8zM5.1 9.4h0.6v0.6h-0.6zM15.3 5.8h0.7v0.7h-0.7zM17.4 24.9h0.9v0.9h-0.9zM23 10.1h0.7v0.7h-0.7zM15.2 3.9h0.7v0.7h-0.7zM9.9 9h0.7v0.7h-0.7zM19.4 26.3h0.6v0.6h-0.6zM23.4 15.7h0.5v0.5h-0.5zM24.1 16h0.8v0.8h-0.8zM26.5 13.8h0.9v0.9h-0.9zM22.3 21.6h0.7v0.7h-0.7zM23.4 6.3h0.5v0.5h-0.5zM24.1 26.1h0.7v0.7h-0.7zM13.3 4.2h0.6v0.6h-0.6zM25.1 19.8h0.5v0.5h-0.5zM9.2 13.4h0.4v0.4h-0.4zM21.5 15.9h0.9v0.9h-0.9zM22.7 14.4h0.5v0.5h-0.5zM22.8 7.7h0.5v0.5h-0.5zM7 16.5h0.4v0.4h-0.4zM26.6 15.9h0.7v0.7h-0.7zM20 13.7h0.7v0.7h-0.7zM14.9 5h0.5v0.5h-0.5zM17.4 13.7h0.7v0.7h-0.7zM20.6 22.6h0.7v0.7h-0.7zM17.4 12.6h0.5v0.5h-0.5zM20.1 4.2h0.8v0.8h-0.8zM11.4 12.4h0.6v0.6h-0.6zM22.7 8.4h0.7v0.7h-0.7zM4.9 22.5h0.5v0.5h-0.5zM23.7 9.9h0.7v0.7h-0.7zM13.8 3.6h0.6v0.6h-0.6zM6.2 12h0.4v0.4h-0.4zM14.7 13.2h0.6v0.6h-0.6zM17.9 6.1h0.9v0.9h-0.9zM21.9 24.5h0.6v0.6h-0.6zM28.6 18.1h0.5v0.5h-0.5zM21.4 27h0.5v0.5h-0.5zM15.5 12.2h0.5v0.5h-0.5zM19.5 16.3h0.8v0.8h-0.8zM7.6 17.3h0.7v0.7h-0.7zM20.6 26.3h0.6v0.6h-0.6zM11.9 12h0.5v0.5h-0.5zM11 20h0.6v0.6h-0.6zM20.1 19.6h0.7v0.7h-0.7zM10.4 24.4h0.4v0.4h-0.4zM11.3 17.6h0.9v0.9h-0.9zM3.7 12.2h0.8v0.8h-0.8zM17.5 19h0.9v0.9h-0.9zM23 8.2h0.4v0.4h-0.4zM16.9 24.8h0.6v0.6h-0.6zM25.4 8.3h0.4v0.4h-0.4zM9.4 5h0.7v0.7h-0.7zM21 14.4h0.8v0.8h-0.8zM13.6 7.5h0.5v0.5h-0.5zM9.7 10.6h0.7v0.7h-0.7zM17.4 17.3h0.6v0.6h-0.6zM15.1 12.5h0.7v0.7h-0.7zM20.1 5.8h0.7v0.7h-0.7zM13.9 7h0.8v0.8h-0.8zM17.3 19.7h0.7v0.7h-0.7zM11.7 17h0.7v0.7h-0.7zM4.4 10.6h0.8v0.8h-0.8zM24 14h0.5v0.5h-0.5zM13.5 25.6h0.7v0.7h-0.7zM11.7 11.5h0.7v0.7h-0.7zM14.5 3.8h0.8v0.8h-0.8zM5.2 21.8h0.6v0.6h-0.6zM12 12.5h0.4v0.4h-0.4zM6.5 12h0.5v0.5h-0.5zM11.1 21.5h0.4v0.4h-0.4zM23.9 23h0.5v0.5h-0.5zM16.7 8.9h0.9v0.9h-0.9zM3.1 15.3h0.5v0.5h-0.5z" fill="#000" opacity="0.3"/></g><path d="M26 28.500h5M28.500 26v5" stroke="#000" stroke-width="1.100" fill="none"/></g><g transform="translate(2 172)" clip-path="url(#cc)"><rect width="32" height="32" fill="#fff"/><path d="M6 20.6h0.8v0.8h-0.8zM13.5 9.2h0.9v0.9h-0.9zM21.4 16.3h0.7v0.7h-0.7zM10.9 18h0.4v0.4h-0.4zM21.1 9.6h0.5v0.5h-0.5zM19.7 25h0.8v0.8h-0.8zM2.8 11.9h0.7v0.7h-0.7zM10.8 7.7h0.9v0.9h-0.9zM12.9 17.2h0.6v0.6h-0.6zM13.6 8.5h0.4v0.4h-0.4zM22.8 9.6h0.9v0.9h-0.9zM23.5 22.1h0.9v0.9h-0.9zM15.9 21.5h0.5v0.5h-0.5zM13.4 23.8h0.5v0.5h-0.5zM11.8 12.8h0.7v0.7h-0.7zM11.3 4.6h0.5v0.5h-0.5zM13.9 15.8h0.7v0.7h-0.7zM20 9.3h0.8v0.8h-0.8zM15.4 18.9h0.5v0.5h-0.5zM6.1 12.4h1v1h-1zM10.3 18.3h0.6v0.6h-0.6zM21.5 22.6h0.6v0.6h-0.6zM18.4 20.2h0.9v0.9h-0.9zM25 13.8h1v1h-1zM25.1 18.2h0.9v0.9h-0.9zM13.8 13h0.5v0.5h-0.5zM20.6 15.6h0.9v0.9h-0.9zM9 14.1h0.5v0.5h-0.5zM3.7 12.1h0.9v0.9h-0.9zM13.5 10.1h1v1h-1zM14.6 21.5h0.4v0.4h-0.4zM7.1 24.1h0.9v0.9h-0.9zM23.2 18.4h0.7v0.7h-0.7zM15.9 24.4h0.6v0.6h-0.6zM14.8 10.6h0.9v0.9h-0.9zM16.2 19.5h0.9v0.9h-0.9zM16 10.2h0.6v0.6h-0.6zM12.7 7.4h0.9v0.9h-0.9zM17.7 7h0.7v0.7h-0.7zM9.8 15.9h0.5v0.5h-0.5zM6 8.4h0.6v0.6h-0.6zM19 17.2h0.4v0.4h-0.4zM19.1 25h0.9v0.9h-0.9zM13.1 5.5h0.9v0.9h-0.9zM6.2 21.1h0.6v0.6h-0.6zM18.7 11.5h0.4v0.4h-0.4zM11.3 11.4h0.9v0.9h-0.9zM9.1 16.1h0.7v0.7h-0.7zM16.4 16.2h0.8v0.8h-0.8zM18.8 16.6h0.7v0.7h-0.7zM25.4 12.5h0.6v0.6h-0.6zM21.5 22.2h0.7v0.7h-0.7zM16.9 4.5h0.8v0.8h-0.8zM12.6 16.4h0.6v0.6h-0.6zM11.6 9.4h0.4v0.4h-0.4zM12.4 9.9h0.8v0.8h-0.8zM21.6 21.4h0.7v0.7h-0.7zM7.7 13.2h0.7v0.7h-0.7zM17.2 27.1h0.5v0.5h-0.5zM13.5 15.8h0.8v0.8h-0.8zM23.4 22.7h0.8v0.8h-0.8zM20.2 20h0.9v0.9h-0.9zM18.8 20.4h0.5v0.5h-0.5zM24 13.3h0.8v0.8h-0.8zM9.5 11.5h0.6v0.6h-0.6zM5.5 17.3h0.4v0.4h-0.4zM9.3 26.6h0.8v0.8h-0.8zM13.1 6.6h1v1h-1zM18.9 8.9h0.6v0.6h-0.6zM17.4 20.4h0.6v0.6h-0.6zM24.8 11.7h0.6v0.6h-0.6zM22.3 7.7h0.8v0.8h-0.8zM6.8 18.4h0.6v0.6h-0.6zM11.1 26.6h0.7v0.7h-0.7zM12.5 18.8h0.6v0.6h-0.6zM6.2 13.2h0.6v0.6h-0.6zM24.4 20.9h0.4v0.4h-0.4zM14 4.9h0.8v0.8h-0.8zM18.8 9.8h0.4v0.4h-0.4zM15.1 6.3h0.6v0.6h-0.6zM12.9 25.5h0.6v0.6h-0.6zM5.2 23h0.9v0.9h-0.9zM14.7 5.2h0.5v0.5h-0.5zM11.7 17.2h0.5v0.5h-0.5zM21.3 24.2h1v1h-1zM16 5.9h0.9v0.9h-0.9zM19.9 22.2h0.5v0.5h-0.5zM16.6 18.9h0.7v0.7h-0.7zM21.2 12.1h0.6v0.6h-0.6zM10.5 11.2h0.8v0.8h-0.8zM3.6 16.3h0.8v0.8h-0.8zM6.6 10.5h0.4v0.4h-0.4zM2.9 15.9h0.8v0.8h-0.8zM17.7 7.8h0.5v0.5h-0.5zM24.3 16.9h0.6v0.6h-0.6zM18.6 21.5h0.7v0.7h-0.7zM10.5 16.8h0.8v0.8h-0.8zM6.2 21h0.7v0.7h-0.7zM5.9 24.4h0.9v0.9h-0.9zM23.8 20.3h0.5v0.5h-0.5zM20.7 25.7h0.7v0.7h-0.7zM11.4 26.6h1v1h-1zM10.4 18.7h0.8v0.8h-0.8zM20.1 19.5h0.5v0.5h-0.5zM24.3 16.9h0.9v0.9h-0.9zM15.3 22.6h0.8v0.8h-0.8zM23.2 12.7h0.4v0.4h-0.4zM11.7 8.3h0.7v0.7h-0.7zM21.6 12.7h0.5v0.5h-0.5zM2.6 14.2h0.7v0.7h-0.7zM7.1 6.6h1v1h-1zM14.6 25.5h0.7v0.7h-0.7zM4.9 9.8h0.7v0.7h-0.7zM17.4 22.5h0.9v0.9h-0.9zM17.6 10.1h0.7v0.7h-0.7zM11.1 15.7h0.6v0.6h-0.6zM14.9 15h0.4v0.4h-0.4zM21.7 18.1h0.9v0.9h-0.9zM19.7 21.5h1v1h-1zM11 13.4h0.4v0.4h-0.4zM17.9 18h0.7v0.7h-0.7zM7.5 21.6h0.9v0.9h-0.9zM13.6 5.3h0.6v0.6h-0.6zM21.8 16h0.7v0.7h-0.7zM11.3 19.1h0.8v0.8h-0.8zM18.6 24.8h0.9v0.9h-0.9zM11 10h0.9v0.9h-0.9zM6.8 24.3h0.9v0.9h-0.9zM3.9 11.4h0.8v0.8h-0.8zM5.5 23.9h0.6v0.6h-0.6zM18.4 11.1h0.5v0.5h-0.5zM7 15.9h0.8v0.8h-0.8zM7.2 20.5h0.6v0.6h-0.6zM17.6 12.8h0.5v0.5h-0.5zM18.7 13.9h0.5v0.5h-0.5zM23.1 19.7h0.4v0.4h-0.4zM19.4 18.3h0.7v0.7h-0.7zM14 27.1h0.6v0.6h-0.6zM17.3 19.3h0.6v0.6h-0.6zM10.3 22.1h0.8v0.8h-0.8zM13 16.3h0.5v0.5h-0.5zM17.4 14.9h0.5v0.5h-0.5zM16.1 18h0.5v0.5h-0.5zM13.8 8h0.9v0.9h-0.9zM9.8 11.9h0.5v0.5h-0.5zM5.6 19h0.9v0.9h-0.9zM7.3 6.7h0.7v0.7h-0.7zM4.8 13.7h0.9v0.9h-0.9zM6.9 20.8h0.7v0.7h-0.7zM4 9.8h0.8v0.8h-0.8zM15.8 23.6h0.7v0.7h-0.7zM9.3 11.6h0.9v0.9h-0.9zM10.6 22.8h0.4v0.4h-0.4zM14 25.4h0.9v0.9h-0.9zM15.9 8.4h1v1h-1zM20.6 21.3h0.7v0.7h-0.7zM5.9 12.2h0.8v0.8h-0.8zM17.7 13.3h0.9v0.9h-0.9zM3.3 10.9h0.5v0.5h-0.5zM9.8 23h0.9v0.9h-0.9zM5.6 11.4h0.5v0.5h-0.5zM17.9 14.6h0.5v0.5h-0.5zM11 24.8h0.7v0.7h-0.7zM18.6 19.1h0.7v0.7h-0.7zM15.4 12.7h0.5v0.5h-0.5zM13.9 11.3h0.6v0.6h-0.6zM12.2 8.8h0.4v0.4h-0.4zM7.1 24.8h0.6v0.6h-0.6zM18 9.5h0.8v0.8h-0.8zM12.8 21.7h0.7v0.7h-0.7z" fill="#000" opacity="0.3"/><path d="M0.4 12.8l4.6 0.3M5.2 9.4l-2.7 1.4M18.1 6.5l3.8 1.7M0.3 9.6l-3.4 2M-2 6.4l2.1 1.3M6.3 8.1l-4.1 0.5M-4.8 13.8l2.5 1.1M28.1 16.3l-1.5 3.2M22.2 21.1l2.2 1.7M9.8 18.6l-2 1.3M24.7 18.2l1.8 2M12 6.7l-4.4 2.2M12.3 27.8l1.3 2.4M12.9 25.4l0.3 4" stroke="#000" stroke-width="0.5" fill="none" opacity="0.5" stroke-linecap="round"/><path d="M26 28.500h5M28.500 26v5" stroke="#000" stroke-width="1.100" fill="none"/></g><g transform="translate(36 172)" clip-path="url(#cc)"><rect width="32" height="32" fill="#fff"/><g filter="url(#bl08)"><ellipse cx="16" cy="16" rx="2.800" ry="8.500" fill="#000" opacity=".45"/></g><path d="M16.8 15.1h0.5v0.5h-0.5zM17 16h0.6v0.6h-0.6zM15.2 11.5h1.1v1.1h-1.1zM15.1 23.4h1.2v1.2h-1.2zM14.7 3.5h1v1h-1zM19 19.7h0.9v0.9h-0.9zM15.6 19.6h1.1v1.1h-1.1zM12.9 9h1v1h-1zM17.9 14.1h1v1h-1zM15.1 13h1.2v1.2h-1.2zM15 25.7h1.2v1.2h-1.2zM15.5 13.3h1.1v1.1h-1.1zM15.5 12.7h0.5v0.5h-0.5zM15.6 15.7h1.1v1.1h-1.1zM14.2 15.7h0.8v0.8h-0.8zM14.2 4.7h0.7v0.7h-0.7zM14.6 21.7h0.7v0.7h-0.7zM14.5 11.8h0.8v0.8h-0.8zM15.1 9.5h0.6v0.6h-0.6zM17.4 15.9h0.8v0.8h-0.8zM13.2 23.9h1.2v1.2h-1.2zM14.5 15.5h0.6v0.6h-0.6zM16.7 13.8h0.9v0.9h-0.9zM15.2 20.3h0.8v0.8h-0.8zM16.1 17.5h0.9v0.9h-0.9zM16.6 7.7h0.6v0.6h-0.6zM15.8 14.2h0.8v0.8h-0.8zM17.6 4.1h0.8v0.8h-0.8zM17 10.2h0.9v0.9h-0.9zM12 6.6h1v1h-1zM13.6 17.6h1v1h-1zM14.4 24.4h1.1v1.1h-1.1zM13.2 7h0.5v0.5h-0.5zM13.9 16h0.7v0.7h-0.7zM17.1 24.1h0.8v0.8h-0.8zM15.9 17.7h1.2v1.2h-1.2zM15.5 18.4h0.7v0.7h-0.7zM15.9 28h0.6v0.6h-0.6zM15.9 18.7h0.8v0.8h-0.8z" fill="#000" opacity="0.5"/><path d="M32 24.500V32H24.500z" fill="#ff8585"/><path d="M26 28.500h5M28.500 26v5" stroke="#000" stroke-width="1.100" fill="none"/></g><g transform="translate(70 172)" clip-path="url(#cc)"><rect width="32" height="32" fill="#fff"/><path d="M18.6 9.4h1.7v1.7h-1.7zM17.4 20h1.2v1.2h-1.2zM15.4 15.4h1v1h-1zM15.2 17.4h1.3v1.3h-1.3zM16.5 16.4h1.5v1.5h-1.5zM14.7 19.4h1.5v1.5h-1.5zM15.7 17.6h1.6v1.6h-1.6zM14.5 11.3h1.4v1.4h-1.4zM17.1 15h1.6v1.6h-1.6zM14.9 21.7h1.5v1.5h-1.5zM15.8 18.3h1.3v1.3h-1.3zM15.7 8.1h1.2v1.2h-1.2zM15.5 13h1v1h-1zM15 25.9h1v1h-1zM16.4 17.8h0.8v0.8h-0.8zM15.7 23.7h1.6v1.6h-1.6zM15.4 21h1.1v1.1h-1.1zM15.3 25.8h1.3v1.3h-1.3zM16 18.9h1.6v1.6h-1.6zM15.4 5.1h1v1h-1zM13.4 12.2h1.4v1.4h-1.4zM16.7 14.8h1.8v1.8h-1.8zM17.2 18.1h0.8v0.8h-0.8zM16.7 7.5h1.8v1.8h-1.8zM17 2.2h1.3v1.3h-1.3zM18 15.3h1.1v1.1h-1.1zM17.2 15.1h1v1h-1zM17.2 19.1h1v1h-1zM18.7 10h1v1h-1zM17.2 20.5h1v1h-1zM13.9 13h1.1v1.1h-1.1zM13.7 22.1h1.2v1.2h-1.2zM14.6 26.6h1.6v1.6h-1.6zM17.4 10.4h1.2v1.2h-1.2zM15.2 5.4h1.4v1.4h-1.4zM16.1 21h1.2v1.2h-1.2zM16.2 8.4h1.3v1.3h-1.3zM16.3 13.5h1.4v1.4h-1.4zM15.2 22.7h1.6v1.6h-1.6zM16 30.8h0.9v0.9h-0.9z" fill="#000" opacity="0.95"/><path d="M32 24.500V32H24.500z" fill="#ff8585"/><path d="M26 28.500h5M28.500 26v5" stroke="#000" stroke-width="1.100" fill="none"/></g><g transform="translate(104 172)" clip-path="url(#cc)"><rect width="32" height="32" fill="#fff"/><g filter="url(#bl09)"><ellipse cx="16" cy="15" rx="3.200" ry="11" fill="#000" opacity=".75"/></g><path d="M15.3 1h1v1h-1zM17.1 14h1.5v1.5h-1.5zM18.3 20.4h1v1h-1zM15.3 3.2h1.6v1.6h-1.6zM13 19.1h1.8v1.8h-1.8zM17.4 19.6h1.8v1.8h-1.8zM15.9 6.4h1.1v1.1h-1.1zM16.6 13.1h1.6v1.6h-1.6zM16.5 10.6h1.1v1.1h-1.1zM15.3 22.2h1.2v1.2h-1.2zM18.9 4.1h1.1v1.1h-1.1zM16.5 12.4h0.9v0.9h-0.9zM14.5 3.2h1.6v1.6h-1.6zM19.2 13.3h1.1v1.1h-1.1zM17.6 18.5h1v1h-1zM17.1 20.3h1.5v1.5h-1.5zM16.8 13.4h1.3v1.3h-1.3zM18.7 13.8h1.3v1.3h-1.3zM16.1 23.9h1.1v1.1h-1.1zM14.6 6h1.2v1.2h-1.2zM16.5 7.2h1.3v1.3h-1.3zM16.6 9.4h1v1h-1zM14.5 10.6h1.7v1.7h-1.7zM16 20.7h0.9v0.9h-0.9zM14.7 15.8h1.2v1.2h-1.2zM16 12.1h1.8v1.8h-1.8zM15.3 1.6h1.3v1.3h-1.3zM14.5 10.7h1.2v1.2h-1.2zM16.2 19.8h1.1v1.1h-1.1zM14.2 27.1h1.6v1.6h-1.6zM15.8 13h1.1v1.1h-1.1zM13.6 11.1h1.2v1.2h-1.2zM13.7 2.8h1.1v1.1h-1.1zM14 22h1.1v1.1h-1.1zM15.7 7.1h0.8v0.8h-0.8zM15.4 14.6h1.6v1.6h-1.6zM17.1 6.9h1.7v1.7h-1.7zM16.4 21.4h1v1h-1zM18.8 17.9h0.9v0.9h-0.9zM17.9 10.4h1.5v1.5h-1.5zM19.3 18.7h1.6v1.6h-1.6zM16.8 16.7h0.9v0.9h-0.9zM15.4 13.9h1.6v1.6h-1.6zM13.5 14.2h1.1v1.1h-1.1zM15 7.7h1.4v1.4h-1.4zM11.9 25.3h1.6v1.6h-1.6zM16.7 8.4h1v1h-1zM16.5 17.1h1.8v1.8h-1.8zM15.4 27.9h1v1h-1z" fill="#000" opacity="0.9"/><path d="M32 24.500V32H24.500z" fill="#ff8585"/></g><g transform="translate(138 172)" clip-path="url(#cc)"><rect width="32" height="32" fill="#fff"/><path d="M12 2l16 16M9 4.500l17 17M6.500 7l17 17M4.500 10.500l16 16M3 14l14 14" stroke="#111" stroke-width="1" fill="none"/><path d="M26 28.500h5M28.500 26v5" stroke="#000" stroke-width="1.100" fill="none"/></g><g transform="translate(172 172)" clip-path="url(#cc)"><rect width="32" height="32" fill="#fff"/><rect x="15.300" y="14.300" width="1.400" height="1.400" fill="#000"/></g><g transform="translate(206 172)" clip-path="url(#cc)"><rect width="32" height="32" fill="#fff"/><g filter="url(#bl12)"><g fill="#000" opacity=".33"><circle cx="13" cy="13" r="7"/><circle cx="19" cy="12" r="6"/><circle cx="12" cy="19" r="6.500"/><circle cx="19" cy="19" r="7"/><circle cx="16" cy="16" r="8"/></g></g><path d="M26 28.500h5M28.500 26v5" stroke="#000" stroke-width="1.100" fill="none"/></g><g transform="translate(2 206)" clip-path="url(#cc)"><rect width="32" height="32" fill="#fff"/><ellipse cx="16" cy="16" rx="15.5" ry="15.5" fill="url(#sun)" opacity="1"/><path d="M32 24.500V32H24.500z" fill="#ff8585"/><path d="M26 28.500h5M28.500 26v5" stroke="#000" stroke-width="1.100" fill="none"/></g><g transform="translate(36 206)" clip-path="url(#cc)"><rect width="32" height="32" fill="#fff"/><g filter="url(#bl03)"><path d="M2.3 29.8h2v2h-2zM15.3 15.2h2.1v2.1h-2.1zM16.7 23.8h1.4v1.4h-1.4zM13.1 14.8h1.8v1.8h-1.8zM22.3 8.7h1.9v1.9h-1.9zM5.1 6.4h1.1v1.1h-1.1zM10.6 24h0.9v0.9h-0.9zM29.6 15.1h0.9v0.9h-0.9zM8.9 12.9h1.1v1.1h-1.1zM22.3 24.5h0.9v0.9h-0.9zM7 13.3h1v1h-1zM18.8 15.4h1v1h-1zM19.6 11.8h1.4v1.4h-1.4zM8 13.9h1.5v1.5h-1.5zM6.7 16.7h0.9v0.9h-0.9zM20 11h0.9v0.9h-0.9zM3.1 25h1.7v1.7h-1.7zM7.1 19.4h1.1v1.1h-1.1zM10.8 12h0.9v0.9h-0.9zM19.7 19.6h1.8v1.8h-1.8zM28.2 7.9h1.1v1.1h-1.1zM13.2 20.4h1.6v1.6h-1.6zM8.8 10.2h1.4v1.4h-1.4zM13.5 25.8h1.4v1.4h-1.4zM12.9 9.1h1.3v1.3h-1.3zM21.3 16.7h1.9v1.9h-1.9zM2.9 24.2h1.8v1.8h-1.8zM5.7 12.6h1.1v1.1h-1.1z" fill="#000" opacity="0.85"/></g><path d="M14.7 13.2h0.6v0.6h-0.6zM15 13.8h0.6v0.6h-0.6zM10.3 25.9h0.6v0.6h-0.6zM27.5 16.3h0.7v0.7h-0.7zM25.5 14.6h0.5v0.5h-0.5zM4.1 15.8h0.7v0.7h-0.7zM24.8 8.9h0.6v0.6h-0.6zM14 8.1h0.8v0.8h-0.8zM8.8 23.2h0.5v0.5h-0.5zM19.6 23.2h0.6v0.6h-0.6zM18.7 18.6h0.5v0.5h-0.5zM21.6 14.4h0.8v0.8h-0.8zM5.7 14.6h0.7v0.7h-0.7zM14.7 6.6h0.6v0.6h-0.6zM20.9 8.4h0.5v0.5h-0.5zM24.9 11.5h0.4v0.4h-0.4zM17.1 11.6h0.6v0.6h-0.6zM15.2 11.2h0.6v0.6h-0.6zM21.6 9.9h0.5v0.5h-0.5zM20.4 18.2h0.6v0.6h-0.6zM13.9 11.6h0.4v0.4h-0.4zM19.9 15.8h0.6v0.6h-0.6zM25.7 15.4h0.7v0.7h-0.7zM22.4 10.8h0.4v0.4h-0.4zM18.3 15.2h0.5v0.5h-0.5zM18.1 23.6h0.5v0.5h-0.5zM7.7 8.6h0.7v0.7h-0.7zM18.7 25.8h0.5v0.5h-0.5zM4.9 16.4h0.8v0.8h-0.8zM14.9 6.6h0.7v0.7h-0.7zM23.9 15.5h0.8v0.8h-0.8zM19.4 16.1h0.7v0.7h-0.7zM11.6 9h0.7v0.7h-0.7zM8.9 22.4h0.6v0.6h-0.6zM18.1 26.8h0.7v0.7h-0.7zM13.5 18.5h0.6v0.6h-0.6zM21.8 18.4h0.8v0.8h-0.8zM26.8 15.2h0.4v0.4h-0.4zM5.5 12.4h0.6v0.6h-0.6zM18.8 12.4h0.8v0.8h-0.8z" fill="#000" opacity="0.4"/><path d="M32 24.500V32H24.500z" fill="#ff8585"/><path d="M26 28.500h5M28.500 26v5" stroke="#000" stroke-width="1.100" fill="none"/></g><g transform="translate(70 206)" clip-path="url(#cc)"><rect width="32" height="32" fill="#fff"/><g filter="url(#bl03)"><path d="M14.9 10.6h1.1v1.1h-1.1zM13.3 13h2v2h-2zM15.2 12.5h1.9v1.9h-1.9zM6.5 13.9h2.3v2.3h-2.3zM21.1 13.6h2.2v2.2h-2.2zM18.6 1h0.8v0.8h-0.8zM18.9 12.7h1v1h-1zM5.6 8.5h2.3v2.3h-2.3zM7.6 21.1h0.8v0.8h-0.8zM19.9 13.2h1.7v1.7h-1.7zM16.3 15.1h0.8v0.8h-0.8zM8.8 10.2h2.1v2.1h-2.1zM18.7 9.8h2.2v2.2h-2.2zM18.8 23.8h1.2v1.2h-1.2zM20.5 12.2h1.5v1.5h-1.5zM12.9 13.8h0.9v0.9h-0.9zM5.9 11.8h0.9v0.9h-0.9zM10.2 16.7h2v2h-2zM17.6 13.9h1.7v1.7h-1.7zM23.3 19.3h2.3v2.3h-2.3zM12.9 7.6h0.9v0.9h-0.9zM18.7 16.1h0.9v0.9h-0.9zM25.1 23.4h1.4v1.4h-1.4zM23.5 9.3h2v2h-2zM22.9 10h1.4v1.4h-1.4zM9.1 14.9h0.9v0.9h-0.9zM22.5 15.8h1.6v1.6h-1.6zM23.2 12.8h2.1v2.1h-2.1zM7.2 15h2.1v2.1h-2.1zM16.2 14.2h1.5v1.5h-1.5zM13.3 19.1h0.9v0.9h-0.9zM16.3 16h1.8v1.8h-1.8zM16.2 14.2h1.9v1.9h-1.9zM13.9 14.5h2.3v2.3h-2.3zM0.9 14.7h1.8v1.8h-1.8zM9.2 12.5h1v1h-1zM21.3 12.9h1.3v1.3h-1.3zM19.9 19.3h2.4v2.4h-2.4zM6.1 19.2h1.9v1.9h-1.9zM6.3 13.3h2v2h-2zM16.6 13.3h1v1h-1zM15.1 15.9h1.2v1.2h-1.2zM11.1 15.4h1.6v1.6h-1.6zM28.3 14.5h1.9v1.9h-1.9zM18.3 16.1h2v2h-2zM21.1 20.4h0.9v0.9h-0.9zM8.5 8.8h1.7v1.7h-1.7zM18.9 2.6h2.4v2.4h-2.4zM21.5 15.9h1v1h-1zM14.9 10.6h1.1v1.1h-1.1zM16 14.3h1.2v1.2h-1.2zM17.5 19.7h2.1v2.1h-2.1zM14 9.6h1.2v1.2h-1.2zM15.9 10.1h1.8v1.8h-1.8zM22.8 12.8h1.6v1.6h-1.6zM19.5 15.2h2.3v2.3h-2.3zM16.9 14.6h1.8v1.8h-1.8zM12.1 20.3h1.2v1.2h-1.2zM15.9 17.7h1.9v1.9h-1.9zM14.5 12.9h1.9v1.9h-1.9z" fill="#000" opacity="0.8"/></g><path d="M23.8 18.2h0.7v0.7h-0.7zM22.4 10.3h0.6v0.6h-0.6zM9.7 8.5h0.5v0.5h-0.5zM9.5 20.6h0.6v0.6h-0.6zM17.1 20.7h0.4v0.4h-0.4zM17.6 22.5h0.6v0.6h-0.6zM15.3 21.4h0.8v0.8h-0.8zM12.3 14h0.8v0.8h-0.8zM25.4 21.8h0.6v0.6h-0.6zM16.2 21.7h0.8v0.8h-0.8zM13.6 4.9h0.7v0.7h-0.7zM22.7 9.8h0.5v0.5h-0.5zM13 5h0.7v0.7h-0.7zM18.5 20.1h0.5v0.5h-0.5zM21.6 8.6h0.6v0.6h-0.6zM14.3 21.7h0.5v0.5h-0.5zM24.6 12.9h0.7v0.7h-0.7zM24.5 8h0.6v0.6h-0.6zM21.3 12.8h0.5v0.5h-0.5zM6.4 12.2h0.6v0.6h-0.6zM19 13.2h0.5v0.5h-0.5zM13.5 10.2h0.6v0.6h-0.6zM12.1 9.7h0.6v0.6h-0.6zM18.5 17.7h0.6v0.6h-0.6zM8.3 15.4h0.4v0.4h-0.4zM25.8 14.7h0.7v0.7h-0.7zM10 10.4h0.6v0.6h-0.6zM8.4 19.1h0.8v0.8h-0.8zM26.5 13.4h0.5v0.5h-0.5zM19.6 25.4h0.6v0.6h-0.6zM16.6 21.6h0.8v0.8h-0.8zM15.8 24.1h0.7v0.7h-0.7zM15 10.6h0.8v0.8h-0.8zM11.1 12.9h0.5v0.5h-0.5zM20 11.9h0.7v0.7h-0.7zM11.8 14h0.7v0.7h-0.7zM18.1 27.8h0.5v0.5h-0.5zM22 22.2h0.7v0.7h-0.7zM8.9 10.2h0.7v0.7h-0.7zM13 14.2h0.5v0.5h-0.5zM23.1 12.3h0.7v0.7h-0.7zM22 23.5h0.7v0.7h-0.7zM13.7 11.4h0.6v0.6h-0.6zM10.6 17.7h0.5v0.5h-0.5zM14.3 17.8h0.8v0.8h-0.8zM16.4 14.9h0.4v0.4h-0.4zM26 15.5h0.6v0.6h-0.6zM11.3 6.5h0.8v0.8h-0.8zM12.7 10.5h0.7v0.7h-0.7zM11.9 5.6h0.6v0.6h-0.6zM12.1 16.1h0.8v0.8h-0.8zM5.8 18.7h0.4v0.4h-0.4zM8.2 8.9h0.6v0.6h-0.6zM14.5 15.2h0.5v0.5h-0.5zM10.9 7.5h0.8v0.8h-0.8zM24.6 16.8h0.8v0.8h-0.8zM15.9 13.4h0.5v0.5h-0.5zM6.5 12.4h0.4v0.4h-0.4zM7.4 11.9h0.6v0.6h-0.6zM21.8 24.2h0.6v0.6h-0.6z" fill="#000" opacity="0.4"/><path d="M32 24.500V32H24.500z" fill="#ff8585"/><path d="M26 28.500h5M28.500 26v5" stroke="#000" stroke-width="1.100" fill="none"/></g><g transform="translate(104 206)" clip-path="url(#cc)"><rect width="32" height="32" fill="#fff"/><path d="M20.5 22h1v1h-1zM25.7 11h0.6v0.6h-0.6zM25.4 6.5h0.9v0.9h-0.9zM15.7 3.1h1v1h-1zM18.2 3.4h0.9v0.9h-0.9zM24.2 23.2h0.8v0.8h-0.8zM30.2 20.3h0.6v0.6h-0.6zM19.4 11.1h0.8v0.8h-0.8zM22.1 16.7h0.5v0.5h-0.5zM12.8 10.1h0.8v0.8h-0.8zM16.9 6.1h0.8v0.8h-0.8zM11.4 18.2h0.6v0.6h-0.6zM10.2 14.1h0.9v0.9h-0.9zM11.6 11.8h0.9v0.9h-0.9zM6.3 11.7h0.7v0.7h-0.7zM16.5 6.1h0.9v0.9h-0.9zM15.7 3.7h0.6v0.6h-0.6zM2.7 11.3h0.5v0.5h-0.5zM8.6 17.7h0.8v0.8h-0.8zM10 14.9h0.7v0.7h-0.7zM18.6 28.2h0.5v0.5h-0.5zM24.2 17.6h0.9v0.9h-0.9zM9.9 19.4h0.5v0.5h-0.5zM17.9 13.3h0.7v0.7h-0.7zM26.3 23.3h0.8v0.8h-0.8zM7.8 6.8h0.9v0.9h-0.9zM10.9 12.5h0.9v0.9h-0.9zM6.5 26.5h0.6v0.6h-0.6zM5.1 14.9h0.9v0.9h-0.9zM4.1 18.8h0.9v0.9h-0.9zM1.9 15.7h0.6v0.6h-0.6zM15 25.9h0.7v0.7h-0.7zM10.1 7.1h0.9v0.9h-0.9zM5.5 22.5h1v1h-1zM21.8 28h0.5v0.5h-0.5zM19.2 19.2h0.4v0.4h-0.4zM14 10.2h0.5v0.5h-0.5zM13 3.6h1v1h-1zM6 17.4h0.8v0.8h-0.8zM28.6 18.4h0.7v0.7h-0.7zM26.5 19.1h0.5v0.5h-0.5zM17.8 17.4h0.9v0.9h-0.9zM12 20h0.5v0.5h-0.5zM21.9 5.9h0.6v0.6h-0.6zM16.6 22.8h0.9v0.9h-0.9zM29.9 15.1h0.4v0.4h-0.4zM18.8 18.5h0.8v0.8h-0.8zM4.9 26h1v1h-1zM17.3 14.4h0.8v0.8h-0.8zM5 20.7h0.9v0.9h-0.9zM29 22.1h0.8v0.8h-0.8zM29.9 12.5h0.6v0.6h-0.6zM11.4 23.3h1v1h-1zM24.9 6.6h0.9v0.9h-0.9zM7.6 16.8h0.8v0.8h-0.8zM11.5 10.2h0.6v0.6h-0.6zM5.9 13.1h0.6v0.6h-0.6zM8.9 26h0.5v0.5h-0.5zM14.8 2.2h0.4v0.4h-0.4zM26.5 24.5h1v1h-1zM4.3 24.3h0.6v0.6h-0.6zM24.7 18h0.7v0.7h-0.7zM19.6 8.8h0.7v0.7h-0.7zM26.3 20.3h0.9v0.9h-0.9zM17.2 11.1h0.8v0.8h-0.8zM4.3 23.7h0.8v0.8h-0.8zM1.7 17h0.7v0.7h-0.7zM22.9 13.8h0.5v0.5h-0.5zM19.3 27.6h0.5v0.5h-0.5zM17.8 15.6h0.8v0.8h-0.8zM29.8 12.2h0.8v0.8h-0.8zM15.8 5.5h0.7v0.7h-0.7zM7 11h0.5v0.5h-0.5zM13.3 14.8h0.5v0.5h-0.5zM13.9 30.5h0.6v0.6h-0.6zM20.2 30.3h0.6v0.6h-0.6zM11.2 14.1h0.5v0.5h-0.5zM21.6 24.4h0.9v0.9h-0.9zM5.3 9.5h0.9v0.9h-0.9zM22.7 12.7h0.8v0.8h-0.8zM9 3.8h0.9v0.9h-0.9zM26.9 15.8h0.7v0.7h-0.7zM28.5 17.7h1v1h-1zM8.6 22.4h1v1h-1zM25.5 15.5h0.5v0.5h-0.5zM15.9 21.8h0.7v0.7h-0.7zM17.9 10.7h0.6v0.6h-0.6zM8.3 22.8h0.4v0.4h-0.4zM18.9 20.9h0.7v0.7h-0.7zM13.7 24.3h0.7v0.7h-0.7zM2.7 22.6h1v1h-1zM2.3 17.9h0.5v0.5h-0.5zM25.8 4.8h0.7v0.7h-0.7zM27.8 6.8h0.9v0.9h-0.9zM30.3 14.1h0.7v0.7h-0.7zM5.8 23.5h0.8v0.8h-0.8zM28.8 19.7h0.7v0.7h-0.7zM15.6 14.2h0.8v0.8h-0.8zM9.4 16.9h0.8v0.8h-0.8zM21.8 28.6h0.9v0.9h-0.9zM12 13.3h0.7v0.7h-0.7zM5.4 10.3h0.8v0.8h-0.8zM20.1 14.1h0.7v0.7h-0.7zM21.3 26.7h0.4v0.4h-0.4zM16.3 2h0.9v0.9h-0.9zM15.8 28.6h0.8v0.8h-0.8zM24.5 15.6h0.9v0.9h-0.9zM8.6 6.1h0.8v0.8h-0.8zM15.9 17.3h0.9v0.9h-0.9zM17.4 21.3h0.8v0.8h-0.8zM13.7 24.9h0.8v0.8h-0.8zM19.2 27.4h0.8v0.8h-0.8zM14.7 8.5h0.9v0.9h-0.9zM29.6 13.6h0.8v0.8h-0.8zM18.5 23h0.7v0.7h-0.7zM22.1 24.9h0.6v0.6h-0.6zM22.4 24.4h0.8v0.8h-0.8zM8.3 13.4h0.9v0.9h-0.9zM26.7 7.3h0.5v0.5h-0.5zM23.4 15.7h0.4v0.4h-0.4zM14.3 29.9h0.5v0.5h-0.5zM13.7 24h0.5v0.5h-0.5zM11.4 16.5h0.7v0.7h-0.7zM20.6 29.8h0.4v0.4h-0.4zM22.1 12.9h0.5v0.5h-0.5zM21.4 22.5h0.9v0.9h-0.9zM18 1.5h0.6v0.6h-0.6zM23.7 6.9h0.8v0.8h-0.8zM10.6 17.7h0.8v0.8h-0.8zM11 4.5h1v1h-1zM14.6 25.1h0.5v0.5h-0.5zM21.1 24.9h0.7v0.7h-0.7zM24 27h0.8v0.8h-0.8zM20.5 24.3h0.5v0.5h-0.5zM11.2 3.9h0.6v0.6h-0.6zM20.9 6.6h0.5v0.5h-0.5zM17.9 11.2h0.5v0.5h-0.5zM17.2 6.6h0.5v0.5h-0.5zM9.5 29.3h0.9v0.9h-0.9zM10.7 9.8h0.9v0.9h-0.9zM12.5 15.3h0.6v0.6h-0.6zM13.2 28.5h0.8v0.8h-0.8zM29.8 13.2h1v1h-1zM22.4 25.9h0.7v0.7h-0.7zM8.2 26.7h0.5v0.5h-0.5zM18.1 15.8h1v1h-1zM22.9 23.4h0.4v0.4h-0.4zM11.7 21.2h0.9v0.9h-0.9zM25.8 16.9h1v1h-1zM7.3 16.1h0.5v0.5h-0.5zM27.7 16.6h0.6v0.6h-0.6zM28.6 18.7h0.9v0.9h-0.9zM29.6 16.1h0.5v0.5h-0.5zM20.2 25.4h0.5v0.5h-0.5zM14.1 24.3h0.9v0.9h-0.9zM5.8 15.7h0.7v0.7h-0.7zM5.7 12.6h0.5v0.5h-0.5zM27.8 10.1h0.5v0.5h-0.5zM10.5 27.8h1v1h-1zM18 22.3h0.8v0.8h-0.8zM21.3 28.5h0.8v0.8h-0.8zM28.3 12.4h0.8v0.8h-0.8zM14.8 17.2h0.5v0.5h-0.5zM24.8 17.5h0.9v0.9h-0.9zM22.5 13.1h0.4v0.4h-0.4zM30.8 18.6h0.5v0.5h-0.5zM18.5 10.5h0.5v0.5h-0.5zM7.7 19.6h0.5v0.5h-0.5zM20.4 7.7h0.4v0.4h-0.4zM15.4 4.6h0.7v0.7h-0.7zM27.9 17.5h0.9v0.9h-0.9zM19.1 8.2h0.5v0.5h-0.5zM25.9 24.2h0.4v0.4h-0.4zM28.5 21.4h0.9v0.9h-0.9zM13.2 24.8h0.7v0.7h-0.7zM19.8 17.6h0.8v0.8h-0.8zM17.3 4.8h0.7v0.7h-0.7zM11.9 7.2h0.7v0.7h-0.7zM23.1 16.7h0.7v0.7h-0.7zM4.7 22.6h0.7v0.7h-0.7zM19 14h0.9v0.9h-0.9zM24.4 19.4h0.7v0.7h-0.7zM12.4 20h1v1h-1zM7.5 10.4h0.9v0.9h-0.9zM8.4 15.7h1v1h-1zM11.5 6.2h0.9v0.9h-0.9zM18.6 21.4h0.9v0.9h-0.9zM13.2 14.3h0.9v0.9h-0.9zM2.7 14.6h0.6v0.6h-0.6zM23.1 13.6h0.5v0.5h-0.5zM17.4 30.6h0.5v0.5h-0.5zM14.7 23.8h0.7v0.7h-0.7zM4.9 17.8h0.7v0.7h-0.7zM19.7 17.4h1v1h-1zM8.5 23.1h0.4v0.4h-0.4zM24.4 26.8h0.9v0.9h-0.9zM24.3 21.8h0.7v0.7h-0.7zM7.9 23.8h0.7v0.7h-0.7zM15.9 8.4h0.7v0.7h-0.7zM15.9 16.9h0.8v0.8h-0.8zM23.7 11.8h0.8v0.8h-0.8zM19.2 30.1h0.4v0.4h-0.4zM5.9 26.2h0.5v0.5h-0.5zM25.1 10.2h0.9v0.9h-0.9zM21.2 4.6h0.4v0.4h-0.4zM10.8 6.5h0.5v0.5h-0.5zM10.1 24.7h0.9v0.9h-0.9zM20.2 24h0.9v0.9h-0.9zM4 12.8h1v1h-1zM21.4 17.8h0.9v0.9h-0.9zM21.4 28h0.4v0.4h-0.4zM26.3 16.3h0.8v0.8h-0.8zM5.3 21.7h0.9v0.9h-0.9zM23.4 15.8h0.5v0.5h-0.5zM3.5 16.9h0.8v0.8h-0.8zM9.3 10.3h1v1h-1zM20.4 25.7h0.6v0.6h-0.6zM27 19h0.9v0.9h-0.9zM12 25.8h0.7v0.7h-0.7zM15.6 14h0.7v0.7h-0.7zM11.9 4.9h0.7v0.7h-0.7zM14.4 8.3h1v1h-1zM28.3 13.5h0.8v0.8h-0.8zM29.3 10.7h0.6v0.6h-0.6zM29.6 13h0.9v0.9h-0.9zM16 15h0.9v0.9h-0.9zM3.6 15.2h0.4v0.4h-0.4zM11.3 11.4h0.8v0.8h-0.8zM7.8 22.5h0.8v0.8h-0.8zM11.5 3h0.7v0.7h-0.7zM20.4 3.2h0.7v0.7h-0.7zM25.1 5h0.5v0.5h-0.5zM19.7 21h0.7v0.7h-0.7zM27.1 12.1h0.5v0.5h-0.5zM5.1 11.5h0.9v0.9h-0.9zM10.8 28.9h0.8v0.8h-0.8zM13.7 12.9h1v1h-1zM23.1 26.4h0.7v0.7h-0.7zM21.7 5.8h0.5v0.5h-0.5zM14.4 28.9h0.4v0.4h-0.4zM6.3 16h0.5v0.5h-0.5zM19.3 28.1h0.8v0.8h-0.8zM3.7 14.7h0.9v0.9h-0.9zM14.7 9.8h0.9v0.9h-0.9zM6.6 15h0.9v0.9h-0.9zM13.3 5.8h0.5v0.5h-0.5zM20.2 28.4h0.5v0.5h-0.5zM5 8h0.6v0.6h-0.6zM1.1 16.2h1v1h-1zM19.5 10.1h0.8v0.8h-0.8zM14.6 16.2h1v1h-1zM7.5 27.2h0.4v0.4h-0.4zM11.8 27.3h0.4v0.4h-0.4zM12.7 22.5h0.9v0.9h-0.9zM27.6 9.8h0.5v0.5h-0.5zM12.1 5.6h0.8v0.8h-0.8zM6.3 14.9h0.8v0.8h-0.8zM28.3 13.5h0.8v0.8h-0.8zM14.4 27h0.6v0.6h-0.6zM10.6 12.7h0.6v0.6h-0.6zM24.1 9.1h0.5v0.5h-0.5zM27.9 20.2h1v1h-1zM24.2 5.4h1v1h-1zM17.6 22.3h0.9v0.9h-0.9zM12.8 24.9h0.4v0.4h-0.4zM23.5 27.9h0.5v0.5h-0.5zM15.1 17.6h0.9v0.9h-0.9zM25 7.7h0.6v0.6h-0.6zM10.3 4.4h0.5v0.5h-0.5zM5.3 18.2h0.8v0.8h-0.8zM3.7 7.8h0.9v0.9h-0.9zM10.1 26h1v1h-1zM25.8 18.3h0.6v0.6h-0.6zM19.4 30.5h0.6v0.6h-0.6zM21.5 22.2h0.7v0.7h-0.7zM14 2h1v1h-1zM11.9 23.9h0.5v0.5h-0.5zM14.3 3.8h0.9v0.9h-0.9zM17.1 15.4h0.7v0.7h-0.7zM21.4 6h0.8v0.8h-0.8zM11.4 11h0.8v0.8h-0.8zM29.6 12.7h0.6v0.6h-0.6zM21.8 22.9h0.6v0.6h-0.6zM13.6 21.9h0.8v0.8h-0.8zM27.5 15h0.6v0.6h-0.6zM24.1 26.1h0.8v0.8h-0.8zM13.6 15.5h0.8v0.8h-0.8zM21.1 26.3h0.5v0.5h-0.5zM24.4 26h0.8v0.8h-0.8zM15.3 15.8h0.6v0.6h-0.6zM25 23.6h0.8v0.8h-0.8zM18.3 26.5h0.5v0.5h-0.5zM4.4 22.5h0.4v0.4h-0.4zM3.6 11.8h0.4v0.4h-0.4zM10.8 10.5h0.8v0.8h-0.8zM29.9 19.2h0.9v0.9h-0.9zM26.4 20.1h0.6v0.6h-0.6zM10 27.7h0.5v0.5h-0.5zM9.9 18.7h0.8v0.8h-0.8zM29.4 21.5h0.8v0.8h-0.8zM14.7 29.6h0.4v0.4h-0.4zM20.3 9.8h0.7v0.7h-0.7zM7.6 6.4h0.6v0.6h-0.6zM6.9 26.1h0.7v0.7h-0.7zM10 14.1h0.7v0.7h-0.7zM5.4 6.9h0.9v0.9h-0.9zM28 10.1h0.6v0.6h-0.6zM10.7 2.8h0.7v0.7h-0.7zM12.9 1.7h0.5v0.5h-0.5zM7.9 18.5h0.8v0.8h-0.8zM18.4 20.2h0.5v0.5h-0.5zM13 2.3h0.7v0.7h-0.7zM16.3 6.1h1v1h-1zM26.7 12.5h0.7v0.7h-0.7zM15.6 23h0.8v0.8h-0.8zM20.8 21.1h0.4v0.4h-0.4zM8.7 16.1h0.9v0.9h-0.9zM14.9 26.3h0.7v0.7h-0.7zM6.1 18.7h0.5v0.5h-0.5zM10.8 13.9h0.8v0.8h-0.8zM10.8 12h1v1h-1zM5.4 14.1h0.7v0.7h-0.7zM2.8 22h0.5v0.5h-0.5zM11.8 22.4h0.8v0.8h-0.8zM8 13.6h0.8v0.8h-0.8zM23.4 14h0.8v0.8h-0.8zM4 12.6h0.4v0.4h-0.4zM21.6 9.4h1v1h-1zM10.9 26.4h0.5v0.5h-0.5zM18.4 26.7h0.6v0.6h-0.6zM22.9 21.8h0.8v0.8h-0.8zM10.8 26.4h0.9v0.9h-0.9zM13.1 12.6h0.7v0.7h-0.7zM18.6 26.4h1v1h-1zM17.3 19h0.9v0.9h-0.9zM15.8 16.9h0.9v0.9h-0.9zM10.2 14.1h0.6v0.6h-0.6zM19.3 4.3h0.5v0.5h-0.5zM27.7 18.4h0.8v0.8h-0.8zM15.6 25.2h0.8v0.8h-0.8zM13.6 22.4h0.6v0.6h-0.6zM15.8 5.2h0.8v0.8h-0.8zM16.7 20.3h0.7v0.7h-0.7zM18.3 11.3h0.7v0.7h-0.7zM8.5 5.7h0.8v0.8h-0.8zM20.7 25.1h0.6v0.6h-0.6zM1.9 13.8h0.6v0.6h-0.6zM17.6 19.7h0.8v0.8h-0.8zM21.9 20.7h0.9v0.9h-0.9zM4.6 17.2h0.4v0.4h-0.4zM9.5 12.9h0.6v0.6h-0.6zM11.6 22.6h0.7v0.7h-0.7zM1.4 15.3h0.9v0.9h-0.9zM8 23.6h0.8v0.8h-0.8zM20.1 24.7h0.9v0.9h-0.9zM16.1 21.1h0.9v0.9h-0.9zM26 8.8h0.7v0.7h-0.7zM5 8.2h0.6v0.6h-0.6zM6 23.8h0.9v0.9h-0.9zM14.3 17.9h0.5v0.5h-0.5zM29.8 13.2h0.5v0.5h-0.5zM13.3 20.2h0.5v0.5h-0.5zM6.8 9.2h0.7v0.7h-0.7zM15 30.9h0.9v0.9h-0.9zM25.5 19h0.7v0.7h-0.7zM19 15h0.5v0.5h-0.5zM30.4 12.8h0.6v0.6h-0.6zM21.3 12.7h1v1h-1zM13.3 4.9h1v1h-1zM15 11.8h0.8v0.8h-0.8zM4.2 8.8h0.9v0.9h-0.9zM10.7 26.4h0.5v0.5h-0.5zM25.9 25.9h1v1h-1zM7.8 4.1h0.7v0.7h-0.7zM6.6 19.9h0.9v0.9h-0.9zM6.7 26h0.8v0.8h-0.8zM21.8 22h0.8v0.8h-0.8zM29.1 20.3h0.6v0.6h-0.6zM10 20.6h0.9v0.9h-0.9zM14.1 15.3h0.5v0.5h-0.5zM10.4 8.7h0.8v0.8h-0.8zM1.8 11.9h0.4v0.4h-0.4zM21.4 25.4h0.5v0.5h-0.5zM7.2 21.3h0.7v0.7h-0.7zM27.7 19.2h0.9v0.9h-0.9zM10.3 19.2h0.7v0.7h-0.7zM5.9 9.8h0.8v0.8h-0.8zM9 25.6h0.8v0.8h-0.8zM28.7 20.3h0.9v0.9h-0.9zM12.2 12h1v1h-1zM18.4 19.8h0.5v0.5h-0.5zM22.1 11.8h0.7v0.7h-0.7zM14.3 27.8h0.8v0.8h-0.8zM9.8 20.3h0.6v0.6h-0.6zM25.9 4.8h0.7v0.7h-0.7zM8 25.8h0.5v0.5h-0.5zM12.6 8.2h0.4v0.4h-0.4zM30.3 18.5h0.7v0.7h-0.7zM12.5 13.5h0.8v0.8h-0.8zM20.7 15.3h0.6v0.6h-0.6zM14.6 24.5h0.8v0.8h-0.8zM16.1 7.8h0.9v0.9h-0.9zM22.3 26.9h0.9v0.9h-0.9zM26.1 22.4h0.4v0.4h-0.4zM8.4 6.6h0.5v0.5h-0.5zM9.1 14.6h0.4v0.4h-0.4zM13.8 7.4h0.8v0.8h-0.8zM28 24.4h0.4v0.4h-0.4zM15.8 14.3h1v1h-1zM8.1 23.4h0.5v0.5h-0.5zM18.7 4.6h1v1h-1zM13.6 27h0.7v0.7h-0.7zM20.6 14.8h0.5v0.5h-0.5zM16.1 19.1h1v1h-1zM25.1 24.2h0.8v0.8h-0.8zM14.2 5.1h0.8v0.8h-0.8zM22.1 23.8h0.9v0.9h-0.9zM9.7 3.1h0.4v0.4h-0.4zM6.5 20.9h0.5v0.5h-0.5zM22.2 19.3h0.7v0.7h-0.7zM20.6 16.6h0.6v0.6h-0.6zM14.2 28.8h0.9v0.9h-0.9zM13 9.5h0.5v0.5h-0.5zM8.3 28.2h0.7v0.7h-0.7zM14.8 12.6h0.6v0.6h-0.6zM11.3 2.8h0.7v0.7h-0.7zM9.3 16.6h0.9v0.9h-0.9zM18.4 4h0.7v0.7h-0.7zM19.2 8.6h0.7v0.7h-0.7zM14.1 14.1h0.7v0.7h-0.7z" fill="#000" opacity="0.7"/><path d="M26 28.500h5M28.500 26v5" stroke="#000" stroke-width="1.100" fill="none"/></g><g transform="translate(138 206)" clip-path="url(#cc)"><rect width="32" height="32" fill="#fff"/><g filter="url(#bl08)"><circle cx="16" cy="16" r="13.500" fill="#000" opacity=".22"/></g><path d="M18.5 8.6h0.5v0.5h-0.5zM15.1 14.9h0.6v0.6h-0.6zM13.2 25.9h0.5v0.5h-0.5zM9.2 6.5h1.2v1.2h-1.2zM16.2 22h0.9v0.9h-0.9zM10 10h0.9v0.9h-0.9zM23 20.5h0.6v0.6h-0.6zM16.5 27.7h0.6v0.6h-0.6zM6.2 14.8h0.5v0.5h-0.5zM12.6 4.8h1v1h-1zM24 13.7h0.7v0.7h-0.7zM25.8 21.2h0.5v0.5h-0.5zM7.5 23.9h0.6v0.6h-0.6zM20.9 14.9h0.4v0.4h-0.4zM11.4 21.5h1v1h-1zM13.4 17h1.1v1.1h-1.1zM21.9 17.5h0.8v0.8h-0.8zM14.7 15.1h0.9v0.9h-0.9zM9.3 26.5h0.6v0.6h-0.6zM3.4 14.6h0.8v0.8h-0.8zM14.4 25.6h0.9v0.9h-0.9zM16.1 4.1h1.2v1.2h-1.2zM12.5 13.4h0.6v0.6h-0.6zM6.4 21.5h0.6v0.6h-0.6zM16.3 21h0.5v0.5h-0.5zM22.8 9.1h1v1h-1zM26.1 15.7h0.7v0.7h-0.7zM16.2 27.4h1.2v1.2h-1.2zM21.6 14.4h0.7v0.7h-0.7zM21.1 12.6h1v1h-1zM11.9 19h0.8v0.8h-0.8zM16.7 25.9h1.1v1.1h-1.1zM23.3 20.7h0.7v0.7h-0.7zM13.2 16h1.1v1.1h-1.1zM22.1 6.4h0.6v0.6h-0.6zM4.6 11.9h1.1v1.1h-1.1zM19.3 4.6h1v1h-1zM19 16.4h0.4v0.4h-0.4zM25.8 14.6h0.4v0.4h-0.4zM24.1 16.6h0.7v0.7h-0.7zM13.2 9.4h0.4v0.4h-0.4zM23.5 27h0.7v0.7h-0.7zM18 26.6h0.4v0.4h-0.4zM12.7 5.6h0.6v0.6h-0.6zM7.2 10.7h0.8v0.8h-0.8zM19.6 16.9h1v1h-1zM12.3 19.2h0.6v0.6h-0.6zM16.3 13.7h0.9v0.9h-0.9zM10.2 13.7h0.5v0.5h-0.5zM14.1 12.3h0.8v0.8h-0.8zM25.7 24.4h0.9v0.9h-0.9zM18.2 26.4h0.5v0.5h-0.5zM25.9 16.9h1v1h-1zM11.3 7.2h0.6v0.6h-0.6zM9.5 21.2h1.1v1.1h-1.1zM9.7 14.6h0.5v0.5h-0.5zM10.6 21.8h1v1h-1zM9.3 15.8h0.9v0.9h-0.9zM14.8 20.2h0.5v0.5h-0.5zM18.4 9.6h0.5v0.5h-0.5zM14.4 9.1h0.9v0.9h-0.9zM27.3 11.1h0.9v0.9h-0.9zM19.9 19.6h0.8v0.8h-0.8zM15.6 28.9h1v1h-1zM26.2 12.4h0.9v0.9h-0.9zM18.7 5.8h1.1v1.1h-1.1zM10.7 14.9h0.4v0.4h-0.4zM12.9 6.6h0.6v0.6h-0.6zM24.5 8.9h1v1h-1zM10.9 20.3h1.1v1.1h-1.1zM9.5 7.7h1.1v1.1h-1.1zM11.5 24.2h0.6v0.6h-0.6zM8.8 25.9h0.6v0.6h-0.6zM25.3 11.6h0.9v0.9h-0.9zM23.4 10.8h1v1h-1zM20.1 19.1h0.6v0.6h-0.6zM12.3 18.4h1.1v1.1h-1.1zM6.3 22.2h0.5v0.5h-0.5zM5.8 20.9h1.2v1.2h-1.2zM25.6 18.1h1.2v1.2h-1.2zM3.4 18.6h1.1v1.1h-1.1zM11.6 18h0.6v0.6h-0.6zM12 6.7h0.9v0.9h-0.9zM22.8 26.1h1.1v1.1h-1.1zM20.9 17.9h1.1v1.1h-1.1zM20.7 22.2h0.8v0.8h-0.8zM27.2 20.5h1.1v1.1h-1.1zM17.6 8.7h0.8v0.8h-0.8zM28.2 20.4h0.8v0.8h-0.8zM12.8 18.3h1.1v1.1h-1.1zM17.1 6.9h0.7v0.7h-0.7zM5.8 22.1h1.1v1.1h-1.1zM12.8 29.3h1.1v1.1h-1.1zM24.2 22.6h0.5v0.5h-0.5zM7 21.6h1.1v1.1h-1.1zM28.5 17h0.9v0.9h-0.9zM9.4 14.2h1v1h-1zM27.7 22.4h0.9v0.9h-0.9zM22.5 7.9h0.6v0.6h-0.6zM10.2 7.9h0.4v0.4h-0.4zM9.7 12.6h0.6v0.6h-0.6zM10.4 6.8h0.5v0.5h-0.5zM6.2 17.6h0.9v0.9h-0.9zM23.5 19.2h0.4v0.4h-0.4zM3.5 19.3h0.7v0.7h-0.7zM27.9 20.2h1.1v1.1h-1.1zM8.3 7.4h0.5v0.5h-0.5zM28.7 18.7h0.9v0.9h-0.9zM20.4 7.2h0.8v0.8h-0.8zM17.6 6.3h0.5v0.5h-0.5zM4.6 13.2h0.4v0.4h-0.4zM15.5 14h0.5v0.5h-0.5zM13.4 11.7h0.5v0.5h-0.5zM24.4 24.2h0.7v0.7h-0.7zM16.1 8h1v1h-1zM25 14.8h0.7v0.7h-0.7zM17.1 20.8h1.2v1.2h-1.2zM11.7 25.8h0.7v0.7h-0.7zM10.4 12.7h0.5v0.5h-0.5zM26.7 11.7h1v1h-1zM6.8 26h0.5v0.5h-0.5zM14.6 7.1h1.2v1.2h-1.2zM19.5 7.3h0.6v0.6h-0.6zM16.2 26.9h1.2v1.2h-1.2zM11.1 15.3h0.9v0.9h-0.9zM18.9 26.9h0.5v0.5h-0.5zM19 8h0.7v0.7h-0.7zM24.9 23.9h0.4v0.4h-0.4zM17.7 16.8h0.5v0.5h-0.5zM15.6 9.4h0.4v0.4h-0.4zM11.1 23.2h1.1v1.1h-1.1zM15.6 20.5h0.9v0.9h-0.9zM27.6 20.2h0.4v0.4h-0.4zM14.5 16.8h0.8v0.8h-0.8zM25.8 9h1.1v1.1h-1.1zM16.7 16.5h0.7v0.7h-0.7zM25.6 9.9h0.5v0.5h-0.5zM6.7 21.3h0.5v0.5h-0.5zM11.6 8.3h1.1v1.1h-1.1zM13.1 5.3h0.6v0.6h-0.6zM21.1 20.4h1.2v1.2h-1.2zM17.2 6.9h0.7v0.7h-0.7zM11 23.8h0.7v0.7h-0.7zM16.5 22.3h0.5v0.5h-0.5zM24.3 21.7h1v1h-1zM5.6 22.4h1v1h-1zM19.7 16.8h0.6v0.6h-0.6zM26.6 10.2h0.8v0.8h-0.8zM23.2 25.9h1.1v1.1h-1.1zM3.3 16.1h0.4v0.4h-0.4zM28 12.7h1v1h-1zM7.8 23.2h0.5v0.5h-0.5zM23.6 15.4h0.6v0.6h-0.6zM14 24h0.7v0.7h-0.7zM16.6 22.1h1.2v1.2h-1.2zM17.2 6.1h0.9v0.9h-0.9zM8 24.2h1.1v1.1h-1.1zM14.9 15.9h0.5v0.5h-0.5zM10.5 24.1h1.2v1.2h-1.2zM5.9 19.5h0.8v0.8h-0.8zM20.2 21.2h0.8v0.8h-0.8zM28.3 12.8h1v1h-1zM22.6 16.9h1v1h-1zM23.7 10.4h0.9v0.9h-0.9zM7.6 10.5h1.1v1.1h-1.1zM27.9 16h0.8v0.8h-0.8zM6.9 22.5h0.6v0.6h-0.6zM15.7 23.7h0.7v0.7h-0.7zM19.4 17h0.9v0.9h-0.9zM23.9 7.3h1.2v1.2h-1.2zM22.1 23.3h1.1v1.1h-1.1zM23.3 27.3h0.4v0.4h-0.4zM11.9 12.3h0.6v0.6h-0.6zM17.9 8.8h0.7v0.7h-0.7zM7.4 23.9h0.9v0.9h-0.9zM9.5 16.4h0.9v0.9h-0.9zM8.3 7.1h0.5v0.5h-0.5zM16.5 13h0.6v0.6h-0.6zM15.3 6.5h1.1v1.1h-1.1zM10.2 22.1h1.1v1.1h-1.1zM17.7 15.4h1v1h-1zM13.1 26.9h1.1v1.1h-1.1zM8.4 10.5h0.4v0.4h-0.4zM13.4 20.9h1.1v1.1h-1.1zM9.9 10h0.5v0.5h-0.5zM26.5 10h1v1h-1zM11.3 19.1h0.9v0.9h-0.9zM21.9 24.5h0.9v0.9h-0.9zM14.7 24.4h0.6v0.6h-0.6zM4.3 20.8h1.2v1.2h-1.2zM20.6 28.6h0.4v0.4h-0.4zM11.1 23.7h1v1h-1zM13.4 13.3h0.5v0.5h-0.5zM20.2 15.4h0.5v0.5h-0.5zM23 16.8h0.6v0.6h-0.6zM24 24.2h0.8v0.8h-0.8zM24.2 7.8h0.9v0.9h-0.9zM19.6 22.6h1.1v1.1h-1.1zM17.5 19.2h0.7v0.7h-0.7zM13 22.4h1v1h-1zM11.6 10.4h0.7v0.7h-0.7zM27.5 22.2h0.6v0.6h-0.6zM16.1 13.1h0.5v0.5h-0.5zM12.3 27.8h0.9v0.9h-0.9zM10.3 6.9h1.1v1.1h-1.1zM23.8 20.9h0.8v0.8h-0.8zM14.6 10.9h1.2v1.2h-1.2zM16.2 15.3h0.7v0.7h-0.7zM6.1 14.8h0.5v0.5h-0.5zM14.3 19.1h1v1h-1zM15.1 15.4h1.2v1.2h-1.2zM25.3 12.3h0.6v0.6h-0.6zM15.3 16.1h0.5v0.5h-0.5zM16.2 28.6h1v1h-1zM23.9 8.2h0.7v0.7h-0.7zM9.1 13.1h0.4v0.4h-0.4zM18.7 29.3h0.9v0.9h-0.9zM17 18.5h0.8v0.8h-0.8zM14.4 26.4h0.7v0.7h-0.7zM7.3 21.5h1v1h-1zM12.8 19.9h0.5v0.5h-0.5zM14.3 14h1.1v1.1h-1.1zM9.1 8h1v1h-1zM22.1 6.3h0.5v0.5h-0.5zM20.5 28h0.5v0.5h-0.5zM8.1 8.8h0.7v0.7h-0.7zM11.7 28.5h0.7v0.7h-0.7zM5.6 10.5h0.7v0.7h-0.7zM11.4 16.1h0.6v0.6h-0.6zM22.4 15.2h0.8v0.8h-0.8zM20.2 21.5h0.5v0.5h-0.5zM18.8 8.7h0.8v0.8h-0.8zM12.7 29.3h0.6v0.6h-0.6zM17.1 29.9h1.1v1.1h-1.1zM13.5 4.6h0.9v0.9h-0.9zM25.2 19.3h0.7v0.7h-0.7zM26.7 21.6h1.2v1.2h-1.2zM6.1 22.5h1v1h-1zM11.5 17.8h0.8v0.8h-0.8zM12.5 26.9h0.4v0.4h-0.4zM8.7 9.5h0.5v0.5h-0.5zM26.6 18.8h0.8v0.8h-0.8zM12.4 11h1v1h-1zM8.7 16.6h0.9v0.9h-0.9zM16.2 15.5h0.4v0.4h-0.4zM13.7 17.9h1v1h-1zM20.8 27.8h0.9v0.9h-0.9zM15 25.2h0.8v0.8h-0.8zM13.8 23.9h0.9v0.9h-0.9zM15.4 19.8h1.1v1.1h-1.1zM12.6 12.4h0.9v0.9h-0.9zM24.8 24h1.1v1.1h-1.1zM27.6 18.3h1.1v1.1h-1.1zM22.1 22.2h0.8v0.8h-0.8zM10.2 10.6h0.7v0.7h-0.7zM16.8 8.5h0.7v0.7h-0.7zM10.2 27.9h0.6v0.6h-0.6zM20.7 25.7h0.7v0.7h-0.7zM15 26.1h1v1h-1zM22.1 11.4h1.1v1.1h-1.1zM18.2 10.1h0.9v0.9h-0.9zM20.7 12.6h0.9v0.9h-0.9zM17.2 12.6h0.9v0.9h-0.9zM4 21.2h0.6v0.6h-0.6zM15.7 7.8h0.9v0.9h-0.9zM14.4 28.5h1.1v1.1h-1.1zM21.8 9.4h0.5v0.5h-0.5zM18.3 8h1.1v1.1h-1.1zM13.7 10.7h1.2v1.2h-1.2zM21.1 19.5h0.9v0.9h-0.9zM17.6 14h0.4v0.4h-0.4zM20.6 25.4h1.1v1.1h-1.1zM18.5 12.7h0.5v0.5h-0.5zM16.8 17.3h0.9v0.9h-0.9zM6.3 8.5h0.7v0.7h-0.7zM12.6 19.4h0.9v0.9h-0.9zM14.5 13.1h1.1v1.1h-1.1zM19.1 21h0.7v0.7h-0.7zM3.3 17.2h1v1h-1zM27.8 12.5h0.5v0.5h-0.5zM22.2 6.5h1v1h-1zM5.9 16.4h1.1v1.1h-1.1zM7.8 18.4h0.8v0.8h-0.8zM12.4 16.7h0.6v0.6h-0.6zM19 21.9h0.5v0.5h-0.5zM24 20.7h0.7v0.7h-0.7zM16.2 23.5h0.7v0.7h-0.7zM9.2 27.2h1.1v1.1h-1.1zM4.9 16.6h0.9v0.9h-0.9zM15.1 18.6h0.7v0.7h-0.7zM13.1 7.6h0.9v0.9h-0.9zM21.9 12.2h0.9v0.9h-0.9zM6.3 13.1h0.6v0.6h-0.6zM9.8 9.2h0.8v0.8h-0.8zM20.1 25.5h0.9v0.9h-0.9zM6.4 23.3h0.5v0.5h-0.5zM24.9 10.7h0.6v0.6h-0.6zM10.6 25.8h1v1h-1zM25.5 10.3h1.1v1.1h-1.1zM18.2 16.9h0.8v0.8h-0.8zM6 12.8h0.9v0.9h-0.9zM7.2 14.6h1v1h-1zM21.2 10.8h0.9v0.9h-0.9zM17.4 28.4h0.9v0.9h-0.9zM21.3 20.6h0.8v0.8h-0.8zM9.3 10h0.5v0.5h-0.5zM26 9.5h1v1h-1zM3.7 20.1h0.5v0.5h-0.5zM22.1 10.8h0.9v0.9h-0.9zM20.9 5.3h0.6v0.6h-0.6zM17.9 9.5h0.4v0.4h-0.4zM10 10.7h0.5v0.5h-0.5zM23.1 14.1h1.1v1.1h-1.1zM15.4 16h0.9v0.9h-0.9zM23.3 8.5h1v1h-1zM23.2 21.1h0.5v0.5h-0.5zM19.7 29.5h0.9v0.9h-0.9zM11.8 6.2h0.9v0.9h-0.9zM12 16.5h1.1v1.1h-1.1zM4.2 15.7h1.2v1.2h-1.2zM23.1 8.1h0.5v0.5h-0.5zM18.1 16.4h0.6v0.6h-0.6zM25.1 13.3h0.7v0.7h-0.7zM17.9 5h0.8v0.8h-0.8zM22.6 15h0.4v0.4h-0.4zM17.8 29.5h1v1h-1zM12 13.4h1.1v1.1h-1.1zM28 17.8h0.8v0.8h-0.8zM20.3 20.5h0.8v0.8h-0.8zM12.5 17h0.6v0.6h-0.6z" fill="#000" opacity="0.45"/><path d="M14.9 26l-3.5 2.5M6.7 18.2l1.6 1.9M20.7 9.7l-2.6 2M7.1 16.4l0.8 3.5M23.8 19.8l3.3 2.3M16.4 23l3.4 0.5M23.6 21.2l1.6 2.2M18.8 15.8l0.6 4.4M24.3 21.1l-4.1 0.6M19.2 13.6l-0.6 2.3M13.6 25.2l-4.1 0.1M11.6 20.8l0.8 1.9M19.4 21.4l-3.4 0.4M12.5 17.5l1.7 1.2M17.7 11.2l3.7 2M19.3 21.3l-0.9 3.2M19 16.3l0.7 4.9M17.4 23.1l3 0.4M20.5 11.7l1.7 3.7M9.7 19.3l2 1.8M14.6 24l-4.3 1.6M21.5 12.1l-1.4 2M16.8 20.3l2.5 1.4M15.9 21.6l1.3 1.9M18.1 19.8l2.1 0.8M13.7 11.4l2.5 0.7M25.5 16l4.4 0.5M23.7 17.2l-2.4 0.5M24.3 12.9l3.5 1.8M19.5 24.1l-3.5 0.5M21.4 16.8l-3.4 3.5M14.2 19.5l-1.9 2.8M13.3 9.8l3.7 2.6M15.8 17.8l0.1 2.9M19.9 20.6l-0.9 1.8M15.1 21.8l1.9 2M20 8.4l-0.3 3.9M11.7 20.4l-4.6 1.6M9.6 16.3l2.7 0.8M14.2 25.5l2 1.4" stroke="#000" stroke-width="0.4" fill="none" opacity="0.4" stroke-linecap="round"/><path d="M26 28.500h5M28.500 26v5" stroke="#000" stroke-width="1.100" fill="none"/></g><g transform="translate(172 206)" clip-path="url(#cc)"><rect width="32" height="32" fill="#fff"/><path d="M16.9 13.5l-0.6 4.4M16.2 13.5l1 7.8M8.9 15.1l1.1 4.6M17.9 14.7l-0.4 5.2M10.1 14.9l0.9 6.9M17.1 11.1l-0.2 4.5M16.2 11.5l0.9 6.9M16.3 20l-0.5 5.9M18.6 14.4l0 6.9M13.6 10.2l1.3 4.5M8.2 14.4l0.8 6.2M15.4 23l-0.1 4.6M22.7 19.2l-1.4 6.5M20 20.2l0.6 3M18.3 22.1l-1.1 5.5M15.1 11.7l1.4 3.7M16 10l1.1 3.7M22.6 11.2l-0.1 7.4M11.4 13.3l-1.1 6.7M18.2 20.7l0.1 4.6M19.3 20.5l1.5 4.4M12.3 22.2l1.3 6.2M14.8 14.1l0.5 7.5M18.8 14.2l1.3 4.5M15.5 18.3l-1 4.5M15 11.6l1.7 7.4" stroke="#000" stroke-width="0.4" fill="none" opacity="0.3" stroke-linecap="round"/><path d="M32 24.500V32H24.500z" fill="#ff8585"/><path d="M26 28.500h5M28.500 26v5" stroke="#000" stroke-width="1.100" fill="none"/></g><g transform="translate(206 206)" clip-path="url(#cc)"><rect width="32" height="32" fill="#fff"/><g filter="url(#bl09)"><ellipse cx="15" cy="17" rx="11" ry="9.500" fill="#000" opacity=".45"/></g><g filter="url(#bl05)"><path d="M15.8 13.2h0.6v0.6h-0.6zM18.1 11.8h0.9v0.9h-0.9zM12.9 19.5h1.8v1.8h-1.8zM14.2 25.9h1.8v1.8h-1.8zM9.9 9.3h0.8v0.8h-0.8zM21.8 18.8h1.7v1.7h-1.7zM24.4 19.8h1.2v1.2h-1.2zM21.1 20.1h1.5v1.5h-1.5zM16.3 20.1h1.4v1.4h-1.4zM14.9 13.6h1.6v1.6h-1.6zM22.5 12.5h0.7v0.7h-0.7zM9.9 13.7h1.5v1.5h-1.5zM13.2 21.5h1v1h-1zM15.5 11.4h1.4v1.4h-1.4zM15.3 23.5h1.7v1.7h-1.7zM15.4 9.2h1.7v1.7h-1.7zM23.9 16.5h1.2v1.2h-1.2zM23.7 12.6h0.9v0.9h-0.9zM18.9 20.1h1.4v1.4h-1.4zM21.6 17.2h1.1v1.1h-1.1zM9.5 11.8h1v1h-1zM13.6 21.3h1.3v1.3h-1.3zM15.2 14.8h1.4v1.4h-1.4zM12.6 22.4h1.4v1.4h-1.4zM18.9 14.7h1.2v1.2h-1.2zM15.6 13.8h1.4v1.4h-1.4zM7.4 14h0.6v0.6h-0.6zM16.1 12.6h1.1v1.1h-1.1zM20.8 19.4h0.6v0.6h-0.6zM13.9 8.1h1.6v1.6h-1.6zM14.9 23.3h0.9v0.9h-0.9zM21.5 10.5h1.6v1.6h-1.6zM12.8 9.3h1.7v1.7h-1.7zM21.7 11.5h1.3v1.3h-1.3zM14.5 10.6h1.1v1.1h-1.1zM24.5 14.9h1.5v1.5h-1.5zM20.2 21.8h1.3v1.3h-1.3zM23 14.2h1.2v1.2h-1.2zM14 9.8h1.2v1.2h-1.2zM20.2 18.3h0.8v0.8h-0.8zM9.9 16.7h0.7v0.7h-0.7zM9 21.3h0.7v0.7h-0.7zM15.4 8.4h1.4v1.4h-1.4zM16.3 21.7h1.5v1.5h-1.5zM19.5 17.3h1v1h-1zM17 10.7h0.9v0.9h-0.9zM19 18.8h0.8v0.8h-0.8zM13.9 18.8h0.9v0.9h-0.9zM18 10.6h0.8v0.8h-0.8zM13.3 13.2h1.5v1.5h-1.5zM13.3 13.2h1.6v1.6h-1.6zM21.7 21.9h0.7v0.7h-0.7zM10.4 9.8h1.5v1.5h-1.5zM14.3 9.7h1.7v1.7h-1.7zM23 16.2h1.6v1.6h-1.6zM16.8 10.5h1.2v1.2h-1.2zM20.5 14.3h1.2v1.2h-1.2zM11.4 22.2h1.2v1.2h-1.2zM14 9.1h1.5v1.5h-1.5zM8.5 18.9h0.6v0.6h-0.6zM7.2 19.3h0.9v0.9h-0.9zM16.9 20.4h1v1h-1zM15.7 15h0.7v0.7h-0.7zM21.9 17.6h1.6v1.6h-1.6zM17.8 19.3h0.7v0.7h-0.7zM17.4 15.8h0.9v0.9h-0.9zM6.4 19.9h1.1v1.1h-1.1zM7.6 18.2h1.7v1.7h-1.7zM17.4 19.1h1.2v1.2h-1.2zM12.5 16.4h1v1h-1zM12.8 11.3h1.4v1.4h-1.4zM12.5 12.2h0.9v0.9h-0.9zM7.9 17h1.6v1.6h-1.6zM19 19.3h1.5v1.5h-1.5zM17.2 22.8h1.3v1.3h-1.3zM15.6 23.8h1.6v1.6h-1.6zM5.6 17.4h0.7v0.7h-0.7zM9.5 12.6h1.6v1.6h-1.6zM21.3 22.4h1.7v1.7h-1.7zM22.5 11.3h1.8v1.8h-1.8zM11.9 20.7h1.5v1.5h-1.5zM9.6 24.5h1.3v1.3h-1.3zM18.9 14.7h1.5v1.5h-1.5zM9 14h1.4v1.4h-1.4zM22.4 18.2h1.3v1.3h-1.3zM6.4 16.6h0.8v0.8h-0.8zM10.9 15.2h1.2v1.2h-1.2zM11.5 20.8h0.7v0.7h-0.7zM14.5 25.7h1.3v1.3h-1.3zM16.5 18.3h0.7v0.7h-0.7zM17.7 15.5h0.8v0.8h-0.8zM10.9 15h1.2v1.2h-1.2zM14.5 16.2h0.6v0.6h-0.6zM11.4 12.6h0.8v0.8h-0.8zM13.5 9.5h0.8v0.8h-0.8zM10.3 13.4h1.1v1.1h-1.1zM12.2 20h1v1h-1zM13.3 10.3h1.8v1.8h-1.8zM20.8 19.6h1.6v1.6h-1.6zM20.7 16.2h1.1v1.1h-1.1zM16.2 19.6h1.1v1.1h-1.1zM24.4 16.8h1.1v1.1h-1.1zM20.5 17h1.1v1.1h-1.1zM12.1 21.2h0.9v0.9h-0.9zM20.2 13.7h0.7v0.7h-0.7zM7.1 15h1.4v1.4h-1.4zM23.1 17.9h0.7v0.7h-0.7zM13.7 11.3h1.7v1.7h-1.7zM13.1 10.2h0.7v0.7h-0.7zM12 11h1.2v1.2h-1.2zM15.6 19.9h1.1v1.1h-1.1zM12.7 16.5h1.2v1.2h-1.2zM6.7 21.2h1.5v1.5h-1.5zM23.8 21.2h0.6v0.6h-0.6zM13.7 24.5h1.5v1.5h-1.5zM11.6 22.9h1.4v1.4h-1.4zM6.7 17.1h1.5v1.5h-1.5zM21.9 22.1h1.5v1.5h-1.5zM9.5 16h0.9v0.9h-0.9zM12.6 14.4h0.9v0.9h-0.9zM19 13h1.8v1.8h-1.8zM6.3 13.6h0.6v0.6h-0.6zM13.8 20.1h1.6v1.6h-1.6zM17.3 8.5h1.2v1.2h-1.2zM23.6 19.7h0.8v0.8h-0.8zM24.1 19.8h0.9v0.9h-0.9zM18.8 21.4h1.6v1.6h-1.6zM23.9 19.7h1.7v1.7h-1.7zM9.1 10.7h1.3v1.3h-1.3zM20.7 22.4h1v1h-1zM23.6 19.2h0.7v0.7h-0.7zM22.5 18.4h1.1v1.1h-1.1zM20 10.5h1.1v1.1h-1.1zM11.2 24.9h1.8v1.8h-1.8zM14.8 20.7h1.1v1.1h-1.1zM10.9 18.9h1v1h-1zM23.4 20.9h1.6v1.6h-1.6zM21.8 23.5h0.6v0.6h-0.6zM12.4 13.8h0.7v0.7h-0.7zM18.1 19.3h1.6v1.6h-1.6zM10.5 23.9h1.2v1.2h-1.2zM21 22.4h0.8v0.8h-0.8zM17.6 20h1.8v1.8h-1.8zM18.5 19.2h1.6v1.6h-1.6zM12 25.3h0.7v0.7h-0.7zM18.8 12.1h1.7v1.7h-1.7zM17.5 16.5h1.3v1.3h-1.3zM17.6 8.4h1.2v1.2h-1.2zM22.2 17.9h0.8v0.8h-0.8zM8.2 17.5h1.2v1.2h-1.2zM10.4 21.5h1.1v1.1h-1.1zM5.6 14.5h1.1v1.1h-1.1zM10.6 11.5h0.9v0.9h-0.9zM20 23.5h1.1v1.1h-1.1zM17.6 9.5h1.3v1.3h-1.3zM7.5 11.2h0.7v0.7h-0.7zM9 23.5h0.8v0.8h-0.8zM17 12h1.8v1.8h-1.8zM6.9 19.6h1v1h-1zM12.8 22.7h1.4v1.4h-1.4zM20.4 16.9h1.1v1.1h-1.1zM20.3 22.2h0.6v0.6h-0.6zM7.8 14.2h0.9v0.9h-0.9zM8.9 22.7h1.7v1.7h-1.7zM18.8 10.5h1.6v1.6h-1.6zM20.5 15.2h0.6v0.6h-0.6zM15.4 20.3h1.1v1.1h-1.1zM20.5 20.6h0.7v0.7h-0.7zM18.4 24.6h1v1h-1zM20.3 16.4h1.5v1.5h-1.5zM5.9 17.3h1.6v1.6h-1.6zM16.6 22.2h1.3v1.3h-1.3zM8.4 23.7h1.5v1.5h-1.5zM20.1 10.7h1v1h-1zM17.9 20.7h1.7v1.7h-1.7zM11.8 9.2h1v1h-1zM9.6 23h1.4v1.4h-1.4zM16.7 20.4h0.9v0.9h-0.9zM20.8 16.5h1.8v1.8h-1.8zM17.8 18.1h0.6v0.6h-0.6zM14.6 9.9h1v1h-1zM11.2 12.1h1.4v1.4h-1.4zM13.1 24.4h1.5v1.5h-1.5zM12.9 12.9h1.1v1.1h-1.1zM18.4 21.5h1.6v1.6h-1.6zM22.5 22.4h0.9v0.9h-0.9zM14.5 18.2h1.4v1.4h-1.4zM15 9.3h1.4v1.4h-1.4zM10.1 11.5h0.6v0.6h-0.6zM14.9 10.1h1v1h-1zM16.9 17.3h1.8v1.8h-1.8zM13.4 17.2h0.8v0.8h-0.8zM18.5 19.7h0.9v0.9h-0.9zM21.1 16.9h1.1v1.1h-1.1zM14.9 14.2h1.2v1.2h-1.2zM9.6 13.6h0.6v0.6h-0.6zM7.2 18.4h1.6v1.6h-1.6zM18.4 24.8h1.5v1.5h-1.5zM11.5 19.7h1.6v1.6h-1.6zM11.9 20.8h0.7v0.7h-0.7zM17.1 10.5h0.6v0.6h-0.6zM9.3 17.2h0.9v0.9h-0.9zM18.6 8.9h0.7v0.7h-0.7zM14.3 14.7h0.7v0.7h-0.7zM8.2 10.7h0.9v0.9h-0.9zM15.6 11.5h1.2v1.2h-1.2zM16.9 8.3h1.6v1.6h-1.6zM11.4 13.4h0.8v0.8h-0.8zM17.2 11.7h1.5v1.5h-1.5zM16.8 19.1h1.3v1.3h-1.3zM23.6 13.3h1.1v1.1h-1.1zM9.7 13.1h0.9v0.9h-0.9zM23.7 14.8h1.2v1.2h-1.2zM6.5 15.4h0.8v0.8h-0.8zM14.7 15.5h0.8v0.8h-0.8zM19.1 20.1h0.7v0.7h-0.7zM12.4 13.8h1.2v1.2h-1.2zM23 21h1v1h-1zM19.1 18.4h1.8v1.8h-1.8zM24.1 20.6h1.1v1.1h-1.1z" fill="#000" opacity="0.55"/><path d="M13.4 18.2l4 2.7M10.8 16.4l6.2 3M8.5 13.2l5.5 4M20.5 11.3l5 4M9.8 18.4l4.8 4.9M10.5 17.3l5.7 3.7M16.5 7.3l3 3M8.4 13.3l5.9 3M13.1 8.5l5.6 1.7M19 15l3.3 2.5M21.5 11.3l4.9 2M13.1 10.3l2.9 1.9M16.6 10.1l5.5 2.8M22.1 15.7l6.1 3.1M16.5 14.7l5.4 3.3M12.2 9.3l3.7 2.1M18.1 10.4l3.8 4.1M20.4 16.4l5.9 2M7.4 12.8l3.6 3.7M21.5 14.1l3.3 3.2" stroke="#fff" stroke-width="0.6" fill="none" opacity="0.4" stroke-linecap="round"/></g><path d="M26 28.500h5M28.500 26v5" stroke="#000" stroke-width="1.100" fill="none"/></g><g transform="translate(2 240)" clip-path="url(#cc)"><rect width="32" height="32" fill="#fff"/><g filter="url(#bl08)"><circle cx="15.500" cy="16.500" r="11.500" fill="#000" opacity=".35"/></g><g filter="url(#bl05)"><path d="M13.1 20.5h0.7v0.7h-0.7zM7 10.6h1.4v1.4h-1.4zM7.7 21.8h1.3v1.3h-1.3zM7.5 17.3h1v1h-1zM25.2 14.4h0.8v0.8h-0.8zM11.8 13.5h1.6v1.6h-1.6zM9.1 10.3h1.2v1.2h-1.2zM16.5 26.5h1.4v1.4h-1.4zM12.3 10h1.4v1.4h-1.4zM20.7 24.6h1.3v1.3h-1.3zM9.3 23h1.3v1.3h-1.3zM8.8 19.6h0.8v0.8h-0.8zM5.4 12.9h0.9v0.9h-0.9zM13.2 19.7h1.4v1.4h-1.4zM11.2 9.4h1.2v1.2h-1.2zM16.5 20.3h0.7v0.7h-0.7zM17.7 20.8h0.7v0.7h-0.7zM13.3 25.5h1.2v1.2h-1.2zM14.5 23.1h1v1h-1zM21.9 17.9h0.7v0.7h-0.7zM7.1 9.8h0.9v0.9h-0.9zM20.2 24.3h1.1v1.1h-1.1zM15.5 22.8h0.9v0.9h-0.9zM12.7 19h1.2v1.2h-1.2zM7.5 21.5h1.3v1.3h-1.3zM10.1 22.3h1.6v1.6h-1.6zM12.8 11.7h0.8v0.8h-0.8zM18 10h0.8v0.8h-0.8zM22.6 12.1h0.8v0.8h-0.8zM14.5 20.8h1.1v1.1h-1.1zM23.4 14.3h1.1v1.1h-1.1zM20.3 15.7h1.3v1.3h-1.3zM14.8 8.4h0.7v0.7h-0.7zM21.7 21.9h1.5v1.5h-1.5zM19.7 18.3h0.8v0.8h-0.8zM13.8 8.6h1v1h-1zM11.3 14.9h1.3v1.3h-1.3zM16.4 10.8h1.4v1.4h-1.4zM20.7 23.7h0.6v0.6h-0.6zM18 25.2h0.9v0.9h-0.9zM8.9 23.4h1v1h-1zM13.3 23.5h1v1h-1zM8.9 10.2h0.9v0.9h-0.9zM19.9 13.6h1.4v1.4h-1.4zM18.2 16h1.1v1.1h-1.1zM25.1 11.6h0.8v0.8h-0.8zM5.2 16.1h0.9v0.9h-0.9zM14.9 5.6h0.6v0.6h-0.6zM12.9 22.2h0.9v0.9h-0.9zM24.6 18.2h1v1h-1zM21.6 10.6h1.2v1.2h-1.2zM23.1 17.4h0.9v0.9h-0.9zM6.6 18.1h0.8v0.8h-0.8zM12.7 17.4h1.5v1.5h-1.5zM19.3 16.9h1.5v1.5h-1.5zM11.3 14h1.3v1.3h-1.3zM16.7 10.4h1v1h-1zM22.6 10.8h1.3v1.3h-1.3zM19.5 12.6h1.6v1.6h-1.6zM10 16.3h1.6v1.6h-1.6zM11.4 6.5h1v1h-1zM16.3 15.2h0.7v0.7h-0.7zM14.2 16.1h1.1v1.1h-1.1zM19.6 25.3h1.4v1.4h-1.4zM20.5 13h0.8v0.8h-0.8zM5.8 18h1.5v1.5h-1.5zM11.6 14.1h1v1h-1zM25.3 20.6h1.4v1.4h-1.4zM14.4 14.3h1.4v1.4h-1.4zM20.7 25.5h1.3v1.3h-1.3zM24.5 14.9h1.2v1.2h-1.2zM21.8 15.5h0.7v0.7h-0.7zM17.4 24.7h1.5v1.5h-1.5zM7.3 13.9h0.8v0.8h-0.8zM12 26.6h1v1h-1zM11.4 11.5h1v1h-1zM19.2 13h0.8v0.8h-0.8zM9.5 11.2h1.5v1.5h-1.5zM8.2 22.1h0.7v0.7h-0.7zM21.8 11.4h1.4v1.4h-1.4zM14 7.2h0.7v0.7h-0.7zM22.1 17.4h1.1v1.1h-1.1zM12.2 20.7h1.1v1.1h-1.1zM5.9 18.7h0.9v0.9h-0.9zM23.1 17.6h1.4v1.4h-1.4zM7.1 21.1h1.2v1.2h-1.2zM16.6 18.5h1.4v1.4h-1.4zM10.3 17.5h1.4v1.4h-1.4zM17.6 17.4h1.5v1.5h-1.5zM6.1 19h0.7v0.7h-0.7zM25.8 15.9h1.1v1.1h-1.1zM22.5 24.6h0.7v0.7h-0.7zM14.5 9.5h1.1v1.1h-1.1zM12.3 14.1h1.5v1.5h-1.5zM22.6 12.9h1.1v1.1h-1.1zM19.1 9.6h0.7v0.7h-0.7zM23.4 9.1h1.3v1.3h-1.3zM20.7 18.5h0.9v0.9h-0.9zM23.4 22.8h0.7v0.7h-0.7zM24.2 19.5h0.9v0.9h-0.9zM22.4 24.2h0.9v0.9h-0.9zM13.6 12.1h0.7v0.7h-0.7zM11 23.6h0.7v0.7h-0.7zM13.4 16.8h0.8v0.8h-0.8zM23.5 21h1.5v1.5h-1.5zM11.7 11h1.5v1.5h-1.5zM17.8 25.8h1v1h-1zM13.6 21.3h1.5v1.5h-1.5zM8.1 11.3h0.6v0.6h-0.6zM16.8 25.8h1.2v1.2h-1.2zM7.8 20.7h1.2v1.2h-1.2zM19 16.3h0.9v0.9h-0.9zM8 15.8h1v1h-1zM9.6 19.7h1.3v1.3h-1.3zM14.8 21.3h1v1h-1zM14 18h1.6v1.6h-1.6zM5.4 15.7h0.9v0.9h-0.9zM14.9 7.3h1.2v1.2h-1.2zM17.4 20.5h1.4v1.4h-1.4zM14.7 17.6h1.4v1.4h-1.4zM25.3 11.7h1.6v1.6h-1.6zM10.6 15.5h0.8v0.8h-0.8zM17.8 14.1h1.3v1.3h-1.3zM19 18.7h0.9v0.9h-0.9zM19.8 19.3h0.7v0.7h-0.7zM24.3 14.3h1.1v1.1h-1.1zM16.7 15.3h1.6v1.6h-1.6zM14.8 20.4h1.4v1.4h-1.4zM12 26.4h1.2v1.2h-1.2zM12.7 24.9h0.7v0.7h-0.7zM10.1 7h1.3v1.3h-1.3zM15.2 12.2h1v1h-1zM10.1 21.1h1.4v1.4h-1.4zM12.9 24.6h0.6v0.6h-0.6zM16.9 8.9h0.7v0.7h-0.7zM16.8 7.4h0.7v0.7h-0.7zM7.5 13.8h1.4v1.4h-1.4zM10.9 8.2h1.4v1.4h-1.4zM14 27.3h1.1v1.1h-1.1zM23.9 10.4h1.1v1.1h-1.1zM19.6 10.5h1.1v1.1h-1.1zM22.6 23.4h1.3v1.3h-1.3zM17.8 11h0.8v0.8h-0.8zM17.1 18.8h1.5v1.5h-1.5zM19.7 14.1h1.2v1.2h-1.2zM6.3 11.1h0.9v0.9h-0.9zM22 20.1h1.2v1.2h-1.2zM13.2 13.2h1v1h-1zM5.6 13.4h1.5v1.5h-1.5zM22.4 11h1.1v1.1h-1.1zM20.9 9.9h1v1h-1zM17.4 9.6h1.5v1.5h-1.5zM19.2 14.2h0.9v0.9h-0.9zM23.6 21.2h0.8v0.8h-0.8zM11.5 7.5h1.2v1.2h-1.2zM13.8 12.5h1.3v1.3h-1.3zM10.1 8.6h1.4v1.4h-1.4zM24 23.3h1.2v1.2h-1.2zM20.3 24.5h0.6v0.6h-0.6zM11.1 13.3h1.3v1.3h-1.3zM11.9 22.3h0.9v0.9h-0.9zM25.3 15.1h1.2v1.2h-1.2zM18.3 23.6h1.2v1.2h-1.2zM9.2 15.2h1.2v1.2h-1.2zM11.3 25.8h1v1h-1zM13.1 20.9h0.6v0.6h-0.6zM6.4 18.3h0.9v0.9h-0.9zM13.5 21h1.1v1.1h-1.1zM18 21.8h1.4v1.4h-1.4zM20.8 10.5h0.7v0.7h-0.7zM15.2 11.6h0.8v0.8h-0.8zM25.9 17.5h0.8v0.8h-0.8zM24.5 14.7h1.6v1.6h-1.6zM15.7 11.1h0.8v0.8h-0.8zM11.7 21.5h1.4v1.4h-1.4zM13.4 16.7h1.3v1.3h-1.3zM18.6 13.5h0.8v0.8h-0.8zM18.5 19.6h1.4v1.4h-1.4zM14.2 21.6h1.2v1.2h-1.2zM23.2 17.6h1.3v1.3h-1.3zM17.7 10h0.7v0.7h-0.7zM22.5 20.7h1.1v1.1h-1.1zM20.6 16.6h0.7v0.7h-0.7zM8.7 22.6h1.1v1.1h-1.1zM5.5 16.4h1.6v1.6h-1.6zM21.8 12.1h1.1v1.1h-1.1zM12.6 10.6h1.3v1.3h-1.3zM5 15.9h1.5v1.5h-1.5zM21.1 19.9h1.4v1.4h-1.4zM15.4 8.5h1.1v1.1h-1.1zM15.4 27.4h0.8v0.8h-0.8zM20.3 22.2h1.2v1.2h-1.2zM10.8 25.4h0.9v0.9h-0.9zM16.2 6.6h0.9v0.9h-0.9zM12.3 18.1h1.4v1.4h-1.4zM6.9 21.2h0.6v0.6h-0.6zM12.3 25.9h1.5v1.5h-1.5zM5.7 14h1.5v1.5h-1.5zM8.4 15.6h0.9v0.9h-0.9zM11 16.3h0.7v0.7h-0.7zM21.3 18.6h0.7v0.7h-0.7zM7.4 19.2h1.2v1.2h-1.2zM12.8 11.4h1.2v1.2h-1.2zM24.6 13.2h1.1v1.1h-1.1zM5.6 15.8h1.5v1.5h-1.5zM25.2 13.2h1.5v1.5h-1.5zM23.3 11.7h1.6v1.6h-1.6zM13.5 20.6h1.3v1.3h-1.3zM17.3 6.6h1.3v1.3h-1.3zM22.2 19.6h1.5v1.5h-1.5zM25.7 19.6h1v1h-1zM15.7 9.5h0.8v0.8h-0.8zM26 15.2h1.1v1.1h-1.1zM24 23h0.6v0.6h-0.6zM13.6 17.2h0.8v0.8h-0.8zM21.3 19.1h1.4v1.4h-1.4zM7.5 9.6h0.9v0.9h-0.9zM15.9 11.1h1.1v1.1h-1.1zM12.1 6.9h1.4v1.4h-1.4zM16.4 25.3h1.1v1.1h-1.1zM23.4 18.9h1.1v1.1h-1.1zM25.2 13.4h1.6v1.6h-1.6zM17.4 26.4h0.7v0.7h-0.7zM16.4 12.4h1.4v1.4h-1.4zM13 7.1h1.6v1.6h-1.6zM9 23.7h1.2v1.2h-1.2zM20.6 21.1h0.8v0.8h-0.8zM13 14h1.3v1.3h-1.3zM16.3 13.2h0.7v0.7h-0.7zM14.2 18.6h1.3v1.3h-1.3zM18.5 22.8h1.5v1.5h-1.5zM7.5 21.5h1v1h-1zM17.5 20.5h1v1h-1zM17.8 26.8h0.6v0.6h-0.6zM23.8 11h1.4v1.4h-1.4zM24.6 14.5h1.1v1.1h-1.1zM8.6 20.9h1.6v1.6h-1.6zM14 26.1h1.5v1.5h-1.5zM13.8 13.7h0.9v0.9h-0.9zM11.6 18.1h1v1h-1zM17.8 15h1.6v1.6h-1.6zM20.5 13.9h1.3v1.3h-1.3zM9.9 23.4h1.2v1.2h-1.2zM9.6 10.1h1v1h-1zM12.1 20.1h1.1v1.1h-1.1zM5.2 12.7h1.1v1.1h-1.1zM18.1 26.7h0.8v0.8h-0.8zM9 8.8h0.9v0.9h-0.9zM10.7 17.4h1.5v1.5h-1.5zM12.3 12.6h1.1v1.1h-1.1zM25.4 16.6h1.6v1.6h-1.6zM11.3 17.6h1.2v1.2h-1.2zM20.3 23.9h0.7v0.7h-0.7zM9 7.8h1.4v1.4h-1.4zM15.4 16.4h0.6v0.6h-0.6zM15.1 8.1h0.6v0.6h-0.6zM19.9 23.1h1v1h-1zM8.6 12.9h0.9v0.9h-0.9zM24.3 16.6h1v1h-1zM22.4 15h0.9v0.9h-0.9z" fill="#000" opacity="0.6"/><path d="M18.8 15.6l4.7 0.2M15.6 18.3l4.2 0.6M12.7 20.4l5.5 2.1M17.4 15.9l4.6 2.6M16.3 15.6l6.6 1.2M18.3 22.1l3.4 0.5M18.4 18.3l3.2 1.2M11.6 20.9l4.8 0.2M17.8 19.1l3.4 0M15.9 15l4.5 1.9M16.4 15.9l6.6 1.2M13.1 16l5.4 2.8M15.8 21.7l5 0.3M11 18.7l4.2 0.2M16.5 18.4l4.7 3.2M16.6 20.4l5.4 3.4" stroke="#fff" stroke-width="0.9" fill="none" opacity="0.7" stroke-linecap="round"/></g><path d="M26 28.500h5M28.500 26v5" stroke="#000" stroke-width="1.100" fill="none"/></g><g transform="translate(36 240)" clip-path="url(#cc)"><rect width="32" height="32" fill="#fff"/><g filter="url(#bl03)"><path d="M10.3 19.3l1.8 7.3M5.5 17.3l2 5.2M10.5 9.9l-1.1 7.3M8.9 17.2l-0.1 3.6M12.6 17.7l-0.6 7.2M10.4 15.6l1.3 3.4M10.1 16.5l1 2.9M9.6 17.6l0.8 3.7M7.1 32l2.2 6.7M8.8 7.9l0.5 6.8M7.6 14.4l0.9 4.1M3.7 29.1l0.5 3.3M5 18.9l1 6.4M9.7 18.4l0.1 3.2M8.3 23.5l1 3M14.4 17.7l0.1 7.8M3.5 17.9l-0.6 6.1M6.4 15.7l1.4 4.7M8.8 12.5l-0.5 5.5M5.8 9.1l0.1 3.7M9 17.3l3.1 7.1M4.2 6.8l-0.2 4.6M13.9 13.8l0.5 3.4M8.4 20.8l0.7 3.3M7.6 -2l2 6.6M6.8 12.9l-0.6 4.8M9.3 15.3l-0.6 3.9M13.5 17.3l-0.1 6.4M9.2 10.2l1.6 4.3M15 11.3l1.5 5M4.5 21.6l2.9 6.5M8.9 25.8l1.2 3.2M10.9 11.5l-1.2 7.2M9 14.2l0.5 7.9" stroke="#000" stroke-width="1.5" fill="none" opacity="0.85" stroke-linecap="round"/><path d="M18.8 19.6l-1.1 5.1M25.8 11.6l-2.2 4.8M19.5 5.7l-0.5 4.1M19.5 0.9l-3.4 6.8M19.6 15.1l-1.8 7.6M12.4 17.2l-0.1 7.8M17.4 -5.7l-1.7 4.4M19 27.3l-3.1 6.5M21.2 30.7l-0.7 5.7M22.9 11l0 4.4M16.9 13.5l-2.2 7.2M19.5 8.2l-0.2 3.7M22.2 28.9l-0.4 3.4M20.6 15.5l-1.1 3M21.7 20.6l-2.1 4.9M23.7 -0.1l-1.5 7.5M16.8 16.7l-1.2 4.9M18.4 23.3l-1.5 3.5M17.8 16.7l-1.7 6M16.2 12.2l0.3 5.9M16.7 24.4l-2.3 7.3M21.7 9.9l-1.5 3.7M22 22.1l-1.7 4.2M17.6 24.6l0.8 7.4M13.6 24l-0.3 4.7M18.1 25.4l-2.2 7.2M16.4 2.1l0.4 6.6M20.4 10.5l-2.6 7.4M17.7 8.8l-0.6 7.3M15 23.6l-2.3 7.4M19.8 10.6l0.2 4.5M20.2 18.3l0.7 6.8M21.4 23l0.1 7.7M17.9 13l-1.2 4.7" stroke="#000" stroke-width="1.3" fill="none" opacity="0.8" stroke-linecap="round"/></g><path d="M32 24.500V32H24.500z" fill="#ff8585"/><path d="M26 28.500h5M28.500 26v5" stroke="#000" stroke-width="1.100" fill="none"/></g><g transform="translate(70 240)" clip-path="url(#cc)"><rect width="32" height="32" fill="#fff"/><path d="M17.3 19.1l-0.5 4.4M18.7 23.3l-0.7 3.9M18.7 18.9l0.5 7.8M16.5 16.1l-1.2 6.1M12.4 13.9l0.2 3.3M17.9 20.8l0.8 7.2M23.7 17.9l-0.1 3.6M12.1 12.4l-1.1 6.7M9.2 14.1l1 4.3M7.1 17.4l0.9 4.9M20.5 18l1.1 3.6M9.2 14.1l1.4 4.1M10.7 12.1l-0.1 5.3M15.5 14.7l0.3 6.9M12.5 10.1l0.4 4.9M21 10.8l-0.5 3M16.8 16.1l1.3 7.3M19.6 11.6l0.4 6M17.8 20.7l0.5 5.1M16.1 13.2l-1.2 7.7M15.7 9.3l0.9 7M12.8 10.7l1.7 6.3M18.2 13.6l-0 6.8M14.8 22l-1.3 7.2M20.5 18.4l0.5 7.2M18.3 20.5l0.8 3.4" stroke="#000" stroke-width="0.4" fill="none" opacity="0.3" stroke-linecap="round"/><path d="M32 24.500V32H24.500z" fill="#ff8585"/><path d="M26 28.500h5M28.500 26v5" stroke="#000" stroke-width="1.100" fill="none"/></g><g transform="translate(104 240)" clip-path="url(#cc)"><rect width="32" height="32" fill="#fff"/><g filter="url(#bl07)"><path d="M6 13C8 6 20 5 25 10c4 4 3 12-2 15-5 3-13 2-16-2-2-3-2-7-1-10z" fill="#000" opacity=".45"/></g><path d="M16 17.6h1.3v1.3h-1.3zM12.9 24.5h0.9v0.9h-0.9zM11.8 8.3h1v1h-1zM8.9 11.7h1v1h-1zM20.8 20.8h0.6v0.6h-0.6zM16.5 22.4h1.2v1.2h-1.2zM23.7 17.7h1.1v1.1h-1.1zM11.5 12.5h0.7v0.7h-0.7zM16.2 18h1v1h-1zM13.4 14.6h0.7v0.7h-0.7zM21.5 17.5h1.2v1.2h-1.2zM21.4 11.8h0.6v0.6h-0.6zM11.4 23.7h1.2v1.2h-1.2zM13.7 21.3h0.8v0.8h-0.8zM14 15.3h0.6v0.6h-0.6zM11.2 10.9h0.8v0.8h-0.8zM7.3 12.2h0.6v0.6h-0.6zM16 14.2h0.7v0.7h-0.7zM23.9 12.4h1v1h-1zM23 20.9h1.4v1.4h-1.4zM17.6 23h0.6v0.6h-0.6zM19.9 12.9h0.8v0.8h-0.8zM20.6 20.6h0.8v0.8h-0.8zM12.9 11.8h1.3v1.3h-1.3zM17.7 11.4h1v1h-1zM7.1 11.6h1v1h-1zM16.4 21h0.7v0.7h-0.7zM8.8 15.3h1v1h-1zM21.1 11.6h1.2v1.2h-1.2zM19.4 22.8h1.2v1.2h-1.2zM22.4 18h1v1h-1zM14.8 14.2h0.9v0.9h-0.9zM15.4 13.9h0.6v0.6h-0.6zM13.6 24.5h0.8v0.8h-0.8zM14.6 10.6h1.3v1.3h-1.3zM24.1 12.4h1.1v1.1h-1.1zM20.3 18.3h0.6v0.6h-0.6zM10.5 20.2h1.1v1.1h-1.1zM18.8 11.8h1.3v1.3h-1.3zM20.8 15.7h1.3v1.3h-1.3zM11.7 16.6h1v1h-1zM12.5 21.3h0.8v0.8h-0.8zM19 7.2h0.8v0.8h-0.8zM9.3 16.1h0.5v0.5h-0.5zM22.4 17.9h1.3v1.3h-1.3zM23.9 17.3h1.3v1.3h-1.3zM14.3 18.1h0.7v0.7h-0.7zM14.5 8.3h0.9v0.9h-0.9zM24.8 16.6h1.1v1.1h-1.1zM13.7 21.2h0.8v0.8h-0.8zM8.1 15.2h0.7v0.7h-0.7zM10.3 10.3h1.1v1.1h-1.1zM18.9 10.7h1.1v1.1h-1.1zM10.4 16.2h0.8v0.8h-0.8zM22.2 14.9h0.7v0.7h-0.7zM22.3 17.6h0.7v0.7h-0.7zM19.6 23.5h1.2v1.2h-1.2zM21.1 13.2h0.7v0.7h-0.7zM10.4 13.5h1.2v1.2h-1.2zM16.7 9.7h1.2v1.2h-1.2zM18.7 7.7h0.9v0.9h-0.9zM19.5 11.7h0.8v0.8h-0.8zM10.8 8.8h0.9v0.9h-0.9zM14.5 11.7h0.6v0.6h-0.6zM8.4 20.9h1v1h-1zM21.2 8.6h1.4v1.4h-1.4zM19.1 17.5h1.2v1.2h-1.2zM7.4 18.1h0.8v0.8h-0.8zM11.2 22.6h0.6v0.6h-0.6zM15.1 25.1h1v1h-1zM17.8 16.3h1v1h-1zM13.6 11.5h0.8v0.8h-0.8zM21.9 12.7h1.1v1.1h-1.1zM18.3 16.7h0.6v0.6h-0.6zM7.4 12.2h0.9v0.9h-0.9zM15.3 6.8h1v1h-1zM12.7 14h0.6v0.6h-0.6zM20.8 21.7h1.2v1.2h-1.2zM24.2 18.2h1.4v1.4h-1.4zM13.8 21.6h0.6v0.6h-0.6zM7.5 19.5h1.1v1.1h-1.1zM12.8 16.7h1.1v1.1h-1.1zM14.8 11.6h1.4v1.4h-1.4zM9.5 16.6h0.7v0.7h-0.7zM14.1 10.3h0.7v0.7h-0.7zM20.1 20.7h1.1v1.1h-1.1zM16 23.2h1.1v1.1h-1.1zM20.8 11.2h1.3v1.3h-1.3zM19.2 8.8h0.5v0.5h-0.5zM12.9 18.9h0.8v0.8h-0.8zM13.2 20.8h0.7v0.7h-0.7zM6.7 14.6h0.8v0.8h-0.8zM18.4 8.5h1.3v1.3h-1.3zM15.8 10.5h0.5v0.5h-0.5zM18.9 24.4h0.8v0.8h-0.8zM21.6 16.4h1.1v1.1h-1.1zM12.2 15.9h0.7v0.7h-0.7zM21.1 11.3h1.3v1.3h-1.3zM19.9 10.7h0.6v0.6h-0.6zM18.9 13.1h1.1v1.1h-1.1zM22.5 12h0.6v0.6h-0.6zM17 19.8h1v1h-1zM6.4 15.2h1.1v1.1h-1.1zM23.4 11.7h0.8v0.8h-0.8zM12.9 20.2h0.8v0.8h-0.8zM20.8 16.9h1.1v1.1h-1.1zM15 15h0.9v0.9h-0.9zM20.2 21.2h1.3v1.3h-1.3zM15.6 6.5h1.1v1.1h-1.1zM21.3 10.9h0.9v0.9h-0.9zM10.7 16.3h0.8v0.8h-0.8zM12.3 18.4h1.2v1.2h-1.2zM24.6 13.3h0.9v0.9h-0.9zM14.1 12.4h0.9v0.9h-0.9zM24.4 14h0.8v0.8h-0.8zM9.4 17.7h0.8v0.8h-0.8zM7.4 12.1h1.2v1.2h-1.2zM19.2 18.2h0.8v0.8h-0.8zM22 15.3h0.8v0.8h-0.8zM11.1 14h0.9v0.9h-0.9zM12.3 15.1h0.9v0.9h-0.9zM12.8 10.3h0.7v0.7h-0.7zM14.3 25.3h0.5v0.5h-0.5zM24.4 15.9h0.5v0.5h-0.5zM14.2 11.8h0.5v0.5h-0.5zM21.5 19.7h1.4v1.4h-1.4zM12.8 24.7h1.3v1.3h-1.3zM17.6 17.2h0.7v0.7h-0.7zM19.5 16.3h1.1v1.1h-1.1zM9.3 10.1h1.1v1.1h-1.1zM13.6 17.6h1.3v1.3h-1.3zM11.5 16h1.2v1.2h-1.2zM17.1 15h1.3v1.3h-1.3zM18.4 19.7h1.3v1.3h-1.3zM14.1 8.6h1.1v1.1h-1.1zM19.1 9.1h0.6v0.6h-0.6zM8.8 20.2h1.4v1.4h-1.4zM20.1 18.4h1.2v1.2h-1.2zM12.9 9.7h1.2v1.2h-1.2zM12.1 18.7h0.9v0.9h-0.9zM15.8 10.7h0.7v0.7h-0.7zM13.7 23.6h0.5v0.5h-0.5zM15.3 10.1h0.7v0.7h-0.7zM21.6 14h0.7v0.7h-0.7zM14.6 20.6h1.1v1.1h-1.1zM18.1 18.8h1.3v1.3h-1.3zM19.8 8.5h1v1h-1zM17.3 20.4h0.8v0.8h-0.8zM13.8 24h0.9v0.9h-0.9zM22.9 21.4h0.7v0.7h-0.7zM15.7 14h1.3v1.3h-1.3zM22 13.5h0.9v0.9h-0.9zM18 20.2h0.6v0.6h-0.6zM23.9 15.1h1.3v1.3h-1.3zM9.2 20h0.5v0.5h-0.5zM22.7 15.6h0.8v0.8h-0.8zM7.6 13.9h1v1h-1zM17.7 24.1h1.3v1.3h-1.3zM16.8 18h1.3v1.3h-1.3zM23.7 19.1h1.3v1.3h-1.3zM17.4 15.2h0.7v0.7h-0.7zM18.1 23.8h1.1v1.1h-1.1zM16.7 21.3h1.2v1.2h-1.2zM19.2 23.6h0.9v0.9h-0.9zM12 20h0.9v0.9h-0.9zM23.4 16.2h0.7v0.7h-0.7zM7.8 12.8h1.1v1.1h-1.1zM20.4 22.4h0.8v0.8h-0.8zM17.2 19h0.6v0.6h-0.6zM11.4 17.5h1.3v1.3h-1.3zM22.5 14.3h1.1v1.1h-1.1zM8.3 20.5h1.2v1.2h-1.2zM17.1 17.2h1.1v1.1h-1.1zM7.8 19h0.9v0.9h-0.9zM21.2 10.8h1.4v1.4h-1.4zM12.4 11.4h0.7v0.7h-0.7zM11.2 23.6h0.5v0.5h-0.5zM15.3 15.5h0.7v0.7h-0.7zM11.6 9.6h1v1h-1zM23 20h0.8v0.8h-0.8zM13.6 10h1.1v1.1h-1.1zM13.7 20.8h0.5v0.5h-0.5zM11.7 16.3h0.8v0.8h-0.8zM10.1 23.4h1.4v1.4h-1.4zM16.7 18.8h1.4v1.4h-1.4zM10.5 15.4h0.5v0.5h-0.5zM18.9 13.2h0.7v0.7h-0.7zM20.8 20.9h1.2v1.2h-1.2zM17.4 20h0.6v0.6h-0.6zM16.1 13.4h1.1v1.1h-1.1zM9.4 10.7h0.6v0.6h-0.6zM6.4 16.3h0.9v0.9h-0.9zM10.8 24.2h1.1v1.1h-1.1zM23.1 18.1h1.3v1.3h-1.3zM11.8 12.6h0.6v0.6h-0.6zM21.7 17.3h1.4v1.4h-1.4zM20.1 17.8h1.3v1.3h-1.3zM9.6 22.9h1v1h-1zM16.3 10.1h1.1v1.1h-1.1zM12.9 18.1h0.7v0.7h-0.7z" fill="#000" opacity="0.35"/><path d="M32 24.500V32H24.500z" fill="#ff8585"/><path d="M26 28.500h5M28.500 26v5" stroke="#000" stroke-width="1.100" fill="none"/></g><g transform="translate(138 240)" clip-path="url(#cc)"><rect width="32" height="32" fill="#fff"/><g filter="url(#bl05)"><g fill="#000" opacity=".55"><polygon points="20.4,3.8 19.7,13.5 29,16.5 19.5,18.8 19.6,28.5 14.5,20.2 5.2,23.3 11.5,15.8 5.8,8 14.8,11.7"/><polygon points="23.7,9.6 20,15.7 24.5,21.3 17.5,19.7 13.6,25.7 12.9,18.6 6,16.7 12.6,13.9 12.3,6.7 17,12.1"/></g></g><circle cx="16" cy="16" r="3" fill="#fff" opacity=".35"/><path d="M32 24.500V32H24.500z" fill="#ff8585"/><path d="M26 28.500h5M28.500 26v5" stroke="#000" stroke-width="1.100" fill="none"/></g><g transform="translate(172 240)" clip-path="url(#cc)"><rect width="32" height="32" fill="#fff"/><g filter="url(#bl07)"><path d="M3.500 22C3 12 9 6 16 6s13 6 12.500 16c-4 4-21 4-25 0z" fill="#000" opacity=".3"/></g><path d="M17.1 20.5l0.1 4.6M17.5 20.5l0.1 4.8M10.8 13.6l0.2 3.8M21.8 13.6l-0.2 2M21.1 13.7l1.8 3.6M12 9.8l0.8 2.1M25.4 16.8l-0.1 4.9M15.9 14.1l0.7 2.7M18.2 24.4l0.7 4.2M19.9 16.9l1.3 2.9M24.1 15l0.2 2.8M17.9 10.9l-0 4.4M8.5 9.3l-0.2 3.8M4.7 15.4l-0.1 2.5M21.8 12.3l0.7 3.1M5.7 14l0.6 3.8M16.9 10.1l0.3 2.9M22.4 8.5l0.4 3M15.1 19.4l-0 2M24.8 18.7l1.6 3.8M23.1 13.7l-0.1 2.5M15 11.4l-0.1 2.9M14 15.4l0.1 2.5M23.1 19.4l0.8 4.3M26.6 16.4l0 4M10.1 9.6l0.6 2.7M9.8 16.8l0.5 3.1M22 9.7l0.7 3.3M18.5 22.6l0.2 2M18.2 13.4l0.8 3.6M9.6 21.3l0.8 3M17 7.9l1.4 4.8M7.3 14l0 3.4M18.7 22.3l-0.1 3.3M21.6 9.5l0.5 2.3M21.7 15.3l1.5 3.5M6.6 13.3l1.3 4.1M18.3 10.9l0.9 3.2M23.6 13.3l0 2.2M7.3 21l0.5 2.1M9.1 14.6l1.3 2.9M12.7 12.7l1.8 4.5M10.9 10.5l0.5 2.2M15.4 10.2l0.4 2.4M24.5 16.1l0.2 2.7M16.1 7l1.7 4.5M11.3 10.3l-0 2.9M17.3 16.4l0.4 2.1M20.3 12.9l-0.2 4.9M13 22.5l-0.3 2.5M11.2 23.3l-0.1 2.6M9.4 22.5l1 2.3M8.4 12l0.5 2.4M15.4 15.4l1.4 4.8M18.6 15.7l1.6 3.9M12.3 23.4l1.4 3.4M22.2 18.1l-0.5 4.9M20.7 8.3l-0.3 3.5M12.9 12.6l1.2 2.3M9 11.5l-0 2.4M10.3 17.6l1.7 4M4.6 15.3l0.8 2M19.6 16.6l0.5 2.9M13 8.7l1.5 3.1M20.3 11.6l0.6 3.5M13.6 11l0.4 3M14.6 21.2l0.5 4.3M22.3 17.8l1.6 4.3M16.1 21.8l1.6 3.6M18 22.1l0.1 4.4M17.1 23.8l0.1 2.5M9.5 12.5l-0.1 3.8M17.2 11.5l0.7 4.5M19.8 15.4l0 2.8M6.8 20.6l0.8 1.9M23.2 16.2l1.3 2.7M8.2 16.4l1 4.5M4.9 17l0.1 2.4M18.5 20l-0.2 5M13.7 11.8l1.2 2.9M17.8 18l0.2 2.1M23.3 22.1l1.6 4.3M8.3 14.3l0.9 4.9M16.6 7.4l-0.5 4.6M8.8 16.2l0.8 2.2M18.4 23.6l0.6 2.7M24.3 19.6l0.3 2.3M19 22l-0.1 4.2M11.6 8.4l0.3 3.6M22 20.4l1.7 3.3" stroke="#000" stroke-width="0.5" fill="none" opacity="0.55" stroke-linecap="round"/><path d="M32 24.500V32H24.500z" fill="#ff8585"/><path d="M26 28.500h5M28.500 26v5" stroke="#000" stroke-width="1.100" fill="none"/></g><g transform="translate(206 240)" clip-path="url(#cc)"><rect width="32" height="32" fill="#fff"/><g fill="#5fa83a"><ellipse cx="6" cy="10" rx="3" ry="2" transform="rotate(35 6 10)"/><ellipse cx="10.500" cy="14" rx="2.600" ry="1.800" transform="rotate(50 10.500 14)"/><ellipse cx="16" cy="13" rx="2.800" ry="2" transform="rotate(20 16 13)"/><ellipse cx="21" cy="17.500" rx="3" ry="2" transform="rotate(60 21 17.500)"/><ellipse cx="25.500" cy="19" rx="2.400" ry="2" transform="rotate(30 25.500 19)"/><ellipse cx="23" cy="23" rx="2.200" ry="1.500" transform="rotate(70 23 23)"/></g><path d="M3 8c6 4 14 6 22 14" stroke="#6a7f3a" stroke-width=".6" fill="none"/><path d="M32 24.500V32H24.500z" fill="#ff8585"/><path d="M26 28.500h5M28.500 26v5" stroke="#000" stroke-width="1.100" fill="none"/></g><g transform="translate(2 274)" clip-path="url(#cc)"><rect width="32" height="32" fill="#fff"/><path d="M3 15C4 11 6 9.500 6.800 6.900c1.500 2 3 3 5.200 3 5-.5 10-3 14.400-6.700 .5 6-.5 12-3.400 16-3 3.500-8 4.800-12 4.200C7 22.800 3.500 19.500 3 15z" fill="#857b6c"/><path d="M6 20c4 3 10 3.500 15 0-3 4-11 5-15 0z" fill="#5d5548"/><ellipse cx="10" cy="12" rx="2.700" ry="2.900" fill="#fff"/><ellipse cx="15.700" cy="11.400" rx="3.300" ry="3.500" fill="#fff"/><circle cx="10.800" cy="12.500" r="1.200"/><circle cx="16.800" cy="12.200" r="1.400"/><ellipse cx="3.900" cy="14.500" rx="3.200" ry="2.500" fill="#111" transform="rotate(30 3.900 14.500)"/><path d="M19.500 19.600l6 4.600" stroke="#d99a5b" stroke-width="1.600"/><path d="M25 23.800l3 2.400" stroke="#ddd" stroke-width="2"/><path d="M32 24.500V32H24.500z" fill="#ff8585"/><path d="M26 28.500h5M28.500 26v5" stroke="#000" stroke-width="1.100" fill="none"/></g><g transform="translate(36 274)" clip-path="url(#cc)"><rect width="32" height="32" fill="#fff"/><path d="M15.500 .6c1 2.500 1.300 5 1.300 7.400l2.200-.8" stroke="#5a9a48" stroke-width="2.200" fill="none"/><path d="M4.400 13.500C4.400 8.500 8.500 6.500 12 8c2-1.500 5.500-1.500 7.500 0 3.500-1.500 10.200 .5 10.200 5.500 0 5.500-1.500 11.500-3.700 15-2 2.500-6 3-9 2.500-3 .5-7-.5-9-3C5.800 24.500 4.400 18.500 4.400 13.500z" fill="#74b85c"/><path d="M7 15c0 6 1 10 3 14M14.500 9.500c-1 6 0 14 1 21M22 10.500c1 5 0 13-2 17" stroke="#4f9540" stroke-width="1.300" fill="none" opacity=".7"/><path d="M7.500 22c1 4.500 3.500 8 8 9 4 0 8-2.500 9.500-7-2.500 4-6 5.500-10 4.500-3-1-6-3-7.500-6.500z" fill="#8a5a3a" opacity=".75"/><path d="M13 10c.5 2 1.500 3.500 3 4" stroke="#8a5a3a" stroke-width="1" fill="none" opacity=".8"/><ellipse cx="24" cy="14.500" rx="1.600" ry="3" fill="#d6f2c6" opacity=".85"/><ellipse cx="9.500" cy="11.500" rx="1.300" ry="2" fill="#d6f2c6" opacity=".7"/><path d="M26 28.500h5M28.500 26v5" stroke="#000" stroke-width="1.100" fill="none"/></g><rect x="1.500" y="35.500" width="33" height="33" rx="3.500" fill="none" stroke="#f4f4f4" stroke-width="1"/></svg>
<div class="f" style="left:697px;top:449px;width:250px;height:23px;"></div>
<svg style="position:absolute;left:922px;top:455px" width="14" height="8" viewBox="0 0 14 8" fill="#dedede" stroke="none" color="#dedede" ><path d="M1.100 1.100l5.900 5.800 5.900-5.800" fill="none" stroke="currentColor" stroke-width="2.300" stroke-linecap="round" stroke-linejoin="round"/></svg>
<div class="f" style="left:697px;top:474px;width:250px;height:26px;overflow:hidden"><div style="left:0;top:0;height:24px;width:0px;background:#696969"></div><div class="btn" style="right:21px;top:0;width:21px;height:24px"></div><div class="btn" style="right:0;top:0;width:21px;height:24px"></div></div>
<div class="t" style="left:704px;top:478px;color:#dddddd">间距</div>
<div class="t" style="right:46px;top:477px;color:#dddddd">1.0</div>
<svg style="position:absolute;left:904px;top:474px" width="43" height="26" viewBox="0 0 43 26"><rect x="4.0" y="11.9" width="14" height="2.3" rx="1.1" fill="#787878"/><rect x="25.0" y="11.9" width="14" height="2.3" rx="1.1" fill="#dedede"/><rect x="30.85" y="6" width="2.3" height="14" rx="1.1" fill="#dedede"/></svg>
<svg style="position:absolute;left:708px;top:508px" width="16" height="16" viewBox="0 0 16 16" fill="#dedede" stroke="none" color="#dedede" ><path d="M0 2h8v2H0zM0 6h4v2H0zM0 10h2.900v2H0zM0 14h12.200v2H0z"/><path d="M5.700 11.600l.9-2.800 6.500-6.500 1.900 1.900-6.500 6.500zM13.900 1.500l.7-.7c.3-.3.800-.3 1.100 0l.4.400c.3.300.3.800 0 1.100l-.7.700z"/></svg>
<svg style="position:absolute;left:750px;top:508px" width="16" height="16" viewBox="0 0 16 16" fill="#dedede" stroke="none" color="#dedede" ><path d="M2.400 0h2.200v2.200h2.200v2.200H4.600v2.200H2.400V4.400H.2V2.200h2.200z"/><path d="M7.800 3.200h4.400l2.400 2.500V15.200H3.300V7.600" fill="none" stroke="currentColor" stroke-width="1.300"/><path d="M11.600 2.900v3.400h3.300z"/></svg>
<svg style="position:absolute;left:791px;top:508px" width="16" height="16" viewBox="0 0 16 16" fill="#dedede" stroke="none" color="#dedede" ><rect x="0.800" y="1.800" width="9.200" height="7.400" fill="none" stroke="currentColor" stroke-width="1.300"/><path d="M12 6.200h3v7.600H5.800V11" fill="none" stroke="currentColor" stroke-width="1.300"/></svg>
<svg style="position:absolute;left:833px;top:508px" width="16" height="16" viewBox="0 0 16 16" fill="#666" stroke="none" color="#666" ><rect x="0" y="0" width="16" height="16" rx="2"/><path d="M4 4l8 8M12 4l-8 8" stroke="#3c3c3c" stroke-width="2.400"/></svg>
<svg style="position:absolute;left:874px;top:508px" width="16" height="16" viewBox="0 0 16 16" fill="#dedede" stroke="none" color="#dedede" ><path d="M13.300 9.800A6.100 6.100 0 1 1 12.600 4.200" fill="none" stroke="currentColor" stroke-width="2.300"/><path d="M15.200 .9l.3 7-7.100-.8z"/></svg>
<svg style="position:absolute;left:916px;top:508px" width="16" height="16" viewBox="0 0 16 16" fill="#666" stroke="none" color="#666" ><path d="M4.700 0h6.900l3.800 3.800v6H4.700z"/><path d="M11 .5v3.900h3.900z" fill="#3c3c3c" opacity=".5"/><path d="M0 5.700h4V15.800H0z"/><path d="M2.100 10.700l14.300-.6-1.600 5.700H0z" stroke="#3c3c3c" stroke-width=".8"/></svg>
<div style="left:695px;top:530px;width:254px;height:1px;background:#232323"></div>
<div style="left:815px;top:532px;width:3px;height:3px;background:#9a9a9a;border-radius:50%"></div>
<div style="left:820px;top:532px;width:3px;height:3px;background:#9a9a9a;border-radius:50%"></div>
<div style="left:825px;top:532px;width:3px;height:3px;background:#9a9a9a;border-radius:50%"></div>
<div style="left:701px;top:537px;width:34px;height:33px;background:#1e1e1e;border:1px solid #2a2a2a;border-bottom:none"></div>
<div style="left:702px;top:566px;width:32px;height:4px;background:#4d4d4d"></div>
<svg style="position:absolute;left:710px;top:546px" width="16" height="16" viewBox="0 0 16 16" fill="#dedede" stroke="none" color="#dedede" ><path d="M4.100 0h11.600l-4.100 3.400H0zM4.100 6.200h11.600l-4.100 3.400H0zM4.100 12.300h11.600l-4.100 3.400H0z"/></svg>
<div style="left:739px;top:537px;width:34px;height:33px;border:1px solid #2d2d2d;border-bottom:none"></div>
<svg style="position:absolute;left:748px;top:546px" width="16" height="16" viewBox="0 0 16 16" fill="#dedede" stroke="none" color="#dedede" ><rect x="0.500" y="0.500" width="15" height="15" fill="none" stroke="currentColor" stroke-width="1"/><rect x="3.100" y="2.300" width="2" height="11.400" fill="#8a8a8a"/><rect x="7.500" y="2.300" width="2" height="11.400"/><rect x="11.600" y="2.300" width="2" height="11.400"/></svg>
<div style="left:777px;top:537px;width:34px;height:33px;border:1px solid #2d2d2d;border-bottom:none"></div>
<svg style="position:absolute;left:786px;top:546px" width="16" height="16" viewBox="0 0 16 16" fill="#dedede" stroke="none" color="#dedede" ><path d="M0 4.300h3.200v3H0zM12.800 4.300H16v3h-3.200zM3 5.100h10v1.300H3z"/><path d="M1.800 13.500C3 9.700 5.500 7.600 8 7.600s5 2.100 6.200 5.900" fill="none" stroke="currentColor" stroke-width="2"/></svg>
<svg style="position:absolute;left:932px;top:548px" width="10" height="10" viewBox="0 0 10 10" fill="#dedede" stroke="none" color="#dedede" ><rect x="0.500" y="0.500" width="9" height="9" fill="#2a2a2a" stroke="currentColor" stroke-width="1"/><path d="M2.600 5L7.400 2.200v5.600z"/></svg>
<div style="left:695px;top:570px;width:254px;height:1px;background:#232323"></div>
<div class="f" style="left:697px;top:573px;width:210px;height:26px;"></div>
<div class="t" style="left:702px;top:577px;color:#8c8c8c">模式</div>
<div class="t" style="left:857px;top:577px;color:#8c8c8c">正常</div>
<svg style="position:absolute;left:890px;top:584px" width="10" height="6" viewBox="0 0 10 6" fill="#8c8c8c" stroke="none" color="#8c8c8c" ><path d="M0.900 0.900L5 5l4.100-4.100" fill="none" stroke="currentColor" stroke-width="1.900" stroke-linecap="round" stroke-linejoin="round"/></svg>
<div class="f" style="left:909px;top:573px;width:38px;height:26px;"></div>
<svg style="position:absolute;left:912px;top:578px" width="16" height="16" viewBox="0 0 16 16" fill="#8c8c8c" stroke="none" color="#8c8c8c" ><path d="M4.050 5.230A5.350 5.350 0 1 1 8.330 13.030" fill="none" stroke="currentColor" stroke-width="1.900"/><path d="M-.1 6.100l8 .2-4 3.700z"/><circle cx="4.500" cy="13.500" r="2.600"/></svg>
<svg style="position:absolute;left:931px;top:584px" width="10" height="6" viewBox="0 0 10 6" fill="#8c8c8c" stroke="none" color="#8c8c8c" ><path d="M0.900 0.900L5 5l4.100-4.100" fill="none" stroke="currentColor" stroke-width="1.900" stroke-linecap="round" stroke-linejoin="round"/></svg>
<div class="f" style="left:697px;top:601px;width:250px;height:26px;overflow:hidden"><div style="left:0;top:0;height:24px;width:206px;background:#696969"></div><div class="btn" style="right:21px;top:0;width:21px;height:24px"></div><div class="btn" style="right:0;top:0;width:21px;height:24px"></div></div>
<div class="t" style="left:704px;top:605px;color:#c6c6c6">不透明度</div>
<div class="t" style="right:46px;top:604px;color:#dddddd">100.0</div>
<svg style="position:absolute;left:904px;top:601px" width="43" height="26" viewBox="0 0 43 26"><rect x="4.0" y="11.9" width="14" height="2.3" rx="1.1" fill="#787878"/><rect x="25.0" y="11.9" width="14" height="2.3" rx="1.1" fill="#787878"/><rect x="30.85" y="6" width="2.3" height="14" rx="1.1" fill="#787878"/></svg>
<div style="left:697px;top:631px;width:250px;height:203px;background:#242424;border:1px solid #1c1c1c"></div>
<div style="left:698px;top:632px;width:248px;height:38px;background:#3c3c3c;border:1px solid #4e4e4e"></div>
<div style="left:727px;top:632px;width:1px;height:38px;background:#4e4e4e"></div>
<div style="left:757px;top:632px;width:1px;height:38px;background:#4e4e4e"></div>
<div style="left:787px;top:632px;width:1px;height:38px;background:#4e4e4e"></div>
<svg style="position:absolute;left:705px;top:643px" width="16" height="16" viewBox="0 0 16 16" fill="#dedede" stroke="none" color="#dedede" ><path d="M0.300 8C2.200 4.800 5 3.200 8 3.200s5.800 1.600 7.700 4.800C13.800 11.200 11 12.800 8 12.800S2.200 11.200 0.300 8z"/><path d="M2.300 8C3.800 6 5.800 4.900 8 4.900s4.200 1.100 5.700 3.100C12.200 10 10.200 11.100 8 11.100S3.800 10 2.300 8z" fill="#3c3c3c"/><circle cx="8" cy="7.800" r="2.700"/><circle cx="6.900" cy="6.700" r="1" fill="#3c3c3c"/></svg>
<svg style="position:absolute;left:735px;top:643px" width="16" height="16" viewBox="0 0 16 16" fill="#dedede" stroke="none" color="#dedede" ><path d="M1.700 7.500h12.400v7.500H1.700z"/><path d="M4.600 8V5.200c0-2 1.400-3.400 3.300-3.400s3.300 1.400 3.300 3.400V8" fill="none" stroke="currentColor" stroke-width="1.800"/></svg>
<svg style="position:absolute;left:766px;top:643px" width="16" height="16" viewBox="0 0 16 16" fill="#dedede" stroke="none" color="#dedede" ><path d="M7.200 3c-1.800-.6-3 .3-3.200 2.200L3.200 12.500c-.2 1.500-1 2-2.200 1.600" fill="none" stroke="currentColor" stroke-width="1.700" stroke-linecap="round"/><path d="M1.300 7.600h5" stroke="currentColor" stroke-width="1.600"/><path d="M9.300 7.800l5.200 5.400M14.500 7.800l-5.200 5.400" stroke="currentColor" stroke-width="2.100"/></svg>
<svg style="position:absolute;left:919px;top:642px" width="16" height="16" viewBox="0 0 16 16" fill="#dedede" stroke="none" color="#dedede" ><circle cx="6.700" cy="6.700" r="5" fill="none" stroke="currentColor" stroke-width="1.900"/><path d="M10.500 10.500l4.300 4.300" stroke="currentColor" stroke-width="2.200" stroke-linecap="round"/></svg>
<svg style="position:absolute;left:701px;top:841px" width="16" height="16" viewBox="0 0 16 16" fill="#dedede" stroke="none" color="#dedede" ><path d="M2.400 0h2.200v2.200h2.200v2.200H4.600v2.200H2.400V4.400H.2V2.200h2.200z"/><path d="M7.800 3.200h4.400l2.400 2.500V15.200H3.300V7.600" fill="none" stroke="currentColor" stroke-width="1.300"/><path d="M11.600 2.900v3.400h3.300z"/></svg>
<svg style="position:absolute;left:729px;top:841px" width="16" height="16" viewBox="0 0 16 16" fill="#dedede" stroke="none" color="#dedede" ><path d="M0 0.800h5.800l1.400 2H16V16H0z"/><path d="M2.300 5.600h11.500v8.200H2.300z" fill="#3c3c3c" opacity="0"/><path d="M7 6h2.200v2.900h2.900v2.200H9.200V14H7v-2.900H4.100V8.900H7z" fill="#3c3c3c"/></svg>
<svg style="position:absolute;left:756px;top:841px" width="16" height="16" viewBox="0 0 16 16" fill="#dedede" stroke="none" color="#dedede" ><path d="M1.800 11.500L8 5.300l6.200 6.200" fill="none" stroke="currentColor" stroke-width="2.200" stroke-linecap="round" stroke-linejoin="round"/></svg>
<svg style="position:absolute;left:784px;top:841px" width="16" height="16" viewBox="0 0 16 16" fill="#dedede" stroke="none" color="#dedede" ><path d="M1.800 5.300L8 11.500l6.200-6.200" fill="none" stroke="currentColor" stroke-width="2.200" stroke-linecap="round" stroke-linejoin="round"/></svg>
<svg style="position:absolute;left:812px;top:841px" width="16" height="16" viewBox="0 0 16 16" fill="#dedede" stroke="none" color="#dedede" ><rect x="0.800" y="1.800" width="9.200" height="7.400" fill="none" stroke="currentColor" stroke-width="1.300"/><path d="M12 6.200h3v7.600H5.800V11" fill="none" stroke="currentColor" stroke-width="1.300"/></svg>
<svg style="position:absolute;left:840px;top:841px" width="16" height="16" viewBox="0 0 16 16" fill="#dedede" stroke="none" color="#dedede" ><circle cx="8" cy="2.600" r="1.900" fill="none" stroke="currentColor" stroke-width="1.400"/><path d="M8 4.500v10M4.600 7.200h6.800" stroke="currentColor" stroke-width="1.700"/><path d="M2.200 10.300c.6 2.600 2.800 4.300 5.800 4.300s5.200-1.700 5.800-4.300" fill="none" stroke="currentColor" stroke-width="1.700"/><path d="M0.500 11.800l1.300-3.500 2.700 2.500zM15.500 11.800l-1.300-3.500-2.700 2.500z"/></svg>
<svg style="position:absolute;left:868px;top:841px" width="16" height="16" viewBox="0 0 16 16" fill="#dedede" stroke="none" color="#dedede" ><path d="M2.600 3.200h7.200L7.800 5.200H0.600zM2.600 7.200h7.200L7.800 9.200H0.600zM2.600 11.200h7.200l-2 2H0.600z"/><path d="M12.300 2h1.600v8h2.100l-2.900 4-2.900-4h2.100z"/></svg>
<svg style="position:absolute;left:895px;top:841px" width="16" height="16" viewBox="0 0 16 16" fill="#dedede" stroke="none" color="#dedede" ><path d="M4.600 0h7.800v4.800c0 2.400-1.700 4.400-3.900 4.400S4.600 7.200 4.600 4.800z"/><path d="M5.800 2.200l2.200.5v.8H5.800zM11.200 2.200L9 2.700v.8h2.200zM6.500 5.300h4l-2 2z" fill="#3c3c3c"/><path d="M4.500 9.500h11.300l-3.800 5.300H0.300z"/></svg>
<svg style="position:absolute;left:923px;top:841px" width="16" height="16" viewBox="0 0 16 16" fill="#dedede" stroke="none" color="#dedede" ><rect x="0" y="0" width="16" height="16" rx="2"/><path d="M4 4l8 8M12 4l-8 8" stroke="#3c3c3c" stroke-width="2.400"/></svg>
</body></html>
